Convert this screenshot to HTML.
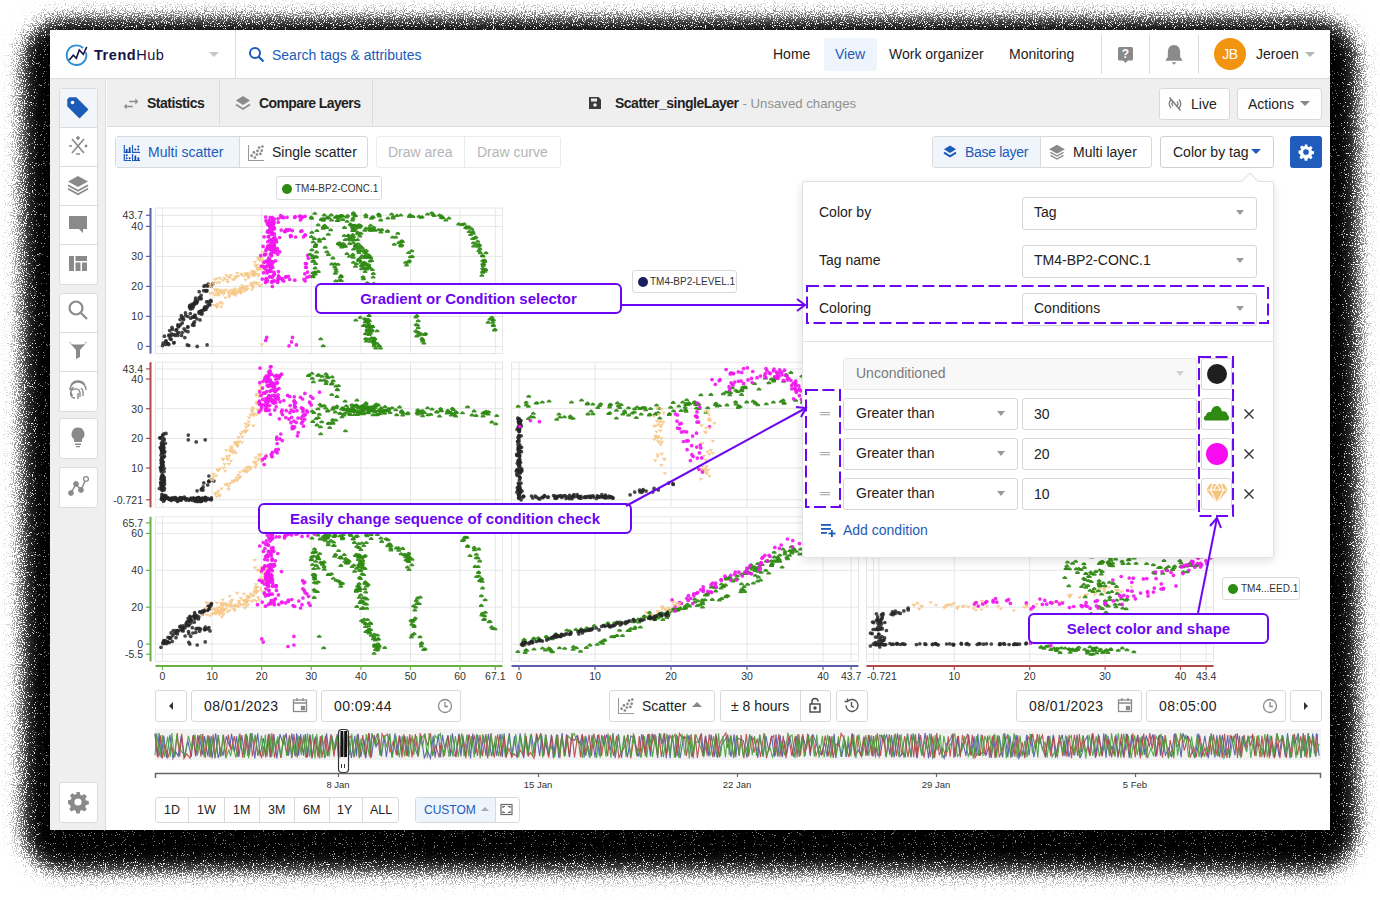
<!DOCTYPE html>
<html><head><meta charset="utf-8">
<style>
*{box-sizing:border-box;margin:0;padding:0}
html,body{width:1380px;height:900px;overflow:hidden;background:#fff;font-family:"Liberation Sans",sans-serif;color:#222}
.a{position:absolute}
#win{position:absolute;left:50px;top:30px;width:1280px;height:800px;background:#fff}
#shd{position:absolute;left:19px;top:13px;width:1342px;height:866px;border-radius:44px;background:rgba(0,0,0,.88);filter:blur(10px)}
.t{position:absolute;white-space:nowrap;line-height:1}
.btn{position:absolute;border:1px solid #d9d9d9;border-radius:3px;background:#fff}
.sb{position:absolute;left:59px;width:39px;border:1px solid #dcdcdc;border-radius:3px;background:#fff}
.sb div{height:39px;border-bottom:1px solid #dcdcdc;position:relative}
.sb div:last-child{border-bottom:none}
.sel{position:absolute;border:1px solid #d6d6d6;border-radius:3px;background:#fff}
.car{position:absolute;width:0;height:0;border-left:4px solid transparent;border-right:4px solid transparent;border-top:5px solid #9a9a9a}
.pur{color:#6c06f2;font-weight:bold}
.abox{position:absolute;border:2px solid #6c06f2;border-radius:6px;background:#fff}
.dash{position:absolute;border:2px dashed #6c06f2}
.chip{position:absolute;border:1px solid #dadada;border-radius:3px;background:#fff;font-size:10px;color:#333}
</style></head><body>
<svg class="a" style="left:0;top:0" width="1380" height="900">
<defs><filter id="dith" x="0" y="0" width="1380" height="900" filterUnits="userSpaceOnUse" color-interpolation-filters="sRGB">
<feGaussianBlur in="SourceGraphic" stdDeviation="12" result="bl"/>
<feTurbulence type="fractalNoise" baseFrequency="0.9" numOctaves="1" seed="3" result="nz"/>
<feColorMatrix in="nz" type="matrix" values="0 0 0 0 0  0 0 0 0 0  0 0 0 0 0  2.4 0 0 0 -0.7" result="na"/>
<feComposite in="bl" in2="na" operator="arithmetic" k1="0" k2="5" k3="-5" k4="0.5" result="th"/>
<feColorMatrix in="th" type="matrix" values="0 0 0 0 0  0 0 0 0 0  0 0 0 0 0  0 0 0 1 0" result="th2"/>
<feComposite in="th2" in2="bl" operator="in"/>
</filter></defs>
<rect x="18" y="14" width="1344" height="862" rx="46" fill="#000" filter="url(#dith)"/>
</svg><div id="win"></div>

<!-- header -->
<div class="a" style="left:50px;top:78px;width:1280px;height:1px;background:#dcdcdc"></div>
<div class="a" style="left:235px;top:30px;width:1px;height:49px;background:#dcdcdc"></div>
<svg class="a" style="left:64px;top:43px" width="26" height="26" viewBox="0 0 26 26">
 <path d="M21.82 9.17A9.8 9.8 0 1 1 19.06 4.92" fill="none" stroke="#2a8fd8" stroke-width="1.9"/>
 <path d="M5.3 17L9.3 12.3L12.3 15.3L15.3 7L19.3 11.3L22.7 4" fill="none" stroke="#15124a" stroke-width="1.6"/>
</svg>
<div class="t" style="left:94px;top:48px;font-size:14.5px;color:#15124a;letter-spacing:0.55px"><b>Trend</b>Hub</div>
<div class="car" style="left:209px;top:52px;border-left-width:5px;border-right-width:5px;border-top-width:5px;border-top-color:#c8c8c8"></div>
<svg class="a" style="left:248px;top:46px" width="18" height="18" viewBox="0 0 18 18"><circle cx="7" cy="7" r="5" fill="none" stroke="#1c5bb8" stroke-width="2"/><path d="M10.5 10.5 L15.5 15.5" stroke="#1c5bb8" stroke-width="2.2"/></svg>
<div class="t" style="left:272px;top:48px;font-size:14px;color:#1c5bb8">Search tags &amp; attributes</div>

<div class="a" style="left:824px;top:38px;width:53px;height:33px;background:#eef4fb;border-radius:3px"></div>
<div class="t" style="left:773px;top:47px;font-size:14px;color:#222">Home</div>
<div class="t" style="left:835px;top:47px;font-size:14px;color:#1c5bb8">View</div>
<div class="t" style="left:889px;top:47px;font-size:14px;color:#222">Work organizer</div>
<div class="t" style="left:1009px;top:47px;font-size:14px;color:#222">Monitoring</div>
<div class="a" style="left:1101px;top:35px;width:1px;height:39px;background:#dcdcdc"></div>
<div class="a" style="left:1149px;top:35px;width:1px;height:39px;background:#dcdcdc"></div>
<div class="a" style="left:1198px;top:35px;width:1px;height:39px;background:#dcdcdc"></div>
<svg class="a" style="left:1117px;top:46px" width="17" height="18" viewBox="0 0 17 18"><path d="M2.5 1h12a1.5 1.5 0 0 1 1.5 1.5v10.5a1.5 1.5 0 0 1-1.5 1.5H11l-2.5 2.5L6 14.5H2.5A1.5 1.5 0 0 1 1 13V2.5A1.5 1.5 0 0 1 2.5 1z" fill="#8a8a8a"/><text x="8.5" y="12.3" font-size="12" font-weight="bold" fill="#fff" text-anchor="middle" font-family='"Liberation Sans",sans-serif'>?</text></svg>
<svg class="a" style="left:1164px;top:44px" width="20" height="22" viewBox="0 0 18 20"><path d="M9 1c-3.5 0-5.6 2.7-5.6 6.3v4.5L1 15.2h16l-2.4-3.4V7.3C14.6 3.7 12.5 1 9 1z" fill="#8a8a8a"/><path d="M6.8 16.6h4.4L9 18.8z" fill="#8a8a8a"/></svg>
<div class="a" style="left:1214px;top:38px;width:32px;height:32px;border-radius:50%;background:#f39410"></div>
<div class="t" style="left:1214px;top:47px;width:32px;text-align:center;font-size:14px;color:#fff;letter-spacing:-0.3px">JB</div>
<div class="t" style="left:1256px;top:47px;font-size:14px;color:#222">Jeroen</div>
<div class="car" style="left:1305px;top:52px;border-left-width:5px;border-right-width:5px;border-top-color:#b5b5b5"></div>

<!-- sidebar -->
<div class="a" style="left:50px;top:79px;width:56px;height:751px;background:#efefef;border-right:1px solid #dcdcdc"></div>
<div class="sb" style="top:88px"><div style="background:#f2f6fb"></div><div></div><div></div><div></div><div></div></div>
<div class="sb" style="top:293px"><div></div><div></div><div></div></div>
<div class="sb" style="top:418px"><div></div></div>
<div class="sb" style="top:467px"><div></div></div>
<div class="sb" style="top:782px"><div></div></div>
<svg class="a" style="left:65px;top:95px" width="26" height="26" viewBox="0 0 26 26"><path d="M3 4.5 L3 11 L14.5 22.5 L22.5 14.5 L11 3 L4.5 3 Z" fill="#1c5bb8" stroke="#1c5bb8" stroke-width="1.5" stroke-linejoin="round"/><circle cx="7.5" cy="7.5" r="1.8" fill="#fff"/></svg>
<svg class="a" style="left:66px;top:134px" width="24" height="24" viewBox="0 0 24 24" stroke="#8a8a8a" stroke-width="1.6" fill="none"><path d="M6 5 L18 19 M18 5 L6 19"/><path d="M12 2v4M10 4h4M3 12h3M19 11l2 2M21 11l-2 2M10 20h4"/></svg>
<svg class="a" style="left:66px;top:173px" width="24" height="24" viewBox="0 0 24 24" fill="#8a8a8a"><path d="M12 3 L22 8.5 L12 14 L2 8.5Z"/><path d="M2 12.2 L12 17.7 L22 12.2" fill="none" stroke="#8a8a8a" stroke-width="1.8"/><path d="M2 15.8 L12 21.3 L22 15.8" fill="none" stroke="#8a8a8a" stroke-width="1.8"/></svg>
<svg class="a" style="left:66px;top:212px" width="24" height="24" viewBox="0 0 24 24" fill="#8a8a8a"><path d="M3 4h18v13h-4v4l-4-4H3z"/></svg>
<svg class="a" style="left:66px;top:251px" width="24" height="24" viewBox="0 0 24 24" fill="#8a8a8a"><path d="M3 5h5v15H3zM9.5 5H21v5H9.5zM9.5 11.5h5V20h-5zM16 11.5h5V20h-5z"/></svg>
<svg class="a" style="left:66px;top:298px" width="24" height="24" viewBox="0 0 24 24" fill="none" stroke="#8a8a8a" stroke-width="2.2"><circle cx="10" cy="10" r="6.5"/><path d="M15 15l6 6"/></svg>
<svg class="a" style="left:66px;top:338px" width="24" height="24" viewBox="0 0 24 24" fill="#8a8a8a"><path d="M3 4h18l-7 8v7l-4 2v-9z"/><ellipse cx="12" cy="5" rx="8" ry="1.6" fill="#fff"/></svg>
<svg class="a" style="left:66px;top:377px" width="24" height="24" viewBox="0 0 24 24" fill="none" stroke="#8a8a8a" stroke-width="1.4"><path d="M5 8a8 8 0 0 1 14 0M4 13a8 8 0 0 1 16 0M6.5 19a6 6 0 0 1 1-9M9 21a4 4 0 0 1 0-9 4 4 0 0 1 5 4v4M12 22v-6M17 19v-4a5 5 0 0 0-2-4"/></svg>
<svg class="a" style="left:66px;top:425px" width="24" height="24" viewBox="0 0 24 24" fill="#8a8a8a"><path d="M12 2.5a6.5 6.5 0 0 0-4 11.6V17h8v-2.9A6.5 6.5 0 0 0 12 2.5z"/><path d="M9 18.5h6v1.5H9zM10 21h4v1.2h-4z"/></svg>
<svg class="a" style="left:66px;top:474px" width="24" height="24" viewBox="0 0 24 24" fill="#8a8a8a" stroke="#8a8a8a"><circle cx="5" cy="19" r="2.4"/><circle cx="10" cy="10" r="2.4"/><circle cx="15" cy="16" r="2.4"/><circle cx="20" cy="5" r="2.4" fill="#fff" stroke-width="1.3"/><path d="M5 19L10 10L15 16L19 7" fill="none" stroke-width="1.5"/></svg>
<svg class="a" style="left:66px;top:790px" width="24" height="24" viewBox="0 0 24 24"><path fill="#8a8a8a" d="M10.3 2h3.4l.5 2.8 1.9.8 2.3-1.6 2.4 2.4-1.6 2.3.8 1.9 2.8.5v3.4l-2.8.5-.8 1.9 1.6 2.3-2.4 2.4-2.3-1.6-1.9.8-.5 2.8h-3.4l-.5-2.8-1.9-.8-2.3 1.6-2.4-2.4 1.6-2.3-.8-1.9L2 13.7v-3.4l2.8-.5.8-1.9L4 5.6 6.4 3.2l2.3 1.6 1.9-.8z"/><circle cx="12" cy="12" r="3.6" fill="#fff"/></svg>

<!-- tab bar -->
<div class="a" style="left:107px;top:79px;width:1223px;height:48px;background:#efefef;border-bottom:1px solid #dcdcdc"></div>
<div class="a" style="left:219px;top:79px;width:1px;height:48px;background:#dcdcdc"></div>
<div class="a" style="left:372px;top:79px;width:1px;height:48px;background:#dcdcdc"></div>
<svg class="a" style="left:122px;top:96px" width="18" height="15" viewBox="0 0 18 15"><path d="M7.2 5.5H14M10.7 10.5H4" stroke="#8a8a8a" stroke-width="1.6"/><path d="M16.3 5.5L13.3 2.4V8.6ZM1.9 10.5L4.6 7.4V13.6Z" fill="#8a8a8a"/></svg>
<div class="t" style="left:147px;top:96px;font-size:14px;font-weight:bold;color:#222;letter-spacing:-0.5px">Statistics</div>
<svg class="a" style="left:235px;top:95px" width="16" height="17" viewBox="0 0 16 17"><path d="M8 1l7 4.5-7 4.5-7-4.5z" fill="#8a8a8a"/><path d="M1 9.5l7 4.5 7-4.5" fill="none" stroke="#8a8a8a" stroke-width="1.6"/></svg>
<div class="t" style="left:259px;top:96px;font-size:14px;font-weight:bold;color:#222;letter-spacing:-0.6px">Compare Layers</div>
<svg class="a" style="left:588px;top:96px" width="14" height="14" viewBox="0 0 14 14"><path d="M1 1h9.5L13 3.5V13H1z" fill="#3a3a3a"/><rect x="3" y="2.5" width="6" height="3" fill="#efefef"/><circle cx="7" cy="9" r="1.8" fill="#efefef"/></svg>
<div class="t" style="left:615px;top:96px;font-size:14px;color:#222"><b style="letter-spacing:-0.5px">Scatter_singleLayer</b> <span style="color:#8f8f8f;font-size:13.2px">- Unsaved changes</span></div>
<div class="btn" style="left:1159px;top:88px;width:71px;height:32px"></div>
<svg class="a" style="left:1167px;top:96px" width="16" height="16" viewBox="0 0 16 16" fill="none" stroke="#777" stroke-width="1.3"><path d="M4 3.5a6 6 0 0 0 0 8.5M12 3.5a6 6 0 0 1 0 8.5M6 5.5a3 3 0 0 0 0 4.5M10 5.5a3 3 0 0 1 0 4.5M2.5 1.5l11 13"/></svg>
<div class="t" style="left:1191px;top:97px;font-size:14px;color:#222">Live</div>
<div class="btn" style="left:1237px;top:88px;width:85px;height:32px"></div>
<div class="t" style="left:1248px;top:97px;font-size:14px;color:#222">Actions</div>
<div class="car" style="left:1300px;top:101px;border-left-width:5px;border-right-width:5px;border-top-color:#888"></div>

<!-- toolbar -->
<div class="btn" style="left:115px;top:136px;width:253px;height:32px"></div>
<div class="a" style="left:116px;top:137px;width:124px;height:30px;background:#f0f5fb;border-right:1px solid #d9d9d9"></div>
<svg class="a" style="left:123px;top:144px" width="18" height="18" viewBox="0 0 18 18"><path d="M1.3 1V8.3H8M9.5 1V8.3H17M1.3 10V16.5H8M9.5 10V16.5H17" fill="none" stroke="#1c5bb8" stroke-width="1.2"/><g fill="#0d44ad"><rect x="2.8" y="5" width="1.7" height="3.3"/><rect x="5.8" y="3.3" width="1.7" height="5"/><circle cx="12.3" cy="5.5" r="1"/><circle cx="15.3" cy="5.5" r="1"/><circle cx="15.3" cy="2.5" r="1"/><circle cx="3.7" cy="11.3" r="1"/><circle cx="3.7" cy="14.2" r="1"/><circle cx="6.6" cy="14.2" r="1"/><rect x="11.5" y="11.5" width="1.7" height="5"/><rect x="14.5" y="13.3" width="1.7" height="3.2"/></g></svg>
<div class="t" style="left:148px;top:145px;font-size:14px;color:#1c5bb8">Multi scatter</div>
<svg class="a" style="left:248px;top:144px" width="18" height="18" viewBox="0 0 18 18"><path d="M0.5 1V16.5H16" fill="none" stroke="#9a9a9a" stroke-width="1.1"/><g fill="#8a8a8a"><circle cx="3.6" cy="11.7" r="1.35"/><circle cx="6.9" cy="13.5" r="1.35"/><circle cx="5.9" cy="8.4" r="1.35"/><circle cx="8.9" cy="10.5" r="1.35"/><circle cx="9.5" cy="6.9" r="1.35"/><circle cx="12.4" cy="9.9" r="1.35"/><circle cx="11.1" cy="3.6" r="1.35"/><circle cx="13.7" cy="6.7" r="1.35"/><circle cx="14.4" cy="2.5" r="1.35"/></g></svg>
<div class="t" style="left:272px;top:145px;font-size:14px;color:#222">Single scatter</div>
<div class="btn" style="left:376px;top:136px;width:185px;height:32px;border-color:#ebebeb"></div>
<div class="a" style="left:464px;top:137px;width:1px;height:30px;background:#ebebeb"></div>
<div class="t" style="left:388px;top:145px;font-size:14px;color:#b5b5b5">Draw area</div>
<div class="t" style="left:477px;top:145px;font-size:14px;color:#b5b5b5">Draw curve</div>

<div class="btn" style="left:932px;top:136px;width:220px;height:32px"></div>
<div class="a" style="left:933px;top:137px;width:108px;height:30px;background:#f0f5fb;border-right:1px solid #d9d9d9"></div>
<svg class="a" style="left:942px;top:144px" width="16" height="16" viewBox="0 0 16 16"><path d="M8 1.5l6 3.8-6 3.8-6-3.8z" fill="#1c5bb8"/><path d="M2 8.6l6 3.8 6-3.8" fill="none" stroke="#1c5bb8" stroke-width="2"/></svg>
<div class="t" style="left:965px;top:145px;font-size:14px;color:#1c5bb8;letter-spacing:-0.3px">Base layer</div>
<svg class="a" style="left:1049px;top:144px" width="16" height="17" viewBox="0 0 16 17" fill="none" stroke="#8a8a8a" stroke-width="1.4"><path d="M8 1.5l6.5 3.8L8 9 1.5 5.3z" fill="#8a8a8a"/><path d="M1.5 8.3L8 12l6.5-3.7M1.5 11.3L8 15l6.5-3.7"/></svg>
<div class="t" style="left:1073px;top:145px;font-size:14px;color:#222">Multi layer</div>
<div class="btn" style="left:1160px;top:136px;width:114px;height:32px;border-color:#cfcfcf"></div>
<div class="t" style="left:1173px;top:145px;font-size:14px;color:#222">Color by tag</div>
<div class="car" style="left:1251px;top:149px;border-left-width:5px;border-right-width:5px;border-top-color:#1c5bb8"></div>
<div class="a" style="left:1290px;top:136px;width:32px;height:32px;background:#1f5cbc;border-radius:3px"></div>
<svg class="a" style="left:1297px;top:143px" width="18" height="18" viewBox="0 0 24 24"><path fill="#fff" d="M10.3 2h3.4l.5 2.8 1.9.8 2.3-1.6 2.4 2.4-1.6 2.3.8 1.9 2.8.5v3.4l-2.8.5-.8 1.9 1.6 2.3-2.4 2.4-2.3-1.6-1.9.8-.5 2.8h-3.4l-.5-2.8-1.9-.8-2.3 1.6-2.4-2.4 1.6-2.3-.8-1.9L2 13.7v-3.4l2.8-.5.8-1.9L4 5.6 6.4 3.2l2.3 1.6 1.9-.8z"/><circle cx="12" cy="12" r="3.8" fill="#1f5cbc"/></svg>

<!-- plots -->
<div class="chip" style="left:276px;top:176px;width:106px;height:24px"><span class="a" style="left:5px;top:7px;width:10px;height:10px;border-radius:50%;background:#2f8a12"></span><span class="t" style="left:18px;top:7px">TM4-BP2-CONC.1</span></div>
<div class="chip" style="left:632px;top:270px;width:105px;height:23px"><span class="a" style="left:5px;top:6px;width:10px;height:10px;border-radius:50%;background:#1b1f5e"></span><span class="t" style="left:17px;top:6px">TM4-BP2-LEVEL.1</span></div>
<div class="chip" style="left:1222px;top:577px;width:78px;height:23px"><span class="a" style="left:5px;top:6px;width:10px;height:10px;border-radius:50%;background:#2f8a12"></span><span class="t" style="left:18px;top:6px">TM4...EED.1</span></div>
<svg class="a" style="left:0;top:0" width="1380" height="900" viewBox="0 0 1380 900">
<rect x="155.5" y="208" width="347.0" height="145.60000000000002" fill="none" stroke="#e6e6e6" stroke-width="1"/>
<g stroke="#e6e6e6" stroke-width="1"><line x1="162.5" y1="208" x2="162.5" y2="353.6"/><line x1="212.1" y1="208" x2="212.1" y2="353.6"/><line x1="261.7" y1="208" x2="261.7" y2="353.6"/><line x1="311.3" y1="208" x2="311.3" y2="353.6"/><line x1="360.9" y1="208" x2="360.9" y2="353.6"/><line x1="410.5" y1="208" x2="410.5" y2="353.6"/><line x1="460.1" y1="208" x2="460.1" y2="353.6"/><line x1="495.3" y1="208" x2="495.3" y2="353.6"/><line x1="155.5" y1="346.4" x2="502.5" y2="346.4"/><line x1="155.5" y1="316.4" x2="502.5" y2="316.4"/><line x1="155.5" y1="286.4" x2="502.5" y2="286.4"/><line x1="155.5" y1="256.4" x2="502.5" y2="256.4"/><line x1="155.5" y1="226.4" x2="502.5" y2="226.4"/><line x1="155.5" y1="215.3" x2="502.5" y2="215.3"/></g>
<rect x="155.5" y="362.2" width="347.0" height="145.2" fill="none" stroke="#e6e6e6" stroke-width="1"/>
<g stroke="#e6e6e6" stroke-width="1"><line x1="162.5" y1="362.2" x2="162.5" y2="507.4"/><line x1="212.1" y1="362.2" x2="212.1" y2="507.4"/><line x1="261.7" y1="362.2" x2="261.7" y2="507.4"/><line x1="311.3" y1="362.2" x2="311.3" y2="507.4"/><line x1="360.9" y1="362.2" x2="360.9" y2="507.4"/><line x1="410.5" y1="362.2" x2="410.5" y2="507.4"/><line x1="460.1" y1="362.2" x2="460.1" y2="507.4"/><line x1="495.3" y1="362.2" x2="495.3" y2="507.4"/><line x1="155.5" y1="499.8" x2="502.5" y2="499.8"/><line x1="155.5" y1="468.0" x2="502.5" y2="468.0"/><line x1="155.5" y1="438.4" x2="502.5" y2="438.4"/><line x1="155.5" y1="408.7" x2="502.5" y2="408.7"/><line x1="155.5" y1="379.0" x2="502.5" y2="379.0"/><line x1="155.5" y1="368.9" x2="502.5" y2="368.9"/></g>
<rect x="511.5" y="362.2" width="347.0" height="145.2" fill="none" stroke="#e6e6e6" stroke-width="1"/>
<g stroke="#e6e6e6" stroke-width="1"><line x1="519.0" y1="362.2" x2="519.0" y2="507.4"/><line x1="595.0" y1="362.2" x2="595.0" y2="507.4"/><line x1="671.0" y1="362.2" x2="671.0" y2="507.4"/><line x1="747.0" y1="362.2" x2="747.0" y2="507.4"/><line x1="823.0" y1="362.2" x2="823.0" y2="507.4"/><line x1="851.1" y1="362.2" x2="851.1" y2="507.4"/><line x1="511.5" y1="499.8" x2="858.5" y2="499.8"/><line x1="511.5" y1="468.0" x2="858.5" y2="468.0"/><line x1="511.5" y1="438.4" x2="858.5" y2="438.4"/><line x1="511.5" y1="408.7" x2="858.5" y2="408.7"/><line x1="511.5" y1="379.0" x2="858.5" y2="379.0"/><line x1="511.5" y1="368.9" x2="858.5" y2="368.9"/></g>
<rect x="155.5" y="516.8" width="347.0" height="144.60000000000002" fill="none" stroke="#e6e6e6" stroke-width="1"/>
<g stroke="#e6e6e6" stroke-width="1"><line x1="162.5" y1="516.8" x2="162.5" y2="661.4"/><line x1="212.1" y1="516.8" x2="212.1" y2="661.4"/><line x1="261.7" y1="516.8" x2="261.7" y2="661.4"/><line x1="311.3" y1="516.8" x2="311.3" y2="661.4"/><line x1="360.9" y1="516.8" x2="360.9" y2="661.4"/><line x1="410.5" y1="516.8" x2="410.5" y2="661.4"/><line x1="460.1" y1="516.8" x2="460.1" y2="661.4"/><line x1="495.3" y1="516.8" x2="495.3" y2="661.4"/><line x1="155.5" y1="654.2" x2="502.5" y2="654.2"/><line x1="155.5" y1="644.1" x2="502.5" y2="644.1"/><line x1="155.5" y1="607.2" x2="502.5" y2="607.2"/><line x1="155.5" y1="570.3" x2="502.5" y2="570.3"/><line x1="155.5" y1="533.4" x2="502.5" y2="533.4"/><line x1="155.5" y1="522.9" x2="502.5" y2="522.9"/></g>
<rect x="511.5" y="516.8" width="347.0" height="144.60000000000002" fill="none" stroke="#e6e6e6" stroke-width="1"/>
<g stroke="#e6e6e6" stroke-width="1"><line x1="519.0" y1="516.8" x2="519.0" y2="661.4"/><line x1="595.0" y1="516.8" x2="595.0" y2="661.4"/><line x1="671.0" y1="516.8" x2="671.0" y2="661.4"/><line x1="747.0" y1="516.8" x2="747.0" y2="661.4"/><line x1="823.0" y1="516.8" x2="823.0" y2="661.4"/><line x1="851.1" y1="516.8" x2="851.1" y2="661.4"/><line x1="511.5" y1="654.2" x2="858.5" y2="654.2"/><line x1="511.5" y1="644.1" x2="858.5" y2="644.1"/><line x1="511.5" y1="607.2" x2="858.5" y2="607.2"/><line x1="511.5" y1="570.3" x2="858.5" y2="570.3"/><line x1="511.5" y1="533.4" x2="858.5" y2="533.4"/><line x1="511.5" y1="522.9" x2="858.5" y2="522.9"/></g>
<rect x="866.5" y="516.8" width="347.0" height="144.60000000000002" fill="none" stroke="#e6e6e6" stroke-width="1"/>
<g stroke="#e6e6e6" stroke-width="1"><line x1="873.5" y1="516.8" x2="873.5" y2="661.4"/><line x1="878.9" y1="516.8" x2="878.9" y2="661.4"/><line x1="954.3" y1="516.8" x2="954.3" y2="661.4"/><line x1="1029.7" y1="516.8" x2="1029.7" y2="661.4"/><line x1="1105.1" y1="516.8" x2="1105.1" y2="661.4"/><line x1="1180.5" y1="516.8" x2="1180.5" y2="661.4"/><line x1="1206.1" y1="516.8" x2="1206.1" y2="661.4"/><line x1="866.5" y1="654.2" x2="1213.5" y2="654.2"/><line x1="866.5" y1="644.1" x2="1213.5" y2="644.1"/><line x1="866.5" y1="607.2" x2="1213.5" y2="607.2"/><line x1="866.5" y1="570.3" x2="1213.5" y2="570.3"/><line x1="866.5" y1="533.4" x2="1213.5" y2="533.4"/><line x1="866.5" y1="522.9" x2="1213.5" y2="522.9"/></g>
<g font-family='"Liberation Sans", sans-serif' font-size="10.5" fill="#333">
<line x1="150.5" y1="208" x2="150.5" y2="353.6" stroke="#5b5fa6" stroke-width="2"/><line x1="146" y1="346.4" x2="150" y2="346.4" stroke="#5b5fa6" stroke-width="1.2"/><text x="143" y="350.2" text-anchor="end">0</text><line x1="146" y1="316.4" x2="150" y2="316.4" stroke="#5b5fa6" stroke-width="1.2"/><text x="143" y="320.2" text-anchor="end">10</text><line x1="146" y1="286.4" x2="150" y2="286.4" stroke="#5b5fa6" stroke-width="1.2"/><text x="143" y="290.2" text-anchor="end">20</text><line x1="146" y1="256.4" x2="150" y2="256.4" stroke="#5b5fa6" stroke-width="1.2"/><text x="143" y="260.2" text-anchor="end">30</text><line x1="146" y1="226.4" x2="150" y2="226.4" stroke="#5b5fa6" stroke-width="1.2"/><text x="143" y="230.2" text-anchor="end">40</text><line x1="146" y1="215.3" x2="150" y2="215.3" stroke="#5b5fa6" stroke-width="1.2"/><text x="143" y="219.1" text-anchor="end">43.7</text>
<line x1="150.5" y1="362.2" x2="150.5" y2="507.4" stroke="#b0484a" stroke-width="2"/><line x1="146" y1="499.8" x2="150" y2="499.8" stroke="#b0484a" stroke-width="1.2"/><text x="143" y="503.6" text-anchor="end">-0.721</text><line x1="146" y1="468.0" x2="150" y2="468.0" stroke="#b0484a" stroke-width="1.2"/><text x="143" y="471.8" text-anchor="end">10</text><line x1="146" y1="438.4" x2="150" y2="438.4" stroke="#b0484a" stroke-width="1.2"/><text x="143" y="442.2" text-anchor="end">20</text><line x1="146" y1="408.7" x2="150" y2="408.7" stroke="#b0484a" stroke-width="1.2"/><text x="143" y="412.5" text-anchor="end">30</text><line x1="146" y1="379.0" x2="150" y2="379.0" stroke="#b0484a" stroke-width="1.2"/><text x="143" y="382.8" text-anchor="end">40</text><line x1="146" y1="368.9" x2="150" y2="368.9" stroke="#b0484a" stroke-width="1.2"/><text x="143" y="372.7" text-anchor="end">43.4</text>
<line x1="150.5" y1="516.8" x2="150.5" y2="661.4" stroke="#6bb045" stroke-width="2"/><line x1="146" y1="654.2" x2="150" y2="654.2" stroke="#6bb045" stroke-width="1.2"/><text x="143" y="658.0" text-anchor="end">-5.5</text><line x1="146" y1="644.1" x2="150" y2="644.1" stroke="#6bb045" stroke-width="1.2"/><text x="143" y="647.9" text-anchor="end">0</text><line x1="146" y1="607.2" x2="150" y2="607.2" stroke="#6bb045" stroke-width="1.2"/><text x="143" y="611.0" text-anchor="end">20</text><line x1="146" y1="570.3" x2="150" y2="570.3" stroke="#6bb045" stroke-width="1.2"/><text x="143" y="574.1" text-anchor="end">40</text><line x1="146" y1="533.4" x2="150" y2="533.4" stroke="#6bb045" stroke-width="1.2"/><text x="143" y="537.2" text-anchor="end">60</text><line x1="146" y1="522.9" x2="150" y2="522.9" stroke="#6bb045" stroke-width="1.2"/><text x="143" y="526.7" text-anchor="end">65.7</text>
<line x1="155.5" y1="666" x2="502.5" y2="666" stroke="#6bb045" stroke-width="2"/><line x1="162.5" y1="666" x2="162.5" y2="670" stroke="#6bb045" stroke-width="1.2"/><text x="162.5" y="680" text-anchor="middle">0</text><line x1="212.1" y1="666" x2="212.1" y2="670" stroke="#6bb045" stroke-width="1.2"/><text x="212.1" y="680" text-anchor="middle">10</text><line x1="261.7" y1="666" x2="261.7" y2="670" stroke="#6bb045" stroke-width="1.2"/><text x="261.7" y="680" text-anchor="middle">20</text><line x1="311.3" y1="666" x2="311.3" y2="670" stroke="#6bb045" stroke-width="1.2"/><text x="311.3" y="680" text-anchor="middle">30</text><line x1="360.9" y1="666" x2="360.9" y2="670" stroke="#6bb045" stroke-width="1.2"/><text x="360.9" y="680" text-anchor="middle">40</text><line x1="410.5" y1="666" x2="410.5" y2="670" stroke="#6bb045" stroke-width="1.2"/><text x="410.5" y="680" text-anchor="middle">50</text><line x1="460.1" y1="666" x2="460.1" y2="670" stroke="#6bb045" stroke-width="1.2"/><text x="460.1" y="680" text-anchor="middle">60</text><line x1="495.3" y1="666" x2="495.3" y2="670" stroke="#6bb045" stroke-width="1.2"/><text x="495.3" y="680" text-anchor="middle">67.1</text>
<line x1="511.5" y1="666" x2="858.5" y2="666" stroke="#5b5fa6" stroke-width="2"/><line x1="519.0" y1="666" x2="519.0" y2="670" stroke="#5b5fa6" stroke-width="1.2"/><text x="519.0" y="680" text-anchor="middle">0</text><line x1="595.0" y1="666" x2="595.0" y2="670" stroke="#5b5fa6" stroke-width="1.2"/><text x="595.0" y="680" text-anchor="middle">10</text><line x1="671.0" y1="666" x2="671.0" y2="670" stroke="#5b5fa6" stroke-width="1.2"/><text x="671.0" y="680" text-anchor="middle">20</text><line x1="747.0" y1="666" x2="747.0" y2="670" stroke="#5b5fa6" stroke-width="1.2"/><text x="747.0" y="680" text-anchor="middle">30</text><line x1="823.0" y1="666" x2="823.0" y2="670" stroke="#5b5fa6" stroke-width="1.2"/><text x="823.0" y="680" text-anchor="middle">40</text><line x1="851.1" y1="666" x2="851.1" y2="670" stroke="#5b5fa6" stroke-width="1.2"/><text x="851.1" y="680" text-anchor="middle">43.7</text>
<line x1="866.5" y1="666" x2="1213.5" y2="666" stroke="#b0484a" stroke-width="2"/><line x1="873.5" y1="666" x2="873.5" y2="670" stroke="#b0484a" stroke-width="1.2"/><text x="867.0" y="680">-0.721</text><line x1="954.3" y1="666" x2="954.3" y2="670" stroke="#b0484a" stroke-width="1.2"/><text x="954.3" y="680" text-anchor="middle">10</text><line x1="1029.7" y1="666" x2="1029.7" y2="670" stroke="#b0484a" stroke-width="1.2"/><text x="1029.7" y="680" text-anchor="middle">20</text><line x1="1105.1" y1="666" x2="1105.1" y2="670" stroke="#b0484a" stroke-width="1.2"/><text x="1105.1" y="680" text-anchor="middle">30</text><line x1="1180.5" y1="666" x2="1180.5" y2="670" stroke="#b0484a" stroke-width="1.2"/><text x="1180.5" y="680" text-anchor="middle">40</text><line x1="1206.1" y1="666" x2="1206.1" y2="670" stroke="#b0484a" stroke-width="1.2"/><text x="1206.1" y="680" text-anchor="middle">43.4</text>
</g>
<g fill="#262626" fill-opacity="0.85"><circle cx="180.1" cy="319.6" r="1.85"/><circle cx="182.1" cy="317.2" r="1.85"/><circle cx="168.8" cy="335.0" r="1.85"/><circle cx="201.1" cy="295.4" r="1.85"/><circle cx="167.7" cy="343.7" r="1.85"/><circle cx="168.9" cy="344.4" r="1.85"/><circle cx="192.6" cy="306.0" r="1.85"/><circle cx="162.6" cy="345.6" r="1.85"/><circle cx="171.5" cy="333.9" r="1.85"/><circle cx="181.3" cy="315.7" r="1.85"/><circle cx="185.7" cy="315.6" r="1.85"/><circle cx="192.4" cy="304.2" r="1.85"/><circle cx="212.8" cy="283.7" r="1.85"/><circle cx="195.4" cy="300.4" r="1.85"/><circle cx="178.8" cy="326.7" r="1.85"/><circle cx="182.3" cy="322.9" r="1.85"/><circle cx="207.7" cy="286.1" r="1.85"/><circle cx="174.0" cy="334.5" r="1.85"/><circle cx="208.2" cy="284.1" r="1.85"/><circle cx="192.4" cy="308.4" r="1.85"/><circle cx="164.4" cy="336.2" r="1.85"/><circle cx="199.2" cy="297.6" r="1.85"/><circle cx="170.1" cy="338.7" r="1.85"/><circle cx="169.1" cy="336.0" r="1.85"/><circle cx="171.4" cy="335.5" r="1.85"/><circle cx="194.2" cy="304.4" r="1.85"/><circle cx="172.0" cy="327.4" r="1.85"/><circle cx="199.2" cy="291.7" r="1.85"/><circle cx="169.7" cy="330.6" r="1.85"/><circle cx="197.0" cy="302.2" r="1.85"/><circle cx="172.4" cy="329.4" r="1.85"/><circle cx="177.8" cy="324.9" r="1.85"/><circle cx="165.6" cy="341.5" r="1.85"/><circle cx="189.5" cy="306.9" r="1.85"/><circle cx="205.4" cy="285.7" r="1.85"/><circle cx="203.7" cy="290.7" r="1.85"/><circle cx="205.8" cy="290.6" r="1.85"/><circle cx="171.2" cy="339.4" r="1.85"/><circle cx="175.2" cy="335.4" r="1.85"/><circle cx="190.2" cy="307.9" r="1.85"/><circle cx="165.6" cy="344.3" r="1.85"/><circle cx="195.6" cy="298.1" r="1.85"/><circle cx="190.3" cy="307.6" r="1.85"/><circle cx="197.6" cy="300.4" r="1.85"/><circle cx="190.3" cy="313.5" r="1.85"/><circle cx="176.7" cy="329.5" r="1.85"/><circle cx="163.1" cy="343.1" r="1.85"/><circle cx="166.1" cy="340.8" r="1.85"/><circle cx="190.6" cy="308.9" r="1.85"/><circle cx="207.0" cy="290.6" r="1.85"/><circle cx="194.2" cy="303.4" r="1.85"/><circle cx="167.9" cy="343.7" r="1.85"/><circle cx="195.9" cy="302.3" r="1.85"/><circle cx="189.7" cy="305.9" r="1.85"/><circle cx="178.2" cy="326.3" r="1.85"/><circle cx="187.9" cy="316.5" r="1.85"/><circle cx="196.3" cy="303.5" r="1.85"/><circle cx="204.0" cy="286.2" r="1.85"/><circle cx="206.2" cy="291.2" r="1.85"/><circle cx="201.2" cy="298.7" r="1.85"/><circle cx="190.3" cy="305.2" r="1.85"/><circle cx="193.4" cy="306.6" r="1.85"/><circle cx="211.3" cy="286.1" r="1.85"/><circle cx="180.6" cy="324.7" r="1.85"/><circle cx="183.6" cy="319.4" r="1.85"/><circle cx="200.2" cy="298.6" r="1.85"/><circle cx="185.5" cy="312.9" r="1.85"/><circle cx="183.0" cy="318.2" r="1.85"/><circle cx="176.0" cy="330.2" r="1.85"/><circle cx="194.8" cy="302.5" r="1.85"/><circle cx="207.4" cy="305.9" r="1.85"/><circle cx="206.6" cy="301.9" r="1.85"/><circle cx="177.4" cy="333.2" r="1.85"/><circle cx="209.9" cy="305.0" r="1.85"/><circle cx="195.2" cy="317.0" r="1.85"/><circle cx="193.9" cy="325.3" r="1.85"/><circle cx="202.0" cy="313.0" r="1.85"/><circle cx="177.8" cy="335.5" r="1.85"/><circle cx="178.8" cy="332.6" r="1.85"/><circle cx="190.7" cy="318.2" r="1.85"/><circle cx="210.7" cy="300.4" r="1.85"/><circle cx="174.0" cy="342.5" r="1.85"/><circle cx="199.2" cy="313.3" r="1.85"/><circle cx="204.8" cy="308.8" r="1.85"/><circle cx="193.7" cy="323.0" r="1.85"/><circle cx="182.2" cy="332.6" r="1.85"/><circle cx="195.1" cy="315.1" r="1.85"/><circle cx="200.0" cy="319.9" r="1.85"/><circle cx="200.2" cy="311.4" r="1.85"/><circle cx="181.5" cy="335.5" r="1.85"/><circle cx="201.4" cy="310.8" r="1.85"/><circle cx="185.5" cy="330.8" r="1.85"/><circle cx="196.9" cy="318.8" r="1.85"/><circle cx="204.5" cy="309.4" r="1.85"/><circle cx="209.3" cy="303.9" r="1.85"/><circle cx="187.7" cy="326.9" r="1.85"/><circle cx="184.1" cy="328.8" r="1.85"/><circle cx="205.9" cy="309.5" r="1.85"/><circle cx="199.0" cy="311.8" r="1.85"/><circle cx="203.2" cy="310.4" r="1.85"/><circle cx="184.8" cy="337.6" r="1.85"/><circle cx="208.2" cy="301.7" r="1.85"/><circle cx="188.0" cy="331.7" r="1.85"/><circle cx="187.9" cy="327.1" r="1.85"/><circle cx="194.5" cy="321.9" r="1.85"/><circle cx="173.8" cy="342.9" r="1.85"/><circle cx="204.9" cy="306.9" r="1.85"/><circle cx="204.3" cy="308.2" r="1.85"/><circle cx="192.4" cy="324.9" r="1.85"/><circle cx="201.7" cy="314.2" r="1.85"/><circle cx="211.1" cy="301.3" r="1.85"/><circle cx="192.6" cy="317.2" r="1.85"/><circle cx="194.5" cy="316.2" r="1.85"/><circle cx="194.0" cy="317.1" r="1.85"/><circle cx="206.9" cy="307.5" r="1.85"/><circle cx="187.3" cy="344.9" r="1.85"/><circle cx="188.8" cy="345.5" r="1.85"/><circle cx="197.2" cy="346.4" r="1.85"/><circle cx="207.1" cy="344.9" r="1.85"/></g>
<g fill="#f6c98a" fill-opacity="0.92"><path d="M261.3 262.4q1.05-.8 2.1.3q1.05-1.1 2.1-.3l-2.1 3z"/><path d="M252.8 270.9q1.05-.8 2.1.3q1.05-1.1 2.1-.3l-2.1 3z"/><path d="M245.8 274.3q1.05-.8 2.1.3q1.05-1.1 2.1-.3l-2.1 3z"/><path d="M256.2 256.6q1.05-.8 2.1.3q1.05-1.1 2.1-.3l-2.1 3z"/><path d="M253.9 265.2q1.05-.8 2.1.3q1.05-1.1 2.1-.3l-2.1 3z"/><path d="M259.0 268.3q1.05-.8 2.1.3q1.05-1.1 2.1-.3l-2.1 3z"/><path d="M246.1 276.1q1.05-.8 2.1.3q1.05-1.1 2.1-.3l-2.1 3z"/><path d="M227.2 276.2q1.05-.8 2.1.3q1.05-1.1 2.1-.3l-2.1 3z"/><path d="M243.7 278.8q1.05-.8 2.1.3q1.05-1.1 2.1-.3l-2.1 3z"/><path d="M243.6 273.0q1.05-.8 2.1.3q1.05-1.1 2.1-.3l-2.1 3z"/><path d="M256.1 273.2q1.05-.8 2.1.3q1.05-1.1 2.1-.3l-2.1 3z"/><path d="M258.7 265.0q1.05-.8 2.1.3q1.05-1.1 2.1-.3l-2.1 3z"/><path d="M224.8 278.9q1.05-.8 2.1.3q1.05-1.1 2.1-.3l-2.1 3z"/><path d="M234.1 276.0q1.05-.8 2.1.3q1.05-1.1 2.1-.3l-2.1 3z"/><path d="M258.7 265.7q1.05-.8 2.1.3q1.05-1.1 2.1-.3l-2.1 3z"/><path d="M228.6 274.3q1.05-.8 2.1.3q1.05-1.1 2.1-.3l-2.1 3z"/><path d="M239.2 273.1q1.05-.8 2.1.3q1.05-1.1 2.1-.3l-2.1 3z"/><path d="M249.5 272.6q1.05-.8 2.1.3q1.05-1.1 2.1-.3l-2.1 3z"/><path d="M252.5 274.0q1.05-.8 2.1.3q1.05-1.1 2.1-.3l-2.1 3z"/><path d="M253.2 264.6q1.05-.8 2.1.3q1.05-1.1 2.1-.3l-2.1 3z"/><path d="M225.8 280.9q1.05-.8 2.1.3q1.05-1.1 2.1-.3l-2.1 3z"/><path d="M257.3 257.8q1.05-.8 2.1.3q1.05-1.1 2.1-.3l-2.1 3z"/><path d="M260.7 251.2q1.05-.8 2.1.3q1.05-1.1 2.1-.3l-2.1 3z"/><path d="M259.6 259.1q1.05-.8 2.1.3q1.05-1.1 2.1-.3l-2.1 3z"/><path d="M256.0 266.7q1.05-.8 2.1.3q1.05-1.1 2.1-.3l-2.1 3z"/><path d="M252.8 261.0q1.05-.8 2.1.3q1.05-1.1 2.1-.3l-2.1 3z"/><path d="M215.0 277.5q1.05-.8 2.1.3q1.05-1.1 2.1-.3l-2.1 3z"/><path d="M212.6 278.6q1.05-.8 2.1.3q1.05-1.1 2.1-.3l-2.1 3z"/><path d="M259.9 259.3q1.05-.8 2.1.3q1.05-1.1 2.1-.3l-2.1 3z"/><path d="M246.8 276.5q1.05-.8 2.1.3q1.05-1.1 2.1-.3l-2.1 3z"/><path d="M256.0 268.8q1.05-.8 2.1.3q1.05-1.1 2.1-.3l-2.1 3z"/><path d="M221.0 279.2q1.05-.8 2.1.3q1.05-1.1 2.1-.3l-2.1 3z"/><path d="M245.8 274.4q1.05-.8 2.1.3q1.05-1.1 2.1-.3l-2.1 3z"/><path d="M224.4 274.3q1.05-.8 2.1.3q1.05-1.1 2.1-.3l-2.1 3z"/><path d="M260.7 255.9q1.05-.8 2.1.3q1.05-1.1 2.1-.3l-2.1 3z"/><path d="M217.5 281.4q1.05-.8 2.1.3q1.05-1.1 2.1-.3l-2.1 3z"/><path d="M255.0 263.8q1.05-.8 2.1.3q1.05-1.1 2.1-.3l-2.1 3z"/><path d="M243.7 272.7q1.05-.8 2.1.3q1.05-1.1 2.1-.3l-2.1 3z"/><path d="M209.2 285.6q1.05-.8 2.1.3q1.05-1.1 2.1-.3l-2.1 3z"/><path d="M217.9 277.2q1.05-.8 2.1.3q1.05-1.1 2.1-.3l-2.1 3z"/><path d="M239.6 273.7q1.05-.8 2.1.3q1.05-1.1 2.1-.3l-2.1 3z"/><path d="M253.4 273.5q1.05-.8 2.1.3q1.05-1.1 2.1-.3l-2.1 3z"/><path d="M255.4 268.2q1.05-.8 2.1.3q1.05-1.1 2.1-.3l-2.1 3z"/><path d="M251.5 270.6q1.05-.8 2.1.3q1.05-1.1 2.1-.3l-2.1 3z"/><path d="M251.8 274.4q1.05-.8 2.1.3q1.05-1.1 2.1-.3l-2.1 3z"/><path d="M232.1 278.4q1.05-.8 2.1.3q1.05-1.1 2.1-.3l-2.1 3z"/><path d="M258.0 267.3q1.05-.8 2.1.3q1.05-1.1 2.1-.3l-2.1 3z"/><path d="M261.6 262.0q1.05-.8 2.1.3q1.05-1.1 2.1-.3l-2.1 3z"/><path d="M256.9 267.9q1.05-.8 2.1.3q1.05-1.1 2.1-.3l-2.1 3z"/><path d="M258.5 267.0q1.05-.8 2.1.3q1.05-1.1 2.1-.3l-2.1 3z"/><path d="M246.6 274.2q1.05-.8 2.1.3q1.05-1.1 2.1-.3l-2.1 3z"/><path d="M253.4 272.8q1.05-.8 2.1.3q1.05-1.1 2.1-.3l-2.1 3z"/><path d="M257.5 259.2q1.05-.8 2.1.3q1.05-1.1 2.1-.3l-2.1 3z"/><path d="M251.9 271.9q1.05-.8 2.1.3q1.05-1.1 2.1-.3l-2.1 3z"/><path d="M242.0 275.0q1.05-.8 2.1.3q1.05-1.1 2.1-.3l-2.1 3z"/><path d="M256.4 274.7q1.05-.8 2.1.3q1.05-1.1 2.1-.3l-2.1 3z"/><path d="M207.9 283.8q1.05-.8 2.1.3q1.05-1.1 2.1-.3l-2.1 3z"/><path d="M227.0 276.2q1.05-.8 2.1.3q1.05-1.1 2.1-.3l-2.1 3z"/><path d="M222.6 277.2q1.05-.8 2.1.3q1.05-1.1 2.1-.3l-2.1 3z"/><path d="M230.5 278.2q1.05-.8 2.1.3q1.05-1.1 2.1-.3l-2.1 3z"/><path d="M250.5 274.5q1.05-.8 2.1.3q1.05-1.1 2.1-.3l-2.1 3z"/><path d="M256.0 258.1q1.05-.8 2.1.3q1.05-1.1 2.1-.3l-2.1 3z"/><path d="M211.2 282.4q1.05-.8 2.1.3q1.05-1.1 2.1-.3l-2.1 3z"/><path d="M214.7 281.6q1.05-.8 2.1.3q1.05-1.1 2.1-.3l-2.1 3z"/><path d="M245.7 272.1q1.05-.8 2.1.3q1.05-1.1 2.1-.3l-2.1 3z"/><path d="M261.3 271.2q1.05-.8 2.1.3q1.05-1.1 2.1-.3l-2.1 3z"/><path d="M236.2 275.2q1.05-.8 2.1.3q1.05-1.1 2.1-.3l-2.1 3z"/><path d="M235.0 272.3q1.05-.8 2.1.3q1.05-1.1 2.1-.3l-2.1 3z"/><path d="M249.8 270.2q1.05-.8 2.1.3q1.05-1.1 2.1-.3l-2.1 3z"/><path d="M232.9 275.8q1.05-.8 2.1.3q1.05-1.1 2.1-.3l-2.1 3z"/><path d="M214.9 288.6q1.05-.8 2.1.3q1.05-1.1 2.1-.3l-2.1 3z"/><path d="M233.4 294.3q1.05-.8 2.1.3q1.05-1.1 2.1-.3l-2.1 3z"/><path d="M219.6 291.5q1.05-.8 2.1.3q1.05-1.1 2.1-.3l-2.1 3z"/><path d="M216.3 292.3q1.05-.8 2.1.3q1.05-1.1 2.1-.3l-2.1 3z"/><path d="M235.3 291.3q1.05-.8 2.1.3q1.05-1.1 2.1-.3l-2.1 3z"/><path d="M239.4 291.4q1.05-.8 2.1.3q1.05-1.1 2.1-.3l-2.1 3z"/><path d="M238.2 291.7q1.05-.8 2.1.3q1.05-1.1 2.1-.3l-2.1 3z"/><path d="M241.4 287.2q1.05-.8 2.1.3q1.05-1.1 2.1-.3l-2.1 3z"/><path d="M232.5 290.9q1.05-.8 2.1.3q1.05-1.1 2.1-.3l-2.1 3z"/><path d="M237.5 288.9q1.05-.8 2.1.3q1.05-1.1 2.1-.3l-2.1 3z"/><path d="M238.7 287.4q1.05-.8 2.1.3q1.05-1.1 2.1-.3l-2.1 3z"/><path d="M232.9 287.8q1.05-.8 2.1.3q1.05-1.1 2.1-.3l-2.1 3z"/><path d="M242.7 290.2q1.05-.8 2.1.3q1.05-1.1 2.1-.3l-2.1 3z"/><path d="M243.8 285.8q1.05-.8 2.1.3q1.05-1.1 2.1-.3l-2.1 3z"/><path d="M251.1 286.3q1.05-.8 2.1.3q1.05-1.1 2.1-.3l-2.1 3z"/><path d="M227.3 289.6q1.05-.8 2.1.3q1.05-1.1 2.1-.3l-2.1 3z"/><path d="M233.2 291.0q1.05-.8 2.1.3q1.05-1.1 2.1-.3l-2.1 3z"/><path d="M245.3 285.0q1.05-.8 2.1.3q1.05-1.1 2.1-.3l-2.1 3z"/><path d="M259.1 284.2q1.05-.8 2.1.3q1.05-1.1 2.1-.3l-2.1 3z"/><path d="M214.2 290.6q1.05-.8 2.1.3q1.05-1.1 2.1-.3l-2.1 3z"/><path d="M230.0 292.6q1.05-.8 2.1.3q1.05-1.1 2.1-.3l-2.1 3z"/><path d="M236.9 289.7q1.05-.8 2.1.3q1.05-1.1 2.1-.3l-2.1 3z"/><path d="M237.3 288.4q1.05-.8 2.1.3q1.05-1.1 2.1-.3l-2.1 3z"/><path d="M226.6 292.2q1.05-.8 2.1.3q1.05-1.1 2.1-.3l-2.1 3z"/><path d="M227.0 295.7q1.05-.8 2.1.3q1.05-1.1 2.1-.3l-2.1 3z"/><path d="M217.7 289.0q1.05-.8 2.1.3q1.05-1.1 2.1-.3l-2.1 3z"/><path d="M239.4 289.8q1.05-.8 2.1.3q1.05-1.1 2.1-.3l-2.1 3z"/><path d="M230.7 288.8q1.05-.8 2.1.3q1.05-1.1 2.1-.3l-2.1 3z"/><path d="M223.3 296.8q1.05-.8 2.1.3q1.05-1.1 2.1-.3l-2.1 3z"/><path d="M221.5 293.1q1.05-.8 2.1.3q1.05-1.1 2.1-.3l-2.1 3z"/><path d="M248.8 282.6q1.05-.8 2.1.3q1.05-1.1 2.1-.3l-2.1 3z"/><path d="M215.7 291.9q1.05-.8 2.1.3q1.05-1.1 2.1-.3l-2.1 3z"/><path d="M211.0 292.1q1.05-.8 2.1.3q1.05-1.1 2.1-.3l-2.1 3z"/><path d="M240.1 284.5q1.05-.8 2.1.3q1.05-1.1 2.1-.3l-2.1 3z"/><path d="M214.8 288.7q1.05-.8 2.1.3q1.05-1.1 2.1-.3l-2.1 3z"/><path d="M212.5 288.6q1.05-.8 2.1.3q1.05-1.1 2.1-.3l-2.1 3z"/><path d="M241.7 286.4q1.05-.8 2.1.3q1.05-1.1 2.1-.3l-2.1 3z"/><path d="M227.4 294.0q1.05-.8 2.1.3q1.05-1.1 2.1-.3l-2.1 3z"/><path d="M214.9 293.7q1.05-.8 2.1.3q1.05-1.1 2.1-.3l-2.1 3z"/><path d="M257.4 284.9q1.05-.8 2.1.3q1.05-1.1 2.1-.3l-2.1 3z"/><path d="M232.3 293.2q1.05-.8 2.1.3q1.05-1.1 2.1-.3l-2.1 3z"/><path d="M220.2 289.7q1.05-.8 2.1.3q1.05-1.1 2.1-.3l-2.1 3z"/><path d="M250.3 282.1q1.05-.8 2.1.3q1.05-1.1 2.1-.3l-2.1 3z"/><path d="M226.3 291.0q1.05-.8 2.1.3q1.05-1.1 2.1-.3l-2.1 3z"/><path d="M230.6 290.3q1.05-.8 2.1.3q1.05-1.1 2.1-.3l-2.1 3z"/><path d="M240.8 286.4q1.05-.8 2.1.3q1.05-1.1 2.1-.3l-2.1 3z"/><path d="M238.9 286.9q1.05-.8 2.1.3q1.05-1.1 2.1-.3l-2.1 3z"/><path d="M249.6 283.7q1.05-.8 2.1.3q1.05-1.1 2.1-.3l-2.1 3z"/><path d="M231.0 291.1q1.05-.8 2.1.3q1.05-1.1 2.1-.3l-2.1 3z"/><path d="M250.1 285.2q1.05-.8 2.1.3q1.05-1.1 2.1-.3l-2.1 3z"/><path d="M208.2 292.2q1.05-.8 2.1.3q1.05-1.1 2.1-.3l-2.1 3z"/><path d="M218.4 289.9q1.05-.8 2.1.3q1.05-1.1 2.1-.3l-2.1 3z"/><path d="M254.1 282.5q1.05-.8 2.1.3q1.05-1.1 2.1-.3l-2.1 3z"/><path d="M217.1 294.1q1.05-.8 2.1.3q1.05-1.1 2.1-.3l-2.1 3z"/><path d="M223.2 288.9q1.05-.8 2.1.3q1.05-1.1 2.1-.3l-2.1 3z"/><path d="M235.2 292.1q1.05-.8 2.1.3q1.05-1.1 2.1-.3l-2.1 3z"/><path d="M231.2 292.8q1.05-.8 2.1.3q1.05-1.1 2.1-.3l-2.1 3z"/><path d="M229.2 291.5q1.05-.8 2.1.3q1.05-1.1 2.1-.3l-2.1 3z"/><path d="M245.3 288.0q1.05-.8 2.1.3q1.05-1.1 2.1-.3l-2.1 3z"/><path d="M244.6 288.1q1.05-.8 2.1.3q1.05-1.1 2.1-.3l-2.1 3z"/><path d="M249.8 288.6q1.05-.8 2.1.3q1.05-1.1 2.1-.3l-2.1 3z"/><path d="M250.6 284.4q1.05-.8 2.1.3q1.05-1.1 2.1-.3l-2.1 3z"/><path d="M243.7 288.8q1.05-.8 2.1.3q1.05-1.1 2.1-.3l-2.1 3z"/><path d="M233.7 289.8q1.05-.8 2.1.3q1.05-1.1 2.1-.3l-2.1 3z"/><path d="M253.0 281.4q1.05-.8 2.1.3q1.05-1.1 2.1-.3l-2.1 3z"/><path d="M218.0 291.1q1.05-.8 2.1.3q1.05-1.1 2.1-.3l-2.1 3z"/><path d="M255.8 282.0q1.05-.8 2.1.3q1.05-1.1 2.1-.3l-2.1 3z"/><path d="M212.6 293.9q1.05-.8 2.1.3q1.05-1.1 2.1-.3l-2.1 3z"/><path d="M222.0 290.9q1.05-.8 2.1.3q1.05-1.1 2.1-.3l-2.1 3z"/><path d="M238.2 289.5q1.05-.8 2.1.3q1.05-1.1 2.1-.3l-2.1 3z"/><path d="M214.4 304.1q1.05-.8 2.1.3q1.05-1.1 2.1-.3l-2.1 3z"/><path d="M214.9 305.9q1.05-.8 2.1.3q1.05-1.1 2.1-.3l-2.1 3z"/><path d="M215.9 302.9q1.05-.8 2.1.3q1.05-1.1 2.1-.3l-2.1 3z"/><path d="M214.7 305.7q1.05-.8 2.1.3q1.05-1.1 2.1-.3l-2.1 3z"/><path d="M220.2 302.6q1.05-.8 2.1.3q1.05-1.1 2.1-.3l-2.1 3z"/><path d="M219.1 305.8q1.05-.8 2.1.3q1.05-1.1 2.1-.3l-2.1 3z"/><path d="M212.0 304.0q1.05-.8 2.1.3q1.05-1.1 2.1-.3l-2.1 3z"/><path d="M218.6 301.2q1.05-.8 2.1.3q1.05-1.1 2.1-.3l-2.1 3z"/><path d="M259.6 343.5q1.05-.8 2.1.3q1.05-1.1 2.1-.3l-2.1 3z"/></g>
<g fill="#f218f0" fill-opacity="0.92"><circle cx="272.7" cy="221.1" r="1.85"/><circle cx="267.5" cy="247.9" r="1.85"/><circle cx="270.1" cy="217.7" r="1.85"/><circle cx="265.6" cy="282.4" r="1.85"/><circle cx="270.0" cy="232.0" r="1.85"/><circle cx="271.3" cy="271.5" r="1.85"/><circle cx="272.8" cy="267.5" r="1.85"/><circle cx="273.6" cy="240.5" r="1.85"/><circle cx="274.2" cy="244.8" r="1.85"/><circle cx="272.3" cy="286.4" r="1.85"/><circle cx="273.7" cy="227.2" r="1.85"/><circle cx="274.4" cy="233.9" r="1.85"/><circle cx="275.1" cy="252.4" r="1.85"/><circle cx="269.1" cy="222.5" r="1.85"/><circle cx="271.6" cy="255.6" r="1.85"/><circle cx="272.4" cy="225.4" r="1.85"/><circle cx="274.3" cy="245.1" r="1.85"/><circle cx="269.4" cy="261.7" r="1.85"/><circle cx="264.1" cy="262.2" r="1.85"/><circle cx="269.4" cy="259.9" r="1.85"/><circle cx="260.7" cy="255.7" r="1.85"/><circle cx="270.9" cy="227.6" r="1.85"/><circle cx="269.4" cy="259.2" r="1.85"/><circle cx="270.0" cy="245.3" r="1.85"/><circle cx="272.4" cy="217.6" r="1.85"/><circle cx="269.8" cy="240.1" r="1.85"/><circle cx="269.5" cy="245.4" r="1.85"/><circle cx="268.7" cy="258.1" r="1.85"/><circle cx="269.2" cy="271.5" r="1.85"/><circle cx="266.0" cy="220.7" r="1.85"/><circle cx="270.7" cy="261.7" r="1.85"/><circle cx="274.1" cy="272.4" r="1.85"/><circle cx="272.5" cy="233.9" r="1.85"/><circle cx="269.9" cy="227.3" r="1.85"/><circle cx="270.8" cy="267.3" r="1.85"/><circle cx="277.7" cy="254.2" r="1.85"/><circle cx="264.8" cy="254.8" r="1.85"/><circle cx="272.6" cy="233.2" r="1.85"/><circle cx="269.4" cy="260.9" r="1.85"/><circle cx="266.9" cy="261.2" r="1.85"/><circle cx="268.4" cy="232.2" r="1.85"/><circle cx="267.5" cy="280.7" r="1.85"/><circle cx="273.6" cy="238.4" r="1.85"/><circle cx="272.1" cy="252.3" r="1.85"/><circle cx="274.1" cy="239.6" r="1.85"/><circle cx="268.1" cy="222.9" r="1.85"/><circle cx="274.1" cy="247.4" r="1.85"/><circle cx="265.7" cy="217.1" r="1.85"/><circle cx="274.1" cy="222.9" r="1.85"/><circle cx="271.2" cy="240.4" r="1.85"/><circle cx="264.6" cy="268.2" r="1.85"/><circle cx="273.1" cy="261.9" r="1.85"/><circle cx="277.4" cy="248.7" r="1.85"/><circle cx="273.3" cy="275.5" r="1.85"/><circle cx="267.8" cy="246.1" r="1.85"/><circle cx="278.2" cy="222.2" r="1.85"/><circle cx="275.6" cy="240.5" r="1.85"/><circle cx="272.1" cy="264.7" r="1.85"/><circle cx="271.7" cy="245.7" r="1.85"/><circle cx="271.3" cy="246.2" r="1.85"/><circle cx="278.4" cy="271.6" r="1.85"/><circle cx="268.8" cy="236.4" r="1.85"/><circle cx="267.3" cy="232.0" r="1.85"/><circle cx="273.6" cy="229.0" r="1.85"/><circle cx="272.6" cy="250.4" r="1.85"/><circle cx="272.6" cy="243.0" r="1.85"/><circle cx="266.8" cy="266.3" r="1.85"/><circle cx="276.1" cy="239.5" r="1.85"/><circle cx="274.4" cy="274.2" r="1.85"/><circle cx="265.9" cy="250.4" r="1.85"/><circle cx="271.2" cy="239.9" r="1.85"/><circle cx="277.4" cy="250.7" r="1.85"/><circle cx="267.9" cy="224.6" r="1.85"/><circle cx="274.3" cy="246.4" r="1.85"/><circle cx="263.1" cy="246.4" r="1.85"/><circle cx="275.6" cy="260.8" r="1.85"/><circle cx="270.8" cy="225.1" r="1.85"/><circle cx="269.3" cy="230.4" r="1.85"/><circle cx="272.2" cy="277.3" r="1.85"/><circle cx="269.4" cy="249.1" r="1.85"/><circle cx="268.2" cy="236.7" r="1.85"/><circle cx="267.7" cy="261.9" r="1.85"/><circle cx="277.5" cy="281.3" r="1.85"/><circle cx="273.4" cy="239.9" r="1.85"/><circle cx="272.2" cy="226.1" r="1.85"/><circle cx="271.9" cy="245.6" r="1.85"/><circle cx="274.4" cy="228.3" r="1.85"/><circle cx="274.3" cy="219.2" r="1.85"/><circle cx="269.3" cy="262.6" r="1.85"/><circle cx="272.9" cy="224.6" r="1.85"/><circle cx="269.0" cy="259.6" r="1.85"/><circle cx="271.8" cy="282.2" r="1.85"/><circle cx="279.7" cy="251.8" r="1.85"/><circle cx="271.2" cy="250.0" r="1.85"/><circle cx="273.4" cy="221.8" r="1.85"/><circle cx="268.7" cy="225.2" r="1.85"/><circle cx="278.4" cy="275.8" r="1.85"/><circle cx="268.0" cy="270.6" r="1.85"/><circle cx="273.0" cy="223.7" r="1.85"/><circle cx="267.9" cy="230.8" r="1.85"/><circle cx="270.8" cy="225.6" r="1.85"/><circle cx="274.6" cy="237.2" r="1.85"/><circle cx="269.9" cy="276.5" r="1.85"/><circle cx="271.7" cy="234.4" r="1.85"/><circle cx="266.4" cy="270.2" r="1.85"/><circle cx="266.0" cy="261.4" r="1.85"/><circle cx="271.0" cy="242.1" r="1.85"/><circle cx="269.9" cy="222.1" r="1.85"/><circle cx="279.7" cy="237.5" r="1.85"/><circle cx="265.7" cy="254.1" r="1.85"/><circle cx="266.8" cy="281.2" r="1.85"/><circle cx="270.3" cy="267.2" r="1.85"/><circle cx="269.9" cy="265.5" r="1.85"/><circle cx="267.6" cy="264.9" r="1.85"/><circle cx="272.3" cy="222.9" r="1.85"/><circle cx="270.3" cy="254.0" r="1.85"/><circle cx="269.1" cy="220.7" r="1.85"/><circle cx="268.4" cy="247.2" r="1.85"/><circle cx="271.7" cy="241.1" r="1.85"/><circle cx="273.6" cy="251.5" r="1.85"/><circle cx="272.6" cy="248.6" r="1.85"/><circle cx="273.7" cy="228.7" r="1.85"/><circle cx="263.8" cy="266.4" r="1.85"/><circle cx="271.8" cy="231.6" r="1.85"/><circle cx="271.2" cy="248.1" r="1.85"/><circle cx="275.3" cy="249.2" r="1.85"/><circle cx="264.1" cy="236.8" r="1.85"/><circle cx="270.0" cy="271.0" r="1.85"/><circle cx="266.7" cy="249.1" r="1.85"/><circle cx="270.2" cy="266.3" r="1.85"/><circle cx="267.2" cy="223.1" r="1.85"/><circle cx="271.3" cy="229.0" r="1.85"/><circle cx="273.0" cy="262.0" r="1.85"/><circle cx="267.8" cy="241.7" r="1.85"/><circle cx="276.5" cy="241.9" r="1.85"/><circle cx="269.5" cy="270.8" r="1.85"/><circle cx="274.0" cy="239.5" r="1.85"/><circle cx="266.3" cy="278.4" r="1.85"/><circle cx="270.7" cy="268.9" r="1.85"/><circle cx="271.1" cy="255.6" r="1.85"/><circle cx="263.6" cy="272.8" r="1.85"/><circle cx="269.7" cy="277.0" r="1.85"/><circle cx="267.0" cy="272.9" r="1.85"/><circle cx="271.1" cy="254.5" r="1.85"/><circle cx="272.1" cy="219.1" r="1.85"/><circle cx="269.6" cy="265.6" r="1.85"/><circle cx="261.4" cy="266.1" r="1.85"/><circle cx="264.6" cy="254.5" r="1.85"/><circle cx="274.3" cy="241.7" r="1.85"/><circle cx="273.9" cy="238.9" r="1.85"/><circle cx="301.2" cy="218.6" r="1.85"/><circle cx="302.7" cy="217.1" r="1.85"/><circle cx="300.6" cy="216.0" r="1.85"/><circle cx="282.6" cy="216.8" r="1.85"/><circle cx="295.2" cy="216.7" r="1.85"/><circle cx="281.4" cy="217.2" r="1.85"/><circle cx="294.7" cy="217.5" r="1.85"/><circle cx="305.1" cy="216.3" r="1.85"/><circle cx="278.1" cy="218.5" r="1.85"/><circle cx="287.0" cy="217.3" r="1.85"/><circle cx="280.6" cy="215.7" r="1.85"/><circle cx="299.4" cy="216.3" r="1.85"/><circle cx="283.7" cy="217.8" r="1.85"/><circle cx="300.4" cy="220.0" r="1.85"/><circle cx="281.2" cy="230.1" r="1.85"/><circle cx="285.1" cy="231.4" r="1.85"/><circle cx="301.9" cy="230.9" r="1.85"/><circle cx="292.3" cy="230.6" r="1.85"/><circle cx="285.2" cy="231.0" r="1.85"/><circle cx="287.9" cy="230.4" r="1.85"/><circle cx="284.8" cy="231.6" r="1.85"/><circle cx="300.8" cy="231.3" r="1.85"/><circle cx="286.5" cy="229.5" r="1.85"/><circle cx="289.6" cy="229.7" r="1.85"/><circle cx="290.5" cy="235.5" r="1.85"/><circle cx="291.2" cy="236.2" r="1.85"/><circle cx="295.7" cy="237.0" r="1.85"/><circle cx="305.0" cy="235.0" r="1.85"/><circle cx="305.4" cy="235.0" r="1.85"/><circle cx="303.6" cy="236.8" r="1.85"/><circle cx="290.6" cy="236.6" r="1.85"/><circle cx="282.2" cy="278.7" r="1.85"/><circle cx="279.1" cy="277.1" r="1.85"/><circle cx="278.9" cy="277.8" r="1.85"/><circle cx="288.3" cy="276.3" r="1.85"/><circle cx="277.9" cy="278.6" r="1.85"/><circle cx="286.1" cy="276.9" r="1.85"/><circle cx="289.7" cy="279.4" r="1.85"/><circle cx="262.3" cy="279.1" r="1.85"/><circle cx="265.9" cy="279.8" r="1.85"/><circle cx="282.5" cy="280.1" r="1.85"/><circle cx="278.7" cy="279.0" r="1.85"/><circle cx="283.7" cy="281.1" r="1.85"/><circle cx="274.6" cy="280.8" r="1.85"/><circle cx="277.7" cy="282.5" r="1.85"/><circle cx="272.0" cy="281.6" r="1.85"/><circle cx="294.8" cy="280.2" r="1.85"/><circle cx="279.8" cy="278.3" r="1.85"/><circle cx="304.0" cy="279.3" r="1.85"/><circle cx="306.9" cy="277.4" r="1.85"/><circle cx="285.5" cy="277.0" r="1.85"/><circle cx="309.3" cy="276.4" r="1.85"/><circle cx="273.1" cy="281.1" r="1.85"/><circle cx="305.1" cy="280.9" r="1.85"/><circle cx="304.8" cy="273.8" r="1.85"/><circle cx="305.8" cy="267.2" r="1.85"/><circle cx="308.3" cy="258.3" r="1.85"/><circle cx="307.5" cy="272.1" r="1.85"/><circle cx="306.4" cy="263.7" r="1.85"/><circle cx="307.6" cy="255.3" r="1.85"/><circle cx="305.4" cy="263.5" r="1.85"/><circle cx="306.2" cy="267.5" r="1.85"/><circle cx="265.7" cy="340.4" r="1.85"/><circle cx="266.7" cy="337.4" r="1.85"/><circle cx="289.0" cy="345.8" r="1.85"/><circle cx="291.5" cy="341.9" r="1.85"/><circle cx="292.5" cy="337.4" r="1.85"/><circle cx="296.4" cy="344.9" r="1.85"/></g>
<g fill="#2f8a12" fill-opacity="0.92"><path d="M439.3 217.4a1.2 1.2 0 0 1 .6-2.1a1.5 1.5 0 0 1 2.8 0a1.2 1.2 0 0 1 .6 2.1z"/><path d="M389.6 215.6a1.2 1.2 0 0 1 .6-2.1a1.5 1.5 0 0 1 2.8 0a1.2 1.2 0 0 1 .6 2.1z"/><path d="M340.6 217.4a1.2 1.2 0 0 1 .6-2.1a1.5 1.5 0 0 1 2.8 0a1.2 1.2 0 0 1 .6 2.1z"/><path d="M334.1 218.4a1.2 1.2 0 0 1 .6-2.1a1.5 1.5 0 0 1 2.8 0a1.2 1.2 0 0 1 .6 2.1z"/><path d="M420.1 218.3a1.2 1.2 0 0 1 .6-2.1a1.5 1.5 0 0 1 2.8 0a1.2 1.2 0 0 1 .6 2.1z"/><path d="M351.1 219.5a1.2 1.2 0 0 1 .6-2.1a1.5 1.5 0 0 1 2.8 0a1.2 1.2 0 0 1 .6 2.1z"/><path d="M322.3 216.4a1.2 1.2 0 0 1 .6-2.1a1.5 1.5 0 0 1 2.8 0a1.2 1.2 0 0 1 .6 2.1z"/><path d="M474.4 245.7a1.2 1.2 0 0 1 .6-2.1a1.5 1.5 0 0 1 2.8 0a1.2 1.2 0 0 1 .6 2.1z"/><path d="M370.6 218.4a1.2 1.2 0 0 1 .6-2.1a1.5 1.5 0 0 1 2.8 0a1.2 1.2 0 0 1 .6 2.1z"/><path d="M391.2 219.6a1.2 1.2 0 0 1 .6-2.1a1.5 1.5 0 0 1 2.8 0a1.2 1.2 0 0 1 .6 2.1z"/><path d="M476.9 252.2a1.2 1.2 0 0 1 .6-2.1a1.5 1.5 0 0 1 2.8 0a1.2 1.2 0 0 1 .6 2.1z"/><path d="M468.5 236.0a1.2 1.2 0 0 1 .6-2.1a1.5 1.5 0 0 1 2.8 0a1.2 1.2 0 0 1 .6 2.1z"/><path d="M477.6 246.8a1.2 1.2 0 0 1 .6-2.1a1.5 1.5 0 0 1 2.8 0a1.2 1.2 0 0 1 .6 2.1z"/><path d="M467.1 228.4a1.2 1.2 0 0 1 .6-2.1a1.5 1.5 0 0 1 2.8 0a1.2 1.2 0 0 1 .6 2.1z"/><path d="M309.6 219.8a1.2 1.2 0 0 1 .6-2.1a1.5 1.5 0 0 1 2.8 0a1.2 1.2 0 0 1 .6 2.1z"/><path d="M481.8 270.8a1.2 1.2 0 0 1 .6-2.1a1.5 1.5 0 0 1 2.8 0a1.2 1.2 0 0 1 .6 2.1z"/><path d="M410.9 217.9a1.2 1.2 0 0 1 .6-2.1a1.5 1.5 0 0 1 2.8 0a1.2 1.2 0 0 1 .6 2.1z"/><path d="M481.2 266.9a1.2 1.2 0 0 1 .6-2.1a1.5 1.5 0 0 1 2.8 0a1.2 1.2 0 0 1 .6 2.1z"/><path d="M471.2 234.8a1.2 1.2 0 0 1 .6-2.1a1.5 1.5 0 0 1 2.8 0a1.2 1.2 0 0 1 .6 2.1z"/><path d="M378.7 221.4a1.2 1.2 0 0 1 .6-2.1a1.5 1.5 0 0 1 2.8 0a1.2 1.2 0 0 1 .6 2.1z"/><path d="M338.5 217.4a1.2 1.2 0 0 1 .6-2.1a1.5 1.5 0 0 1 2.8 0a1.2 1.2 0 0 1 .6 2.1z"/><path d="M439.5 219.0a1.2 1.2 0 0 1 .6-2.1a1.5 1.5 0 0 1 2.8 0a1.2 1.2 0 0 1 .6 2.1z"/><path d="M385.9 219.5a1.2 1.2 0 0 1 .6-2.1a1.5 1.5 0 0 1 2.8 0a1.2 1.2 0 0 1 .6 2.1z"/><path d="M377.1 216.0a1.2 1.2 0 0 1 .6-2.1a1.5 1.5 0 0 1 2.8 0a1.2 1.2 0 0 1 .6 2.1z"/><path d="M475.7 242.7a1.2 1.2 0 0 1 .6-2.1a1.5 1.5 0 0 1 2.8 0a1.2 1.2 0 0 1 .6 2.1z"/><path d="M467.1 233.1a1.2 1.2 0 0 1 .6-2.1a1.5 1.5 0 0 1 2.8 0a1.2 1.2 0 0 1 .6 2.1z"/><path d="M345.6 217.0a1.2 1.2 0 0 1 .6-2.1a1.5 1.5 0 0 1 2.8 0a1.2 1.2 0 0 1 .6 2.1z"/><path d="M480.7 265.3a1.2 1.2 0 0 1 .6-2.1a1.5 1.5 0 0 1 2.8 0a1.2 1.2 0 0 1 .6 2.1z"/><path d="M338.6 217.4a1.2 1.2 0 0 1 .6-2.1a1.5 1.5 0 0 1 2.8 0a1.2 1.2 0 0 1 .6 2.1z"/><path d="M447.0 219.5a1.2 1.2 0 0 1 .6-2.1a1.5 1.5 0 0 1 2.8 0a1.2 1.2 0 0 1 .6 2.1z"/><path d="M376.6 215.6a1.2 1.2 0 0 1 .6-2.1a1.5 1.5 0 0 1 2.8 0a1.2 1.2 0 0 1 .6 2.1z"/><path d="M398.8 216.5a1.2 1.2 0 0 1 .6-2.1a1.5 1.5 0 0 1 2.8 0a1.2 1.2 0 0 1 .6 2.1z"/><path d="M326.1 218.6a1.2 1.2 0 0 1 .6-2.1a1.5 1.5 0 0 1 2.8 0a1.2 1.2 0 0 1 .6 2.1z"/><path d="M329.2 216.4a1.2 1.2 0 0 1 .6-2.1a1.5 1.5 0 0 1 2.8 0a1.2 1.2 0 0 1 .6 2.1z"/><path d="M480.8 273.7a1.2 1.2 0 0 1 .6-2.1a1.5 1.5 0 0 1 2.8 0a1.2 1.2 0 0 1 .6 2.1z"/><path d="M425.5 215.5a1.2 1.2 0 0 1 .6-2.1a1.5 1.5 0 0 1 2.8 0a1.2 1.2 0 0 1 .6 2.1z"/><path d="M408.0 216.3a1.2 1.2 0 0 1 .6-2.1a1.5 1.5 0 0 1 2.8 0a1.2 1.2 0 0 1 .6 2.1z"/><path d="M463.6 229.1a1.2 1.2 0 0 1 .6-2.1a1.5 1.5 0 0 1 2.8 0a1.2 1.2 0 0 1 .6 2.1z"/><path d="M483.8 270.9a1.2 1.2 0 0 1 .6-2.1a1.5 1.5 0 0 1 2.8 0a1.2 1.2 0 0 1 .6 2.1z"/><path d="M419.0 218.7a1.2 1.2 0 0 1 .6-2.1a1.5 1.5 0 0 1 2.8 0a1.2 1.2 0 0 1 .6 2.1z"/><path d="M353.2 217.3a1.2 1.2 0 0 1 .6-2.1a1.5 1.5 0 0 1 2.8 0a1.2 1.2 0 0 1 .6 2.1z"/><path d="M339.6 217.1a1.2 1.2 0 0 1 .6-2.1a1.5 1.5 0 0 1 2.8 0a1.2 1.2 0 0 1 .6 2.1z"/><path d="M472.8 239.4a1.2 1.2 0 0 1 .6-2.1a1.5 1.5 0 0 1 2.8 0a1.2 1.2 0 0 1 .6 2.1z"/><path d="M312.8 214.8a1.2 1.2 0 0 1 .6-2.1a1.5 1.5 0 0 1 2.8 0a1.2 1.2 0 0 1 .6 2.1z"/><path d="M309.3 218.6a1.2 1.2 0 0 1 .6-2.1a1.5 1.5 0 0 1 2.8 0a1.2 1.2 0 0 1 .6 2.1z"/><path d="M475.8 247.8a1.2 1.2 0 0 1 .6-2.1a1.5 1.5 0 0 1 2.8 0a1.2 1.2 0 0 1 .6 2.1z"/><path d="M477.9 250.0a1.2 1.2 0 0 1 .6-2.1a1.5 1.5 0 0 1 2.8 0a1.2 1.2 0 0 1 .6 2.1z"/><path d="M483.0 272.7a1.2 1.2 0 0 1 .6-2.1a1.5 1.5 0 0 1 2.8 0a1.2 1.2 0 0 1 .6 2.1z"/><path d="M407.4 217.9a1.2 1.2 0 0 1 .6-2.1a1.5 1.5 0 0 1 2.8 0a1.2 1.2 0 0 1 .6 2.1z"/><path d="M482.9 263.1a1.2 1.2 0 0 1 .6-2.1a1.5 1.5 0 0 1 2.8 0a1.2 1.2 0 0 1 .6 2.1z"/><path d="M363.8 216.4a1.2 1.2 0 0 1 .6-2.1a1.5 1.5 0 0 1 2.8 0a1.2 1.2 0 0 1 .6 2.1z"/><path d="M465.0 229.5a1.2 1.2 0 0 1 .6-2.1a1.5 1.5 0 0 1 2.8 0a1.2 1.2 0 0 1 .6 2.1z"/><path d="M459.8 225.9a1.2 1.2 0 0 1 .6-2.1a1.5 1.5 0 0 1 2.8 0a1.2 1.2 0 0 1 .6 2.1z"/><path d="M480.8 262.1a1.2 1.2 0 0 1 .6-2.1a1.5 1.5 0 0 1 2.8 0a1.2 1.2 0 0 1 .6 2.1z"/><path d="M391.2 218.0a1.2 1.2 0 0 1 .6-2.1a1.5 1.5 0 0 1 2.8 0a1.2 1.2 0 0 1 .6 2.1z"/><path d="M470.7 240.0a1.2 1.2 0 0 1 .6-2.1a1.5 1.5 0 0 1 2.8 0a1.2 1.2 0 0 1 .6 2.1z"/><path d="M353.3 216.9a1.2 1.2 0 0 1 .6-2.1a1.5 1.5 0 0 1 2.8 0a1.2 1.2 0 0 1 .6 2.1z"/><path d="M394.9 216.9a1.2 1.2 0 0 1 .6-2.1a1.5 1.5 0 0 1 2.8 0a1.2 1.2 0 0 1 .6 2.1z"/><path d="M431.2 216.0a1.2 1.2 0 0 1 .6-2.1a1.5 1.5 0 0 1 2.8 0a1.2 1.2 0 0 1 .6 2.1z"/><path d="M440.8 218.9a1.2 1.2 0 0 1 .6-2.1a1.5 1.5 0 0 1 2.8 0a1.2 1.2 0 0 1 .6 2.1z"/><path d="M480.3 257.0a1.2 1.2 0 0 1 .6-2.1a1.5 1.5 0 0 1 2.8 0a1.2 1.2 0 0 1 .6 2.1z"/><path d="M337.4 217.8a1.2 1.2 0 0 1 .6-2.1a1.5 1.5 0 0 1 2.8 0a1.2 1.2 0 0 1 .6 2.1z"/><path d="M480.7 269.8a1.2 1.2 0 0 1 .6-2.1a1.5 1.5 0 0 1 2.8 0a1.2 1.2 0 0 1 .6 2.1z"/><path d="M470.9 233.1a1.2 1.2 0 0 1 .6-2.1a1.5 1.5 0 0 1 2.8 0a1.2 1.2 0 0 1 .6 2.1z"/><path d="M469.8 230.4a1.2 1.2 0 0 1 .6-2.1a1.5 1.5 0 0 1 2.8 0a1.2 1.2 0 0 1 .6 2.1z"/><path d="M351.4 214.2a1.2 1.2 0 0 1 .6-2.1a1.5 1.5 0 0 1 2.8 0a1.2 1.2 0 0 1 .6 2.1z"/><path d="M344.6 218.5a1.2 1.2 0 0 1 .6-2.1a1.5 1.5 0 0 1 2.8 0a1.2 1.2 0 0 1 .6 2.1z"/><path d="M462.2 225.4a1.2 1.2 0 0 1 .6-2.1a1.5 1.5 0 0 1 2.8 0a1.2 1.2 0 0 1 .6 2.1z"/><path d="M482.6 261.6a1.2 1.2 0 0 1 .6-2.1a1.5 1.5 0 0 1 2.8 0a1.2 1.2 0 0 1 .6 2.1z"/><path d="M432.2 217.0a1.2 1.2 0 0 1 .6-2.1a1.5 1.5 0 0 1 2.8 0a1.2 1.2 0 0 1 .6 2.1z"/><path d="M478.3 254.2a1.2 1.2 0 0 1 .6-2.1a1.5 1.5 0 0 1 2.8 0a1.2 1.2 0 0 1 .6 2.1z"/><path d="M464.9 228.3a1.2 1.2 0 0 1 .6-2.1a1.5 1.5 0 0 1 2.8 0a1.2 1.2 0 0 1 .6 2.1z"/><path d="M364.0 218.3a1.2 1.2 0 0 1 .6-2.1a1.5 1.5 0 0 1 2.8 0a1.2 1.2 0 0 1 .6 2.1z"/><path d="M437.4 216.5a1.2 1.2 0 0 1 .6-2.1a1.5 1.5 0 0 1 2.8 0a1.2 1.2 0 0 1 .6 2.1z"/><path d="M417.0 217.8a1.2 1.2 0 0 1 .6-2.1a1.5 1.5 0 0 1 2.8 0a1.2 1.2 0 0 1 .6 2.1z"/><path d="M481.7 265.3a1.2 1.2 0 0 1 .6-2.1a1.5 1.5 0 0 1 2.8 0a1.2 1.2 0 0 1 .6 2.1z"/><path d="M479.9 276.8a1.2 1.2 0 0 1 .6-2.1a1.5 1.5 0 0 1 2.8 0a1.2 1.2 0 0 1 .6 2.1z"/><path d="M473.9 238.6a1.2 1.2 0 0 1 .6-2.1a1.5 1.5 0 0 1 2.8 0a1.2 1.2 0 0 1 .6 2.1z"/><path d="M484.0 254.2a1.2 1.2 0 0 1 .6-2.1a1.5 1.5 0 0 1 2.8 0a1.2 1.2 0 0 1 .6 2.1z"/><path d="M429.8 214.2a1.2 1.2 0 0 1 .6-2.1a1.5 1.5 0 0 1 2.8 0a1.2 1.2 0 0 1 .6 2.1z"/><path d="M465.4 228.7a1.2 1.2 0 0 1 .6-2.1a1.5 1.5 0 0 1 2.8 0a1.2 1.2 0 0 1 .6 2.1z"/><path d="M471.6 247.5a1.2 1.2 0 0 1 .6-2.1a1.5 1.5 0 0 1 2.8 0a1.2 1.2 0 0 1 .6 2.1z"/><path d="M326.8 219.5a1.2 1.2 0 0 1 .6-2.1a1.5 1.5 0 0 1 2.8 0a1.2 1.2 0 0 1 .6 2.1z"/><path d="M371.2 218.6a1.2 1.2 0 0 1 .6-2.1a1.5 1.5 0 0 1 2.8 0a1.2 1.2 0 0 1 .6 2.1z"/><path d="M440.3 219.3a1.2 1.2 0 0 1 .6-2.1a1.5 1.5 0 0 1 2.8 0a1.2 1.2 0 0 1 .6 2.1z"/><path d="M377.4 217.6a1.2 1.2 0 0 1 .6-2.1a1.5 1.5 0 0 1 2.8 0a1.2 1.2 0 0 1 .6 2.1z"/><path d="M443.9 221.6a1.2 1.2 0 0 1 .6-2.1a1.5 1.5 0 0 1 2.8 0a1.2 1.2 0 0 1 .6 2.1z"/><path d="M369.4 219.7a1.2 1.2 0 0 1 .6-2.1a1.5 1.5 0 0 1 2.8 0a1.2 1.2 0 0 1 .6 2.1z"/><path d="M471.5 244.2a1.2 1.2 0 0 1 .6-2.1a1.5 1.5 0 0 1 2.8 0a1.2 1.2 0 0 1 .6 2.1z"/><path d="M477.1 246.0a1.2 1.2 0 0 1 .6-2.1a1.5 1.5 0 0 1 2.8 0a1.2 1.2 0 0 1 .6 2.1z"/><path d="M335.2 217.5a1.2 1.2 0 0 1 .6-2.1a1.5 1.5 0 0 1 2.8 0a1.2 1.2 0 0 1 .6 2.1z"/><path d="M481.0 257.4a1.2 1.2 0 0 1 .6-2.1a1.5 1.5 0 0 1 2.8 0a1.2 1.2 0 0 1 .6 2.1z"/><path d="M351.5 215.7a1.2 1.2 0 0 1 .6-2.1a1.5 1.5 0 0 1 2.8 0a1.2 1.2 0 0 1 .6 2.1z"/><path d="M456.7 225.4a1.2 1.2 0 0 1 .6-2.1a1.5 1.5 0 0 1 2.8 0a1.2 1.2 0 0 1 .6 2.1z"/><path d="M480.6 273.1a1.2 1.2 0 0 1 .6-2.1a1.5 1.5 0 0 1 2.8 0a1.2 1.2 0 0 1 .6 2.1z"/><path d="M493.1 330.9a1.2 1.2 0 0 1 .6-2.1a1.5 1.5 0 0 1 2.8 0a1.2 1.2 0 0 1 .6 2.1z"/><path d="M491.4 326.9a1.2 1.2 0 0 1 .6-2.1a1.5 1.5 0 0 1 2.8 0a1.2 1.2 0 0 1 .6 2.1z"/><path d="M487.9 320.5a1.2 1.2 0 0 1 .6-2.1a1.5 1.5 0 0 1 2.8 0a1.2 1.2 0 0 1 .6 2.1z"/><path d="M486.1 323.7a1.2 1.2 0 0 1 .6-2.1a1.5 1.5 0 0 1 2.8 0a1.2 1.2 0 0 1 .6 2.1z"/><path d="M489.9 318.7a1.2 1.2 0 0 1 .6-2.1a1.5 1.5 0 0 1 2.8 0a1.2 1.2 0 0 1 .6 2.1z"/><path d="M490.7 323.8a1.2 1.2 0 0 1 .6-2.1a1.5 1.5 0 0 1 2.8 0a1.2 1.2 0 0 1 .6 2.1z"/><path d="M492.4 331.6a1.2 1.2 0 0 1 .6-2.1a1.5 1.5 0 0 1 2.8 0a1.2 1.2 0 0 1 .6 2.1z"/><path d="M491.0 321.0a1.2 1.2 0 0 1 .6-2.1a1.5 1.5 0 0 1 2.8 0a1.2 1.2 0 0 1 .6 2.1z"/><path d="M491.1 326.7a1.2 1.2 0 0 1 .6-2.1a1.5 1.5 0 0 1 2.8 0a1.2 1.2 0 0 1 .6 2.1z"/><path d="M491.3 321.6a1.2 1.2 0 0 1 .6-2.1a1.5 1.5 0 0 1 2.8 0a1.2 1.2 0 0 1 .6 2.1z"/><path d="M368.6 231.7a1.2 1.2 0 0 1 .6-2.1a1.5 1.5 0 0 1 2.8 0a1.2 1.2 0 0 1 .6 2.1z"/><path d="M367.8 231.2a1.2 1.2 0 0 1 .6-2.1a1.5 1.5 0 0 1 2.8 0a1.2 1.2 0 0 1 .6 2.1z"/><path d="M357.4 228.8a1.2 1.2 0 0 1 .6-2.1a1.5 1.5 0 0 1 2.8 0a1.2 1.2 0 0 1 .6 2.1z"/><path d="M385.5 232.7a1.2 1.2 0 0 1 .6-2.1a1.5 1.5 0 0 1 2.8 0a1.2 1.2 0 0 1 .6 2.1z"/><path d="M352.2 227.2a1.2 1.2 0 0 1 .6-2.1a1.5 1.5 0 0 1 2.8 0a1.2 1.2 0 0 1 .6 2.1z"/><path d="M373.2 231.7a1.2 1.2 0 0 1 .6-2.1a1.5 1.5 0 0 1 2.8 0a1.2 1.2 0 0 1 .6 2.1z"/><path d="M399.0 247.5a1.2 1.2 0 0 1 .6-2.1a1.5 1.5 0 0 1 2.8 0a1.2 1.2 0 0 1 .6 2.1z"/><path d="M321.7 220.3a1.2 1.2 0 0 1 .6-2.1a1.5 1.5 0 0 1 2.8 0a1.2 1.2 0 0 1 .6 2.1z"/><path d="M371.3 230.9a1.2 1.2 0 0 1 .6-2.1a1.5 1.5 0 0 1 2.8 0a1.2 1.2 0 0 1 .6 2.1z"/><path d="M396.9 243.9a1.2 1.2 0 0 1 .6-2.1a1.5 1.5 0 0 1 2.8 0a1.2 1.2 0 0 1 .6 2.1z"/><path d="M368.6 226.8a1.2 1.2 0 0 1 .6-2.1a1.5 1.5 0 0 1 2.8 0a1.2 1.2 0 0 1 .6 2.1z"/><path d="M345.1 222.8a1.2 1.2 0 0 1 .6-2.1a1.5 1.5 0 0 1 2.8 0a1.2 1.2 0 0 1 .6 2.1z"/><path d="M406.6 254.1a1.2 1.2 0 0 1 .6-2.1a1.5 1.5 0 0 1 2.8 0a1.2 1.2 0 0 1 .6 2.1z"/><path d="M385.5 232.4a1.2 1.2 0 0 1 .6-2.1a1.5 1.5 0 0 1 2.8 0a1.2 1.2 0 0 1 .6 2.1z"/><path d="M325.1 219.2a1.2 1.2 0 0 1 .6-2.1a1.5 1.5 0 0 1 2.8 0a1.2 1.2 0 0 1 .6 2.1z"/><path d="M398.5 246.3a1.2 1.2 0 0 1 .6-2.1a1.5 1.5 0 0 1 2.8 0a1.2 1.2 0 0 1 .6 2.1z"/><path d="M408.4 258.2a1.2 1.2 0 0 1 .6-2.1a1.5 1.5 0 0 1 2.8 0a1.2 1.2 0 0 1 .6 2.1z"/><path d="M390.6 238.6a1.2 1.2 0 0 1 .6-2.1a1.5 1.5 0 0 1 2.8 0a1.2 1.2 0 0 1 .6 2.1z"/><path d="M371.9 228.8a1.2 1.2 0 0 1 .6-2.1a1.5 1.5 0 0 1 2.8 0a1.2 1.2 0 0 1 .6 2.1z"/><path d="M393.8 238.5a1.2 1.2 0 0 1 .6-2.1a1.5 1.5 0 0 1 2.8 0a1.2 1.2 0 0 1 .6 2.1z"/><path d="M403.6 263.8a1.2 1.2 0 0 1 .6-2.1a1.5 1.5 0 0 1 2.8 0a1.2 1.2 0 0 1 .6 2.1z"/><path d="M392.3 245.7a1.2 1.2 0 0 1 .6-2.1a1.5 1.5 0 0 1 2.8 0a1.2 1.2 0 0 1 .6 2.1z"/><path d="M321.5 220.5a1.2 1.2 0 0 1 .6-2.1a1.5 1.5 0 0 1 2.8 0a1.2 1.2 0 0 1 .6 2.1z"/><path d="M395.8 234.7a1.2 1.2 0 0 1 .6-2.1a1.5 1.5 0 0 1 2.8 0a1.2 1.2 0 0 1 .6 2.1z"/><path d="M340.9 221.0a1.2 1.2 0 0 1 .6-2.1a1.5 1.5 0 0 1 2.8 0a1.2 1.2 0 0 1 .6 2.1z"/><path d="M363.9 229.8a1.2 1.2 0 0 1 .6-2.1a1.5 1.5 0 0 1 2.8 0a1.2 1.2 0 0 1 .6 2.1z"/><path d="M335.1 222.0a1.2 1.2 0 0 1 .6-2.1a1.5 1.5 0 0 1 2.8 0a1.2 1.2 0 0 1 .6 2.1z"/><path d="M400.4 243.0a1.2 1.2 0 0 1 .6-2.1a1.5 1.5 0 0 1 2.8 0a1.2 1.2 0 0 1 .6 2.1z"/><path d="M399.9 246.3a1.2 1.2 0 0 1 .6-2.1a1.5 1.5 0 0 1 2.8 0a1.2 1.2 0 0 1 .6 2.1z"/><path d="M376.8 231.0a1.2 1.2 0 0 1 .6-2.1a1.5 1.5 0 0 1 2.8 0a1.2 1.2 0 0 1 .6 2.1z"/><path d="M407.4 262.2a1.2 1.2 0 0 1 .6-2.1a1.5 1.5 0 0 1 2.8 0a1.2 1.2 0 0 1 .6 2.1z"/><path d="M356.3 228.2a1.2 1.2 0 0 1 .6-2.1a1.5 1.5 0 0 1 2.8 0a1.2 1.2 0 0 1 .6 2.1z"/><path d="M329.6 221.6a1.2 1.2 0 0 1 .6-2.1a1.5 1.5 0 0 1 2.8 0a1.2 1.2 0 0 1 .6 2.1z"/><path d="M379.8 231.1a1.2 1.2 0 0 1 .6-2.1a1.5 1.5 0 0 1 2.8 0a1.2 1.2 0 0 1 .6 2.1z"/><path d="M333.5 218.7a1.2 1.2 0 0 1 .6-2.1a1.5 1.5 0 0 1 2.8 0a1.2 1.2 0 0 1 .6 2.1z"/><path d="M351.7 226.7a1.2 1.2 0 0 1 .6-2.1a1.5 1.5 0 0 1 2.8 0a1.2 1.2 0 0 1 .6 2.1z"/><path d="M367.6 229.2a1.2 1.2 0 0 1 .6-2.1a1.5 1.5 0 0 1 2.8 0a1.2 1.2 0 0 1 .6 2.1z"/><path d="M369.5 231.5a1.2 1.2 0 0 1 .6-2.1a1.5 1.5 0 0 1 2.8 0a1.2 1.2 0 0 1 .6 2.1z"/><path d="M409.8 252.2a1.2 1.2 0 0 1 .6-2.1a1.5 1.5 0 0 1 2.8 0a1.2 1.2 0 0 1 .6 2.1z"/><path d="M337.2 219.8a1.2 1.2 0 0 1 .6-2.1a1.5 1.5 0 0 1 2.8 0a1.2 1.2 0 0 1 .6 2.1z"/><path d="M362.8 231.7a1.2 1.2 0 0 1 .6-2.1a1.5 1.5 0 0 1 2.8 0a1.2 1.2 0 0 1 .6 2.1z"/><path d="M406.5 263.4a1.2 1.2 0 0 1 .6-2.1a1.5 1.5 0 0 1 2.8 0a1.2 1.2 0 0 1 .6 2.1z"/><path d="M336.1 222.1a1.2 1.2 0 0 1 .6-2.1a1.5 1.5 0 0 1 2.8 0a1.2 1.2 0 0 1 .6 2.1z"/><path d="M399.8 242.2a1.2 1.2 0 0 1 .6-2.1a1.5 1.5 0 0 1 2.8 0a1.2 1.2 0 0 1 .6 2.1z"/><path d="M319.2 220.6a1.2 1.2 0 0 1 .6-2.1a1.5 1.5 0 0 1 2.8 0a1.2 1.2 0 0 1 .6 2.1z"/><path d="M404.6 266.4a1.2 1.2 0 0 1 .6-2.1a1.5 1.5 0 0 1 2.8 0a1.2 1.2 0 0 1 .6 2.1z"/><path d="M319.9 220.9a1.2 1.2 0 0 1 .6-2.1a1.5 1.5 0 0 1 2.8 0a1.2 1.2 0 0 1 .6 2.1z"/><path d="M350.6 221.4a1.2 1.2 0 0 1 .6-2.1a1.5 1.5 0 0 1 2.8 0a1.2 1.2 0 0 1 .6 2.1z"/><path d="M353.1 226.7a1.2 1.2 0 0 1 .6-2.1a1.5 1.5 0 0 1 2.8 0a1.2 1.2 0 0 1 .6 2.1z"/><path d="M410.3 257.9a1.2 1.2 0 0 1 .6-2.1a1.5 1.5 0 0 1 2.8 0a1.2 1.2 0 0 1 .6 2.1z"/><path d="M378.9 233.4a1.2 1.2 0 0 1 .6-2.1a1.5 1.5 0 0 1 2.8 0a1.2 1.2 0 0 1 .6 2.1z"/><path d="M352.1 227.0a1.2 1.2 0 0 1 .6-2.1a1.5 1.5 0 0 1 2.8 0a1.2 1.2 0 0 1 .6 2.1z"/><path d="M358.8 227.3a1.2 1.2 0 0 1 .6-2.1a1.5 1.5 0 0 1 2.8 0a1.2 1.2 0 0 1 .6 2.1z"/><path d="M357.6 227.1a1.2 1.2 0 0 1 .6-2.1a1.5 1.5 0 0 1 2.8 0a1.2 1.2 0 0 1 .6 2.1z"/><path d="M321.3 221.8a1.2 1.2 0 0 1 .6-2.1a1.5 1.5 0 0 1 2.8 0a1.2 1.2 0 0 1 .6 2.1z"/><path d="M415.4 333.5a1.2 1.2 0 0 1 .6-2.1a1.5 1.5 0 0 1 2.8 0a1.2 1.2 0 0 1 .6 2.1z"/><path d="M416.2 322.2a1.2 1.2 0 0 1 .6-2.1a1.5 1.5 0 0 1 2.8 0a1.2 1.2 0 0 1 .6 2.1z"/><path d="M414.1 326.0a1.2 1.2 0 0 1 .6-2.1a1.5 1.5 0 0 1 2.8 0a1.2 1.2 0 0 1 .6 2.1z"/><path d="M420.0 339.9a1.2 1.2 0 0 1 .6-2.1a1.5 1.5 0 0 1 2.8 0a1.2 1.2 0 0 1 .6 2.1z"/><path d="M416.2 329.2a1.2 1.2 0 0 1 .6-2.1a1.5 1.5 0 0 1 2.8 0a1.2 1.2 0 0 1 .6 2.1z"/><path d="M419.6 335.5a1.2 1.2 0 0 1 .6-2.1a1.5 1.5 0 0 1 2.8 0a1.2 1.2 0 0 1 .6 2.1z"/><path d="M417.1 334.1a1.2 1.2 0 0 1 .6-2.1a1.5 1.5 0 0 1 2.8 0a1.2 1.2 0 0 1 .6 2.1z"/><path d="M417.0 336.4a1.2 1.2 0 0 1 .6-2.1a1.5 1.5 0 0 1 2.8 0a1.2 1.2 0 0 1 .6 2.1z"/><path d="M413.8 332.4a1.2 1.2 0 0 1 .6-2.1a1.5 1.5 0 0 1 2.8 0a1.2 1.2 0 0 1 .6 2.1z"/><path d="M414.9 317.0a1.2 1.2 0 0 1 .6-2.1a1.5 1.5 0 0 1 2.8 0a1.2 1.2 0 0 1 .6 2.1z"/><path d="M415.6 326.5a1.2 1.2 0 0 1 .6-2.1a1.5 1.5 0 0 1 2.8 0a1.2 1.2 0 0 1 .6 2.1z"/><path d="M420.7 342.6a1.2 1.2 0 0 1 .6-2.1a1.5 1.5 0 0 1 2.8 0a1.2 1.2 0 0 1 .6 2.1z"/><path d="M423.6 335.1a1.2 1.2 0 0 1 .6-2.1a1.5 1.5 0 0 1 2.8 0a1.2 1.2 0 0 1 .6 2.1z"/><path d="M420.7 341.1a1.2 1.2 0 0 1 .6-2.1a1.5 1.5 0 0 1 2.8 0a1.2 1.2 0 0 1 .6 2.1z"/><path d="M421.9 344.6a1.2 1.2 0 0 1 .6-2.1a1.5 1.5 0 0 1 2.8 0a1.2 1.2 0 0 1 .6 2.1z"/><path d="M413.9 318.4a1.2 1.2 0 0 1 .6-2.1a1.5 1.5 0 0 1 2.8 0a1.2 1.2 0 0 1 .6 2.1z"/><path d="M414.7 337.4a1.2 1.2 0 0 1 .6-2.1a1.5 1.5 0 0 1 2.8 0a1.2 1.2 0 0 1 .6 2.1z"/><path d="M422.7 335.9a1.2 1.2 0 0 1 .6-2.1a1.5 1.5 0 0 1 2.8 0a1.2 1.2 0 0 1 .6 2.1z"/><path d="M364.2 270.0a1.2 1.2 0 0 1 .6-2.1a1.5 1.5 0 0 1 2.8 0a1.2 1.2 0 0 1 .6 2.1z"/><path d="M359.7 267.4a1.2 1.2 0 0 1 .6-2.1a1.5 1.5 0 0 1 2.8 0a1.2 1.2 0 0 1 .6 2.1z"/><path d="M365.3 284.2a1.2 1.2 0 0 1 .6-2.1a1.5 1.5 0 0 1 2.8 0a1.2 1.2 0 0 1 .6 2.1z"/><path d="M359.6 270.3a1.2 1.2 0 0 1 .6-2.1a1.5 1.5 0 0 1 2.8 0a1.2 1.2 0 0 1 .6 2.1z"/><path d="M353.6 246.6a1.2 1.2 0 0 1 .6-2.1a1.5 1.5 0 0 1 2.8 0a1.2 1.2 0 0 1 .6 2.1z"/><path d="M350.4 228.5a1.2 1.2 0 0 1 .6-2.1a1.5 1.5 0 0 1 2.8 0a1.2 1.2 0 0 1 .6 2.1z"/><path d="M357.0 226.2a1.2 1.2 0 0 1 .6-2.1a1.5 1.5 0 0 1 2.8 0a1.2 1.2 0 0 1 .6 2.1z"/><path d="M361.4 265.0a1.2 1.2 0 0 1 .6-2.1a1.5 1.5 0 0 1 2.8 0a1.2 1.2 0 0 1 .6 2.1z"/><path d="M349.6 226.8a1.2 1.2 0 0 1 .6-2.1a1.5 1.5 0 0 1 2.8 0a1.2 1.2 0 0 1 .6 2.1z"/><path d="M363.4 258.9a1.2 1.2 0 0 1 .6-2.1a1.5 1.5 0 0 1 2.8 0a1.2 1.2 0 0 1 .6 2.1z"/><path d="M351.5 250.5a1.2 1.2 0 0 1 .6-2.1a1.5 1.5 0 0 1 2.8 0a1.2 1.2 0 0 1 .6 2.1z"/><path d="M355.7 233.7a1.2 1.2 0 0 1 .6-2.1a1.5 1.5 0 0 1 2.8 0a1.2 1.2 0 0 1 .6 2.1z"/><path d="M348.4 225.6a1.2 1.2 0 0 1 .6-2.1a1.5 1.5 0 0 1 2.8 0a1.2 1.2 0 0 1 .6 2.1z"/><path d="M366.8 266.2a1.2 1.2 0 0 1 .6-2.1a1.5 1.5 0 0 1 2.8 0a1.2 1.2 0 0 1 .6 2.1z"/><path d="M358.9 263.7a1.2 1.2 0 0 1 .6-2.1a1.5 1.5 0 0 1 2.8 0a1.2 1.2 0 0 1 .6 2.1z"/><path d="M352.5 232.1a1.2 1.2 0 0 1 .6-2.1a1.5 1.5 0 0 1 2.8 0a1.2 1.2 0 0 1 .6 2.1z"/><path d="M362.7 257.9a1.2 1.2 0 0 1 .6-2.1a1.5 1.5 0 0 1 2.8 0a1.2 1.2 0 0 1 .6 2.1z"/><path d="M350.8 232.1a1.2 1.2 0 0 1 .6-2.1a1.5 1.5 0 0 1 2.8 0a1.2 1.2 0 0 1 .6 2.1z"/><path d="M356.9 254.1a1.2 1.2 0 0 1 .6-2.1a1.5 1.5 0 0 1 2.8 0a1.2 1.2 0 0 1 .6 2.1z"/><path d="M363.1 273.1a1.2 1.2 0 0 1 .6-2.1a1.5 1.5 0 0 1 2.8 0a1.2 1.2 0 0 1 .6 2.1z"/><path d="M362.6 253.7a1.2 1.2 0 0 1 .6-2.1a1.5 1.5 0 0 1 2.8 0a1.2 1.2 0 0 1 .6 2.1z"/><path d="M363.9 264.9a1.2 1.2 0 0 1 .6-2.1a1.5 1.5 0 0 1 2.8 0a1.2 1.2 0 0 1 .6 2.1z"/><path d="M361.7 269.3a1.2 1.2 0 0 1 .6-2.1a1.5 1.5 0 0 1 2.8 0a1.2 1.2 0 0 1 .6 2.1z"/><path d="M353.5 230.2a1.2 1.2 0 0 1 .6-2.1a1.5 1.5 0 0 1 2.8 0a1.2 1.2 0 0 1 .6 2.1z"/><path d="M359.5 266.5a1.2 1.2 0 0 1 .6-2.1a1.5 1.5 0 0 1 2.8 0a1.2 1.2 0 0 1 .6 2.1z"/><path d="M368.8 258.9a1.2 1.2 0 0 1 .6-2.1a1.5 1.5 0 0 1 2.8 0a1.2 1.2 0 0 1 .6 2.1z"/><path d="M356.4 251.9a1.2 1.2 0 0 1 .6-2.1a1.5 1.5 0 0 1 2.8 0a1.2 1.2 0 0 1 .6 2.1z"/><path d="M366.9 268.8a1.2 1.2 0 0 1 .6-2.1a1.5 1.5 0 0 1 2.8 0a1.2 1.2 0 0 1 .6 2.1z"/><path d="M371.3 274.9a1.2 1.2 0 0 1 .6-2.1a1.5 1.5 0 0 1 2.8 0a1.2 1.2 0 0 1 .6 2.1z"/><path d="M358.5 259.3a1.2 1.2 0 0 1 .6-2.1a1.5 1.5 0 0 1 2.8 0a1.2 1.2 0 0 1 .6 2.1z"/><path d="M359.0 234.8a1.2 1.2 0 0 1 .6-2.1a1.5 1.5 0 0 1 2.8 0a1.2 1.2 0 0 1 .6 2.1z"/><path d="M370.3 271.0a1.2 1.2 0 0 1 .6-2.1a1.5 1.5 0 0 1 2.8 0a1.2 1.2 0 0 1 .6 2.1z"/><path d="M355.7 235.3a1.2 1.2 0 0 1 .6-2.1a1.5 1.5 0 0 1 2.8 0a1.2 1.2 0 0 1 .6 2.1z"/><path d="M366.4 258.8a1.2 1.2 0 0 1 .6-2.1a1.5 1.5 0 0 1 2.8 0a1.2 1.2 0 0 1 .6 2.1z"/><path d="M368.1 262.4a1.2 1.2 0 0 1 .6-2.1a1.5 1.5 0 0 1 2.8 0a1.2 1.2 0 0 1 .6 2.1z"/><path d="M357.8 262.1a1.2 1.2 0 0 1 .6-2.1a1.5 1.5 0 0 1 2.8 0a1.2 1.2 0 0 1 .6 2.1z"/><path d="M362.2 263.8a1.2 1.2 0 0 1 .6-2.1a1.5 1.5 0 0 1 2.8 0a1.2 1.2 0 0 1 .6 2.1z"/><path d="M363.8 266.7a1.2 1.2 0 0 1 .6-2.1a1.5 1.5 0 0 1 2.8 0a1.2 1.2 0 0 1 .6 2.1z"/><path d="M348.7 226.1a1.2 1.2 0 0 1 .6-2.1a1.5 1.5 0 0 1 2.8 0a1.2 1.2 0 0 1 .6 2.1z"/><path d="M355.5 241.1a1.2 1.2 0 0 1 .6-2.1a1.5 1.5 0 0 1 2.8 0a1.2 1.2 0 0 1 .6 2.1z"/><path d="M359.2 252.0a1.2 1.2 0 0 1 .6-2.1a1.5 1.5 0 0 1 2.8 0a1.2 1.2 0 0 1 .6 2.1z"/><path d="M348.3 241.6a1.2 1.2 0 0 1 .6-2.1a1.5 1.5 0 0 1 2.8 0a1.2 1.2 0 0 1 .6 2.1z"/><path d="M357.8 237.4a1.2 1.2 0 0 1 .6-2.1a1.5 1.5 0 0 1 2.8 0a1.2 1.2 0 0 1 .6 2.1z"/><path d="M356.7 262.1a1.2 1.2 0 0 1 .6-2.1a1.5 1.5 0 0 1 2.8 0a1.2 1.2 0 0 1 .6 2.1z"/><path d="M356.5 260.7a1.2 1.2 0 0 1 .6-2.1a1.5 1.5 0 0 1 2.8 0a1.2 1.2 0 0 1 .6 2.1z"/><path d="M364.8 270.5a1.2 1.2 0 0 1 .6-2.1a1.5 1.5 0 0 1 2.8 0a1.2 1.2 0 0 1 .6 2.1z"/><path d="M361.1 278.2a1.2 1.2 0 0 1 .6-2.1a1.5 1.5 0 0 1 2.8 0a1.2 1.2 0 0 1 .6 2.1z"/><path d="M351.4 238.0a1.2 1.2 0 0 1 .6-2.1a1.5 1.5 0 0 1 2.8 0a1.2 1.2 0 0 1 .6 2.1z"/><path d="M368.0 269.3a1.2 1.2 0 0 1 .6-2.1a1.5 1.5 0 0 1 2.8 0a1.2 1.2 0 0 1 .6 2.1z"/><path d="M360.0 257.3a1.2 1.2 0 0 1 .6-2.1a1.5 1.5 0 0 1 2.8 0a1.2 1.2 0 0 1 .6 2.1z"/><path d="M371.1 278.6a1.2 1.2 0 0 1 .6-2.1a1.5 1.5 0 0 1 2.8 0a1.2 1.2 0 0 1 .6 2.1z"/><path d="M369.7 262.1a1.2 1.2 0 0 1 .6-2.1a1.5 1.5 0 0 1 2.8 0a1.2 1.2 0 0 1 .6 2.1z"/><path d="M351.0 231.1a1.2 1.2 0 0 1 .6-2.1a1.5 1.5 0 0 1 2.8 0a1.2 1.2 0 0 1 .6 2.1z"/><path d="M361.5 280.2a1.2 1.2 0 0 1 .6-2.1a1.5 1.5 0 0 1 2.8 0a1.2 1.2 0 0 1 .6 2.1z"/><path d="M351.3 228.9a1.2 1.2 0 0 1 .6-2.1a1.5 1.5 0 0 1 2.8 0a1.2 1.2 0 0 1 .6 2.1z"/><path d="M342.5 228.9a1.2 1.2 0 0 1 .6-2.1a1.5 1.5 0 0 1 2.8 0a1.2 1.2 0 0 1 .6 2.1z"/><path d="M367.1 268.7a1.2 1.2 0 0 1 .6-2.1a1.5 1.5 0 0 1 2.8 0a1.2 1.2 0 0 1 .6 2.1z"/><path d="M364.2 254.7a1.2 1.2 0 0 1 .6-2.1a1.5 1.5 0 0 1 2.8 0a1.2 1.2 0 0 1 .6 2.1z"/><path d="M350.7 236.0a1.2 1.2 0 0 1 .6-2.1a1.5 1.5 0 0 1 2.8 0a1.2 1.2 0 0 1 .6 2.1z"/><path d="M361.7 251.5a1.2 1.2 0 0 1 .6-2.1a1.5 1.5 0 0 1 2.8 0a1.2 1.2 0 0 1 .6 2.1z"/><path d="M356.6 249.6a1.2 1.2 0 0 1 .6-2.1a1.5 1.5 0 0 1 2.8 0a1.2 1.2 0 0 1 .6 2.1z"/><path d="M350.9 255.9a1.2 1.2 0 0 1 .6-2.1a1.5 1.5 0 0 1 2.8 0a1.2 1.2 0 0 1 .6 2.1z"/><path d="M363.3 257.0a1.2 1.2 0 0 1 .6-2.1a1.5 1.5 0 0 1 2.8 0a1.2 1.2 0 0 1 .6 2.1z"/><path d="M353.8 249.6a1.2 1.2 0 0 1 .6-2.1a1.5 1.5 0 0 1 2.8 0a1.2 1.2 0 0 1 .6 2.1z"/><path d="M371.8 284.8a1.2 1.2 0 0 1 .6-2.1a1.5 1.5 0 0 1 2.8 0a1.2 1.2 0 0 1 .6 2.1z"/><path d="M375.1 344.7a1.2 1.2 0 0 1 .6-2.1a1.5 1.5 0 0 1 2.8 0a1.2 1.2 0 0 1 .6 2.1z"/><path d="M363.5 335.0a1.2 1.2 0 0 1 .6-2.1a1.5 1.5 0 0 1 2.8 0a1.2 1.2 0 0 1 .6 2.1z"/><path d="M363.6 340.0a1.2 1.2 0 0 1 .6-2.1a1.5 1.5 0 0 1 2.8 0a1.2 1.2 0 0 1 .6 2.1z"/><path d="M353.8 321.6a1.2 1.2 0 0 1 .6-2.1a1.5 1.5 0 0 1 2.8 0a1.2 1.2 0 0 1 .6 2.1z"/><path d="M367.1 317.0a1.2 1.2 0 0 1 .6-2.1a1.5 1.5 0 0 1 2.8 0a1.2 1.2 0 0 1 .6 2.1z"/><path d="M377.3 347.4a1.2 1.2 0 0 1 .6-2.1a1.5 1.5 0 0 1 2.8 0a1.2 1.2 0 0 1 .6 2.1z"/><path d="M372.3 345.7a1.2 1.2 0 0 1 .6-2.1a1.5 1.5 0 0 1 2.8 0a1.2 1.2 0 0 1 .6 2.1z"/><path d="M369.4 339.5a1.2 1.2 0 0 1 .6-2.1a1.5 1.5 0 0 1 2.8 0a1.2 1.2 0 0 1 .6 2.1z"/><path d="M367.0 317.1a1.2 1.2 0 0 1 .6-2.1a1.5 1.5 0 0 1 2.8 0a1.2 1.2 0 0 1 .6 2.1z"/><path d="M378.5 349.6a1.2 1.2 0 0 1 .6-2.1a1.5 1.5 0 0 1 2.8 0a1.2 1.2 0 0 1 .6 2.1z"/><path d="M365.5 328.5a1.2 1.2 0 0 1 .6-2.1a1.5 1.5 0 0 1 2.8 0a1.2 1.2 0 0 1 .6 2.1z"/><path d="M372.4 339.5a1.2 1.2 0 0 1 .6-2.1a1.5 1.5 0 0 1 2.8 0a1.2 1.2 0 0 1 .6 2.1z"/><path d="M365.7 332.3a1.2 1.2 0 0 1 .6-2.1a1.5 1.5 0 0 1 2.8 0a1.2 1.2 0 0 1 .6 2.1z"/><path d="M368.2 328.7a1.2 1.2 0 0 1 .6-2.1a1.5 1.5 0 0 1 2.8 0a1.2 1.2 0 0 1 .6 2.1z"/><path d="M365.3 322.7a1.2 1.2 0 0 1 .6-2.1a1.5 1.5 0 0 1 2.8 0a1.2 1.2 0 0 1 .6 2.1z"/><path d="M368.4 334.7a1.2 1.2 0 0 1 .6-2.1a1.5 1.5 0 0 1 2.8 0a1.2 1.2 0 0 1 .6 2.1z"/><path d="M363.0 326.9a1.2 1.2 0 0 1 .6-2.1a1.5 1.5 0 0 1 2.8 0a1.2 1.2 0 0 1 .6 2.1z"/><path d="M368.1 330.8a1.2 1.2 0 0 1 .6-2.1a1.5 1.5 0 0 1 2.8 0a1.2 1.2 0 0 1 .6 2.1z"/><path d="M364.2 322.6a1.2 1.2 0 0 1 .6-2.1a1.5 1.5 0 0 1 2.8 0a1.2 1.2 0 0 1 .6 2.1z"/><path d="M365.0 331.2a1.2 1.2 0 0 1 .6-2.1a1.5 1.5 0 0 1 2.8 0a1.2 1.2 0 0 1 .6 2.1z"/><path d="M371.8 342.7a1.2 1.2 0 0 1 .6-2.1a1.5 1.5 0 0 1 2.8 0a1.2 1.2 0 0 1 .6 2.1z"/><path d="M372.7 340.4a1.2 1.2 0 0 1 .6-2.1a1.5 1.5 0 0 1 2.8 0a1.2 1.2 0 0 1 .6 2.1z"/><path d="M370.2 331.3a1.2 1.2 0 0 1 .6-2.1a1.5 1.5 0 0 1 2.8 0a1.2 1.2 0 0 1 .6 2.1z"/><path d="M375.1 332.3a1.2 1.2 0 0 1 .6-2.1a1.5 1.5 0 0 1 2.8 0a1.2 1.2 0 0 1 .6 2.1z"/><path d="M370.6 327.9a1.2 1.2 0 0 1 .6-2.1a1.5 1.5 0 0 1 2.8 0a1.2 1.2 0 0 1 .6 2.1z"/><path d="M369.8 339.6a1.2 1.2 0 0 1 .6-2.1a1.5 1.5 0 0 1 2.8 0a1.2 1.2 0 0 1 .6 2.1z"/><path d="M365.4 327.7a1.2 1.2 0 0 1 .6-2.1a1.5 1.5 0 0 1 2.8 0a1.2 1.2 0 0 1 .6 2.1z"/><path d="M365.9 340.6a1.2 1.2 0 0 1 .6-2.1a1.5 1.5 0 0 1 2.8 0a1.2 1.2 0 0 1 .6 2.1z"/><path d="M358.2 318.8a1.2 1.2 0 0 1 .6-2.1a1.5 1.5 0 0 1 2.8 0a1.2 1.2 0 0 1 .6 2.1z"/><path d="M363.9 320.9a1.2 1.2 0 0 1 .6-2.1a1.5 1.5 0 0 1 2.8 0a1.2 1.2 0 0 1 .6 2.1z"/><path d="M370.5 327.9a1.2 1.2 0 0 1 .6-2.1a1.5 1.5 0 0 1 2.8 0a1.2 1.2 0 0 1 .6 2.1z"/><path d="M371.5 343.2a1.2 1.2 0 0 1 .6-2.1a1.5 1.5 0 0 1 2.8 0a1.2 1.2 0 0 1 .6 2.1z"/><path d="M361.4 327.0a1.2 1.2 0 0 1 .6-2.1a1.5 1.5 0 0 1 2.8 0a1.2 1.2 0 0 1 .6 2.1z"/><path d="M367.4 322.3a1.2 1.2 0 0 1 .6-2.1a1.5 1.5 0 0 1 2.8 0a1.2 1.2 0 0 1 .6 2.1z"/><path d="M373.7 349.6a1.2 1.2 0 0 1 .6-2.1a1.5 1.5 0 0 1 2.8 0a1.2 1.2 0 0 1 .6 2.1z"/><path d="M366.2 331.7a1.2 1.2 0 0 1 .6-2.1a1.5 1.5 0 0 1 2.8 0a1.2 1.2 0 0 1 .6 2.1z"/><path d="M366.3 327.1a1.2 1.2 0 0 1 .6-2.1a1.5 1.5 0 0 1 2.8 0a1.2 1.2 0 0 1 .6 2.1z"/><path d="M363.2 323.6a1.2 1.2 0 0 1 .6-2.1a1.5 1.5 0 0 1 2.8 0a1.2 1.2 0 0 1 .6 2.1z"/><path d="M366.2 327.0a1.2 1.2 0 0 1 .6-2.1a1.5 1.5 0 0 1 2.8 0a1.2 1.2 0 0 1 .6 2.1z"/><path d="M364.1 335.2a1.2 1.2 0 0 1 .6-2.1a1.5 1.5 0 0 1 2.8 0a1.2 1.2 0 0 1 .6 2.1z"/><path d="M364.3 342.4a1.2 1.2 0 0 1 .6-2.1a1.5 1.5 0 0 1 2.8 0a1.2 1.2 0 0 1 .6 2.1z"/><path d="M362.7 320.2a1.2 1.2 0 0 1 .6-2.1a1.5 1.5 0 0 1 2.8 0a1.2 1.2 0 0 1 .6 2.1z"/><path d="M366.0 332.0a1.2 1.2 0 0 1 .6-2.1a1.5 1.5 0 0 1 2.8 0a1.2 1.2 0 0 1 .6 2.1z"/><path d="M369.8 332.6a1.2 1.2 0 0 1 .6-2.1a1.5 1.5 0 0 1 2.8 0a1.2 1.2 0 0 1 .6 2.1z"/><path d="M367.3 332.8a1.2 1.2 0 0 1 .6-2.1a1.5 1.5 0 0 1 2.8 0a1.2 1.2 0 0 1 .6 2.1z"/><path d="M372.1 347.3a1.2 1.2 0 0 1 .6-2.1a1.5 1.5 0 0 1 2.8 0a1.2 1.2 0 0 1 .6 2.1z"/><path d="M372.0 343.9a1.2 1.2 0 0 1 .6-2.1a1.5 1.5 0 0 1 2.8 0a1.2 1.2 0 0 1 .6 2.1z"/><path d="M376.9 347.1a1.2 1.2 0 0 1 .6-2.1a1.5 1.5 0 0 1 2.8 0a1.2 1.2 0 0 1 .6 2.1z"/><path d="M371.7 341.3a1.2 1.2 0 0 1 .6-2.1a1.5 1.5 0 0 1 2.8 0a1.2 1.2 0 0 1 .6 2.1z"/><path d="M366.2 320.8a1.2 1.2 0 0 1 .6-2.1a1.5 1.5 0 0 1 2.8 0a1.2 1.2 0 0 1 .6 2.1z"/><path d="M366.6 324.8a1.2 1.2 0 0 1 .6-2.1a1.5 1.5 0 0 1 2.8 0a1.2 1.2 0 0 1 .6 2.1z"/><path d="M368.3 342.7a1.2 1.2 0 0 1 .6-2.1a1.5 1.5 0 0 1 2.8 0a1.2 1.2 0 0 1 .6 2.1z"/><path d="M367.8 332.4a1.2 1.2 0 0 1 .6-2.1a1.5 1.5 0 0 1 2.8 0a1.2 1.2 0 0 1 .6 2.1z"/><path d="M368.0 327.4a1.2 1.2 0 0 1 .6-2.1a1.5 1.5 0 0 1 2.8 0a1.2 1.2 0 0 1 .6 2.1z"/><path d="M367.1 335.9a1.2 1.2 0 0 1 .6-2.1a1.5 1.5 0 0 1 2.8 0a1.2 1.2 0 0 1 .6 2.1z"/><path d="M311.5 262.2a1.2 1.2 0 0 1 .6-2.1a1.5 1.5 0 0 1 2.8 0a1.2 1.2 0 0 1 .6 2.1z"/><path d="M311.0 277.1a1.2 1.2 0 0 1 .6-2.1a1.5 1.5 0 0 1 2.8 0a1.2 1.2 0 0 1 .6 2.1z"/><path d="M310.6 259.3a1.2 1.2 0 0 1 .6-2.1a1.5 1.5 0 0 1 2.8 0a1.2 1.2 0 0 1 .6 2.1z"/><path d="M313.1 273.5a1.2 1.2 0 0 1 .6-2.1a1.5 1.5 0 0 1 2.8 0a1.2 1.2 0 0 1 .6 2.1z"/><path d="M313.3 275.5a1.2 1.2 0 0 1 .6-2.1a1.5 1.5 0 0 1 2.8 0a1.2 1.2 0 0 1 .6 2.1z"/><path d="M313.5 258.4a1.2 1.2 0 0 1 .6-2.1a1.5 1.5 0 0 1 2.8 0a1.2 1.2 0 0 1 .6 2.1z"/><path d="M311.3 243.3a1.2 1.2 0 0 1 .6-2.1a1.5 1.5 0 0 1 2.8 0a1.2 1.2 0 0 1 .6 2.1z"/><path d="M314.5 258.2a1.2 1.2 0 0 1 .6-2.1a1.5 1.5 0 0 1 2.8 0a1.2 1.2 0 0 1 .6 2.1z"/><path d="M313.9 245.9a1.2 1.2 0 0 1 .6-2.1a1.5 1.5 0 0 1 2.8 0a1.2 1.2 0 0 1 .6 2.1z"/><path d="M309.9 251.2a1.2 1.2 0 0 1 .6-2.1a1.5 1.5 0 0 1 2.8 0a1.2 1.2 0 0 1 .6 2.1z"/><path d="M311.0 278.2a1.2 1.2 0 0 1 .6-2.1a1.5 1.5 0 0 1 2.8 0a1.2 1.2 0 0 1 .6 2.1z"/><path d="M309.9 233.8a1.2 1.2 0 0 1 .6-2.1a1.5 1.5 0 0 1 2.8 0a1.2 1.2 0 0 1 .6 2.1z"/><path d="M310.8 262.8a1.2 1.2 0 0 1 .6-2.1a1.5 1.5 0 0 1 2.8 0a1.2 1.2 0 0 1 .6 2.1z"/><path d="M309.4 238.1a1.2 1.2 0 0 1 .6-2.1a1.5 1.5 0 0 1 2.8 0a1.2 1.2 0 0 1 .6 2.1z"/><path d="M313.6 264.9a1.2 1.2 0 0 1 .6-2.1a1.5 1.5 0 0 1 2.8 0a1.2 1.2 0 0 1 .6 2.1z"/><path d="M314.6 253.4a1.2 1.2 0 0 1 .6-2.1a1.5 1.5 0 0 1 2.8 0a1.2 1.2 0 0 1 .6 2.1z"/><path d="M313.1 247.9a1.2 1.2 0 0 1 .6-2.1a1.5 1.5 0 0 1 2.8 0a1.2 1.2 0 0 1 .6 2.1z"/><path d="M313.3 247.2a1.2 1.2 0 0 1 .6-2.1a1.5 1.5 0 0 1 2.8 0a1.2 1.2 0 0 1 .6 2.1z"/><path d="M308.0 255.7a1.2 1.2 0 0 1 .6-2.1a1.5 1.5 0 0 1 2.8 0a1.2 1.2 0 0 1 .6 2.1z"/><path d="M310.6 257.1a1.2 1.2 0 0 1 .6-2.1a1.5 1.5 0 0 1 2.8 0a1.2 1.2 0 0 1 .6 2.1z"/><path d="M310.9 274.2a1.2 1.2 0 0 1 .6-2.1a1.5 1.5 0 0 1 2.8 0a1.2 1.2 0 0 1 .6 2.1z"/><path d="M312.3 239.9a1.2 1.2 0 0 1 .6-2.1a1.5 1.5 0 0 1 2.8 0a1.2 1.2 0 0 1 .6 2.1z"/><path d="M316.3 272.9a1.2 1.2 0 0 1 .6-2.1a1.5 1.5 0 0 1 2.8 0a1.2 1.2 0 0 1 .6 2.1z"/><path d="M313.1 269.4a1.2 1.2 0 0 1 .6-2.1a1.5 1.5 0 0 1 2.8 0a1.2 1.2 0 0 1 .6 2.1z"/><path d="M312.8 273.7a1.2 1.2 0 0 1 .6-2.1a1.5 1.5 0 0 1 2.8 0a1.2 1.2 0 0 1 .6 2.1z"/><path d="M333.9 270.5a1.2 1.2 0 0 1 .6-2.1a1.5 1.5 0 0 1 2.8 0a1.2 1.2 0 0 1 .6 2.1z"/><path d="M339.1 277.1a1.2 1.2 0 0 1 .6-2.1a1.5 1.5 0 0 1 2.8 0a1.2 1.2 0 0 1 .6 2.1z"/><path d="M323.2 248.7a1.2 1.2 0 0 1 .6-2.1a1.5 1.5 0 0 1 2.8 0a1.2 1.2 0 0 1 .6 2.1z"/><path d="M339.2 278.0a1.2 1.2 0 0 1 .6-2.1a1.5 1.5 0 0 1 2.8 0a1.2 1.2 0 0 1 .6 2.1z"/><path d="M314.9 232.0a1.2 1.2 0 0 1 .6-2.1a1.5 1.5 0 0 1 2.8 0a1.2 1.2 0 0 1 .6 2.1z"/><path d="M339.3 282.0a1.2 1.2 0 0 1 .6-2.1a1.5 1.5 0 0 1 2.8 0a1.2 1.2 0 0 1 .6 2.1z"/><path d="M317.3 240.7a1.2 1.2 0 0 1 .6-2.1a1.5 1.5 0 0 1 2.8 0a1.2 1.2 0 0 1 .6 2.1z"/><path d="M337.5 281.6a1.2 1.2 0 0 1 .6-2.1a1.5 1.5 0 0 1 2.8 0a1.2 1.2 0 0 1 .6 2.1z"/><path d="M336.0 265.7a1.2 1.2 0 0 1 .6-2.1a1.5 1.5 0 0 1 2.8 0a1.2 1.2 0 0 1 .6 2.1z"/><path d="M334.2 272.8a1.2 1.2 0 0 1 .6-2.1a1.5 1.5 0 0 1 2.8 0a1.2 1.2 0 0 1 .6 2.1z"/><path d="M330.9 259.4a1.2 1.2 0 0 1 .6-2.1a1.5 1.5 0 0 1 2.8 0a1.2 1.2 0 0 1 .6 2.1z"/><path d="M324.9 253.2a1.2 1.2 0 0 1 .6-2.1a1.5 1.5 0 0 1 2.8 0a1.2 1.2 0 0 1 .6 2.1z"/><path d="M316.2 226.3a1.2 1.2 0 0 1 .6-2.1a1.5 1.5 0 0 1 2.8 0a1.2 1.2 0 0 1 .6 2.1z"/><path d="M317.6 242.7a1.2 1.2 0 0 1 .6-2.1a1.5 1.5 0 0 1 2.8 0a1.2 1.2 0 0 1 .6 2.1z"/><path d="M329.7 265.4a1.2 1.2 0 0 1 .6-2.1a1.5 1.5 0 0 1 2.8 0a1.2 1.2 0 0 1 .6 2.1z"/><path d="M321.8 240.1a1.2 1.2 0 0 1 .6-2.1a1.5 1.5 0 0 1 2.8 0a1.2 1.2 0 0 1 .6 2.1z"/><path d="M332.9 265.4a1.2 1.2 0 0 1 .6-2.1a1.5 1.5 0 0 1 2.8 0a1.2 1.2 0 0 1 .6 2.1z"/><path d="M338.3 278.6a1.2 1.2 0 0 1 .6-2.1a1.5 1.5 0 0 1 2.8 0a1.2 1.2 0 0 1 .6 2.1z"/><path d="M333.8 282.3a1.2 1.2 0 0 1 .6-2.1a1.5 1.5 0 0 1 2.8 0a1.2 1.2 0 0 1 .6 2.1z"/><path d="M332.7 268.3a1.2 1.2 0 0 1 .6-2.1a1.5 1.5 0 0 1 2.8 0a1.2 1.2 0 0 1 .6 2.1z"/><path d="M326.5 255.9a1.2 1.2 0 0 1 .6-2.1a1.5 1.5 0 0 1 2.8 0a1.2 1.2 0 0 1 .6 2.1z"/><path d="M333.3 274.8a1.2 1.2 0 0 1 .6-2.1a1.5 1.5 0 0 1 2.8 0a1.2 1.2 0 0 1 .6 2.1z"/><path d="M358.2 247.4a1.2 1.2 0 0 1 .6-2.1a1.5 1.5 0 0 1 2.8 0a1.2 1.2 0 0 1 .6 2.1z"/><path d="M351.8 241.1a1.2 1.2 0 0 1 .6-2.1a1.5 1.5 0 0 1 2.8 0a1.2 1.2 0 0 1 .6 2.1z"/><path d="M324.6 228.9a1.2 1.2 0 0 1 .6-2.1a1.5 1.5 0 0 1 2.8 0a1.2 1.2 0 0 1 .6 2.1z"/><path d="M352.2 241.6a1.2 1.2 0 0 1 .6-2.1a1.5 1.5 0 0 1 2.8 0a1.2 1.2 0 0 1 .6 2.1z"/><path d="M342.2 237.0a1.2 1.2 0 0 1 .6-2.1a1.5 1.5 0 0 1 2.8 0a1.2 1.2 0 0 1 .6 2.1z"/><path d="M347.9 239.4a1.2 1.2 0 0 1 .6-2.1a1.5 1.5 0 0 1 2.8 0a1.2 1.2 0 0 1 .6 2.1z"/><path d="M343.2 241.0a1.2 1.2 0 0 1 .6-2.1a1.5 1.5 0 0 1 2.8 0a1.2 1.2 0 0 1 .6 2.1z"/><path d="M347.7 245.1a1.2 1.2 0 0 1 .6-2.1a1.5 1.5 0 0 1 2.8 0a1.2 1.2 0 0 1 .6 2.1z"/><path d="M364.4 252.0a1.2 1.2 0 0 1 .6-2.1a1.5 1.5 0 0 1 2.8 0a1.2 1.2 0 0 1 .6 2.1z"/><path d="M366.9 257.9a1.2 1.2 0 0 1 .6-2.1a1.5 1.5 0 0 1 2.8 0a1.2 1.2 0 0 1 .6 2.1z"/><path d="M360.1 249.0a1.2 1.2 0 0 1 .6-2.1a1.5 1.5 0 0 1 2.8 0a1.2 1.2 0 0 1 .6 2.1z"/><path d="M350.1 238.8a1.2 1.2 0 0 1 .6-2.1a1.5 1.5 0 0 1 2.8 0a1.2 1.2 0 0 1 .6 2.1z"/><path d="M356.1 245.2a1.2 1.2 0 0 1 .6-2.1a1.5 1.5 0 0 1 2.8 0a1.2 1.2 0 0 1 .6 2.1z"/><path d="M353.7 247.0a1.2 1.2 0 0 1 .6-2.1a1.5 1.5 0 0 1 2.8 0a1.2 1.2 0 0 1 .6 2.1z"/><path d="M346.2 236.9a1.2 1.2 0 0 1 .6-2.1a1.5 1.5 0 0 1 2.8 0a1.2 1.2 0 0 1 .6 2.1z"/><path d="M367.0 256.6a1.2 1.2 0 0 1 .6-2.1a1.5 1.5 0 0 1 2.8 0a1.2 1.2 0 0 1 .6 2.1z"/><path d="M322.6 226.8a1.2 1.2 0 0 1 .6-2.1a1.5 1.5 0 0 1 2.8 0a1.2 1.2 0 0 1 .6 2.1z"/><path d="M346.2 236.9a1.2 1.2 0 0 1 .6-2.1a1.5 1.5 0 0 1 2.8 0a1.2 1.2 0 0 1 .6 2.1z"/><path d="M351.3 244.3a1.2 1.2 0 0 1 .6-2.1a1.5 1.5 0 0 1 2.8 0a1.2 1.2 0 0 1 .6 2.1z"/><path d="M353.3 247.4a1.2 1.2 0 0 1 .6-2.1a1.5 1.5 0 0 1 2.8 0a1.2 1.2 0 0 1 .6 2.1z"/><path d="M321.2 229.8a1.2 1.2 0 0 1 .6-2.1a1.5 1.5 0 0 1 2.8 0a1.2 1.2 0 0 1 .6 2.1z"/><path d="M321.6 229.1a1.2 1.2 0 0 1 .6-2.1a1.5 1.5 0 0 1 2.8 0a1.2 1.2 0 0 1 .6 2.1z"/><path d="M321.3 228.3a1.2 1.2 0 0 1 .6-2.1a1.5 1.5 0 0 1 2.8 0a1.2 1.2 0 0 1 .6 2.1z"/><path d="M328.7 231.3a1.2 1.2 0 0 1 .6-2.1a1.5 1.5 0 0 1 2.8 0a1.2 1.2 0 0 1 .6 2.1z"/><path d="M346.2 240.3a1.2 1.2 0 0 1 .6-2.1a1.5 1.5 0 0 1 2.8 0a1.2 1.2 0 0 1 .6 2.1z"/><path d="M354.4 265.2a1.2 1.2 0 0 1 .6-2.1a1.5 1.5 0 0 1 2.8 0a1.2 1.2 0 0 1 .6 2.1z"/><path d="M337.7 244.4a1.2 1.2 0 0 1 .6-2.1a1.5 1.5 0 0 1 2.8 0a1.2 1.2 0 0 1 .6 2.1z"/><path d="M339.1 245.7a1.2 1.2 0 0 1 .6-2.1a1.5 1.5 0 0 1 2.8 0a1.2 1.2 0 0 1 .6 2.1z"/><path d="M338.1 246.5a1.2 1.2 0 0 1 .6-2.1a1.5 1.5 0 0 1 2.8 0a1.2 1.2 0 0 1 .6 2.1z"/><path d="M342.2 247.6a1.2 1.2 0 0 1 .6-2.1a1.5 1.5 0 0 1 2.8 0a1.2 1.2 0 0 1 .6 2.1z"/><path d="M342.6 246.9a1.2 1.2 0 0 1 .6-2.1a1.5 1.5 0 0 1 2.8 0a1.2 1.2 0 0 1 .6 2.1z"/><path d="M341.4 245.1a1.2 1.2 0 0 1 .6-2.1a1.5 1.5 0 0 1 2.8 0a1.2 1.2 0 0 1 .6 2.1z"/><path d="M339.7 248.6a1.2 1.2 0 0 1 .6-2.1a1.5 1.5 0 0 1 2.8 0a1.2 1.2 0 0 1 .6 2.1z"/><path d="M340.7 246.5a1.2 1.2 0 0 1 .6-2.1a1.5 1.5 0 0 1 2.8 0a1.2 1.2 0 0 1 .6 2.1z"/><path d="M353.5 267.8a1.2 1.2 0 0 1 .6-2.1a1.5 1.5 0 0 1 2.8 0a1.2 1.2 0 0 1 .6 2.1z"/><path d="M347.5 257.7a1.2 1.2 0 0 1 .6-2.1a1.5 1.5 0 0 1 2.8 0a1.2 1.2 0 0 1 .6 2.1z"/><path d="M351.3 258.7a1.2 1.2 0 0 1 .6-2.1a1.5 1.5 0 0 1 2.8 0a1.2 1.2 0 0 1 .6 2.1z"/><path d="M344.9 255.1a1.2 1.2 0 0 1 .6-2.1a1.5 1.5 0 0 1 2.8 0a1.2 1.2 0 0 1 .6 2.1z"/><path d="M336.6 245.2a1.2 1.2 0 0 1 .6-2.1a1.5 1.5 0 0 1 2.8 0a1.2 1.2 0 0 1 .6 2.1z"/><path d="M351.4 263.8a1.2 1.2 0 0 1 .6-2.1a1.5 1.5 0 0 1 2.8 0a1.2 1.2 0 0 1 .6 2.1z"/><path d="M326.3 235.7a1.2 1.2 0 0 1 .6-2.1a1.5 1.5 0 0 1 2.8 0a1.2 1.2 0 0 1 .6 2.1z"/><path d="M336.3 244.7a1.2 1.2 0 0 1 .6-2.1a1.5 1.5 0 0 1 2.8 0a1.2 1.2 0 0 1 .6 2.1z"/><path d="M343.4 247.7a1.2 1.2 0 0 1 .6-2.1a1.5 1.5 0 0 1 2.8 0a1.2 1.2 0 0 1 .6 2.1z"/><path d="M318.7 340.3a1.2 1.2 0 0 1 .6-2.1a1.5 1.5 0 0 1 2.8 0a1.2 1.2 0 0 1 .6 2.1z"/><path d="M321.2 347.2a1.2 1.2 0 0 1 .6-2.1a1.5 1.5 0 0 1 2.8 0a1.2 1.2 0 0 1 .6 2.1z"/></g>
<g fill="#262626" fill-opacity="0.85"><circle cx="164.0" cy="440.1" r="1.85"/><circle cx="163.1" cy="448.4" r="1.85"/><circle cx="162.0" cy="464.7" r="1.85"/><circle cx="161.7" cy="452.3" r="1.85"/><circle cx="161.1" cy="455.2" r="1.85"/><circle cx="163.9" cy="433.9" r="1.85"/><circle cx="162.1" cy="483.2" r="1.85"/><circle cx="161.1" cy="483.0" r="1.85"/><circle cx="163.4" cy="465.7" r="1.85"/><circle cx="162.0" cy="443.5" r="1.85"/><circle cx="161.9" cy="447.4" r="1.85"/><circle cx="161.0" cy="460.2" r="1.85"/><circle cx="159.7" cy="437.8" r="1.85"/><circle cx="162.5" cy="477.8" r="1.85"/><circle cx="161.8" cy="483.0" r="1.85"/><circle cx="161.8" cy="445.5" r="1.85"/><circle cx="162.2" cy="476.8" r="1.85"/><circle cx="162.1" cy="476.5" r="1.85"/><circle cx="164.5" cy="482.7" r="1.85"/><circle cx="162.8" cy="482.9" r="1.85"/><circle cx="163.1" cy="497.1" r="1.85"/><circle cx="160.6" cy="482.6" r="1.85"/><circle cx="163.5" cy="501.2" r="1.85"/><circle cx="161.9" cy="488.8" r="1.85"/><circle cx="163.1" cy="478.9" r="1.85"/><circle cx="162.0" cy="467.5" r="1.85"/><circle cx="161.0" cy="448.5" r="1.85"/><circle cx="162.6" cy="435.0" r="1.85"/><circle cx="164.4" cy="456.2" r="1.85"/><circle cx="161.3" cy="477.1" r="1.85"/><circle cx="164.1" cy="447.8" r="1.85"/><circle cx="161.3" cy="486.5" r="1.85"/><circle cx="164.4" cy="488.3" r="1.85"/><circle cx="161.9" cy="484.2" r="1.85"/><circle cx="164.3" cy="452.7" r="1.85"/><circle cx="163.3" cy="497.6" r="1.85"/><circle cx="162.8" cy="461.9" r="1.85"/><circle cx="164.2" cy="477.3" r="1.85"/><circle cx="163.0" cy="443.9" r="1.85"/><circle cx="162.2" cy="499.5" r="1.85"/><circle cx="161.5" cy="484.6" r="1.85"/><circle cx="161.5" cy="478.7" r="1.85"/><circle cx="161.8" cy="462.3" r="1.85"/><circle cx="162.2" cy="482.4" r="1.85"/><circle cx="161.9" cy="496.5" r="1.85"/><circle cx="164.3" cy="480.2" r="1.85"/><circle cx="161.4" cy="469.7" r="1.85"/><circle cx="162.5" cy="445.1" r="1.85"/><circle cx="162.0" cy="459.3" r="1.85"/><circle cx="161.4" cy="471.8" r="1.85"/><circle cx="161.0" cy="470.0" r="1.85"/><circle cx="163.2" cy="449.8" r="1.85"/><circle cx="162.4" cy="497.9" r="1.85"/><circle cx="161.8" cy="449.5" r="1.85"/><circle cx="164.1" cy="490.0" r="1.85"/><circle cx="161.8" cy="458.5" r="1.85"/><circle cx="161.2" cy="469.1" r="1.85"/><circle cx="165.3" cy="443.3" r="1.85"/><circle cx="163.3" cy="445.4" r="1.85"/><circle cx="161.1" cy="437.8" r="1.85"/><circle cx="163.5" cy="481.5" r="1.85"/><circle cx="166.0" cy="433.4" r="1.85"/><circle cx="163.2" cy="497.5" r="1.85"/><circle cx="163.7" cy="457.1" r="1.85"/><circle cx="160.6" cy="438.1" r="1.85"/><circle cx="161.8" cy="462.2" r="1.85"/><circle cx="164.0" cy="471.5" r="1.85"/><circle cx="161.0" cy="485.1" r="1.85"/><circle cx="161.0" cy="479.3" r="1.85"/><circle cx="162.8" cy="496.1" r="1.85"/><circle cx="164.4" cy="484.6" r="1.85"/><circle cx="164.0" cy="478.9" r="1.85"/><circle cx="161.9" cy="494.3" r="1.85"/><circle cx="162.2" cy="450.3" r="1.85"/><circle cx="164.7" cy="495.4" r="1.85"/><circle cx="162.6" cy="490.3" r="1.85"/><circle cx="159.4" cy="488.5" r="1.85"/><circle cx="162.4" cy="475.8" r="1.85"/><circle cx="161.4" cy="489.7" r="1.85"/><circle cx="164.0" cy="438.9" r="1.85"/><circle cx="162.9" cy="476.3" r="1.85"/><circle cx="163.1" cy="451.8" r="1.85"/><circle cx="162.6" cy="436.0" r="1.85"/><circle cx="162.3" cy="441.3" r="1.85"/><circle cx="162.6" cy="486.3" r="1.85"/><circle cx="161.4" cy="450.1" r="1.85"/><circle cx="161.7" cy="457.9" r="1.85"/><circle cx="162.1" cy="453.6" r="1.85"/><circle cx="161.4" cy="466.6" r="1.85"/><circle cx="166.0" cy="495.8" r="1.85"/><circle cx="162.2" cy="475.0" r="1.85"/><circle cx="163.2" cy="462.2" r="1.85"/><circle cx="160.4" cy="467.6" r="1.85"/><circle cx="162.6" cy="462.2" r="1.85"/><circle cx="164.7" cy="451.4" r="1.85"/><circle cx="163.0" cy="495.8" r="1.85"/><circle cx="161.0" cy="447.4" r="1.85"/><circle cx="162.4" cy="451.4" r="1.85"/><circle cx="162.9" cy="445.8" r="1.85"/><circle cx="165.0" cy="496.7" r="1.85"/><circle cx="162.8" cy="475.0" r="1.85"/><circle cx="160.3" cy="447.6" r="1.85"/><circle cx="163.3" cy="496.4" r="1.85"/><circle cx="163.1" cy="486.7" r="1.85"/><circle cx="162.9" cy="457.6" r="1.85"/><circle cx="162.0" cy="464.6" r="1.85"/><circle cx="161.3" cy="463.3" r="1.85"/><circle cx="164.2" cy="468.6" r="1.85"/><circle cx="162.4" cy="487.1" r="1.85"/><circle cx="161.4" cy="443.6" r="1.85"/><circle cx="190.5" cy="499.4" r="1.85"/><circle cx="181.0" cy="500.2" r="1.85"/><circle cx="198.1" cy="499.3" r="1.85"/><circle cx="175.6" cy="497.5" r="1.85"/><circle cx="199.8" cy="501.4" r="1.85"/><circle cx="168.3" cy="497.9" r="1.85"/><circle cx="205.2" cy="497.3" r="1.85"/><circle cx="200.6" cy="499.9" r="1.85"/><circle cx="197.1" cy="499.8" r="1.85"/><circle cx="197.5" cy="501.6" r="1.85"/><circle cx="201.0" cy="501.4" r="1.85"/><circle cx="167.3" cy="498.4" r="1.85"/><circle cx="169.2" cy="499.5" r="1.85"/><circle cx="193.3" cy="498.3" r="1.85"/><circle cx="193.5" cy="498.1" r="1.85"/><circle cx="206.8" cy="499.3" r="1.85"/><circle cx="180.1" cy="499.8" r="1.85"/><circle cx="205.5" cy="497.9" r="1.85"/><circle cx="179.4" cy="499.2" r="1.85"/><circle cx="161.8" cy="498.4" r="1.85"/><circle cx="211.1" cy="499.5" r="1.85"/><circle cx="198.3" cy="498.0" r="1.85"/><circle cx="201.6" cy="501.1" r="1.85"/><circle cx="182.5" cy="498.2" r="1.85"/><circle cx="177.9" cy="500.3" r="1.85"/><circle cx="198.8" cy="497.7" r="1.85"/><circle cx="211.4" cy="497.8" r="1.85"/><circle cx="172.8" cy="498.9" r="1.85"/><circle cx="171.2" cy="500.5" r="1.85"/><circle cx="196.7" cy="499.3" r="1.85"/><circle cx="169.8" cy="498.9" r="1.85"/><circle cx="202.3" cy="500.4" r="1.85"/><circle cx="204.2" cy="498.8" r="1.85"/><circle cx="195.9" cy="499.1" r="1.85"/><circle cx="164.4" cy="498.9" r="1.85"/><circle cx="191.0" cy="498.2" r="1.85"/><circle cx="202.7" cy="498.7" r="1.85"/><circle cx="195.2" cy="501.3" r="1.85"/><circle cx="186.1" cy="500.2" r="1.85"/><circle cx="197.9" cy="499.3" r="1.85"/><circle cx="199.2" cy="500.0" r="1.85"/><circle cx="161.3" cy="499.1" r="1.85"/><circle cx="189.7" cy="499.3" r="1.85"/><circle cx="167.5" cy="498.1" r="1.85"/><circle cx="200.3" cy="499.3" r="1.85"/><circle cx="174.3" cy="498.8" r="1.85"/><circle cx="198.4" cy="497.7" r="1.85"/><circle cx="184.5" cy="498.5" r="1.85"/><circle cx="180.9" cy="499.2" r="1.85"/><circle cx="185.3" cy="498.4" r="1.85"/><circle cx="171.4" cy="498.3" r="1.85"/><circle cx="192.6" cy="500.3" r="1.85"/><circle cx="174.0" cy="497.6" r="1.85"/><circle cx="177.7" cy="499.0" r="1.85"/><circle cx="187.3" cy="498.8" r="1.85"/><circle cx="206.7" cy="499.6" r="1.85"/><circle cx="196.5" cy="498.1" r="1.85"/><circle cx="197.5" cy="498.4" r="1.85"/><circle cx="181.5" cy="497.8" r="1.85"/><circle cx="171.1" cy="498.8" r="1.85"/><circle cx="189.0" cy="500.3" r="1.85"/><circle cx="175.7" cy="498.8" r="1.85"/><circle cx="184.3" cy="497.0" r="1.85"/><circle cx="172.3" cy="499.5" r="1.85"/><circle cx="211.2" cy="499.6" r="1.85"/><circle cx="177.6" cy="501.4" r="1.85"/><circle cx="204.5" cy="498.9" r="1.85"/><circle cx="164.2" cy="499.9" r="1.85"/><circle cx="205.4" cy="497.9" r="1.85"/><circle cx="180.1" cy="497.7" r="1.85"/><circle cx="199.0" cy="498.3" r="1.85"/><circle cx="196.7" cy="500.3" r="1.85"/><circle cx="169.5" cy="498.8" r="1.85"/><circle cx="200.3" cy="499.1" r="1.85"/><circle cx="179.6" cy="498.7" r="1.85"/><circle cx="209.9" cy="499.5" r="1.85"/><circle cx="194.8" cy="500.0" r="1.85"/><circle cx="197.1" cy="500.5" r="1.85"/><circle cx="207.9" cy="498.4" r="1.85"/><circle cx="179.3" cy="498.7" r="1.85"/><circle cx="193.4" cy="498.4" r="1.85"/><circle cx="205.5" cy="500.7" r="1.85"/><circle cx="201.9" cy="498.2" r="1.85"/><circle cx="174.6" cy="498.7" r="1.85"/><circle cx="203.8" cy="499.6" r="1.85"/><circle cx="182.2" cy="498.8" r="1.85"/><circle cx="194.9" cy="499.5" r="1.85"/><circle cx="175.2" cy="499.9" r="1.85"/><circle cx="204.5" cy="498.2" r="1.85"/><circle cx="171.9" cy="498.1" r="1.85"/><circle cx="202.0" cy="488.8" r="1.85"/><circle cx="207.7" cy="485.0" r="1.85"/><circle cx="201.5" cy="489.0" r="1.85"/><circle cx="208.9" cy="481.7" r="1.85"/><circle cx="203.1" cy="486.9" r="1.85"/><circle cx="197.1" cy="490.8" r="1.85"/><circle cx="208.9" cy="476.0" r="1.85"/><circle cx="209.3" cy="480.9" r="1.85"/><circle cx="211.6" cy="480.1" r="1.85"/><circle cx="201.3" cy="489.8" r="1.85"/><circle cx="203.0" cy="490.1" r="1.85"/><circle cx="213.9" cy="480.9" r="1.85"/><circle cx="203.8" cy="482.9" r="1.85"/><circle cx="208.8" cy="481.3" r="1.85"/><circle cx="188.3" cy="435.1" r="1.85"/><circle cx="188.3" cy="439.8" r="1.85"/><circle cx="196.2" cy="441.9" r="1.85"/><circle cx="205.2" cy="439.8" r="1.85"/></g>
<g fill="#f6c98a" fill-opacity="0.92"><path d="M233.0 441.3q1.05-.8 2.1.3q1.05-1.1 2.1-.3l-2.1 3z"/><path d="M247.0 416.7q1.05-.8 2.1.3q1.05-1.1 2.1-.3l-2.1 3z"/><path d="M255.2 400.9q1.05-.8 2.1.3q1.05-1.1 2.1-.3l-2.1 3z"/><path d="M216.1 469.4q1.05-.8 2.1.3q1.05-1.1 2.1-.3l-2.1 3z"/><path d="M227.7 449.5q1.05-.8 2.1.3q1.05-1.1 2.1-.3l-2.1 3z"/><path d="M243.5 422.6q1.05-.8 2.1.3q1.05-1.1 2.1-.3l-2.1 3z"/><path d="M233.7 452.0q1.05-.8 2.1.3q1.05-1.1 2.1-.3l-2.1 3z"/><path d="M209.1 479.0q1.05-.8 2.1.3q1.05-1.1 2.1-.3l-2.1 3z"/><path d="M257.2 395.0q1.05-.8 2.1.3q1.05-1.1 2.1-.3l-2.1 3z"/><path d="M249.9 409.0q1.05-.8 2.1.3q1.05-1.1 2.1-.3l-2.1 3z"/><path d="M235.0 441.2q1.05-.8 2.1.3q1.05-1.1 2.1-.3l-2.1 3z"/><path d="M238.9 432.8q1.05-.8 2.1.3q1.05-1.1 2.1-.3l-2.1 3z"/><path d="M217.9 467.8q1.05-.8 2.1.3q1.05-1.1 2.1-.3l-2.1 3z"/><path d="M242.5 429.8q1.05-.8 2.1.3q1.05-1.1 2.1-.3l-2.1 3z"/><path d="M259.4 387.7q1.05-.8 2.1.3q1.05-1.1 2.1-.3l-2.1 3z"/><path d="M223.1 470.1q1.05-.8 2.1.3q1.05-1.1 2.1-.3l-2.1 3z"/><path d="M221.7 466.9q1.05-.8 2.1.3q1.05-1.1 2.1-.3l-2.1 3z"/><path d="M257.3 389.4q1.05-.8 2.1.3q1.05-1.1 2.1-.3l-2.1 3z"/><path d="M221.2 458.7q1.05-.8 2.1.3q1.05-1.1 2.1-.3l-2.1 3z"/><path d="M255.1 393.1q1.05-.8 2.1.3q1.05-1.1 2.1-.3l-2.1 3z"/><path d="M233.0 443.1q1.05-.8 2.1.3q1.05-1.1 2.1-.3l-2.1 3z"/><path d="M251.8 414.4q1.05-.8 2.1.3q1.05-1.1 2.1-.3l-2.1 3z"/><path d="M236.6 436.4q1.05-.8 2.1.3q1.05-1.1 2.1-.3l-2.1 3z"/><path d="M237.2 440.5q1.05-.8 2.1.3q1.05-1.1 2.1-.3l-2.1 3z"/><path d="M229.9 449.5q1.05-.8 2.1.3q1.05-1.1 2.1-.3l-2.1 3z"/><path d="M211.3 473.2q1.05-.8 2.1.3q1.05-1.1 2.1-.3l-2.1 3z"/><path d="M214.2 474.6q1.05-.8 2.1.3q1.05-1.1 2.1-.3l-2.1 3z"/><path d="M257.4 390.6q1.05-.8 2.1.3q1.05-1.1 2.1-.3l-2.1 3z"/><path d="M229.2 448.3q1.05-.8 2.1.3q1.05-1.1 2.1-.3l-2.1 3z"/><path d="M215.3 468.7q1.05-.8 2.1.3q1.05-1.1 2.1-.3l-2.1 3z"/><path d="M235.1 442.9q1.05-.8 2.1.3q1.05-1.1 2.1-.3l-2.1 3z"/><path d="M211.1 479.1q1.05-.8 2.1.3q1.05-1.1 2.1-.3l-2.1 3z"/><path d="M251.7 412.5q1.05-.8 2.1.3q1.05-1.1 2.1-.3l-2.1 3z"/><path d="M220.7 457.8q1.05-.8 2.1.3q1.05-1.1 2.1-.3l-2.1 3z"/><path d="M251.0 407.8q1.05-.8 2.1.3q1.05-1.1 2.1-.3l-2.1 3z"/><path d="M229.0 445.6q1.05-.8 2.1.3q1.05-1.1 2.1-.3l-2.1 3z"/><path d="M228.8 459.8q1.05-.8 2.1.3q1.05-1.1 2.1-.3l-2.1 3z"/><path d="M251.2 424.7q1.05-.8 2.1.3q1.05-1.1 2.1-.3l-2.1 3z"/><path d="M222.5 463.2q1.05-.8 2.1.3q1.05-1.1 2.1-.3l-2.1 3z"/><path d="M255.0 402.2q1.05-.8 2.1.3q1.05-1.1 2.1-.3l-2.1 3z"/><path d="M239.8 441.3q1.05-.8 2.1.3q1.05-1.1 2.1-.3l-2.1 3z"/><path d="M226.7 463.0q1.05-.8 2.1.3q1.05-1.1 2.1-.3l-2.1 3z"/><path d="M243.2 431.2q1.05-.8 2.1.3q1.05-1.1 2.1-.3l-2.1 3z"/><path d="M224.2 449.3q1.05-.8 2.1.3q1.05-1.1 2.1-.3l-2.1 3z"/><path d="M246.1 424.6q1.05-.8 2.1.3q1.05-1.1 2.1-.3l-2.1 3z"/><path d="M225.6 458.5q1.05-.8 2.1.3q1.05-1.1 2.1-.3l-2.1 3z"/><path d="M225.4 457.7q1.05-.8 2.1.3q1.05-1.1 2.1-.3l-2.1 3z"/><path d="M234.3 441.7q1.05-.8 2.1.3q1.05-1.1 2.1-.3l-2.1 3z"/><path d="M244.1 426.2q1.05-.8 2.1.3q1.05-1.1 2.1-.3l-2.1 3z"/><path d="M248.5 413.9q1.05-.8 2.1.3q1.05-1.1 2.1-.3l-2.1 3z"/><path d="M234.3 443.5q1.05-.8 2.1.3q1.05-1.1 2.1-.3l-2.1 3z"/><path d="M228.8 450.6q1.05-.8 2.1.3q1.05-1.1 2.1-.3l-2.1 3z"/><path d="M211.5 476.0q1.05-.8 2.1.3q1.05-1.1 2.1-.3l-2.1 3z"/><path d="M254.0 394.3q1.05-.8 2.1.3q1.05-1.1 2.1-.3l-2.1 3z"/><path d="M243.3 430.2q1.05-.8 2.1.3q1.05-1.1 2.1-.3l-2.1 3z"/><path d="M250.6 406.5q1.05-.8 2.1.3q1.05-1.1 2.1-.3l-2.1 3z"/><path d="M232.2 450.2q1.05-.8 2.1.3q1.05-1.1 2.1-.3l-2.1 3z"/><path d="M255.7 409.1q1.05-.8 2.1.3q1.05-1.1 2.1-.3l-2.1 3z"/><path d="M250.4 413.7q1.05-.8 2.1.3q1.05-1.1 2.1-.3l-2.1 3z"/><path d="M240.2 431.0q1.05-.8 2.1.3q1.05-1.1 2.1-.3l-2.1 3z"/><path d="M254.4 402.8q1.05-.8 2.1.3q1.05-1.1 2.1-.3l-2.1 3z"/><path d="M250.0 410.9q1.05-.8 2.1.3q1.05-1.1 2.1-.3l-2.1 3z"/><path d="M258.7 392.6q1.05-.8 2.1.3q1.05-1.1 2.1-.3l-2.1 3z"/><path d="M235.5 444.9q1.05-.8 2.1.3q1.05-1.1 2.1-.3l-2.1 3z"/><path d="M246.4 423.7q1.05-.8 2.1.3q1.05-1.1 2.1-.3l-2.1 3z"/><path d="M240.2 435.8q1.05-.8 2.1.3q1.05-1.1 2.1-.3l-2.1 3z"/><path d="M257.2 395.8q1.05-.8 2.1.3q1.05-1.1 2.1-.3l-2.1 3z"/><path d="M254.6 413.4q1.05-.8 2.1.3q1.05-1.1 2.1-.3l-2.1 3z"/><path d="M230.8 451.8q1.05-.8 2.1.3q1.05-1.1 2.1-.3l-2.1 3z"/><path d="M256.5 408.7q1.05-.8 2.1.3q1.05-1.1 2.1-.3l-2.1 3z"/><path d="M244.8 429.6q1.05-.8 2.1.3q1.05-1.1 2.1-.3l-2.1 3z"/><path d="M235.5 444.9q1.05-.8 2.1.3q1.05-1.1 2.1-.3l-2.1 3z"/><path d="M258.7 389.0q1.05-.8 2.1.3q1.05-1.1 2.1-.3l-2.1 3z"/><path d="M227.2 454.8q1.05-.8 2.1.3q1.05-1.1 2.1-.3l-2.1 3z"/><path d="M229.4 446.9q1.05-.8 2.1.3q1.05-1.1 2.1-.3l-2.1 3z"/><path d="M233.3 442.1q1.05-.8 2.1.3q1.05-1.1 2.1-.3l-2.1 3z"/><path d="M260.4 393.6q1.05-.8 2.1.3q1.05-1.1 2.1-.3l-2.1 3z"/><path d="M224.8 455.3q1.05-.8 2.1.3q1.05-1.1 2.1-.3l-2.1 3z"/><path d="M246.6 420.6q1.05-.8 2.1.3q1.05-1.1 2.1-.3l-2.1 3z"/><path d="M258.2 384.8q1.05-.8 2.1.3q1.05-1.1 2.1-.3l-2.1 3z"/><path d="M219.5 487.6q1.05-.8 2.1.3q1.05-1.1 2.1-.3l-2.1 3z"/><path d="M253.3 460.5q1.05-.8 2.1.3q1.05-1.1 2.1-.3l-2.1 3z"/><path d="M226.5 488.2q1.05-.8 2.1.3q1.05-1.1 2.1-.3l-2.1 3z"/><path d="M231.0 480.8q1.05-.8 2.1.3q1.05-1.1 2.1-.3l-2.1 3z"/><path d="M256.9 457.6q1.05-.8 2.1.3q1.05-1.1 2.1-.3l-2.1 3z"/><path d="M248.0 466.7q1.05-.8 2.1.3q1.05-1.1 2.1-.3l-2.1 3z"/><path d="M223.4 483.7q1.05-.8 2.1.3q1.05-1.1 2.1-.3l-2.1 3z"/><path d="M228.3 482.0q1.05-.8 2.1.3q1.05-1.1 2.1-.3l-2.1 3z"/><path d="M257.7 454.4q1.05-.8 2.1.3q1.05-1.1 2.1-.3l-2.1 3z"/><path d="M261.7 457.3q1.05-.8 2.1.3q1.05-1.1 2.1-.3l-2.1 3z"/><path d="M254.2 463.5q1.05-.8 2.1.3q1.05-1.1 2.1-.3l-2.1 3z"/><path d="M243.2 470.5q1.05-.8 2.1.3q1.05-1.1 2.1-.3l-2.1 3z"/><path d="M251.9 461.5q1.05-.8 2.1.3q1.05-1.1 2.1-.3l-2.1 3z"/><path d="M216.9 493.6q1.05-.8 2.1.3q1.05-1.1 2.1-.3l-2.1 3z"/><path d="M256.5 458.8q1.05-.8 2.1.3q1.05-1.1 2.1-.3l-2.1 3z"/><path d="M242.9 469.8q1.05-.8 2.1.3q1.05-1.1 2.1-.3l-2.1 3z"/><path d="M230.5 480.1q1.05-.8 2.1.3q1.05-1.1 2.1-.3l-2.1 3z"/><path d="M253.6 461.6q1.05-.8 2.1.3q1.05-1.1 2.1-.3l-2.1 3z"/><path d="M236.0 474.0q1.05-.8 2.1.3q1.05-1.1 2.1-.3l-2.1 3z"/><path d="M243.8 467.5q1.05-.8 2.1.3q1.05-1.1 2.1-.3l-2.1 3z"/><path d="M213.3 493.0q1.05-.8 2.1.3q1.05-1.1 2.1-.3l-2.1 3z"/><path d="M225.1 483.2q1.05-.8 2.1.3q1.05-1.1 2.1-.3l-2.1 3z"/><path d="M248.4 468.0q1.05-.8 2.1.3q1.05-1.1 2.1-.3l-2.1 3z"/><path d="M217.5 494.9q1.05-.8 2.1.3q1.05-1.1 2.1-.3l-2.1 3z"/><path d="M245.5 466.3q1.05-.8 2.1.3q1.05-1.1 2.1-.3l-2.1 3z"/><path d="M232.7 479.5q1.05-.8 2.1.3q1.05-1.1 2.1-.3l-2.1 3z"/><path d="M214.8 495.4q1.05-.8 2.1.3q1.05-1.1 2.1-.3l-2.1 3z"/><path d="M241.1 469.7q1.05-.8 2.1.3q1.05-1.1 2.1-.3l-2.1 3z"/><path d="M259.5 461.1q1.05-.8 2.1.3q1.05-1.1 2.1-.3l-2.1 3z"/><path d="M238.3 475.7q1.05-.8 2.1.3q1.05-1.1 2.1-.3l-2.1 3z"/><path d="M245.1 470.7q1.05-.8 2.1.3q1.05-1.1 2.1-.3l-2.1 3z"/><path d="M235.1 479.6q1.05-.8 2.1.3q1.05-1.1 2.1-.3l-2.1 3z"/><path d="M245.4 469.7q1.05-.8 2.1.3q1.05-1.1 2.1-.3l-2.1 3z"/><path d="M253.2 465.7q1.05-.8 2.1.3q1.05-1.1 2.1-.3l-2.1 3z"/><path d="M237.1 476.9q1.05-.8 2.1.3q1.05-1.1 2.1-.3l-2.1 3z"/><path d="M214.0 492.0q1.05-.8 2.1.3q1.05-1.1 2.1-.3l-2.1 3z"/><path d="M256.9 453.9q1.05-.8 2.1.3q1.05-1.1 2.1-.3l-2.1 3z"/><path d="M246.9 465.9q1.05-.8 2.1.3q1.05-1.1 2.1-.3l-2.1 3z"/><path d="M234.4 476.8q1.05-.8 2.1.3q1.05-1.1 2.1-.3l-2.1 3z"/><path d="M234.2 478.9q1.05-.8 2.1.3q1.05-1.1 2.1-.3l-2.1 3z"/><path d="M258.6 453.3q1.05-.8 2.1.3q1.05-1.1 2.1-.3l-2.1 3z"/><path d="M226.6 484.9q1.05-.8 2.1.3q1.05-1.1 2.1-.3l-2.1 3z"/><path d="M253.4 456.6q1.05-.8 2.1.3q1.05-1.1 2.1-.3l-2.1 3z"/><path d="M237.8 471.3q1.05-.8 2.1.3q1.05-1.1 2.1-.3l-2.1 3z"/><path d="M216.3 490.2q1.05-.8 2.1.3q1.05-1.1 2.1-.3l-2.1 3z"/></g>
<g fill="#f218f0" fill-opacity="0.92"><circle cx="271.7" cy="382.7" r="1.85"/><circle cx="275.1" cy="390.1" r="1.85"/><circle cx="272.6" cy="402.2" r="1.85"/><circle cx="279.4" cy="376.7" r="1.85"/><circle cx="261.1" cy="404.6" r="1.85"/><circle cx="278.3" cy="378.4" r="1.85"/><circle cx="267.5" cy="379.1" r="1.85"/><circle cx="275.2" cy="391.6" r="1.85"/><circle cx="268.8" cy="395.7" r="1.85"/><circle cx="266.6" cy="380.5" r="1.85"/><circle cx="281.5" cy="374.2" r="1.85"/><circle cx="271.0" cy="366.5" r="1.85"/><circle cx="265.4" cy="405.9" r="1.85"/><circle cx="269.6" cy="405.5" r="1.85"/><circle cx="270.0" cy="381.1" r="1.85"/><circle cx="280.2" cy="375.3" r="1.85"/><circle cx="265.3" cy="377.0" r="1.85"/><circle cx="266.4" cy="408.6" r="1.85"/><circle cx="275.9" cy="390.8" r="1.85"/><circle cx="265.8" cy="409.6" r="1.85"/><circle cx="269.2" cy="400.6" r="1.85"/><circle cx="264.8" cy="393.2" r="1.85"/><circle cx="271.6" cy="399.7" r="1.85"/><circle cx="268.3" cy="377.2" r="1.85"/><circle cx="274.7" cy="410.0" r="1.85"/><circle cx="270.0" cy="371.5" r="1.85"/><circle cx="274.0" cy="400.9" r="1.85"/><circle cx="273.7" cy="385.5" r="1.85"/><circle cx="268.3" cy="397.7" r="1.85"/><circle cx="261.6" cy="407.4" r="1.85"/><circle cx="272.6" cy="395.4" r="1.85"/><circle cx="268.5" cy="377.1" r="1.85"/><circle cx="259.0" cy="412.1" r="1.85"/><circle cx="265.8" cy="409.2" r="1.85"/><circle cx="274.1" cy="387.2" r="1.85"/><circle cx="275.1" cy="391.5" r="1.85"/><circle cx="276.7" cy="375.4" r="1.85"/><circle cx="259.5" cy="401.0" r="1.85"/><circle cx="266.6" cy="405.1" r="1.85"/><circle cx="269.8" cy="373.6" r="1.85"/><circle cx="269.9" cy="391.3" r="1.85"/><circle cx="268.5" cy="386.3" r="1.85"/><circle cx="274.3" cy="386.8" r="1.85"/><circle cx="269.9" cy="370.9" r="1.85"/><circle cx="261.0" cy="395.4" r="1.85"/><circle cx="260.9" cy="410.0" r="1.85"/><circle cx="277.4" cy="382.9" r="1.85"/><circle cx="269.6" cy="396.2" r="1.85"/><circle cx="266.0" cy="398.3" r="1.85"/><circle cx="268.7" cy="381.4" r="1.85"/><circle cx="276.1" cy="406.8" r="1.85"/><circle cx="260.0" cy="368.1" r="1.85"/><circle cx="265.7" cy="410.5" r="1.85"/><circle cx="270.3" cy="400.6" r="1.85"/><circle cx="269.3" cy="410.1" r="1.85"/><circle cx="274.4" cy="386.9" r="1.85"/><circle cx="271.8" cy="399.9" r="1.85"/><circle cx="272.8" cy="390.2" r="1.85"/><circle cx="266.4" cy="401.5" r="1.85"/><circle cx="278.9" cy="388.5" r="1.85"/><circle cx="272.1" cy="386.2" r="1.85"/><circle cx="275.9" cy="379.3" r="1.85"/><circle cx="271.6" cy="374.4" r="1.85"/><circle cx="267.4" cy="410.5" r="1.85"/><circle cx="270.3" cy="367.0" r="1.85"/><circle cx="279.1" cy="376.4" r="1.85"/><circle cx="274.5" cy="376.0" r="1.85"/><circle cx="276.6" cy="382.8" r="1.85"/><circle cx="268.6" cy="372.0" r="1.85"/><circle cx="274.5" cy="385.2" r="1.85"/><circle cx="259.1" cy="402.3" r="1.85"/><circle cx="273.6" cy="383.3" r="1.85"/><circle cx="277.1" cy="389.5" r="1.85"/><circle cx="267.2" cy="385.6" r="1.85"/><circle cx="271.2" cy="390.3" r="1.85"/><circle cx="264.7" cy="404.8" r="1.85"/><circle cx="263.1" cy="381.3" r="1.85"/><circle cx="271.5" cy="384.9" r="1.85"/><circle cx="264.7" cy="378.9" r="1.85"/><circle cx="273.0" cy="383.6" r="1.85"/><circle cx="275.4" cy="399.1" r="1.85"/><circle cx="269.5" cy="384.8" r="1.85"/><circle cx="259.8" cy="382.7" r="1.85"/><circle cx="267.9" cy="400.1" r="1.85"/><circle cx="270.3" cy="414.3" r="1.85"/><circle cx="273.9" cy="402.3" r="1.85"/><circle cx="259.7" cy="404.4" r="1.85"/><circle cx="269.1" cy="375.1" r="1.85"/><circle cx="268.3" cy="400.3" r="1.85"/><circle cx="266.4" cy="381.9" r="1.85"/><circle cx="274.7" cy="396.7" r="1.85"/><circle cx="265.4" cy="401.2" r="1.85"/><circle cx="273.8" cy="403.1" r="1.85"/><circle cx="274.8" cy="395.7" r="1.85"/><circle cx="267.5" cy="406.1" r="1.85"/><circle cx="277.0" cy="397.4" r="1.85"/><circle cx="277.5" cy="377.1" r="1.85"/><circle cx="266.6" cy="375.9" r="1.85"/><circle cx="263.6" cy="393.0" r="1.85"/><circle cx="261.7" cy="404.7" r="1.85"/><circle cx="270.4" cy="380.1" r="1.85"/><circle cx="259.7" cy="391.8" r="1.85"/><circle cx="262.6" cy="388.1" r="1.85"/><circle cx="266.6" cy="391.5" r="1.85"/><circle cx="269.6" cy="385.6" r="1.85"/><circle cx="277.9" cy="397.4" r="1.85"/><circle cx="262.8" cy="399.3" r="1.85"/><circle cx="272.7" cy="385.5" r="1.85"/><circle cx="267.6" cy="402.5" r="1.85"/><circle cx="268.4" cy="399.5" r="1.85"/><circle cx="295.5" cy="402.7" r="1.85"/><circle cx="291.2" cy="410.1" r="1.85"/><circle cx="294.1" cy="401.4" r="1.85"/><circle cx="300.5" cy="397.3" r="1.85"/><circle cx="301.4" cy="407.8" r="1.85"/><circle cx="293.6" cy="411.3" r="1.85"/><circle cx="280.1" cy="401.8" r="1.85"/><circle cx="304.9" cy="393.4" r="1.85"/><circle cx="294.3" cy="396.8" r="1.85"/><circle cx="294.5" cy="404.7" r="1.85"/><circle cx="270.5" cy="398.2" r="1.85"/><circle cx="296.9" cy="410.7" r="1.85"/><circle cx="295.3" cy="406.9" r="1.85"/><circle cx="289.9" cy="412.7" r="1.85"/><circle cx="275.7" cy="402.7" r="1.85"/><circle cx="294.7" cy="407.3" r="1.85"/><circle cx="276.8" cy="399.0" r="1.85"/><circle cx="283.8" cy="400.5" r="1.85"/><circle cx="302.6" cy="399.0" r="1.85"/><circle cx="319.5" cy="392.2" r="1.85"/><circle cx="287.5" cy="395.4" r="1.85"/><circle cx="286.2" cy="410.7" r="1.85"/><circle cx="278.1" cy="394.9" r="1.85"/><circle cx="310.7" cy="396.3" r="1.85"/><circle cx="282.1" cy="410.2" r="1.85"/><circle cx="289.7" cy="396.6" r="1.85"/><circle cx="294.3" cy="400.9" r="1.85"/><circle cx="312.8" cy="398.2" r="1.85"/><circle cx="290.2" cy="405.6" r="1.85"/><circle cx="278.6" cy="398.8" r="1.85"/><circle cx="298.0" cy="418.1" r="1.85"/><circle cx="298.2" cy="432.5" r="1.85"/><circle cx="293.8" cy="421.1" r="1.85"/><circle cx="291.7" cy="417.3" r="1.85"/><circle cx="293.8" cy="427.9" r="1.85"/><circle cx="302.9" cy="408.5" r="1.85"/><circle cx="290.9" cy="422.7" r="1.85"/><circle cx="292.4" cy="426.7" r="1.85"/><circle cx="305.3" cy="414.7" r="1.85"/><circle cx="307.4" cy="411.9" r="1.85"/><circle cx="302.7" cy="416.0" r="1.85"/><circle cx="279.3" cy="418.8" r="1.85"/><circle cx="282.5" cy="414.6" r="1.85"/><circle cx="281.4" cy="412.1" r="1.85"/><circle cx="301.1" cy="418.2" r="1.85"/><circle cx="303.5" cy="426.2" r="1.85"/><circle cx="285.8" cy="417.6" r="1.85"/><circle cx="289.0" cy="419.2" r="1.85"/><circle cx="266.1" cy="456.0" r="1.85"/><circle cx="271.3" cy="454.3" r="1.85"/><circle cx="272.3" cy="452.4" r="1.85"/><circle cx="280.8" cy="434.0" r="1.85"/><circle cx="278.3" cy="449.4" r="1.85"/><circle cx="275.4" cy="451.5" r="1.85"/><circle cx="277.1" cy="443.6" r="1.85"/><circle cx="279.9" cy="438.9" r="1.85"/><circle cx="262.4" cy="459.7" r="1.85"/><circle cx="272.1" cy="456.7" r="1.85"/><circle cx="264.2" cy="464.6" r="1.85"/><circle cx="276.7" cy="439.2" r="1.85"/><circle cx="282.3" cy="440.6" r="1.85"/><circle cx="271.7" cy="455.8" r="1.85"/><circle cx="264.7" cy="458.2" r="1.85"/><circle cx="276.8" cy="437.0" r="1.85"/><circle cx="277.2" cy="452.8" r="1.85"/><circle cx="275.9" cy="449.5" r="1.85"/><circle cx="304.0" cy="415.5" r="1.85"/><circle cx="309.5" cy="402.1" r="1.85"/><circle cx="303.0" cy="411.9" r="1.85"/><circle cx="311.3" cy="405.1" r="1.85"/><circle cx="306.6" cy="410.8" r="1.85"/><circle cx="296.2" cy="422.4" r="1.85"/><circle cx="302.9" cy="409.8" r="1.85"/><circle cx="302.7" cy="421.4" r="1.85"/><circle cx="292.2" cy="428.7" r="1.85"/><circle cx="301.5" cy="423.2" r="1.85"/><circle cx="310.0" cy="403.0" r="1.85"/><circle cx="294.6" cy="426.8" r="1.85"/><circle cx="297.4" cy="435.8" r="1.85"/><circle cx="304.6" cy="419.3" r="1.85"/></g>
<g fill="#2f8a12" fill-opacity="0.92"><path d="M439.5 412.3a1.2 1.2 0 0 1 .6-2.1a1.5 1.5 0 0 1 2.8 0a1.2 1.2 0 0 1 .6 2.1z"/><path d="M322.2 407.1a1.2 1.2 0 0 1 .6-2.1a1.5 1.5 0 0 1 2.8 0a1.2 1.2 0 0 1 .6 2.1z"/><path d="M451.3 411.0a1.2 1.2 0 0 1 .6-2.1a1.5 1.5 0 0 1 2.8 0a1.2 1.2 0 0 1 .6 2.1z"/><path d="M452.0 415.7a1.2 1.2 0 0 1 .6-2.1a1.5 1.5 0 0 1 2.8 0a1.2 1.2 0 0 1 .6 2.1z"/><path d="M345.9 409.9a1.2 1.2 0 0 1 .6-2.1a1.5 1.5 0 0 1 2.8 0a1.2 1.2 0 0 1 .6 2.1z"/><path d="M401.2 414.4a1.2 1.2 0 0 1 .6-2.1a1.5 1.5 0 0 1 2.8 0a1.2 1.2 0 0 1 .6 2.1z"/><path d="M419.8 414.7a1.2 1.2 0 0 1 .6-2.1a1.5 1.5 0 0 1 2.8 0a1.2 1.2 0 0 1 .6 2.1z"/><path d="M388.1 414.1a1.2 1.2 0 0 1 .6-2.1a1.5 1.5 0 0 1 2.8 0a1.2 1.2 0 0 1 .6 2.1z"/><path d="M480.9 414.6a1.2 1.2 0 0 1 .6-2.1a1.5 1.5 0 0 1 2.8 0a1.2 1.2 0 0 1 .6 2.1z"/><path d="M449.3 416.6a1.2 1.2 0 0 1 .6-2.1a1.5 1.5 0 0 1 2.8 0a1.2 1.2 0 0 1 .6 2.1z"/><path d="M360.5 408.1a1.2 1.2 0 0 1 .6-2.1a1.5 1.5 0 0 1 2.8 0a1.2 1.2 0 0 1 .6 2.1z"/><path d="M350.0 412.1a1.2 1.2 0 0 1 .6-2.1a1.5 1.5 0 0 1 2.8 0a1.2 1.2 0 0 1 .6 2.1z"/><path d="M417.7 412.5a1.2 1.2 0 0 1 .6-2.1a1.5 1.5 0 0 1 2.8 0a1.2 1.2 0 0 1 .6 2.1z"/><path d="M361.6 415.2a1.2 1.2 0 0 1 .6-2.1a1.5 1.5 0 0 1 2.8 0a1.2 1.2 0 0 1 .6 2.1z"/><path d="M365.7 408.3a1.2 1.2 0 0 1 .6-2.1a1.5 1.5 0 0 1 2.8 0a1.2 1.2 0 0 1 .6 2.1z"/><path d="M382.5 414.8a1.2 1.2 0 0 1 .6-2.1a1.5 1.5 0 0 1 2.8 0a1.2 1.2 0 0 1 .6 2.1z"/><path d="M453.7 417.4a1.2 1.2 0 0 1 .6-2.1a1.5 1.5 0 0 1 2.8 0a1.2 1.2 0 0 1 .6 2.1z"/><path d="M483.5 413.6a1.2 1.2 0 0 1 .6-2.1a1.5 1.5 0 0 1 2.8 0a1.2 1.2 0 0 1 .6 2.1z"/><path d="M425.6 409.3a1.2 1.2 0 0 1 .6-2.1a1.5 1.5 0 0 1 2.8 0a1.2 1.2 0 0 1 .6 2.1z"/><path d="M380.4 412.7a1.2 1.2 0 0 1 .6-2.1a1.5 1.5 0 0 1 2.8 0a1.2 1.2 0 0 1 .6 2.1z"/><path d="M380.1 411.0a1.2 1.2 0 0 1 .6-2.1a1.5 1.5 0 0 1 2.8 0a1.2 1.2 0 0 1 .6 2.1z"/><path d="M399.4 412.8a1.2 1.2 0 0 1 .6-2.1a1.5 1.5 0 0 1 2.8 0a1.2 1.2 0 0 1 .6 2.1z"/><path d="M484.5 414.9a1.2 1.2 0 0 1 .6-2.1a1.5 1.5 0 0 1 2.8 0a1.2 1.2 0 0 1 .6 2.1z"/><path d="M370.7 409.6a1.2 1.2 0 0 1 .6-2.1a1.5 1.5 0 0 1 2.8 0a1.2 1.2 0 0 1 .6 2.1z"/><path d="M318.0 405.8a1.2 1.2 0 0 1 .6-2.1a1.5 1.5 0 0 1 2.8 0a1.2 1.2 0 0 1 .6 2.1z"/><path d="M437.5 417.5a1.2 1.2 0 0 1 .6-2.1a1.5 1.5 0 0 1 2.8 0a1.2 1.2 0 0 1 .6 2.1z"/><path d="M339.6 410.6a1.2 1.2 0 0 1 .6-2.1a1.5 1.5 0 0 1 2.8 0a1.2 1.2 0 0 1 .6 2.1z"/><path d="M369.7 411.2a1.2 1.2 0 0 1 .6-2.1a1.5 1.5 0 0 1 2.8 0a1.2 1.2 0 0 1 .6 2.1z"/><path d="M361.0 411.5a1.2 1.2 0 0 1 .6-2.1a1.5 1.5 0 0 1 2.8 0a1.2 1.2 0 0 1 .6 2.1z"/><path d="M362.4 409.0a1.2 1.2 0 0 1 .6-2.1a1.5 1.5 0 0 1 2.8 0a1.2 1.2 0 0 1 .6 2.1z"/><path d="M416.0 415.6a1.2 1.2 0 0 1 .6-2.1a1.5 1.5 0 0 1 2.8 0a1.2 1.2 0 0 1 .6 2.1z"/><path d="M481.0 417.4a1.2 1.2 0 0 1 .6-2.1a1.5 1.5 0 0 1 2.8 0a1.2 1.2 0 0 1 .6 2.1z"/><path d="M472.1 412.4a1.2 1.2 0 0 1 .6-2.1a1.5 1.5 0 0 1 2.8 0a1.2 1.2 0 0 1 .6 2.1z"/><path d="M400.7 416.6a1.2 1.2 0 0 1 .6-2.1a1.5 1.5 0 0 1 2.8 0a1.2 1.2 0 0 1 .6 2.1z"/><path d="M445.8 411.9a1.2 1.2 0 0 1 .6-2.1a1.5 1.5 0 0 1 2.8 0a1.2 1.2 0 0 1 .6 2.1z"/><path d="M397.5 408.4a1.2 1.2 0 0 1 .6-2.1a1.5 1.5 0 0 1 2.8 0a1.2 1.2 0 0 1 .6 2.1z"/><path d="M428.8 415.7a1.2 1.2 0 0 1 .6-2.1a1.5 1.5 0 0 1 2.8 0a1.2 1.2 0 0 1 .6 2.1z"/><path d="M350.6 409.7a1.2 1.2 0 0 1 .6-2.1a1.5 1.5 0 0 1 2.8 0a1.2 1.2 0 0 1 .6 2.1z"/><path d="M371.4 411.7a1.2 1.2 0 0 1 .6-2.1a1.5 1.5 0 0 1 2.8 0a1.2 1.2 0 0 1 .6 2.1z"/><path d="M356.5 409.8a1.2 1.2 0 0 1 .6-2.1a1.5 1.5 0 0 1 2.8 0a1.2 1.2 0 0 1 .6 2.1z"/><path d="M405.5 415.3a1.2 1.2 0 0 1 .6-2.1a1.5 1.5 0 0 1 2.8 0a1.2 1.2 0 0 1 .6 2.1z"/><path d="M470.0 416.4a1.2 1.2 0 0 1 .6-2.1a1.5 1.5 0 0 1 2.8 0a1.2 1.2 0 0 1 .6 2.1z"/><path d="M365.5 411.6a1.2 1.2 0 0 1 .6-2.1a1.5 1.5 0 0 1 2.8 0a1.2 1.2 0 0 1 .6 2.1z"/><path d="M465.6 408.2a1.2 1.2 0 0 1 .6-2.1a1.5 1.5 0 0 1 2.8 0a1.2 1.2 0 0 1 .6 2.1z"/><path d="M438.6 410.1a1.2 1.2 0 0 1 .6-2.1a1.5 1.5 0 0 1 2.8 0a1.2 1.2 0 0 1 .6 2.1z"/><path d="M334.0 409.2a1.2 1.2 0 0 1 .6-2.1a1.5 1.5 0 0 1 2.8 0a1.2 1.2 0 0 1 .6 2.1z"/><path d="M368.8 409.8a1.2 1.2 0 0 1 .6-2.1a1.5 1.5 0 0 1 2.8 0a1.2 1.2 0 0 1 .6 2.1z"/><path d="M390.1 409.2a1.2 1.2 0 0 1 .6-2.1a1.5 1.5 0 0 1 2.8 0a1.2 1.2 0 0 1 .6 2.1z"/><path d="M373.0 413.5a1.2 1.2 0 0 1 .6-2.1a1.5 1.5 0 0 1 2.8 0a1.2 1.2 0 0 1 .6 2.1z"/><path d="M494.7 417.0a1.2 1.2 0 0 1 .6-2.1a1.5 1.5 0 0 1 2.8 0a1.2 1.2 0 0 1 .6 2.1z"/><path d="M474.1 416.9a1.2 1.2 0 0 1 .6-2.1a1.5 1.5 0 0 1 2.8 0a1.2 1.2 0 0 1 .6 2.1z"/><path d="M383.6 412.2a1.2 1.2 0 0 1 .6-2.1a1.5 1.5 0 0 1 2.8 0a1.2 1.2 0 0 1 .6 2.1z"/><path d="M372.9 408.2a1.2 1.2 0 0 1 .6-2.1a1.5 1.5 0 0 1 2.8 0a1.2 1.2 0 0 1 .6 2.1z"/><path d="M310.2 412.5a1.2 1.2 0 0 1 .6-2.1a1.5 1.5 0 0 1 2.8 0a1.2 1.2 0 0 1 .6 2.1z"/><path d="M377.5 411.4a1.2 1.2 0 0 1 .6-2.1a1.5 1.5 0 0 1 2.8 0a1.2 1.2 0 0 1 .6 2.1z"/><path d="M430.1 410.5a1.2 1.2 0 0 1 .6-2.1a1.5 1.5 0 0 1 2.8 0a1.2 1.2 0 0 1 .6 2.1z"/><path d="M348.5 411.9a1.2 1.2 0 0 1 .6-2.1a1.5 1.5 0 0 1 2.8 0a1.2 1.2 0 0 1 .6 2.1z"/><path d="M481.9 413.8a1.2 1.2 0 0 1 .6-2.1a1.5 1.5 0 0 1 2.8 0a1.2 1.2 0 0 1 .6 2.1z"/><path d="M370.6 411.1a1.2 1.2 0 0 1 .6-2.1a1.5 1.5 0 0 1 2.8 0a1.2 1.2 0 0 1 .6 2.1z"/><path d="M346.5 411.0a1.2 1.2 0 0 1 .6-2.1a1.5 1.5 0 0 1 2.8 0a1.2 1.2 0 0 1 .6 2.1z"/><path d="M486.7 413.3a1.2 1.2 0 0 1 .6-2.1a1.5 1.5 0 0 1 2.8 0a1.2 1.2 0 0 1 .6 2.1z"/><path d="M434.9 413.5a1.2 1.2 0 0 1 .6-2.1a1.5 1.5 0 0 1 2.8 0a1.2 1.2 0 0 1 .6 2.1z"/><path d="M434.8 413.1a1.2 1.2 0 0 1 .6-2.1a1.5 1.5 0 0 1 2.8 0a1.2 1.2 0 0 1 .6 2.1z"/><path d="M340.6 409.2a1.2 1.2 0 0 1 .6-2.1a1.5 1.5 0 0 1 2.8 0a1.2 1.2 0 0 1 .6 2.1z"/><path d="M362.8 409.9a1.2 1.2 0 0 1 .6-2.1a1.5 1.5 0 0 1 2.8 0a1.2 1.2 0 0 1 .6 2.1z"/><path d="M405.9 414.3a1.2 1.2 0 0 1 .6-2.1a1.5 1.5 0 0 1 2.8 0a1.2 1.2 0 0 1 .6 2.1z"/><path d="M326.0 412.0a1.2 1.2 0 0 1 .6-2.1a1.5 1.5 0 0 1 2.8 0a1.2 1.2 0 0 1 .6 2.1z"/><path d="M330.6 410.7a1.2 1.2 0 0 1 .6-2.1a1.5 1.5 0 0 1 2.8 0a1.2 1.2 0 0 1 .6 2.1z"/><path d="M447.9 414.0a1.2 1.2 0 0 1 .6-2.1a1.5 1.5 0 0 1 2.8 0a1.2 1.2 0 0 1 .6 2.1z"/><path d="M387.0 410.5a1.2 1.2 0 0 1 .6-2.1a1.5 1.5 0 0 1 2.8 0a1.2 1.2 0 0 1 .6 2.1z"/><path d="M381.9 412.4a1.2 1.2 0 0 1 .6-2.1a1.5 1.5 0 0 1 2.8 0a1.2 1.2 0 0 1 .6 2.1z"/><path d="M385.9 412.2a1.2 1.2 0 0 1 .6-2.1a1.5 1.5 0 0 1 2.8 0a1.2 1.2 0 0 1 .6 2.1z"/><path d="M333.3 413.4a1.2 1.2 0 0 1 .6-2.1a1.5 1.5 0 0 1 2.8 0a1.2 1.2 0 0 1 .6 2.1z"/><path d="M486.1 415.6a1.2 1.2 0 0 1 .6-2.1a1.5 1.5 0 0 1 2.8 0a1.2 1.2 0 0 1 .6 2.1z"/><path d="M416.9 413.1a1.2 1.2 0 0 1 .6-2.1a1.5 1.5 0 0 1 2.8 0a1.2 1.2 0 0 1 .6 2.1z"/><path d="M420.5 412.1a1.2 1.2 0 0 1 .6-2.1a1.5 1.5 0 0 1 2.8 0a1.2 1.2 0 0 1 .6 2.1z"/><path d="M315.9 410.2a1.2 1.2 0 0 1 .6-2.1a1.5 1.5 0 0 1 2.8 0a1.2 1.2 0 0 1 .6 2.1z"/><path d="M445.9 413.5a1.2 1.2 0 0 1 .6-2.1a1.5 1.5 0 0 1 2.8 0a1.2 1.2 0 0 1 .6 2.1z"/><path d="M449.2 414.1a1.2 1.2 0 0 1 .6-2.1a1.5 1.5 0 0 1 2.8 0a1.2 1.2 0 0 1 .6 2.1z"/><path d="M383.1 411.5a1.2 1.2 0 0 1 .6-2.1a1.5 1.5 0 0 1 2.8 0a1.2 1.2 0 0 1 .6 2.1z"/><path d="M325.5 412.5a1.2 1.2 0 0 1 .6-2.1a1.5 1.5 0 0 1 2.8 0a1.2 1.2 0 0 1 .6 2.1z"/><path d="M415.1 414.2a1.2 1.2 0 0 1 .6-2.1a1.5 1.5 0 0 1 2.8 0a1.2 1.2 0 0 1 .6 2.1z"/><path d="M439.0 412.0a1.2 1.2 0 0 1 .6-2.1a1.5 1.5 0 0 1 2.8 0a1.2 1.2 0 0 1 .6 2.1z"/><path d="M415.7 411.4a1.2 1.2 0 0 1 .6-2.1a1.5 1.5 0 0 1 2.8 0a1.2 1.2 0 0 1 .6 2.1z"/><path d="M370.4 412.3a1.2 1.2 0 0 1 .6-2.1a1.5 1.5 0 0 1 2.8 0a1.2 1.2 0 0 1 .6 2.1z"/><path d="M393.8 411.3a1.2 1.2 0 0 1 .6-2.1a1.5 1.5 0 0 1 2.8 0a1.2 1.2 0 0 1 .6 2.1z"/><path d="M319.4 407.5a1.2 1.2 0 0 1 .6-2.1a1.5 1.5 0 0 1 2.8 0a1.2 1.2 0 0 1 .6 2.1z"/><path d="M323.7 409.5a1.2 1.2 0 0 1 .6-2.1a1.5 1.5 0 0 1 2.8 0a1.2 1.2 0 0 1 .6 2.1z"/><path d="M420.6 417.3a1.2 1.2 0 0 1 .6-2.1a1.5 1.5 0 0 1 2.8 0a1.2 1.2 0 0 1 .6 2.1z"/><path d="M484.2 412.9a1.2 1.2 0 0 1 .6-2.1a1.5 1.5 0 0 1 2.8 0a1.2 1.2 0 0 1 .6 2.1z"/><path d="M453.9 413.3a1.2 1.2 0 0 1 .6-2.1a1.5 1.5 0 0 1 2.8 0a1.2 1.2 0 0 1 .6 2.1z"/><path d="M351.5 411.5a1.2 1.2 0 0 1 .6-2.1a1.5 1.5 0 0 1 2.8 0a1.2 1.2 0 0 1 .6 2.1z"/><path d="M460.5 414.3a1.2 1.2 0 0 1 .6-2.1a1.5 1.5 0 0 1 2.8 0a1.2 1.2 0 0 1 .6 2.1z"/><path d="M317.3 415.7a1.2 1.2 0 0 1 .6-2.1a1.5 1.5 0 0 1 2.8 0a1.2 1.2 0 0 1 .6 2.1z"/><path d="M416.6 413.1a1.2 1.2 0 0 1 .6-2.1a1.5 1.5 0 0 1 2.8 0a1.2 1.2 0 0 1 .6 2.1z"/><path d="M386.4 410.3a1.2 1.2 0 0 1 .6-2.1a1.5 1.5 0 0 1 2.8 0a1.2 1.2 0 0 1 .6 2.1z"/><path d="M454.4 413.9a1.2 1.2 0 0 1 .6-2.1a1.5 1.5 0 0 1 2.8 0a1.2 1.2 0 0 1 .6 2.1z"/><path d="M426.0 416.3a1.2 1.2 0 0 1 .6-2.1a1.5 1.5 0 0 1 2.8 0a1.2 1.2 0 0 1 .6 2.1z"/><path d="M345.2 411.0a1.2 1.2 0 0 1 .6-2.1a1.5 1.5 0 0 1 2.8 0a1.2 1.2 0 0 1 .6 2.1z"/><path d="M399.8 412.4a1.2 1.2 0 0 1 .6-2.1a1.5 1.5 0 0 1 2.8 0a1.2 1.2 0 0 1 .6 2.1z"/><path d="M359.4 408.8a1.2 1.2 0 0 1 .6-2.1a1.5 1.5 0 0 1 2.8 0a1.2 1.2 0 0 1 .6 2.1z"/><path d="M311.9 414.1a1.2 1.2 0 0 1 .6-2.1a1.5 1.5 0 0 1 2.8 0a1.2 1.2 0 0 1 .6 2.1z"/><path d="M360.3 410.9a1.2 1.2 0 0 1 .6-2.1a1.5 1.5 0 0 1 2.8 0a1.2 1.2 0 0 1 .6 2.1z"/><path d="M399.6 413.7a1.2 1.2 0 0 1 .6-2.1a1.5 1.5 0 0 1 2.8 0a1.2 1.2 0 0 1 .6 2.1z"/><path d="M394.7 416.2a1.2 1.2 0 0 1 .6-2.1a1.5 1.5 0 0 1 2.8 0a1.2 1.2 0 0 1 .6 2.1z"/><path d="M373.1 408.9a1.2 1.2 0 0 1 .6-2.1a1.5 1.5 0 0 1 2.8 0a1.2 1.2 0 0 1 .6 2.1z"/><path d="M445.1 414.4a1.2 1.2 0 0 1 .6-2.1a1.5 1.5 0 0 1 2.8 0a1.2 1.2 0 0 1 .6 2.1z"/><path d="M450.4 409.9a1.2 1.2 0 0 1 .6-2.1a1.5 1.5 0 0 1 2.8 0a1.2 1.2 0 0 1 .6 2.1z"/><path d="M422.5 414.0a1.2 1.2 0 0 1 .6-2.1a1.5 1.5 0 0 1 2.8 0a1.2 1.2 0 0 1 .6 2.1z"/><path d="M376.0 412.3a1.2 1.2 0 0 1 .6-2.1a1.5 1.5 0 0 1 2.8 0a1.2 1.2 0 0 1 .6 2.1z"/><path d="M334.9 407.6a1.2 1.2 0 0 1 .6-2.1a1.5 1.5 0 0 1 2.8 0a1.2 1.2 0 0 1 .6 2.1z"/><path d="M365.7 409.1a1.2 1.2 0 0 1 .6-2.1a1.5 1.5 0 0 1 2.8 0a1.2 1.2 0 0 1 .6 2.1z"/><path d="M377.7 415.3a1.2 1.2 0 0 1 .6-2.1a1.5 1.5 0 0 1 2.8 0a1.2 1.2 0 0 1 .6 2.1z"/><path d="M350.7 411.8a1.2 1.2 0 0 1 .6-2.1a1.5 1.5 0 0 1 2.8 0a1.2 1.2 0 0 1 .6 2.1z"/><path d="M343.1 402.6a1.2 1.2 0 0 1 .6-2.1a1.5 1.5 0 0 1 2.8 0a1.2 1.2 0 0 1 .6 2.1z"/><path d="M349.9 406.2a1.2 1.2 0 0 1 .6-2.1a1.5 1.5 0 0 1 2.8 0a1.2 1.2 0 0 1 .6 2.1z"/><path d="M369.7 408.9a1.2 1.2 0 0 1 .6-2.1a1.5 1.5 0 0 1 2.8 0a1.2 1.2 0 0 1 .6 2.1z"/><path d="M386.0 411.9a1.2 1.2 0 0 1 .6-2.1a1.5 1.5 0 0 1 2.8 0a1.2 1.2 0 0 1 .6 2.1z"/><path d="M371.6 407.5a1.2 1.2 0 0 1 .6-2.1a1.5 1.5 0 0 1 2.8 0a1.2 1.2 0 0 1 .6 2.1z"/><path d="M371.0 416.3a1.2 1.2 0 0 1 .6-2.1a1.5 1.5 0 0 1 2.8 0a1.2 1.2 0 0 1 .6 2.1z"/><path d="M367.5 411.5a1.2 1.2 0 0 1 .6-2.1a1.5 1.5 0 0 1 2.8 0a1.2 1.2 0 0 1 .6 2.1z"/><path d="M352.2 416.1a1.2 1.2 0 0 1 .6-2.1a1.5 1.5 0 0 1 2.8 0a1.2 1.2 0 0 1 .6 2.1z"/><path d="M368.3 411.8a1.2 1.2 0 0 1 .6-2.1a1.5 1.5 0 0 1 2.8 0a1.2 1.2 0 0 1 .6 2.1z"/><path d="M378.6 412.7a1.2 1.2 0 0 1 .6-2.1a1.5 1.5 0 0 1 2.8 0a1.2 1.2 0 0 1 .6 2.1z"/><path d="M337.9 414.7a1.2 1.2 0 0 1 .6-2.1a1.5 1.5 0 0 1 2.8 0a1.2 1.2 0 0 1 .6 2.1z"/><path d="M367.9 412.4a1.2 1.2 0 0 1 .6-2.1a1.5 1.5 0 0 1 2.8 0a1.2 1.2 0 0 1 .6 2.1z"/><path d="M374.2 405.5a1.2 1.2 0 0 1 .6-2.1a1.5 1.5 0 0 1 2.8 0a1.2 1.2 0 0 1 .6 2.1z"/><path d="M359.7 407.9a1.2 1.2 0 0 1 .6-2.1a1.5 1.5 0 0 1 2.8 0a1.2 1.2 0 0 1 .6 2.1z"/><path d="M355.4 415.9a1.2 1.2 0 0 1 .6-2.1a1.5 1.5 0 0 1 2.8 0a1.2 1.2 0 0 1 .6 2.1z"/><path d="M364.5 408.8a1.2 1.2 0 0 1 .6-2.1a1.5 1.5 0 0 1 2.8 0a1.2 1.2 0 0 1 .6 2.1z"/><path d="M375.1 416.3a1.2 1.2 0 0 1 .6-2.1a1.5 1.5 0 0 1 2.8 0a1.2 1.2 0 0 1 .6 2.1z"/><path d="M344.4 407.3a1.2 1.2 0 0 1 .6-2.1a1.5 1.5 0 0 1 2.8 0a1.2 1.2 0 0 1 .6 2.1z"/><path d="M355.6 413.5a1.2 1.2 0 0 1 .6-2.1a1.5 1.5 0 0 1 2.8 0a1.2 1.2 0 0 1 .6 2.1z"/><path d="M342.2 411.2a1.2 1.2 0 0 1 .6-2.1a1.5 1.5 0 0 1 2.8 0a1.2 1.2 0 0 1 .6 2.1z"/><path d="M338.1 414.8a1.2 1.2 0 0 1 .6-2.1a1.5 1.5 0 0 1 2.8 0a1.2 1.2 0 0 1 .6 2.1z"/><path d="M369.2 408.7a1.2 1.2 0 0 1 .6-2.1a1.5 1.5 0 0 1 2.8 0a1.2 1.2 0 0 1 .6 2.1z"/><path d="M360.3 408.2a1.2 1.2 0 0 1 .6-2.1a1.5 1.5 0 0 1 2.8 0a1.2 1.2 0 0 1 .6 2.1z"/><path d="M343.3 411.0a1.2 1.2 0 0 1 .6-2.1a1.5 1.5 0 0 1 2.8 0a1.2 1.2 0 0 1 .6 2.1z"/><path d="M361.6 413.5a1.2 1.2 0 0 1 .6-2.1a1.5 1.5 0 0 1 2.8 0a1.2 1.2 0 0 1 .6 2.1z"/><path d="M364.1 404.3a1.2 1.2 0 0 1 .6-2.1a1.5 1.5 0 0 1 2.8 0a1.2 1.2 0 0 1 .6 2.1z"/><path d="M342.5 414.8a1.2 1.2 0 0 1 .6-2.1a1.5 1.5 0 0 1 2.8 0a1.2 1.2 0 0 1 .6 2.1z"/><path d="M358.4 412.0a1.2 1.2 0 0 1 .6-2.1a1.5 1.5 0 0 1 2.8 0a1.2 1.2 0 0 1 .6 2.1z"/><path d="M379.2 413.6a1.2 1.2 0 0 1 .6-2.1a1.5 1.5 0 0 1 2.8 0a1.2 1.2 0 0 1 .6 2.1z"/><path d="M350.6 412.6a1.2 1.2 0 0 1 .6-2.1a1.5 1.5 0 0 1 2.8 0a1.2 1.2 0 0 1 .6 2.1z"/><path d="M356.8 408.2a1.2 1.2 0 0 1 .6-2.1a1.5 1.5 0 0 1 2.8 0a1.2 1.2 0 0 1 .6 2.1z"/><path d="M366.5 414.3a1.2 1.2 0 0 1 .6-2.1a1.5 1.5 0 0 1 2.8 0a1.2 1.2 0 0 1 .6 2.1z"/><path d="M359.2 407.9a1.2 1.2 0 0 1 .6-2.1a1.5 1.5 0 0 1 2.8 0a1.2 1.2 0 0 1 .6 2.1z"/><path d="M354.6 406.5a1.2 1.2 0 0 1 .6-2.1a1.5 1.5 0 0 1 2.8 0a1.2 1.2 0 0 1 .6 2.1z"/><path d="M370.5 410.6a1.2 1.2 0 0 1 .6-2.1a1.5 1.5 0 0 1 2.8 0a1.2 1.2 0 0 1 .6 2.1z"/><path d="M357.7 415.2a1.2 1.2 0 0 1 .6-2.1a1.5 1.5 0 0 1 2.8 0a1.2 1.2 0 0 1 .6 2.1z"/><path d="M383.0 408.0a1.2 1.2 0 0 1 .6-2.1a1.5 1.5 0 0 1 2.8 0a1.2 1.2 0 0 1 .6 2.1z"/><path d="M379.1 409.3a1.2 1.2 0 0 1 .6-2.1a1.5 1.5 0 0 1 2.8 0a1.2 1.2 0 0 1 .6 2.1z"/><path d="M354.2 412.5a1.2 1.2 0 0 1 .6-2.1a1.5 1.5 0 0 1 2.8 0a1.2 1.2 0 0 1 .6 2.1z"/><path d="M355.2 407.9a1.2 1.2 0 0 1 .6-2.1a1.5 1.5 0 0 1 2.8 0a1.2 1.2 0 0 1 .6 2.1z"/><path d="M382.6 412.6a1.2 1.2 0 0 1 .6-2.1a1.5 1.5 0 0 1 2.8 0a1.2 1.2 0 0 1 .6 2.1z"/><path d="M347.9 416.0a1.2 1.2 0 0 1 .6-2.1a1.5 1.5 0 0 1 2.8 0a1.2 1.2 0 0 1 .6 2.1z"/><path d="M365.6 414.1a1.2 1.2 0 0 1 .6-2.1a1.5 1.5 0 0 1 2.8 0a1.2 1.2 0 0 1 .6 2.1z"/><path d="M351.0 410.1a1.2 1.2 0 0 1 .6-2.1a1.5 1.5 0 0 1 2.8 0a1.2 1.2 0 0 1 .6 2.1z"/><path d="M354.9 401.6a1.2 1.2 0 0 1 .6-2.1a1.5 1.5 0 0 1 2.8 0a1.2 1.2 0 0 1 .6 2.1z"/><path d="M345.4 413.4a1.2 1.2 0 0 1 .6-2.1a1.5 1.5 0 0 1 2.8 0a1.2 1.2 0 0 1 .6 2.1z"/><path d="M350.8 412.7a1.2 1.2 0 0 1 .6-2.1a1.5 1.5 0 0 1 2.8 0a1.2 1.2 0 0 1 .6 2.1z"/><path d="M359.0 412.7a1.2 1.2 0 0 1 .6-2.1a1.5 1.5 0 0 1 2.8 0a1.2 1.2 0 0 1 .6 2.1z"/><path d="M361.5 406.5a1.2 1.2 0 0 1 .6-2.1a1.5 1.5 0 0 1 2.8 0a1.2 1.2 0 0 1 .6 2.1z"/><path d="M347.6 415.2a1.2 1.2 0 0 1 .6-2.1a1.5 1.5 0 0 1 2.8 0a1.2 1.2 0 0 1 .6 2.1z"/><path d="M341.2 409.8a1.2 1.2 0 0 1 .6-2.1a1.5 1.5 0 0 1 2.8 0a1.2 1.2 0 0 1 .6 2.1z"/><path d="M373.0 412.0a1.2 1.2 0 0 1 .6-2.1a1.5 1.5 0 0 1 2.8 0a1.2 1.2 0 0 1 .6 2.1z"/><path d="M366.6 410.5a1.2 1.2 0 0 1 .6-2.1a1.5 1.5 0 0 1 2.8 0a1.2 1.2 0 0 1 .6 2.1z"/><path d="M350.5 408.0a1.2 1.2 0 0 1 .6-2.1a1.5 1.5 0 0 1 2.8 0a1.2 1.2 0 0 1 .6 2.1z"/><path d="M364.0 405.8a1.2 1.2 0 0 1 .6-2.1a1.5 1.5 0 0 1 2.8 0a1.2 1.2 0 0 1 .6 2.1z"/><path d="M353.8 412.3a1.2 1.2 0 0 1 .6-2.1a1.5 1.5 0 0 1 2.8 0a1.2 1.2 0 0 1 .6 2.1z"/><path d="M369.3 409.6a1.2 1.2 0 0 1 .6-2.1a1.5 1.5 0 0 1 2.8 0a1.2 1.2 0 0 1 .6 2.1z"/><path d="M351.8 412.4a1.2 1.2 0 0 1 .6-2.1a1.5 1.5 0 0 1 2.8 0a1.2 1.2 0 0 1 .6 2.1z"/><path d="M376.3 406.3a1.2 1.2 0 0 1 .6-2.1a1.5 1.5 0 0 1 2.8 0a1.2 1.2 0 0 1 .6 2.1z"/><path d="M331.4 408.8a1.2 1.2 0 0 1 .6-2.1a1.5 1.5 0 0 1 2.8 0a1.2 1.2 0 0 1 .6 2.1z"/><path d="M353.3 406.9a1.2 1.2 0 0 1 .6-2.1a1.5 1.5 0 0 1 2.8 0a1.2 1.2 0 0 1 .6 2.1z"/><path d="M368.3 408.5a1.2 1.2 0 0 1 .6-2.1a1.5 1.5 0 0 1 2.8 0a1.2 1.2 0 0 1 .6 2.1z"/><path d="M364.6 409.8a1.2 1.2 0 0 1 .6-2.1a1.5 1.5 0 0 1 2.8 0a1.2 1.2 0 0 1 .6 2.1z"/><path d="M374.9 415.7a1.2 1.2 0 0 1 .6-2.1a1.5 1.5 0 0 1 2.8 0a1.2 1.2 0 0 1 .6 2.1z"/><path d="M374.4 407.1a1.2 1.2 0 0 1 .6-2.1a1.5 1.5 0 0 1 2.8 0a1.2 1.2 0 0 1 .6 2.1z"/><path d="M358.1 414.3a1.2 1.2 0 0 1 .6-2.1a1.5 1.5 0 0 1 2.8 0a1.2 1.2 0 0 1 .6 2.1z"/><path d="M331.2 382.2a1.2 1.2 0 0 1 .6-2.1a1.5 1.5 0 0 1 2.8 0a1.2 1.2 0 0 1 .6 2.1z"/><path d="M316.7 376.4a1.2 1.2 0 0 1 .6-2.1a1.5 1.5 0 0 1 2.8 0a1.2 1.2 0 0 1 .6 2.1z"/><path d="M318.5 381.7a1.2 1.2 0 0 1 .6-2.1a1.5 1.5 0 0 1 2.8 0a1.2 1.2 0 0 1 .6 2.1z"/><path d="M320.2 377.8a1.2 1.2 0 0 1 .6-2.1a1.5 1.5 0 0 1 2.8 0a1.2 1.2 0 0 1 .6 2.1z"/><path d="M307.0 376.5a1.2 1.2 0 0 1 .6-2.1a1.5 1.5 0 0 1 2.8 0a1.2 1.2 0 0 1 .6 2.1z"/><path d="M325.1 377.5a1.2 1.2 0 0 1 .6-2.1a1.5 1.5 0 0 1 2.8 0a1.2 1.2 0 0 1 .6 2.1z"/><path d="M306.4 377.1a1.2 1.2 0 0 1 .6-2.1a1.5 1.5 0 0 1 2.8 0a1.2 1.2 0 0 1 .6 2.1z"/><path d="M325.9 378.9a1.2 1.2 0 0 1 .6-2.1a1.5 1.5 0 0 1 2.8 0a1.2 1.2 0 0 1 .6 2.1z"/><path d="M330.1 384.8a1.2 1.2 0 0 1 .6-2.1a1.5 1.5 0 0 1 2.8 0a1.2 1.2 0 0 1 .6 2.1z"/><path d="M335.5 391.2a1.2 1.2 0 0 1 .6-2.1a1.5 1.5 0 0 1 2.8 0a1.2 1.2 0 0 1 .6 2.1z"/><path d="M334.0 387.5a1.2 1.2 0 0 1 .6-2.1a1.5 1.5 0 0 1 2.8 0a1.2 1.2 0 0 1 .6 2.1z"/><path d="M330.2 378.3a1.2 1.2 0 0 1 .6-2.1a1.5 1.5 0 0 1 2.8 0a1.2 1.2 0 0 1 .6 2.1z"/><path d="M315.7 376.8a1.2 1.2 0 0 1 .6-2.1a1.5 1.5 0 0 1 2.8 0a1.2 1.2 0 0 1 .6 2.1z"/><path d="M336.5 387.1a1.2 1.2 0 0 1 .6-2.1a1.5 1.5 0 0 1 2.8 0a1.2 1.2 0 0 1 .6 2.1z"/><path d="M335.3 390.9a1.2 1.2 0 0 1 .6-2.1a1.5 1.5 0 0 1 2.8 0a1.2 1.2 0 0 1 .6 2.1z"/><path d="M329.8 396.0a1.2 1.2 0 0 1 .6-2.1a1.5 1.5 0 0 1 2.8 0a1.2 1.2 0 0 1 .6 2.1z"/><path d="M324.0 385.1a1.2 1.2 0 0 1 .6-2.1a1.5 1.5 0 0 1 2.8 0a1.2 1.2 0 0 1 .6 2.1z"/><path d="M324.0 375.4a1.2 1.2 0 0 1 .6-2.1a1.5 1.5 0 0 1 2.8 0a1.2 1.2 0 0 1 .6 2.1z"/><path d="M322.2 381.6a1.2 1.2 0 0 1 .6-2.1a1.5 1.5 0 0 1 2.8 0a1.2 1.2 0 0 1 .6 2.1z"/><path d="M310.0 374.8a1.2 1.2 0 0 1 .6-2.1a1.5 1.5 0 0 1 2.8 0a1.2 1.2 0 0 1 .6 2.1z"/><path d="M324.4 382.7a1.2 1.2 0 0 1 .6-2.1a1.5 1.5 0 0 1 2.8 0a1.2 1.2 0 0 1 .6 2.1z"/><path d="M311.4 383.3a1.2 1.2 0 0 1 .6-2.1a1.5 1.5 0 0 1 2.8 0a1.2 1.2 0 0 1 .6 2.1z"/><path d="M310.3 379.7a1.2 1.2 0 0 1 .6-2.1a1.5 1.5 0 0 1 2.8 0a1.2 1.2 0 0 1 .6 2.1z"/><path d="M329.4 385.4a1.2 1.2 0 0 1 .6-2.1a1.5 1.5 0 0 1 2.8 0a1.2 1.2 0 0 1 .6 2.1z"/><path d="M334.9 397.9a1.2 1.2 0 0 1 .6-2.1a1.5 1.5 0 0 1 2.8 0a1.2 1.2 0 0 1 .6 2.1z"/><path d="M331.1 424.8a1.2 1.2 0 0 1 .6-2.1a1.5 1.5 0 0 1 2.8 0a1.2 1.2 0 0 1 .6 2.1z"/><path d="M340.0 418.3a1.2 1.2 0 0 1 .6-2.1a1.5 1.5 0 0 1 2.8 0a1.2 1.2 0 0 1 .6 2.1z"/><path d="M318.5 428.3a1.2 1.2 0 0 1 .6-2.1a1.5 1.5 0 0 1 2.8 0a1.2 1.2 0 0 1 .6 2.1z"/><path d="M310.8 422.9a1.2 1.2 0 0 1 .6-2.1a1.5 1.5 0 0 1 2.8 0a1.2 1.2 0 0 1 .6 2.1z"/><path d="M326.3 424.7a1.2 1.2 0 0 1 .6-2.1a1.5 1.5 0 0 1 2.8 0a1.2 1.2 0 0 1 .6 2.1z"/><path d="M341.8 416.5a1.2 1.2 0 0 1 .6-2.1a1.5 1.5 0 0 1 2.8 0a1.2 1.2 0 0 1 .6 2.1z"/><path d="M315.0 426.4a1.2 1.2 0 0 1 .6-2.1a1.5 1.5 0 0 1 2.8 0a1.2 1.2 0 0 1 .6 2.1z"/><path d="M316.3 419.0a1.2 1.2 0 0 1 .6-2.1a1.5 1.5 0 0 1 2.8 0a1.2 1.2 0 0 1 .6 2.1z"/><path d="M333.8 421.5a1.2 1.2 0 0 1 .6-2.1a1.5 1.5 0 0 1 2.8 0a1.2 1.2 0 0 1 .6 2.1z"/><path d="M327.7 429.1a1.2 1.2 0 0 1 .6-2.1a1.5 1.5 0 0 1 2.8 0a1.2 1.2 0 0 1 .6 2.1z"/><path d="M330.7 421.0a1.2 1.2 0 0 1 .6-2.1a1.5 1.5 0 0 1 2.8 0a1.2 1.2 0 0 1 .6 2.1z"/><path d="M314.1 420.0a1.2 1.2 0 0 1 .6-2.1a1.5 1.5 0 0 1 2.8 0a1.2 1.2 0 0 1 .6 2.1z"/><path d="M319.7 423.2a1.2 1.2 0 0 1 .6-2.1a1.5 1.5 0 0 1 2.8 0a1.2 1.2 0 0 1 .6 2.1z"/><path d="M330.3 423.6a1.2 1.2 0 0 1 .6-2.1a1.5 1.5 0 0 1 2.8 0a1.2 1.2 0 0 1 .6 2.1z"/><path d="M327.3 424.7a1.2 1.2 0 0 1 .6-2.1a1.5 1.5 0 0 1 2.8 0a1.2 1.2 0 0 1 .6 2.1z"/><path d="M493.8 425.2a1.2 1.2 0 0 1 .6-2.1a1.5 1.5 0 0 1 2.8 0a1.2 1.2 0 0 1 .6 2.1z"/><path d="M489.8 423.4a1.2 1.2 0 0 1 .6-2.1a1.5 1.5 0 0 1 2.8 0a1.2 1.2 0 0 1 .6 2.1z"/><path d="M318.7 435.3a1.2 1.2 0 0 1 .6-2.1a1.5 1.5 0 0 1 2.8 0a1.2 1.2 0 0 1 .6 2.1z"/><path d="M343.5 432.3a1.2 1.2 0 0 1 .6-2.1a1.5 1.5 0 0 1 2.8 0a1.2 1.2 0 0 1 .6 2.1z"/></g>
<g fill="#262626" fill-opacity="0.85"><circle cx="519.1" cy="456.0" r="1.85"/><circle cx="519.3" cy="431.3" r="1.85"/><circle cx="516.3" cy="470.9" r="1.85"/><circle cx="520.4" cy="492.7" r="1.85"/><circle cx="519.4" cy="420.4" r="1.85"/><circle cx="519.4" cy="464.2" r="1.85"/><circle cx="519.7" cy="444.9" r="1.85"/><circle cx="518.9" cy="452.3" r="1.85"/><circle cx="518.5" cy="489.8" r="1.85"/><circle cx="519.2" cy="471.3" r="1.85"/><circle cx="520.5" cy="447.4" r="1.85"/><circle cx="520.1" cy="422.1" r="1.85"/><circle cx="519.9" cy="471.7" r="1.85"/><circle cx="521.4" cy="451.7" r="1.85"/><circle cx="518.6" cy="487.6" r="1.85"/><circle cx="519.3" cy="450.3" r="1.85"/><circle cx="521.4" cy="470.0" r="1.85"/><circle cx="518.8" cy="486.4" r="1.85"/><circle cx="519.3" cy="497.8" r="1.85"/><circle cx="518.6" cy="490.4" r="1.85"/><circle cx="519.8" cy="455.0" r="1.85"/><circle cx="517.4" cy="463.3" r="1.85"/><circle cx="518.5" cy="421.9" r="1.85"/><circle cx="518.9" cy="484.1" r="1.85"/><circle cx="519.4" cy="479.9" r="1.85"/><circle cx="517.1" cy="429.5" r="1.85"/><circle cx="518.2" cy="461.5" r="1.85"/><circle cx="518.9" cy="466.6" r="1.85"/><circle cx="519.0" cy="460.4" r="1.85"/><circle cx="519.5" cy="469.0" r="1.85"/><circle cx="519.1" cy="494.3" r="1.85"/><circle cx="519.9" cy="487.1" r="1.85"/><circle cx="519.5" cy="425.8" r="1.85"/><circle cx="516.8" cy="473.8" r="1.85"/><circle cx="519.1" cy="431.4" r="1.85"/><circle cx="518.4" cy="495.1" r="1.85"/><circle cx="518.6" cy="497.8" r="1.85"/><circle cx="519.2" cy="426.1" r="1.85"/><circle cx="519.3" cy="485.7" r="1.85"/><circle cx="519.2" cy="461.8" r="1.85"/><circle cx="518.6" cy="421.3" r="1.85"/><circle cx="521.9" cy="471.0" r="1.85"/><circle cx="519.1" cy="446.7" r="1.85"/><circle cx="516.7" cy="454.4" r="1.85"/><circle cx="519.3" cy="419.1" r="1.85"/><circle cx="518.8" cy="419.2" r="1.85"/><circle cx="521.0" cy="483.2" r="1.85"/><circle cx="518.9" cy="439.1" r="1.85"/><circle cx="518.4" cy="419.3" r="1.85"/><circle cx="517.6" cy="455.0" r="1.85"/><circle cx="519.6" cy="426.0" r="1.85"/><circle cx="519.5" cy="427.9" r="1.85"/><circle cx="520.1" cy="472.4" r="1.85"/><circle cx="521.1" cy="499.8" r="1.85"/><circle cx="519.8" cy="459.5" r="1.85"/><circle cx="518.9" cy="435.3" r="1.85"/><circle cx="518.5" cy="464.8" r="1.85"/><circle cx="517.2" cy="469.6" r="1.85"/><circle cx="519.9" cy="466.1" r="1.85"/><circle cx="521.2" cy="435.8" r="1.85"/><circle cx="520.0" cy="451.3" r="1.85"/><circle cx="520.6" cy="424.0" r="1.85"/><circle cx="517.8" cy="418.1" r="1.85"/><circle cx="518.0" cy="441.3" r="1.85"/><circle cx="519.8" cy="477.0" r="1.85"/><circle cx="520.3" cy="420.9" r="1.85"/><circle cx="519.0" cy="441.2" r="1.85"/><circle cx="519.3" cy="429.5" r="1.85"/><circle cx="517.1" cy="470.6" r="1.85"/><circle cx="518.7" cy="494.8" r="1.85"/><circle cx="520.5" cy="462.3" r="1.85"/><circle cx="519.4" cy="425.1" r="1.85"/><circle cx="517.1" cy="475.3" r="1.85"/><circle cx="520.9" cy="420.5" r="1.85"/><circle cx="518.8" cy="423.0" r="1.85"/><circle cx="517.9" cy="490.4" r="1.85"/><circle cx="519.9" cy="491.8" r="1.85"/><circle cx="520.2" cy="478.1" r="1.85"/><circle cx="520.5" cy="472.7" r="1.85"/><circle cx="519.2" cy="463.6" r="1.85"/><circle cx="518.0" cy="444.6" r="1.85"/><circle cx="516.9" cy="455.5" r="1.85"/><circle cx="519.2" cy="491.0" r="1.85"/><circle cx="518.4" cy="471.5" r="1.85"/><circle cx="519.0" cy="476.0" r="1.85"/><circle cx="518.8" cy="455.7" r="1.85"/><circle cx="518.0" cy="437.4" r="1.85"/><circle cx="518.4" cy="488.4" r="1.85"/><circle cx="518.7" cy="449.2" r="1.85"/><circle cx="519.6" cy="456.4" r="1.85"/><circle cx="518.4" cy="483.2" r="1.85"/><circle cx="520.4" cy="489.5" r="1.85"/><circle cx="519.2" cy="430.0" r="1.85"/><circle cx="519.5" cy="429.2" r="1.85"/><circle cx="521.7" cy="468.9" r="1.85"/><circle cx="518.3" cy="448.3" r="1.85"/><circle cx="518.6" cy="490.5" r="1.85"/><circle cx="518.1" cy="450.1" r="1.85"/><circle cx="519.8" cy="424.8" r="1.85"/><circle cx="517.3" cy="487.7" r="1.85"/><circle cx="519.2" cy="462.3" r="1.85"/><circle cx="519.3" cy="471.9" r="1.85"/><circle cx="517.6" cy="441.4" r="1.85"/><circle cx="516.9" cy="492.2" r="1.85"/><circle cx="518.2" cy="460.7" r="1.85"/><circle cx="518.6" cy="453.3" r="1.85"/><circle cx="518.3" cy="447.3" r="1.85"/><circle cx="519.2" cy="472.3" r="1.85"/><circle cx="520.0" cy="490.4" r="1.85"/><circle cx="519.3" cy="421.4" r="1.85"/><circle cx="519.4" cy="436.3" r="1.85"/><circle cx="518.7" cy="497.8" r="1.85"/><circle cx="519.8" cy="488.4" r="1.85"/><circle cx="519.1" cy="459.6" r="1.85"/><circle cx="522.1" cy="491.1" r="1.85"/><circle cx="519.5" cy="423.6" r="1.85"/><circle cx="519.6" cy="427.4" r="1.85"/><circle cx="521.5" cy="447.3" r="1.85"/><circle cx="518.2" cy="427.2" r="1.85"/><circle cx="521.4" cy="426.0" r="1.85"/><circle cx="596.3" cy="498.4" r="1.85"/><circle cx="556.7" cy="497.9" r="1.85"/><circle cx="578.8" cy="496.6" r="1.85"/><circle cx="605.7" cy="498.0" r="1.85"/><circle cx="612.8" cy="497.5" r="1.85"/><circle cx="589.6" cy="496.9" r="1.85"/><circle cx="609.0" cy="496.0" r="1.85"/><circle cx="519.4" cy="496.0" r="1.85"/><circle cx="538.6" cy="498.4" r="1.85"/><circle cx="585.1" cy="497.1" r="1.85"/><circle cx="544.5" cy="495.7" r="1.85"/><circle cx="597.7" cy="496.9" r="1.85"/><circle cx="571.9" cy="498.7" r="1.85"/><circle cx="569.3" cy="498.6" r="1.85"/><circle cx="602.8" cy="496.6" r="1.85"/><circle cx="590.5" cy="497.4" r="1.85"/><circle cx="604.4" cy="497.4" r="1.85"/><circle cx="532.8" cy="498.0" r="1.85"/><circle cx="536.4" cy="497.2" r="1.85"/><circle cx="603.7" cy="497.0" r="1.85"/><circle cx="584.5" cy="497.5" r="1.85"/><circle cx="562.1" cy="496.4" r="1.85"/><circle cx="601.8" cy="494.7" r="1.85"/><circle cx="522.8" cy="496.9" r="1.85"/><circle cx="593.5" cy="497.1" r="1.85"/><circle cx="577.6" cy="496.6" r="1.85"/><circle cx="599.1" cy="496.7" r="1.85"/><circle cx="523.4" cy="496.2" r="1.85"/><circle cx="601.4" cy="496.8" r="1.85"/><circle cx="553.6" cy="495.5" r="1.85"/><circle cx="605.4" cy="495.1" r="1.85"/><circle cx="555.2" cy="498.3" r="1.85"/><circle cx="523.7" cy="496.6" r="1.85"/><circle cx="561.8" cy="497.4" r="1.85"/><circle cx="555.1" cy="497.0" r="1.85"/><circle cx="587.7" cy="496.3" r="1.85"/><circle cx="548.4" cy="497.1" r="1.85"/><circle cx="610.7" cy="497.2" r="1.85"/><circle cx="555.9" cy="498.0" r="1.85"/><circle cx="611.3" cy="496.8" r="1.85"/><circle cx="586.7" cy="497.3" r="1.85"/><circle cx="572.9" cy="496.1" r="1.85"/><circle cx="597.3" cy="495.8" r="1.85"/><circle cx="547.3" cy="497.1" r="1.85"/><circle cx="568.0" cy="497.2" r="1.85"/><circle cx="604.0" cy="496.8" r="1.85"/><circle cx="558.3" cy="496.3" r="1.85"/><circle cx="558.0" cy="496.4" r="1.85"/><circle cx="573.2" cy="496.2" r="1.85"/><circle cx="584.9" cy="496.9" r="1.85"/><circle cx="565.6" cy="496.0" r="1.85"/><circle cx="581.0" cy="496.4" r="1.85"/><circle cx="541.9" cy="497.4" r="1.85"/><circle cx="599.0" cy="497.2" r="1.85"/><circle cx="579.9" cy="496.8" r="1.85"/><circle cx="593.0" cy="495.9" r="1.85"/><circle cx="577.2" cy="494.7" r="1.85"/><circle cx="574.3" cy="496.8" r="1.85"/><circle cx="564.3" cy="495.6" r="1.85"/><circle cx="579.5" cy="498.1" r="1.85"/><circle cx="560.6" cy="495.6" r="1.85"/><circle cx="574.0" cy="494.5" r="1.85"/><circle cx="544.2" cy="496.2" r="1.85"/><circle cx="612.9" cy="498.3" r="1.85"/><circle cx="578.4" cy="496.9" r="1.85"/><circle cx="531.5" cy="496.1" r="1.85"/><circle cx="578.6" cy="497.0" r="1.85"/><circle cx="571.5" cy="497.4" r="1.85"/><circle cx="610.7" cy="497.4" r="1.85"/><circle cx="608.5" cy="497.7" r="1.85"/><circle cx="590.6" cy="496.1" r="1.85"/><circle cx="566.1" cy="498.5" r="1.85"/><circle cx="606.1" cy="496.7" r="1.85"/><circle cx="590.2" cy="497.2" r="1.85"/><circle cx="569.5" cy="495.3" r="1.85"/><circle cx="535.2" cy="496.1" r="1.85"/><circle cx="543.0" cy="497.6" r="1.85"/><circle cx="581.0" cy="498.2" r="1.85"/><circle cx="555.2" cy="496.2" r="1.85"/><circle cx="539.8" cy="499.1" r="1.85"/><circle cx="673.3" cy="484.5" r="1.85"/><circle cx="634.7" cy="492.1" r="1.85"/><circle cx="639.7" cy="490.2" r="1.85"/><circle cx="643.0" cy="490.6" r="1.85"/><circle cx="652.7" cy="492.0" r="1.85"/><circle cx="658.3" cy="489.9" r="1.85"/><circle cx="654.1" cy="488.4" r="1.85"/><circle cx="641.9" cy="492.3" r="1.85"/><circle cx="668.6" cy="483.1" r="1.85"/><circle cx="646.1" cy="491.1" r="1.85"/><circle cx="630.1" cy="494.8" r="1.85"/><circle cx="643.1" cy="489.5" r="1.85"/><circle cx="640.0" cy="491.9" r="1.85"/><circle cx="673.0" cy="483.7" r="1.85"/></g>
<g fill="#2f8a12" fill-opacity="0.92"><path d="M534.1 404.5a1.2 1.2 0 0 1 .6-2.1a1.5 1.5 0 0 1 2.8 0a1.2 1.2 0 0 1 .6 2.1z"/><path d="M784.3 376.1a1.2 1.2 0 0 1 .6-2.1a1.5 1.5 0 0 1 2.8 0a1.2 1.2 0 0 1 .6 2.1z"/><path d="M526.8 397.7a1.2 1.2 0 0 1 .6-2.1a1.5 1.5 0 0 1 2.8 0a1.2 1.2 0 0 1 .6 2.1z"/><path d="M635.2 408.6a1.2 1.2 0 0 1 .6-2.1a1.5 1.5 0 0 1 2.8 0a1.2 1.2 0 0 1 .6 2.1z"/><path d="M626.5 409.2a1.2 1.2 0 0 1 .6-2.1a1.5 1.5 0 0 1 2.8 0a1.2 1.2 0 0 1 .6 2.1z"/><path d="M608.0 406.6a1.2 1.2 0 0 1 .6-2.1a1.5 1.5 0 0 1 2.8 0a1.2 1.2 0 0 1 .6 2.1z"/><path d="M569.5 403.6a1.2 1.2 0 0 1 .6-2.1a1.5 1.5 0 0 1 2.8 0a1.2 1.2 0 0 1 .6 2.1z"/><path d="M693.9 405.9a1.2 1.2 0 0 1 .6-2.1a1.5 1.5 0 0 1 2.8 0a1.2 1.2 0 0 1 .6 2.1z"/><path d="M585.6 404.6a1.2 1.2 0 0 1 .6-2.1a1.5 1.5 0 0 1 2.8 0a1.2 1.2 0 0 1 .6 2.1z"/><path d="M608.5 405.7a1.2 1.2 0 0 1 .6-2.1a1.5 1.5 0 0 1 2.8 0a1.2 1.2 0 0 1 .6 2.1z"/><path d="M585.2 405.6a1.2 1.2 0 0 1 .6-2.1a1.5 1.5 0 0 1 2.8 0a1.2 1.2 0 0 1 .6 2.1z"/><path d="M685.7 405.9a1.2 1.2 0 0 1 .6-2.1a1.5 1.5 0 0 1 2.8 0a1.2 1.2 0 0 1 .6 2.1z"/><path d="M654.6 406.5a1.2 1.2 0 0 1 .6-2.1a1.5 1.5 0 0 1 2.8 0a1.2 1.2 0 0 1 .6 2.1z"/><path d="M739.5 395.9a1.2 1.2 0 0 1 .6-2.1a1.5 1.5 0 0 1 2.8 0a1.2 1.2 0 0 1 .6 2.1z"/><path d="M547.1 402.5a1.2 1.2 0 0 1 .6-2.1a1.5 1.5 0 0 1 2.8 0a1.2 1.2 0 0 1 .6 2.1z"/><path d="M637.9 410.1a1.2 1.2 0 0 1 .6-2.1a1.5 1.5 0 0 1 2.8 0a1.2 1.2 0 0 1 .6 2.1z"/><path d="M772.9 379.9a1.2 1.2 0 0 1 .6-2.1a1.5 1.5 0 0 1 2.8 0a1.2 1.2 0 0 1 .6 2.1z"/><path d="M727.8 396.3a1.2 1.2 0 0 1 .6-2.1a1.5 1.5 0 0 1 2.8 0a1.2 1.2 0 0 1 .6 2.1z"/><path d="M766.9 384.2a1.2 1.2 0 0 1 .6-2.1a1.5 1.5 0 0 1 2.8 0a1.2 1.2 0 0 1 .6 2.1z"/><path d="M726.7 393.2a1.2 1.2 0 0 1 .6-2.1a1.5 1.5 0 0 1 2.8 0a1.2 1.2 0 0 1 .6 2.1z"/><path d="M781.6 382.8a1.2 1.2 0 0 1 .6-2.1a1.5 1.5 0 0 1 2.8 0a1.2 1.2 0 0 1 .6 2.1z"/><path d="M590.8 405.5a1.2 1.2 0 0 1 .6-2.1a1.5 1.5 0 0 1 2.8 0a1.2 1.2 0 0 1 .6 2.1z"/><path d="M671.2 403.9a1.2 1.2 0 0 1 .6-2.1a1.5 1.5 0 0 1 2.8 0a1.2 1.2 0 0 1 .6 2.1z"/><path d="M632.6 410.2a1.2 1.2 0 0 1 .6-2.1a1.5 1.5 0 0 1 2.8 0a1.2 1.2 0 0 1 .6 2.1z"/><path d="M739.7 390.9a1.2 1.2 0 0 1 .6-2.1a1.5 1.5 0 0 1 2.8 0a1.2 1.2 0 0 1 .6 2.1z"/><path d="M579.5 401.6a1.2 1.2 0 0 1 .6-2.1a1.5 1.5 0 0 1 2.8 0a1.2 1.2 0 0 1 .6 2.1z"/><path d="M642.9 409.0a1.2 1.2 0 0 1 .6-2.1a1.5 1.5 0 0 1 2.8 0a1.2 1.2 0 0 1 .6 2.1z"/><path d="M799.9 377.5a1.2 1.2 0 0 1 .6-2.1a1.5 1.5 0 0 1 2.8 0a1.2 1.2 0 0 1 .6 2.1z"/><path d="M683.8 405.9a1.2 1.2 0 0 1 .6-2.1a1.5 1.5 0 0 1 2.8 0a1.2 1.2 0 0 1 .6 2.1z"/><path d="M524.3 406.3a1.2 1.2 0 0 1 .6-2.1a1.5 1.5 0 0 1 2.8 0a1.2 1.2 0 0 1 .6 2.1z"/><path d="M639.7 409.5a1.2 1.2 0 0 1 .6-2.1a1.5 1.5 0 0 1 2.8 0a1.2 1.2 0 0 1 .6 2.1z"/><path d="M524.2 403.7a1.2 1.2 0 0 1 .6-2.1a1.5 1.5 0 0 1 2.8 0a1.2 1.2 0 0 1 .6 2.1z"/><path d="M735.8 393.1a1.2 1.2 0 0 1 .6-2.1a1.5 1.5 0 0 1 2.8 0a1.2 1.2 0 0 1 .6 2.1z"/><path d="M774.4 378.4a1.2 1.2 0 0 1 .6-2.1a1.5 1.5 0 0 1 2.8 0a1.2 1.2 0 0 1 .6 2.1z"/><path d="M687.0 404.3a1.2 1.2 0 0 1 .6-2.1a1.5 1.5 0 0 1 2.8 0a1.2 1.2 0 0 1 .6 2.1z"/><path d="M617.8 409.1a1.2 1.2 0 0 1 .6-2.1a1.5 1.5 0 0 1 2.8 0a1.2 1.2 0 0 1 .6 2.1z"/><path d="M721.3 395.2a1.2 1.2 0 0 1 .6-2.1a1.5 1.5 0 0 1 2.8 0a1.2 1.2 0 0 1 .6 2.1z"/><path d="M692.3 404.2a1.2 1.2 0 0 1 .6-2.1a1.5 1.5 0 0 1 2.8 0a1.2 1.2 0 0 1 .6 2.1z"/><path d="M619.1 406.1a1.2 1.2 0 0 1 .6-2.1a1.5 1.5 0 0 1 2.8 0a1.2 1.2 0 0 1 .6 2.1z"/><path d="M743.3 389.3a1.2 1.2 0 0 1 .6-2.1a1.5 1.5 0 0 1 2.8 0a1.2 1.2 0 0 1 .6 2.1z"/><path d="M728.5 394.0a1.2 1.2 0 0 1 .6-2.1a1.5 1.5 0 0 1 2.8 0a1.2 1.2 0 0 1 .6 2.1z"/><path d="M516.2 407.7a1.2 1.2 0 0 1 .6-2.1a1.5 1.5 0 0 1 2.8 0a1.2 1.2 0 0 1 .6 2.1z"/><path d="M684.4 405.1a1.2 1.2 0 0 1 .6-2.1a1.5 1.5 0 0 1 2.8 0a1.2 1.2 0 0 1 .6 2.1z"/><path d="M696.8 405.5a1.2 1.2 0 0 1 .6-2.1a1.5 1.5 0 0 1 2.8 0a1.2 1.2 0 0 1 .6 2.1z"/><path d="M730.4 389.2a1.2 1.2 0 0 1 .6-2.1a1.5 1.5 0 0 1 2.8 0a1.2 1.2 0 0 1 .6 2.1z"/><path d="M740.7 388.6a1.2 1.2 0 0 1 .6-2.1a1.5 1.5 0 0 1 2.8 0a1.2 1.2 0 0 1 .6 2.1z"/><path d="M616.3 407.3a1.2 1.2 0 0 1 .6-2.1a1.5 1.5 0 0 1 2.8 0a1.2 1.2 0 0 1 .6 2.1z"/><path d="M535.1 404.3a1.2 1.2 0 0 1 .6-2.1a1.5 1.5 0 0 1 2.8 0a1.2 1.2 0 0 1 .6 2.1z"/><path d="M698.9 396.3a1.2 1.2 0 0 1 .6-2.1a1.5 1.5 0 0 1 2.8 0a1.2 1.2 0 0 1 .6 2.1z"/><path d="M668.7 408.7a1.2 1.2 0 0 1 .6-2.1a1.5 1.5 0 0 1 2.8 0a1.2 1.2 0 0 1 .6 2.1z"/><path d="M769.5 380.4a1.2 1.2 0 0 1 .6-2.1a1.5 1.5 0 0 1 2.8 0a1.2 1.2 0 0 1 .6 2.1z"/><path d="M657.0 409.7a1.2 1.2 0 0 1 .6-2.1a1.5 1.5 0 0 1 2.8 0a1.2 1.2 0 0 1 .6 2.1z"/><path d="M680.7 403.5a1.2 1.2 0 0 1 .6-2.1a1.5 1.5 0 0 1 2.8 0a1.2 1.2 0 0 1 .6 2.1z"/><path d="M598.7 405.3a1.2 1.2 0 0 1 .6-2.1a1.5 1.5 0 0 1 2.8 0a1.2 1.2 0 0 1 .6 2.1z"/><path d="M540.4 403.5a1.2 1.2 0 0 1 .6-2.1a1.5 1.5 0 0 1 2.8 0a1.2 1.2 0 0 1 .6 2.1z"/><path d="M724.0 393.5a1.2 1.2 0 0 1 .6-2.1a1.5 1.5 0 0 1 2.8 0a1.2 1.2 0 0 1 .6 2.1z"/><path d="M615.4 404.4a1.2 1.2 0 0 1 .6-2.1a1.5 1.5 0 0 1 2.8 0a1.2 1.2 0 0 1 .6 2.1z"/><path d="M607.6 408.6a1.2 1.2 0 0 1 .6-2.1a1.5 1.5 0 0 1 2.8 0a1.2 1.2 0 0 1 .6 2.1z"/><path d="M783.9 376.8a1.2 1.2 0 0 1 .6-2.1a1.5 1.5 0 0 1 2.8 0a1.2 1.2 0 0 1 .6 2.1z"/><path d="M771.7 381.6a1.2 1.2 0 0 1 .6-2.1a1.5 1.5 0 0 1 2.8 0a1.2 1.2 0 0 1 .6 2.1z"/><path d="M708.9 395.9a1.2 1.2 0 0 1 .6-2.1a1.5 1.5 0 0 1 2.8 0a1.2 1.2 0 0 1 .6 2.1z"/><path d="M597.6 406.9a1.2 1.2 0 0 1 .6-2.1a1.5 1.5 0 0 1 2.8 0a1.2 1.2 0 0 1 .6 2.1z"/><path d="M763.4 379.6a1.2 1.2 0 0 1 .6-2.1a1.5 1.5 0 0 1 2.8 0a1.2 1.2 0 0 1 .6 2.1z"/><path d="M695.6 405.7a1.2 1.2 0 0 1 .6-2.1a1.5 1.5 0 0 1 2.8 0a1.2 1.2 0 0 1 .6 2.1z"/><path d="M771.7 382.4a1.2 1.2 0 0 1 .6-2.1a1.5 1.5 0 0 1 2.8 0a1.2 1.2 0 0 1 .6 2.1z"/><path d="M648.5 410.1a1.2 1.2 0 0 1 .6-2.1a1.5 1.5 0 0 1 2.8 0a1.2 1.2 0 0 1 .6 2.1z"/><path d="M683.1 408.8a1.2 1.2 0 0 1 .6-2.1a1.5 1.5 0 0 1 2.8 0a1.2 1.2 0 0 1 .6 2.1z"/><path d="M676.8 407.6a1.2 1.2 0 0 1 .6-2.1a1.5 1.5 0 0 1 2.8 0a1.2 1.2 0 0 1 .6 2.1z"/><path d="M640.9 409.0a1.2 1.2 0 0 1 .6-2.1a1.5 1.5 0 0 1 2.8 0a1.2 1.2 0 0 1 .6 2.1z"/><path d="M757.0 390.6a1.2 1.2 0 0 1 .6-2.1a1.5 1.5 0 0 1 2.8 0a1.2 1.2 0 0 1 .6 2.1z"/><path d="M743.1 388.2a1.2 1.2 0 0 1 .6-2.1a1.5 1.5 0 0 1 2.8 0a1.2 1.2 0 0 1 .6 2.1z"/><path d="M788.9 373.9a1.2 1.2 0 0 1 .6-2.1a1.5 1.5 0 0 1 2.8 0a1.2 1.2 0 0 1 .6 2.1z"/><path d="M752.6 385.1a1.2 1.2 0 0 1 .6-2.1a1.5 1.5 0 0 1 2.8 0a1.2 1.2 0 0 1 .6 2.1z"/><path d="M733.9 391.8a1.2 1.2 0 0 1 .6-2.1a1.5 1.5 0 0 1 2.8 0a1.2 1.2 0 0 1 .6 2.1z"/><path d="M684.7 401.3a1.2 1.2 0 0 1 .6-2.1a1.5 1.5 0 0 1 2.8 0a1.2 1.2 0 0 1 .6 2.1z"/><path d="M687.6 405.3a1.2 1.2 0 0 1 .6-2.1a1.5 1.5 0 0 1 2.8 0a1.2 1.2 0 0 1 .6 2.1z"/><path d="M526.4 407.7a1.2 1.2 0 0 1 .6-2.1a1.5 1.5 0 0 1 2.8 0a1.2 1.2 0 0 1 .6 2.1z"/><path d="M739.9 392.3a1.2 1.2 0 0 1 .6-2.1a1.5 1.5 0 0 1 2.8 0a1.2 1.2 0 0 1 .6 2.1z"/><path d="M595.8 409.0a1.2 1.2 0 0 1 .6-2.1a1.5 1.5 0 0 1 2.8 0a1.2 1.2 0 0 1 .6 2.1z"/><path d="M692.6 403.2a1.2 1.2 0 0 1 .6-2.1a1.5 1.5 0 0 1 2.8 0a1.2 1.2 0 0 1 .6 2.1z"/><path d="M744.7 403.4a1.2 1.2 0 0 1 .6-2.1a1.5 1.5 0 0 1 2.8 0a1.2 1.2 0 0 1 .6 2.1z"/><path d="M801.9 402.7a1.2 1.2 0 0 1 .6-2.1a1.5 1.5 0 0 1 2.8 0a1.2 1.2 0 0 1 .6 2.1z"/><path d="M714.0 404.7a1.2 1.2 0 0 1 .6-2.1a1.5 1.5 0 0 1 2.8 0a1.2 1.2 0 0 1 .6 2.1z"/><path d="M634.3 419.0a1.2 1.2 0 0 1 .6-2.1a1.5 1.5 0 0 1 2.8 0a1.2 1.2 0 0 1 .6 2.1z"/><path d="M568.3 417.6a1.2 1.2 0 0 1 .6-2.1a1.5 1.5 0 0 1 2.8 0a1.2 1.2 0 0 1 .6 2.1z"/><path d="M557.9 418.6a1.2 1.2 0 0 1 .6-2.1a1.5 1.5 0 0 1 2.8 0a1.2 1.2 0 0 1 .6 2.1z"/><path d="M715.1 407.4a1.2 1.2 0 0 1 .6-2.1a1.5 1.5 0 0 1 2.8 0a1.2 1.2 0 0 1 .6 2.1z"/><path d="M814.9 400.9a1.2 1.2 0 0 1 .6-2.1a1.5 1.5 0 0 1 2.8 0a1.2 1.2 0 0 1 .6 2.1z"/><path d="M717.5 407.1a1.2 1.2 0 0 1 .6-2.1a1.5 1.5 0 0 1 2.8 0a1.2 1.2 0 0 1 .6 2.1z"/><path d="M589.1 412.6a1.2 1.2 0 0 1 .6-2.1a1.5 1.5 0 0 1 2.8 0a1.2 1.2 0 0 1 .6 2.1z"/><path d="M704.0 413.7a1.2 1.2 0 0 1 .6-2.1a1.5 1.5 0 0 1 2.8 0a1.2 1.2 0 0 1 .6 2.1z"/><path d="M639.2 415.5a1.2 1.2 0 0 1 .6-2.1a1.5 1.5 0 0 1 2.8 0a1.2 1.2 0 0 1 .6 2.1z"/><path d="M713.3 406.1a1.2 1.2 0 0 1 .6-2.1a1.5 1.5 0 0 1 2.8 0a1.2 1.2 0 0 1 .6 2.1z"/><path d="M606.7 415.0a1.2 1.2 0 0 1 .6-2.1a1.5 1.5 0 0 1 2.8 0a1.2 1.2 0 0 1 .6 2.1z"/><path d="M528.9 418.1a1.2 1.2 0 0 1 .6-2.1a1.5 1.5 0 0 1 2.8 0a1.2 1.2 0 0 1 .6 2.1z"/><path d="M643.7 411.3a1.2 1.2 0 0 1 .6-2.1a1.5 1.5 0 0 1 2.8 0a1.2 1.2 0 0 1 .6 2.1z"/><path d="M531.5 418.6a1.2 1.2 0 0 1 .6-2.1a1.5 1.5 0 0 1 2.8 0a1.2 1.2 0 0 1 .6 2.1z"/><path d="M771.4 403.5a1.2 1.2 0 0 1 .6-2.1a1.5 1.5 0 0 1 2.8 0a1.2 1.2 0 0 1 .6 2.1z"/><path d="M705.7 409.2a1.2 1.2 0 0 1 .6-2.1a1.5 1.5 0 0 1 2.8 0a1.2 1.2 0 0 1 .6 2.1z"/><path d="M554.7 420.8a1.2 1.2 0 0 1 .6-2.1a1.5 1.5 0 0 1 2.8 0a1.2 1.2 0 0 1 .6 2.1z"/><path d="M818.8 394.7a1.2 1.2 0 0 1 .6-2.1a1.5 1.5 0 0 1 2.8 0a1.2 1.2 0 0 1 .6 2.1z"/><path d="M620.7 415.5a1.2 1.2 0 0 1 .6-2.1a1.5 1.5 0 0 1 2.8 0a1.2 1.2 0 0 1 .6 2.1z"/><path d="M647.9 415.7a1.2 1.2 0 0 1 .6-2.1a1.5 1.5 0 0 1 2.8 0a1.2 1.2 0 0 1 .6 2.1z"/><path d="M652.9 416.1a1.2 1.2 0 0 1 .6-2.1a1.5 1.5 0 0 1 2.8 0a1.2 1.2 0 0 1 .6 2.1z"/><path d="M764.3 405.3a1.2 1.2 0 0 1 .6-2.1a1.5 1.5 0 0 1 2.8 0a1.2 1.2 0 0 1 .6 2.1z"/><path d="M736.8 407.3a1.2 1.2 0 0 1 .6-2.1a1.5 1.5 0 0 1 2.8 0a1.2 1.2 0 0 1 .6 2.1z"/><path d="M826.2 395.9a1.2 1.2 0 0 1 .6-2.1a1.5 1.5 0 0 1 2.8 0a1.2 1.2 0 0 1 .6 2.1z"/><path d="M738.1 408.0a1.2 1.2 0 0 1 .6-2.1a1.5 1.5 0 0 1 2.8 0a1.2 1.2 0 0 1 .6 2.1z"/><path d="M753.1 403.8a1.2 1.2 0 0 1 .6-2.1a1.5 1.5 0 0 1 2.8 0a1.2 1.2 0 0 1 .6 2.1z"/><path d="M779.2 402.8a1.2 1.2 0 0 1 .6-2.1a1.5 1.5 0 0 1 2.8 0a1.2 1.2 0 0 1 .6 2.1z"/><path d="M725.0 406.4a1.2 1.2 0 0 1 .6-2.1a1.5 1.5 0 0 1 2.8 0a1.2 1.2 0 0 1 .6 2.1z"/><path d="M671.6 412.3a1.2 1.2 0 0 1 .6-2.1a1.5 1.5 0 0 1 2.8 0a1.2 1.2 0 0 1 .6 2.1z"/><path d="M751.1 402.5a1.2 1.2 0 0 1 .6-2.1a1.5 1.5 0 0 1 2.8 0a1.2 1.2 0 0 1 .6 2.1z"/><path d="M782.2 404.5a1.2 1.2 0 0 1 .6-2.1a1.5 1.5 0 0 1 2.8 0a1.2 1.2 0 0 1 .6 2.1z"/><path d="M622.6 412.4a1.2 1.2 0 0 1 .6-2.1a1.5 1.5 0 0 1 2.8 0a1.2 1.2 0 0 1 .6 2.1z"/><path d="M694.5 409.6a1.2 1.2 0 0 1 .6-2.1a1.5 1.5 0 0 1 2.8 0a1.2 1.2 0 0 1 .6 2.1z"/><path d="M657.8 419.6a1.2 1.2 0 0 1 .6-2.1a1.5 1.5 0 0 1 2.8 0a1.2 1.2 0 0 1 .6 2.1z"/><path d="M736.3 408.9a1.2 1.2 0 0 1 .6-2.1a1.5 1.5 0 0 1 2.8 0a1.2 1.2 0 0 1 .6 2.1z"/><path d="M800.4 403.7a1.2 1.2 0 0 1 .6-2.1a1.5 1.5 0 0 1 2.8 0a1.2 1.2 0 0 1 .6 2.1z"/><path d="M782.0 404.6a1.2 1.2 0 0 1 .6-2.1a1.5 1.5 0 0 1 2.8 0a1.2 1.2 0 0 1 .6 2.1z"/><path d="M647.3 416.5a1.2 1.2 0 0 1 .6-2.1a1.5 1.5 0 0 1 2.8 0a1.2 1.2 0 0 1 .6 2.1z"/><path d="M590.9 415.2a1.2 1.2 0 0 1 .6-2.1a1.5 1.5 0 0 1 2.8 0a1.2 1.2 0 0 1 .6 2.1z"/><path d="M683.6 411.1a1.2 1.2 0 0 1 .6-2.1a1.5 1.5 0 0 1 2.8 0a1.2 1.2 0 0 1 .6 2.1z"/><path d="M531.3 414.8a1.2 1.2 0 0 1 .6-2.1a1.5 1.5 0 0 1 2.8 0a1.2 1.2 0 0 1 .6 2.1z"/><path d="M607.8 414.3a1.2 1.2 0 0 1 .6-2.1a1.5 1.5 0 0 1 2.8 0a1.2 1.2 0 0 1 .6 2.1z"/><path d="M808.0 404.7a1.2 1.2 0 0 1 .6-2.1a1.5 1.5 0 0 1 2.8 0a1.2 1.2 0 0 1 .6 2.1z"/><path d="M614.4 411.8a1.2 1.2 0 0 1 .6-2.1a1.5 1.5 0 0 1 2.8 0a1.2 1.2 0 0 1 .6 2.1z"/><path d="M805.0 406.4a1.2 1.2 0 0 1 .6-2.1a1.5 1.5 0 0 1 2.8 0a1.2 1.2 0 0 1 .6 2.1z"/><path d="M733.6 403.2a1.2 1.2 0 0 1 .6-2.1a1.5 1.5 0 0 1 2.8 0a1.2 1.2 0 0 1 .6 2.1z"/><path d="M568.6 419.2a1.2 1.2 0 0 1 .6-2.1a1.5 1.5 0 0 1 2.8 0a1.2 1.2 0 0 1 .6 2.1z"/><path d="M526.4 420.1a1.2 1.2 0 0 1 .6-2.1a1.5 1.5 0 0 1 2.8 0a1.2 1.2 0 0 1 .6 2.1z"/><path d="M793.7 401.8a1.2 1.2 0 0 1 .6-2.1a1.5 1.5 0 0 1 2.8 0a1.2 1.2 0 0 1 .6 2.1z"/><path d="M656.2 414.0a1.2 1.2 0 0 1 .6-2.1a1.5 1.5 0 0 1 2.8 0a1.2 1.2 0 0 1 .6 2.1z"/><path d="M614.4 419.6a1.2 1.2 0 0 1 .6-2.1a1.5 1.5 0 0 1 2.8 0a1.2 1.2 0 0 1 .6 2.1z"/><path d="M805.9 401.7a1.2 1.2 0 0 1 .6-2.1a1.5 1.5 0 0 1 2.8 0a1.2 1.2 0 0 1 .6 2.1z"/><path d="M632.4 413.6a1.2 1.2 0 0 1 .6-2.1a1.5 1.5 0 0 1 2.8 0a1.2 1.2 0 0 1 .6 2.1z"/><path d="M753.5 404.7a1.2 1.2 0 0 1 .6-2.1a1.5 1.5 0 0 1 2.8 0a1.2 1.2 0 0 1 .6 2.1z"/><path d="M556.9 415.5a1.2 1.2 0 0 1 .6-2.1a1.5 1.5 0 0 1 2.8 0a1.2 1.2 0 0 1 .6 2.1z"/><path d="M667.2 415.9a1.2 1.2 0 0 1 .6-2.1a1.5 1.5 0 0 1 2.8 0a1.2 1.2 0 0 1 .6 2.1z"/><path d="M654.0 414.8a1.2 1.2 0 0 1 .6-2.1a1.5 1.5 0 0 1 2.8 0a1.2 1.2 0 0 1 .6 2.1z"/><path d="M571.1 419.8a1.2 1.2 0 0 1 .6-2.1a1.5 1.5 0 0 1 2.8 0a1.2 1.2 0 0 1 .6 2.1z"/><path d="M734.0 405.5a1.2 1.2 0 0 1 .6-2.1a1.5 1.5 0 0 1 2.8 0a1.2 1.2 0 0 1 .6 2.1z"/><path d="M626.6 416.6a1.2 1.2 0 0 1 .6-2.1a1.5 1.5 0 0 1 2.8 0a1.2 1.2 0 0 1 .6 2.1z"/><path d="M755.8 406.2a1.2 1.2 0 0 1 .6-2.1a1.5 1.5 0 0 1 2.8 0a1.2 1.2 0 0 1 .6 2.1z"/><path d="M667.5 415.1a1.2 1.2 0 0 1 .6-2.1a1.5 1.5 0 0 1 2.8 0a1.2 1.2 0 0 1 .6 2.1z"/><path d="M806.5 399.4a1.2 1.2 0 0 1 .6-2.1a1.5 1.5 0 0 1 2.8 0a1.2 1.2 0 0 1 .6 2.1z"/><path d="M684.1 412.8a1.2 1.2 0 0 1 .6-2.1a1.5 1.5 0 0 1 2.8 0a1.2 1.2 0 0 1 .6 2.1z"/><path d="M781.2 401.6a1.2 1.2 0 0 1 .6-2.1a1.5 1.5 0 0 1 2.8 0a1.2 1.2 0 0 1 .6 2.1z"/><path d="M679.1 412.1a1.2 1.2 0 0 1 .6-2.1a1.5 1.5 0 0 1 2.8 0a1.2 1.2 0 0 1 .6 2.1z"/><path d="M804.2 405.3a1.2 1.2 0 0 1 .6-2.1a1.5 1.5 0 0 1 2.8 0a1.2 1.2 0 0 1 .6 2.1z"/><path d="M697.1 410.0a1.2 1.2 0 0 1 .6-2.1a1.5 1.5 0 0 1 2.8 0a1.2 1.2 0 0 1 .6 2.1z"/><path d="M622.7 414.2a1.2 1.2 0 0 1 .6-2.1a1.5 1.5 0 0 1 2.8 0a1.2 1.2 0 0 1 .6 2.1z"/><path d="M630.1 414.6a1.2 1.2 0 0 1 .6-2.1a1.5 1.5 0 0 1 2.8 0a1.2 1.2 0 0 1 .6 2.1z"/><path d="M562.4 418.3a1.2 1.2 0 0 1 .6-2.1a1.5 1.5 0 0 1 2.8 0a1.2 1.2 0 0 1 .6 2.1z"/><path d="M585.9 415.4a1.2 1.2 0 0 1 .6-2.1a1.5 1.5 0 0 1 2.8 0a1.2 1.2 0 0 1 .6 2.1z"/></g>
<g fill="#f218f0" fill-opacity="0.92"><circle cx="774.0" cy="369.1" r="1.85"/><circle cx="793.6" cy="398.8" r="1.85"/><circle cx="791.8" cy="388.8" r="1.85"/><circle cx="790.9" cy="380.5" r="1.85"/><circle cx="770.2" cy="373.6" r="1.85"/><circle cx="719.2" cy="380.7" r="1.85"/><circle cx="776.4" cy="372.0" r="1.85"/><circle cx="733.1" cy="373.5" r="1.85"/><circle cx="796.4" cy="392.3" r="1.85"/><circle cx="720.0" cy="379.7" r="1.85"/><circle cx="731.0" cy="372.8" r="1.85"/><circle cx="794.3" cy="388.5" r="1.85"/><circle cx="796.0" cy="384.3" r="1.85"/><circle cx="712.0" cy="379.6" r="1.85"/><circle cx="778.9" cy="372.8" r="1.85"/><circle cx="769.2" cy="372.8" r="1.85"/><circle cx="798.8" cy="385.9" r="1.85"/><circle cx="801.5" cy="399.6" r="1.85"/><circle cx="795.7" cy="386.1" r="1.85"/><circle cx="795.7" cy="389.7" r="1.85"/><circle cx="794.9" cy="383.0" r="1.85"/><circle cx="800.7" cy="390.8" r="1.85"/><circle cx="741.7" cy="372.4" r="1.85"/><circle cx="777.9" cy="378.4" r="1.85"/><circle cx="733.6" cy="373.6" r="1.85"/><circle cx="738.3" cy="371.9" r="1.85"/><circle cx="766.0" cy="368.6" r="1.85"/><circle cx="726.1" cy="369.5" r="1.85"/><circle cx="766.9" cy="370.5" r="1.85"/><circle cx="743.6" cy="368.6" r="1.85"/><circle cx="730.2" cy="373.9" r="1.85"/><circle cx="791.7" cy="385.4" r="1.85"/><circle cx="747.4" cy="367.8" r="1.85"/><circle cx="781.8" cy="374.8" r="1.85"/><circle cx="785.7" cy="375.1" r="1.85"/><circle cx="732.4" cy="373.5" r="1.85"/><circle cx="796.1" cy="390.8" r="1.85"/><circle cx="752.8" cy="371.5" r="1.85"/><circle cx="799.6" cy="389.2" r="1.85"/><circle cx="784.5" cy="370.2" r="1.85"/><circle cx="781.6" cy="372.2" r="1.85"/><circle cx="715.3" cy="384.3" r="1.85"/><circle cx="788.9" cy="378.5" r="1.85"/><circle cx="797.3" cy="390.5" r="1.85"/><circle cx="799.4" cy="395.7" r="1.85"/><circle cx="795.7" cy="381.2" r="1.85"/><circle cx="738.5" cy="381.3" r="1.85"/><circle cx="729.7" cy="389.7" r="1.85"/><circle cx="773.3" cy="370.8" r="1.85"/><circle cx="760.4" cy="376.0" r="1.85"/><circle cx="764.7" cy="375.7" r="1.85"/><circle cx="783.5" cy="380.6" r="1.85"/><circle cx="793.3" cy="383.7" r="1.85"/><circle cx="731.1" cy="382.9" r="1.85"/><circle cx="752.2" cy="382.5" r="1.85"/><circle cx="774.6" cy="376.8" r="1.85"/><circle cx="787.3" cy="379.9" r="1.85"/><circle cx="765.7" cy="377.5" r="1.85"/><circle cx="729.0" cy="386.7" r="1.85"/><circle cx="776.2" cy="376.5" r="1.85"/><circle cx="732.8" cy="384.7" r="1.85"/><circle cx="734.8" cy="382.1" r="1.85"/><circle cx="732.9" cy="385.0" r="1.85"/><circle cx="765.4" cy="373.6" r="1.85"/><circle cx="776.4" cy="377.4" r="1.85"/><circle cx="777.3" cy="373.6" r="1.85"/><circle cx="741.1" cy="381.0" r="1.85"/><circle cx="777.3" cy="376.9" r="1.85"/><circle cx="743.6" cy="383.4" r="1.85"/><circle cx="779.7" cy="369.8" r="1.85"/><circle cx="779.0" cy="376.2" r="1.85"/><circle cx="757.1" cy="377.7" r="1.85"/><circle cx="787.2" cy="377.1" r="1.85"/><circle cx="748.0" cy="379.9" r="1.85"/><circle cx="751.4" cy="378.4" r="1.85"/><circle cx="686.6" cy="440.9" r="1.85"/><circle cx="683.8" cy="431.5" r="1.85"/><circle cx="679.6" cy="428.7" r="1.85"/><circle cx="677.0" cy="421.2" r="1.85"/><circle cx="681.5" cy="432.1" r="1.85"/><circle cx="687.1" cy="449.7" r="1.85"/><circle cx="691.9" cy="454.7" r="1.85"/><circle cx="679.6" cy="424.0" r="1.85"/><circle cx="675.4" cy="414.0" r="1.85"/><circle cx="686.6" cy="431.9" r="1.85"/><circle cx="681.1" cy="423.4" r="1.85"/><circle cx="690.4" cy="460.5" r="1.85"/><circle cx="677.5" cy="415.0" r="1.85"/><circle cx="693.1" cy="456.5" r="1.85"/><circle cx="691.7" cy="445.7" r="1.85"/><circle cx="677.5" cy="428.1" r="1.85"/><circle cx="683.5" cy="441.5" r="1.85"/><circle cx="688.2" cy="440.8" r="1.85"/><circle cx="697.3" cy="458.1" r="1.85"/><circle cx="702.5" cy="472.1" r="1.85"/><circle cx="709.6" cy="426.8" r="1.85"/><circle cx="699.8" cy="407.1" r="1.85"/><circle cx="698.9" cy="469.3" r="1.85"/><circle cx="697.5" cy="403.0" r="1.85"/><circle cx="697.0" cy="422.1" r="1.85"/><circle cx="702.4" cy="470.6" r="1.85"/><circle cx="700.8" cy="447.9" r="1.85"/><circle cx="696.5" cy="433.2" r="1.85"/><circle cx="698.6" cy="422.1" r="1.85"/><circle cx="700.2" cy="445.1" r="1.85"/><circle cx="701.7" cy="457.9" r="1.85"/><circle cx="699.4" cy="452.9" r="1.85"/><circle cx="697.0" cy="411.9" r="1.85"/><circle cx="696.7" cy="447.1" r="1.85"/><circle cx="695.5" cy="416.1" r="1.85"/><circle cx="692.6" cy="436.0" r="1.85"/><circle cx="697.1" cy="417.2" r="1.85"/><circle cx="696.5" cy="416.4" r="1.85"/><circle cx="519.8" cy="426.5" r="1.85"/><circle cx="539.5" cy="421.7" r="1.85"/><circle cx="530.4" cy="420.6" r="1.85"/></g>
<g fill="#f6c98a" fill-opacity="0.92"><path d="M659.3 464.2q1.05-.8 2.1.3q1.05-1.1 2.1-.3l-2.1 3z"/><path d="M653.2 459.4q1.05-.8 2.1.3q1.05-1.1 2.1-.3l-2.1 3z"/><path d="M653.4 436.3q1.05-.8 2.1.3q1.05-1.1 2.1-.3l-2.1 3z"/><path d="M658.7 425.8q1.05-.8 2.1.3q1.05-1.1 2.1-.3l-2.1 3z"/><path d="M659.2 437.4q1.05-.8 2.1.3q1.05-1.1 2.1-.3l-2.1 3z"/><path d="M652.1 425.0q1.05-.8 2.1.3q1.05-1.1 2.1-.3l-2.1 3z"/><path d="M653.3 434.8q1.05-.8 2.1.3q1.05-1.1 2.1-.3l-2.1 3z"/><path d="M655.6 453.5q1.05-.8 2.1.3q1.05-1.1 2.1-.3l-2.1 3z"/><path d="M654.7 420.1q1.05-.8 2.1.3q1.05-1.1 2.1-.3l-2.1 3z"/><path d="M662.1 458.3q1.05-.8 2.1.3q1.05-1.1 2.1-.3l-2.1 3z"/><path d="M659.7 420.7q1.05-.8 2.1.3q1.05-1.1 2.1-.3l-2.1 3z"/><path d="M658.3 429.6q1.05-.8 2.1.3q1.05-1.1 2.1-.3l-2.1 3z"/><path d="M661.2 421.2q1.05-.8 2.1.3q1.05-1.1 2.1-.3l-2.1 3z"/><path d="M659.4 408.1q1.05-.8 2.1.3q1.05-1.1 2.1-.3l-2.1 3z"/><path d="M652.2 438.6q1.05-.8 2.1.3q1.05-1.1 2.1-.3l-2.1 3z"/><path d="M662.5 458.2q1.05-.8 2.1.3q1.05-1.1 2.1-.3l-2.1 3z"/><path d="M655.5 437.2q1.05-.8 2.1.3q1.05-1.1 2.1-.3l-2.1 3z"/><path d="M657.4 420.9q1.05-.8 2.1.3q1.05-1.1 2.1-.3l-2.1 3z"/><path d="M657.1 441.3q1.05-.8 2.1.3q1.05-1.1 2.1-.3l-2.1 3z"/><path d="M661.5 411.9q1.05-.8 2.1.3q1.05-1.1 2.1-.3l-2.1 3z"/><path d="M655.6 435.7q1.05-.8 2.1.3q1.05-1.1 2.1-.3l-2.1 3z"/><path d="M662.9 472.3q1.05-.8 2.1.3q1.05-1.1 2.1-.3l-2.1 3z"/><path d="M655.3 406.9q1.05-.8 2.1.3q1.05-1.1 2.1-.3l-2.1 3z"/><path d="M656.0 440.2q1.05-.8 2.1.3q1.05-1.1 2.1-.3l-2.1 3z"/><path d="M659.6 452.9q1.05-.8 2.1.3q1.05-1.1 2.1-.3l-2.1 3z"/><path d="M653.9 424.8q1.05-.8 2.1.3q1.05-1.1 2.1-.3l-2.1 3z"/><path d="M656.9 413.3q1.05-.8 2.1.3q1.05-1.1 2.1-.3l-2.1 3z"/><path d="M652.0 415.3q1.05-.8 2.1.3q1.05-1.1 2.1-.3l-2.1 3z"/><path d="M658.5 443.4q1.05-.8 2.1.3q1.05-1.1 2.1-.3l-2.1 3z"/><path d="M656.1 435.7q1.05-.8 2.1.3q1.05-1.1 2.1-.3l-2.1 3z"/><path d="M656.3 423.6q1.05-.8 2.1.3q1.05-1.1 2.1-.3l-2.1 3z"/><path d="M659.2 424.2q1.05-.8 2.1.3q1.05-1.1 2.1-.3l-2.1 3z"/><path d="M655.6 455.5q1.05-.8 2.1.3q1.05-1.1 2.1-.3l-2.1 3z"/><path d="M654.5 430.6q1.05-.8 2.1.3q1.05-1.1 2.1-.3l-2.1 3z"/><path d="M659.8 440.9q1.05-.8 2.1.3q1.05-1.1 2.1-.3l-2.1 3z"/><path d="M703.2 410.6q1.05-.8 2.1.3q1.05-1.1 2.1-.3l-2.1 3z"/><path d="M707.4 475.0q1.05-.8 2.1.3q1.05-1.1 2.1-.3l-2.1 3z"/><path d="M703.8 431.6q1.05-.8 2.1.3q1.05-1.1 2.1-.3l-2.1 3z"/><path d="M705.8 410.7q1.05-.8 2.1.3q1.05-1.1 2.1-.3l-2.1 3z"/><path d="M703.6 469.4q1.05-.8 2.1.3q1.05-1.1 2.1-.3l-2.1 3z"/><path d="M708.3 419.5q1.05-.8 2.1.3q1.05-1.1 2.1-.3l-2.1 3z"/><path d="M700.3 442.1q1.05-.8 2.1.3q1.05-1.1 2.1-.3l-2.1 3z"/><path d="M710.8 440.0q1.05-.8 2.1.3q1.05-1.1 2.1-.3l-2.1 3z"/><path d="M702.8 430.8q1.05-.8 2.1.3q1.05-1.1 2.1-.3l-2.1 3z"/><path d="M705.1 472.6q1.05-.8 2.1.3q1.05-1.1 2.1-.3l-2.1 3z"/><path d="M703.9 427.0q1.05-.8 2.1.3q1.05-1.1 2.1-.3l-2.1 3z"/><path d="M702.0 454.8q1.05-.8 2.1.3q1.05-1.1 2.1-.3l-2.1 3z"/><path d="M707.4 453.2q1.05-.8 2.1.3q1.05-1.1 2.1-.3l-2.1 3z"/><path d="M703.6 459.2q1.05-.8 2.1.3q1.05-1.1 2.1-.3l-2.1 3z"/><path d="M712.3 422.2q1.05-.8 2.1.3q1.05-1.1 2.1-.3l-2.1 3z"/><path d="M705.3 450.8q1.05-.8 2.1.3q1.05-1.1 2.1-.3l-2.1 3z"/><path d="M706.9 413.6q1.05-.8 2.1.3q1.05-1.1 2.1-.3l-2.1 3z"/><path d="M699.9 465.6q1.05-.8 2.1.3q1.05-1.1 2.1-.3l-2.1 3z"/><path d="M704.4 465.2q1.05-.8 2.1.3q1.05-1.1 2.1-.3l-2.1 3z"/><path d="M698.5 478.0q1.05-.8 2.1.3q1.05-1.1 2.1-.3l-2.1 3z"/><path d="M703.5 467.3q1.05-.8 2.1.3q1.05-1.1 2.1-.3l-2.1 3z"/><path d="M706.0 469.1q1.05-.8 2.1.3q1.05-1.1 2.1-.3l-2.1 3z"/><path d="M710.7 452.0q1.05-.8 2.1.3q1.05-1.1 2.1-.3l-2.1 3z"/><path d="M708.6 449.2q1.05-.8 2.1.3q1.05-1.1 2.1-.3l-2.1 3z"/><path d="M706.9 427.0q1.05-.8 2.1.3q1.05-1.1 2.1-.3l-2.1 3z"/><path d="M700.4 468.5q1.05-.8 2.1.3q1.05-1.1 2.1-.3l-2.1 3z"/><path d="M707.2 417.6q1.05-.8 2.1.3q1.05-1.1 2.1-.3l-2.1 3z"/><path d="M699.5 424.4q1.05-.8 2.1.3q1.05-1.1 2.1-.3l-2.1 3z"/><path d="M706.5 419.0q1.05-.8 2.1.3q1.05-1.1 2.1-.3l-2.1 3z"/><path d="M703.5 471.5q1.05-.8 2.1.3q1.05-1.1 2.1-.3l-2.1 3z"/></g>
<g fill="#262626" fill-opacity="0.85"><circle cx="183.3" cy="627.4" r="1.85"/><circle cx="189.3" cy="620.9" r="1.85"/><circle cx="199.7" cy="611.9" r="1.85"/><circle cx="194.2" cy="622.2" r="1.85"/><circle cx="211.5" cy="603.7" r="1.85"/><circle cx="164.5" cy="642.1" r="1.85"/><circle cx="169.4" cy="637.9" r="1.85"/><circle cx="202.4" cy="614.0" r="1.85"/><circle cx="189.2" cy="624.8" r="1.85"/><circle cx="165.3" cy="640.7" r="1.85"/><circle cx="186.4" cy="625.6" r="1.85"/><circle cx="176.3" cy="632.6" r="1.85"/><circle cx="176.0" cy="630.6" r="1.85"/><circle cx="210.7" cy="606.0" r="1.85"/><circle cx="190.9" cy="622.9" r="1.85"/><circle cx="195.2" cy="618.1" r="1.85"/><circle cx="193.2" cy="616.4" r="1.85"/><circle cx="208.2" cy="606.1" r="1.85"/><circle cx="189.9" cy="616.3" r="1.85"/><circle cx="182.5" cy="628.7" r="1.85"/><circle cx="183.1" cy="625.8" r="1.85"/><circle cx="167.7" cy="642.0" r="1.85"/><circle cx="174.5" cy="633.5" r="1.85"/><circle cx="182.0" cy="630.6" r="1.85"/><circle cx="207.6" cy="610.3" r="1.85"/><circle cx="169.2" cy="642.6" r="1.85"/><circle cx="203.2" cy="611.4" r="1.85"/><circle cx="161.0" cy="647.3" r="1.85"/><circle cx="194.9" cy="618.8" r="1.85"/><circle cx="195.4" cy="616.1" r="1.85"/><circle cx="168.0" cy="637.4" r="1.85"/><circle cx="162.8" cy="642.9" r="1.85"/><circle cx="166.5" cy="643.6" r="1.85"/><circle cx="207.8" cy="609.4" r="1.85"/><circle cx="190.0" cy="620.1" r="1.85"/><circle cx="190.4" cy="617.4" r="1.85"/><circle cx="187.4" cy="621.5" r="1.85"/><circle cx="198.4" cy="618.9" r="1.85"/><circle cx="197.0" cy="615.9" r="1.85"/><circle cx="169.9" cy="638.2" r="1.85"/><circle cx="163.8" cy="640.5" r="1.85"/><circle cx="184.9" cy="627.9" r="1.85"/><circle cx="186.0" cy="623.9" r="1.85"/><circle cx="191.2" cy="620.4" r="1.85"/><circle cx="176.0" cy="637.7" r="1.85"/><circle cx="173.3" cy="630.6" r="1.85"/><circle cx="192.3" cy="627.7" r="1.85"/><circle cx="194.6" cy="612.7" r="1.85"/><circle cx="209.8" cy="608.6" r="1.85"/><circle cx="194.2" cy="616.3" r="1.85"/><circle cx="177.4" cy="634.0" r="1.85"/><circle cx="167.7" cy="641.8" r="1.85"/><circle cx="170.7" cy="638.1" r="1.85"/><circle cx="191.2" cy="619.8" r="1.85"/><circle cx="208.7" cy="606.8" r="1.85"/><circle cx="204.5" cy="611.1" r="1.85"/><circle cx="200.6" cy="612.1" r="1.85"/><circle cx="172.2" cy="641.4" r="1.85"/><circle cx="188.3" cy="625.7" r="1.85"/><circle cx="186.7" cy="622.9" r="1.85"/><circle cx="211.1" cy="604.2" r="1.85"/><circle cx="204.8" cy="610.1" r="1.85"/><circle cx="188.3" cy="621.3" r="1.85"/><circle cx="163.4" cy="643.7" r="1.85"/><circle cx="178.4" cy="630.9" r="1.85"/><circle cx="172.7" cy="635.6" r="1.85"/><circle cx="188.2" cy="618.3" r="1.85"/><circle cx="171.1" cy="632.9" r="1.85"/><circle cx="163.8" cy="641.6" r="1.85"/><circle cx="177.5" cy="630.7" r="1.85"/><circle cx="165.1" cy="642.8" r="1.85"/><circle cx="180.7" cy="626.2" r="1.85"/><circle cx="181.2" cy="629.2" r="1.85"/><circle cx="198.8" cy="616.9" r="1.85"/><circle cx="195.7" cy="616.8" r="1.85"/><circle cx="202.6" cy="611.1" r="1.85"/><circle cx="195.0" cy="614.7" r="1.85"/><circle cx="179.7" cy="626.8" r="1.85"/><circle cx="207.8" cy="609.3" r="1.85"/><circle cx="183.2" cy="630.9" r="1.85"/><circle cx="192.9" cy="633.0" r="1.85"/><circle cx="196.0" cy="628.9" r="1.85"/><circle cx="188.9" cy="633.7" r="1.85"/><circle cx="188.5" cy="631.5" r="1.85"/><circle cx="199.2" cy="628.4" r="1.85"/><circle cx="199.5" cy="631.2" r="1.85"/><circle cx="200.8" cy="629.1" r="1.85"/><circle cx="204.9" cy="629.1" r="1.85"/><circle cx="195.7" cy="632.5" r="1.85"/><circle cx="205.5" cy="629.1" r="1.85"/><circle cx="207.7" cy="629.0" r="1.85"/><circle cx="210.0" cy="630.9" r="1.85"/><circle cx="208.9" cy="627.5" r="1.85"/><circle cx="205.3" cy="627.2" r="1.85"/><circle cx="204.7" cy="629.8" r="1.85"/><circle cx="190.7" cy="636.3" r="1.85"/><circle cx="197.2" cy="628.4" r="1.85"/><circle cx="185.1" cy="636.0" r="1.85"/><circle cx="189.8" cy="644.1" r="1.85"/><circle cx="197.2" cy="645.0" r="1.85"/><circle cx="205.2" cy="641.9" r="1.85"/><circle cx="188.8" cy="642.3" r="1.85"/></g>
<g fill="#f6c98a" fill-opacity="0.92"><path d="M231.7 608.1q1.05-.8 2.1.3q1.05-1.1 2.1-.3l-2.1 3z"/><path d="M253.0 589.4q1.05-.8 2.1.3q1.05-1.1 2.1-.3l-2.1 3z"/><path d="M207.6 614.8q1.05-.8 2.1.3q1.05-1.1 2.1-.3l-2.1 3z"/><path d="M263.4 572.0q1.05-.8 2.1.3q1.05-1.1 2.1-.3l-2.1 3z"/><path d="M227.4 609.4q1.05-.8 2.1.3q1.05-1.1 2.1-.3l-2.1 3z"/><path d="M260.7 567.6q1.05-.8 2.1.3q1.05-1.1 2.1-.3l-2.1 3z"/><path d="M219.6 611.4q1.05-.8 2.1.3q1.05-1.1 2.1-.3l-2.1 3z"/><path d="M251.6 594.8q1.05-.8 2.1.3q1.05-1.1 2.1-.3l-2.1 3z"/><path d="M258.4 587.1q1.05-.8 2.1.3q1.05-1.1 2.1-.3l-2.1 3z"/><path d="M258.7 579.0q1.05-.8 2.1.3q1.05-1.1 2.1-.3l-2.1 3z"/><path d="M265.1 585.4q1.05-.8 2.1.3q1.05-1.1 2.1-.3l-2.1 3z"/><path d="M259.0 572.1q1.05-.8 2.1.3q1.05-1.1 2.1-.3l-2.1 3z"/><path d="M221.9 609.2q1.05-.8 2.1.3q1.05-1.1 2.1-.3l-2.1 3z"/><path d="M263.0 573.7q1.05-.8 2.1.3q1.05-1.1 2.1-.3l-2.1 3z"/><path d="M217.3 612.5q1.05-.8 2.1.3q1.05-1.1 2.1-.3l-2.1 3z"/><path d="M254.5 600.1q1.05-.8 2.1.3q1.05-1.1 2.1-.3l-2.1 3z"/><path d="M259.3 578.4q1.05-.8 2.1.3q1.05-1.1 2.1-.3l-2.1 3z"/><path d="M254.8 586.1q1.05-.8 2.1.3q1.05-1.1 2.1-.3l-2.1 3z"/><path d="M254.1 587.1q1.05-.8 2.1.3q1.05-1.1 2.1-.3l-2.1 3z"/><path d="M253.7 583.3q1.05-.8 2.1.3q1.05-1.1 2.1-.3l-2.1 3z"/><path d="M259.8 570.3q1.05-.8 2.1.3q1.05-1.1 2.1-.3l-2.1 3z"/><path d="M248.6 592.8q1.05-.8 2.1.3q1.05-1.1 2.1-.3l-2.1 3z"/><path d="M259.4 570.0q1.05-.8 2.1.3q1.05-1.1 2.1-.3l-2.1 3z"/><path d="M261.7 572.8q1.05-.8 2.1.3q1.05-1.1 2.1-.3l-2.1 3z"/><path d="M254.8 586.1q1.05-.8 2.1.3q1.05-1.1 2.1-.3l-2.1 3z"/><path d="M255.8 590.0q1.05-.8 2.1.3q1.05-1.1 2.1-.3l-2.1 3z"/><path d="M245.7 600.2q1.05-.8 2.1.3q1.05-1.1 2.1-.3l-2.1 3z"/><path d="M252.9 566.5q1.05-.8 2.1.3q1.05-1.1 2.1-.3l-2.1 3z"/><path d="M264.5 566.3q1.05-.8 2.1.3q1.05-1.1 2.1-.3l-2.1 3z"/><path d="M216.7 609.7q1.05-.8 2.1.3q1.05-1.1 2.1-.3l-2.1 3z"/><path d="M213.8 612.8q1.05-.8 2.1.3q1.05-1.1 2.1-.3l-2.1 3z"/><path d="M244.0 601.4q1.05-.8 2.1.3q1.05-1.1 2.1-.3l-2.1 3z"/><path d="M224.5 602.7q1.05-.8 2.1.3q1.05-1.1 2.1-.3l-2.1 3z"/><path d="M252.9 586.6q1.05-.8 2.1.3q1.05-1.1 2.1-.3l-2.1 3z"/><path d="M259.0 576.6q1.05-.8 2.1.3q1.05-1.1 2.1-.3l-2.1 3z"/><path d="M254.6 590.1q1.05-.8 2.1.3q1.05-1.1 2.1-.3l-2.1 3z"/><path d="M261.8 568.4q1.05-.8 2.1.3q1.05-1.1 2.1-.3l-2.1 3z"/><path d="M256.6 569.0q1.05-.8 2.1.3q1.05-1.1 2.1-.3l-2.1 3z"/><path d="M214.4 611.8q1.05-.8 2.1.3q1.05-1.1 2.1-.3l-2.1 3z"/><path d="M259.8 590.1q1.05-.8 2.1.3q1.05-1.1 2.1-.3l-2.1 3z"/><path d="M262.5 569.0q1.05-.8 2.1.3q1.05-1.1 2.1-.3l-2.1 3z"/><path d="M212.1 612.2q1.05-.8 2.1.3q1.05-1.1 2.1-.3l-2.1 3z"/><path d="M215.5 606.9q1.05-.8 2.1.3q1.05-1.1 2.1-.3l-2.1 3z"/><path d="M252.4 559.0q1.05-.8 2.1.3q1.05-1.1 2.1-.3l-2.1 3z"/><path d="M262.5 579.2q1.05-.8 2.1.3q1.05-1.1 2.1-.3l-2.1 3z"/><path d="M228.9 602.2q1.05-.8 2.1.3q1.05-1.1 2.1-.3l-2.1 3z"/><path d="M229.8 605.4q1.05-.8 2.1.3q1.05-1.1 2.1-.3l-2.1 3z"/><path d="M243.2 600.7q1.05-.8 2.1.3q1.05-1.1 2.1-.3l-2.1 3z"/><path d="M218.6 609.9q1.05-.8 2.1.3q1.05-1.1 2.1-.3l-2.1 3z"/><path d="M259.2 566.7q1.05-.8 2.1.3q1.05-1.1 2.1-.3l-2.1 3z"/><path d="M217.2 613.2q1.05-.8 2.1.3q1.05-1.1 2.1-.3l-2.1 3z"/><path d="M213.1 607.8q1.05-.8 2.1.3q1.05-1.1 2.1-.3l-2.1 3z"/><path d="M255.4 569.2q1.05-.8 2.1.3q1.05-1.1 2.1-.3l-2.1 3z"/><path d="M221.4 613.6q1.05-.8 2.1.3q1.05-1.1 2.1-.3l-2.1 3z"/><path d="M235.6 605.4q1.05-.8 2.1.3q1.05-1.1 2.1-.3l-2.1 3z"/><path d="M252.3 591.2q1.05-.8 2.1.3q1.05-1.1 2.1-.3l-2.1 3z"/><path d="M233.0 604.6q1.05-.8 2.1.3q1.05-1.1 2.1-.3l-2.1 3z"/><path d="M215.9 611.4q1.05-.8 2.1.3q1.05-1.1 2.1-.3l-2.1 3z"/><path d="M247.7 596.2q1.05-.8 2.1.3q1.05-1.1 2.1-.3l-2.1 3z"/><path d="M236.9 601.9q1.05-.8 2.1.3q1.05-1.1 2.1-.3l-2.1 3z"/><path d="M241.9 603.4q1.05-.8 2.1.3q1.05-1.1 2.1-.3l-2.1 3z"/><path d="M235.1 591.9q1.05-.8 2.1.3q1.05-1.1 2.1-.3l-2.1 3z"/><path d="M238.6 603.8q1.05-.8 2.1.3q1.05-1.1 2.1-.3l-2.1 3z"/><path d="M232.5 605.6q1.05-.8 2.1.3q1.05-1.1 2.1-.3l-2.1 3z"/><path d="M241.7 592.8q1.05-.8 2.1.3q1.05-1.1 2.1-.3l-2.1 3z"/><path d="M220.1 604.9q1.05-.8 2.1.3q1.05-1.1 2.1-.3l-2.1 3z"/><path d="M227.2 604.0q1.05-.8 2.1.3q1.05-1.1 2.1-.3l-2.1 3z"/><path d="M210.6 608.1q1.05-.8 2.1.3q1.05-1.1 2.1-.3l-2.1 3z"/><path d="M236.3 605.4q1.05-.8 2.1.3q1.05-1.1 2.1-.3l-2.1 3z"/><path d="M238.8 597.1q1.05-.8 2.1.3q1.05-1.1 2.1-.3l-2.1 3z"/><path d="M227.2 605.1q1.05-.8 2.1.3q1.05-1.1 2.1-.3l-2.1 3z"/><path d="M245.2 595.5q1.05-.8 2.1.3q1.05-1.1 2.1-.3l-2.1 3z"/><path d="M242.3 599.6q1.05-.8 2.1.3q1.05-1.1 2.1-.3l-2.1 3z"/><path d="M251.7 599.3q1.05-.8 2.1.3q1.05-1.1 2.1-.3l-2.1 3z"/><path d="M244.4 605.1q1.05-.8 2.1.3q1.05-1.1 2.1-.3l-2.1 3z"/><path d="M242.4 600.3q1.05-.8 2.1.3q1.05-1.1 2.1-.3l-2.1 3z"/><path d="M227.6 595.1q1.05-.8 2.1.3q1.05-1.1 2.1-.3l-2.1 3z"/><path d="M219.6 607.8q1.05-.8 2.1.3q1.05-1.1 2.1-.3l-2.1 3z"/><path d="M224.4 604.9q1.05-.8 2.1.3q1.05-1.1 2.1-.3l-2.1 3z"/><path d="M244.9 598.3q1.05-.8 2.1.3q1.05-1.1 2.1-.3l-2.1 3z"/><path d="M221.1 613.1q1.05-.8 2.1.3q1.05-1.1 2.1-.3l-2.1 3z"/><path d="M244.2 601.3q1.05-.8 2.1.3q1.05-1.1 2.1-.3l-2.1 3z"/><path d="M241.1 599.0q1.05-.8 2.1.3q1.05-1.1 2.1-.3l-2.1 3z"/><path d="M245.6 595.0q1.05-.8 2.1.3q1.05-1.1 2.1-.3l-2.1 3z"/><path d="M209.9 613.1q1.05-.8 2.1.3q1.05-1.1 2.1-.3l-2.1 3z"/><path d="M204.7 613.5q1.05-.8 2.1.3q1.05-1.1 2.1-.3l-2.1 3z"/><path d="M220.5 608.4q1.05-.8 2.1.3q1.05-1.1 2.1-.3l-2.1 3z"/><path d="M217.9 606.1q1.05-.8 2.1.3q1.05-1.1 2.1-.3l-2.1 3z"/><path d="M221.1 609.7q1.05-.8 2.1.3q1.05-1.1 2.1-.3l-2.1 3z"/><path d="M215.1 611.3q1.05-.8 2.1.3q1.05-1.1 2.1-.3l-2.1 3z"/><path d="M219.5 607.4q1.05-.8 2.1.3q1.05-1.1 2.1-.3l-2.1 3z"/><path d="M222.0 602.4q1.05-.8 2.1.3q1.05-1.1 2.1-.3l-2.1 3z"/><path d="M223.6 608.1q1.05-.8 2.1.3q1.05-1.1 2.1-.3l-2.1 3z"/><path d="M225.4 610.8q1.05-.8 2.1.3q1.05-1.1 2.1-.3l-2.1 3z"/><path d="M234.6 603.6q1.05-.8 2.1.3q1.05-1.1 2.1-.3l-2.1 3z"/><path d="M204.1 607.2q1.05-.8 2.1.3q1.05-1.1 2.1-.3l-2.1 3z"/><path d="M254.0 591.7q1.05-.8 2.1.3q1.05-1.1 2.1-.3l-2.1 3z"/><path d="M219.1 602.8q1.05-.8 2.1.3q1.05-1.1 2.1-.3l-2.1 3z"/><path d="M250.3 593.9q1.05-.8 2.1.3q1.05-1.1 2.1-.3l-2.1 3z"/><path d="M214.7 609.5q1.05-.8 2.1.3q1.05-1.1 2.1-.3l-2.1 3z"/><path d="M246.5 595.7q1.05-.8 2.1.3q1.05-1.1 2.1-.3l-2.1 3z"/><path d="M204.2 601.5q1.05-.8 2.1.3q1.05-1.1 2.1-.3l-2.1 3z"/><path d="M220.5 598.8q1.05-.8 2.1.3q1.05-1.1 2.1-.3l-2.1 3z"/><path d="M219.8 615.7q1.05-.8 2.1.3q1.05-1.1 2.1-.3l-2.1 3z"/><path d="M256.0 596.5q1.05-.8 2.1.3q1.05-1.1 2.1-.3l-2.1 3z"/><path d="M246.1 603.5q1.05-.8 2.1.3q1.05-1.1 2.1-.3l-2.1 3z"/><path d="M211.4 612.2q1.05-.8 2.1.3q1.05-1.1 2.1-.3l-2.1 3z"/><path d="M229.9 604.5q1.05-.8 2.1.3q1.05-1.1 2.1-.3l-2.1 3z"/><path d="M218.0 609.7q1.05-.8 2.1.3q1.05-1.1 2.1-.3l-2.1 3z"/><path d="M257.1 598.6q1.05-.8 2.1.3q1.05-1.1 2.1-.3l-2.1 3z"/><path d="M221.6 603.8q1.05-.8 2.1.3q1.05-1.1 2.1-.3l-2.1 3z"/><path d="M205.5 601.9q1.05-.8 2.1.3q1.05-1.1 2.1-.3l-2.1 3z"/><path d="M232.7 609.2q1.05-.8 2.1.3q1.05-1.1 2.1-.3l-2.1 3z"/><path d="M242.7 606.9q1.05-.8 2.1.3q1.05-1.1 2.1-.3l-2.1 3z"/><path d="M200.0 614.3q1.05-.8 2.1.3q1.05-1.1 2.1-.3l-2.1 3z"/><path d="M220.6 603.2q1.05-.8 2.1.3q1.05-1.1 2.1-.3l-2.1 3z"/><path d="M242.7 599.8q1.05-.8 2.1.3q1.05-1.1 2.1-.3l-2.1 3z"/><path d="M239.7 603.6q1.05-.8 2.1.3q1.05-1.1 2.1-.3l-2.1 3z"/><path d="M228.4 600.4q1.05-.8 2.1.3q1.05-1.1 2.1-.3l-2.1 3z"/><path d="M249.6 600.3q1.05-.8 2.1.3q1.05-1.1 2.1-.3l-2.1 3z"/><path d="M212.7 609.0q1.05-.8 2.1.3q1.05-1.1 2.1-.3l-2.1 3z"/><path d="M230.2 598.9q1.05-.8 2.1.3q1.05-1.1 2.1-.3l-2.1 3z"/><path d="M219.8 602.3q1.05-.8 2.1.3q1.05-1.1 2.1-.3l-2.1 3z"/><path d="M214.7 601.8q1.05-.8 2.1.3q1.05-1.1 2.1-.3l-2.1 3z"/><path d="M217.0 611.1q1.05-.8 2.1.3q1.05-1.1 2.1-.3l-2.1 3z"/><path d="M219.2 609.9q1.05-.8 2.1.3q1.05-1.1 2.1-.3l-2.1 3z"/><path d="M227.9 604.0q1.05-.8 2.1.3q1.05-1.1 2.1-.3l-2.1 3z"/><path d="M246.3 597.1q1.05-.8 2.1.3q1.05-1.1 2.1-.3l-2.1 3z"/><path d="M237.0 599.9q1.05-.8 2.1.3q1.05-1.1 2.1-.3l-2.1 3z"/><path d="M245.0 600.5q1.05-.8 2.1.3q1.05-1.1 2.1-.3l-2.1 3z"/></g>
<g fill="#f218f0" fill-opacity="0.92"><circle cx="270.0" cy="541.1" r="1.85"/><circle cx="272.7" cy="549.9" r="1.85"/><circle cx="272.3" cy="534.5" r="1.85"/><circle cx="265.1" cy="566.0" r="1.85"/><circle cx="270.1" cy="569.5" r="1.85"/><circle cx="265.6" cy="574.1" r="1.85"/><circle cx="265.9" cy="578.5" r="1.85"/><circle cx="259.3" cy="580.3" r="1.85"/><circle cx="272.6" cy="586.3" r="1.85"/><circle cx="268.4" cy="565.4" r="1.85"/><circle cx="272.0" cy="564.6" r="1.85"/><circle cx="269.8" cy="581.8" r="1.85"/><circle cx="270.4" cy="564.7" r="1.85"/><circle cx="265.9" cy="579.6" r="1.85"/><circle cx="272.3" cy="559.5" r="1.85"/><circle cx="273.0" cy="547.7" r="1.85"/><circle cx="264.8" cy="559.3" r="1.85"/><circle cx="270.8" cy="569.0" r="1.85"/><circle cx="264.4" cy="593.7" r="1.85"/><circle cx="269.0" cy="594.3" r="1.85"/><circle cx="270.0" cy="578.5" r="1.85"/><circle cx="272.7" cy="583.4" r="1.85"/><circle cx="265.9" cy="544.4" r="1.85"/><circle cx="276.2" cy="536.8" r="1.85"/><circle cx="275.3" cy="560.8" r="1.85"/><circle cx="271.9" cy="577.9" r="1.85"/><circle cx="262.4" cy="581.2" r="1.85"/><circle cx="270.0" cy="581.6" r="1.85"/><circle cx="272.6" cy="566.6" r="1.85"/><circle cx="259.7" cy="546.0" r="1.85"/><circle cx="272.6" cy="538.0" r="1.85"/><circle cx="264.3" cy="566.7" r="1.85"/><circle cx="273.8" cy="551.3" r="1.85"/><circle cx="268.3" cy="545.0" r="1.85"/><circle cx="267.1" cy="581.5" r="1.85"/><circle cx="266.6" cy="579.8" r="1.85"/><circle cx="268.4" cy="551.3" r="1.85"/><circle cx="281.5" cy="571.6" r="1.85"/><circle cx="271.0" cy="569.6" r="1.85"/><circle cx="271.2" cy="577.5" r="1.85"/><circle cx="267.1" cy="555.1" r="1.85"/><circle cx="267.2" cy="584.2" r="1.85"/><circle cx="275.9" cy="585.6" r="1.85"/><circle cx="275.7" cy="585.8" r="1.85"/><circle cx="265.5" cy="596.0" r="1.85"/><circle cx="268.6" cy="571.2" r="1.85"/><circle cx="271.2" cy="551.0" r="1.85"/><circle cx="270.2" cy="580.3" r="1.85"/><circle cx="272.3" cy="594.2" r="1.85"/><circle cx="272.3" cy="534.8" r="1.85"/><circle cx="270.3" cy="594.1" r="1.85"/><circle cx="271.5" cy="539.2" r="1.85"/><circle cx="267.0" cy="572.4" r="1.85"/><circle cx="269.1" cy="590.7" r="1.85"/><circle cx="278.4" cy="594.9" r="1.85"/><circle cx="264.9" cy="566.1" r="1.85"/><circle cx="263.4" cy="542.5" r="1.85"/><circle cx="270.6" cy="534.8" r="1.85"/><circle cx="267.3" cy="530.9" r="1.85"/><circle cx="268.8" cy="566.6" r="1.85"/><circle cx="267.7" cy="573.4" r="1.85"/><circle cx="267.4" cy="535.2" r="1.85"/><circle cx="268.4" cy="545.3" r="1.85"/><circle cx="271.1" cy="553.6" r="1.85"/><circle cx="265.3" cy="576.8" r="1.85"/><circle cx="263.4" cy="569.0" r="1.85"/><circle cx="268.7" cy="586.2" r="1.85"/><circle cx="272.2" cy="559.2" r="1.85"/><circle cx="262.1" cy="582.3" r="1.85"/><circle cx="271.3" cy="578.1" r="1.85"/><circle cx="264.9" cy="548.5" r="1.85"/><circle cx="266.7" cy="584.0" r="1.85"/><circle cx="268.5" cy="574.7" r="1.85"/><circle cx="269.6" cy="567.7" r="1.85"/><circle cx="268.8" cy="537.8" r="1.85"/><circle cx="268.8" cy="572.8" r="1.85"/><circle cx="262.6" cy="568.3" r="1.85"/><circle cx="276.5" cy="590.4" r="1.85"/><circle cx="267.8" cy="579.0" r="1.85"/><circle cx="271.8" cy="575.3" r="1.85"/><circle cx="268.7" cy="577.7" r="1.85"/><circle cx="267.4" cy="560.0" r="1.85"/><circle cx="276.0" cy="586.7" r="1.85"/><circle cx="267.4" cy="575.2" r="1.85"/><circle cx="261.5" cy="571.0" r="1.85"/><circle cx="264.5" cy="592.8" r="1.85"/><circle cx="266.9" cy="555.6" r="1.85"/><circle cx="274.5" cy="565.8" r="1.85"/><circle cx="265.9" cy="588.8" r="1.85"/><circle cx="268.6" cy="590.0" r="1.85"/><circle cx="270.9" cy="575.7" r="1.85"/><circle cx="274.5" cy="564.9" r="1.85"/><circle cx="266.5" cy="540.8" r="1.85"/><circle cx="268.0" cy="570.3" r="1.85"/><circle cx="270.7" cy="554.0" r="1.85"/><circle cx="272.0" cy="560.2" r="1.85"/><circle cx="267.7" cy="585.4" r="1.85"/><circle cx="269.7" cy="538.5" r="1.85"/><circle cx="268.1" cy="556.6" r="1.85"/><circle cx="277.8" cy="553.5" r="1.85"/><circle cx="265.6" cy="556.7" r="1.85"/><circle cx="276.4" cy="585.8" r="1.85"/><circle cx="272.7" cy="538.2" r="1.85"/><circle cx="271.3" cy="556.0" r="1.85"/><circle cx="271.4" cy="548.1" r="1.85"/><circle cx="269.2" cy="552.3" r="1.85"/><circle cx="264.4" cy="583.9" r="1.85"/><circle cx="270.6" cy="581.3" r="1.85"/><circle cx="268.1" cy="584.4" r="1.85"/><circle cx="271.8" cy="581.7" r="1.85"/><circle cx="270.6" cy="574.4" r="1.85"/><circle cx="272.3" cy="570.7" r="1.85"/><circle cx="267.7" cy="594.6" r="1.85"/><circle cx="273.4" cy="564.8" r="1.85"/><circle cx="271.0" cy="537.8" r="1.85"/><circle cx="272.6" cy="579.9" r="1.85"/><circle cx="268.5" cy="595.2" r="1.85"/><circle cx="267.3" cy="544.2" r="1.85"/><circle cx="266.4" cy="577.0" r="1.85"/><circle cx="263.4" cy="551.4" r="1.85"/><circle cx="295.9" cy="534.1" r="1.85"/><circle cx="284.8" cy="536.2" r="1.85"/><circle cx="286.7" cy="534.9" r="1.85"/><circle cx="279.3" cy="536.8" r="1.85"/><circle cx="285.3" cy="535.4" r="1.85"/><circle cx="314.2" cy="534.1" r="1.85"/><circle cx="302.0" cy="536.4" r="1.85"/><circle cx="291.6" cy="535.0" r="1.85"/><circle cx="288.9" cy="534.1" r="1.85"/><circle cx="307.9" cy="535.9" r="1.85"/><circle cx="297.3" cy="533.8" r="1.85"/><circle cx="284.5" cy="537.9" r="1.85"/><circle cx="275.5" cy="598.8" r="1.85"/><circle cx="288.3" cy="601.4" r="1.85"/><circle cx="288.3" cy="600.0" r="1.85"/><circle cx="273.7" cy="600.2" r="1.85"/><circle cx="271.1" cy="600.7" r="1.85"/><circle cx="302.0" cy="604.7" r="1.85"/><circle cx="310.2" cy="605.5" r="1.85"/><circle cx="265.5" cy="606.2" r="1.85"/><circle cx="294.7" cy="606.5" r="1.85"/><circle cx="278.8" cy="604.4" r="1.85"/><circle cx="270.3" cy="603.1" r="1.85"/><circle cx="271.2" cy="603.7" r="1.85"/><circle cx="257.5" cy="604.7" r="1.85"/><circle cx="308.7" cy="603.1" r="1.85"/><circle cx="274.3" cy="604.8" r="1.85"/><circle cx="262.2" cy="602.1" r="1.85"/><circle cx="285.7" cy="602.9" r="1.85"/><circle cx="274.1" cy="602.3" r="1.85"/><circle cx="291.7" cy="599.5" r="1.85"/><circle cx="282.0" cy="602.6" r="1.85"/><circle cx="293.1" cy="605.6" r="1.85"/><circle cx="300.6" cy="608.0" r="1.85"/><circle cx="298.8" cy="601.0" r="1.85"/><circle cx="268.5" cy="604.4" r="1.85"/><circle cx="281.8" cy="602.0" r="1.85"/><circle cx="305.1" cy="592.7" r="1.85"/><circle cx="302.6" cy="580.7" r="1.85"/><circle cx="306.9" cy="593.8" r="1.85"/><circle cx="302.9" cy="598.0" r="1.85"/><circle cx="304.3" cy="590.4" r="1.85"/><circle cx="303.9" cy="582.9" r="1.85"/><circle cx="304.8" cy="582.0" r="1.85"/><circle cx="302.8" cy="588.8" r="1.85"/><circle cx="308.6" cy="596.3" r="1.85"/><circle cx="261.7" cy="638.9" r="1.85"/><circle cx="263.2" cy="642.1" r="1.85"/><circle cx="288.0" cy="646.5" r="1.85"/><circle cx="293.9" cy="636.4" r="1.85"/><circle cx="293.9" cy="645.0" r="1.85"/></g>
<g fill="#2f8a12" fill-opacity="0.92"><path d="M323.1 541.8a1.2 1.2 0 0 1 .6-2.1a1.5 1.5 0 0 1 2.8 0a1.2 1.2 0 0 1 .6 2.1z"/><path d="M321.3 538.1a1.2 1.2 0 0 1 .6-2.1a1.5 1.5 0 0 1 2.8 0a1.2 1.2 0 0 1 .6 2.1z"/><path d="M340.8 539.3a1.2 1.2 0 0 1 .6-2.1a1.5 1.5 0 0 1 2.8 0a1.2 1.2 0 0 1 .6 2.1z"/><path d="M332.0 538.1a1.2 1.2 0 0 1 .6-2.1a1.5 1.5 0 0 1 2.8 0a1.2 1.2 0 0 1 .6 2.1z"/><path d="M405.9 560.3a1.2 1.2 0 0 1 .6-2.1a1.5 1.5 0 0 1 2.8 0a1.2 1.2 0 0 1 .6 2.1z"/><path d="M364.5 536.1a1.2 1.2 0 0 1 .6-2.1a1.5 1.5 0 0 1 2.8 0a1.2 1.2 0 0 1 .6 2.1z"/><path d="M409.8 566.3a1.2 1.2 0 0 1 .6-2.1a1.5 1.5 0 0 1 2.8 0a1.2 1.2 0 0 1 .6 2.1z"/><path d="M402.0 556.2a1.2 1.2 0 0 1 .6-2.1a1.5 1.5 0 0 1 2.8 0a1.2 1.2 0 0 1 .6 2.1z"/><path d="M355.3 537.4a1.2 1.2 0 0 1 .6-2.1a1.5 1.5 0 0 1 2.8 0a1.2 1.2 0 0 1 .6 2.1z"/><path d="M389.0 547.3a1.2 1.2 0 0 1 .6-2.1a1.5 1.5 0 0 1 2.8 0a1.2 1.2 0 0 1 .6 2.1z"/><path d="M388.0 545.6a1.2 1.2 0 0 1 .6-2.1a1.5 1.5 0 0 1 2.8 0a1.2 1.2 0 0 1 .6 2.1z"/><path d="M405.4 568.5a1.2 1.2 0 0 1 .6-2.1a1.5 1.5 0 0 1 2.8 0a1.2 1.2 0 0 1 .6 2.1z"/><path d="M384.1 540.2a1.2 1.2 0 0 1 .6-2.1a1.5 1.5 0 0 1 2.8 0a1.2 1.2 0 0 1 .6 2.1z"/><path d="M315.8 536.4a1.2 1.2 0 0 1 .6-2.1a1.5 1.5 0 0 1 2.8 0a1.2 1.2 0 0 1 .6 2.1z"/><path d="M387.0 545.6a1.2 1.2 0 0 1 .6-2.1a1.5 1.5 0 0 1 2.8 0a1.2 1.2 0 0 1 .6 2.1z"/><path d="M369.1 540.1a1.2 1.2 0 0 1 .6-2.1a1.5 1.5 0 0 1 2.8 0a1.2 1.2 0 0 1 .6 2.1z"/><path d="M394.4 549.4a1.2 1.2 0 0 1 .6-2.1a1.5 1.5 0 0 1 2.8 0a1.2 1.2 0 0 1 .6 2.1z"/><path d="M351.2 540.6a1.2 1.2 0 0 1 .6-2.1a1.5 1.5 0 0 1 2.8 0a1.2 1.2 0 0 1 .6 2.1z"/><path d="M403.0 556.0a1.2 1.2 0 0 1 .6-2.1a1.5 1.5 0 0 1 2.8 0a1.2 1.2 0 0 1 .6 2.1z"/><path d="M310.0 539.6a1.2 1.2 0 0 1 .6-2.1a1.5 1.5 0 0 1 2.8 0a1.2 1.2 0 0 1 .6 2.1z"/><path d="M399.1 555.2a1.2 1.2 0 0 1 .6-2.1a1.5 1.5 0 0 1 2.8 0a1.2 1.2 0 0 1 .6 2.1z"/><path d="M338.2 537.2a1.2 1.2 0 0 1 .6-2.1a1.5 1.5 0 0 1 2.8 0a1.2 1.2 0 0 1 .6 2.1z"/><path d="M406.0 562.4a1.2 1.2 0 0 1 .6-2.1a1.5 1.5 0 0 1 2.8 0a1.2 1.2 0 0 1 .6 2.1z"/><path d="M385.7 547.2a1.2 1.2 0 0 1 .6-2.1a1.5 1.5 0 0 1 2.8 0a1.2 1.2 0 0 1 .6 2.1z"/><path d="M340.5 538.9a1.2 1.2 0 0 1 .6-2.1a1.5 1.5 0 0 1 2.8 0a1.2 1.2 0 0 1 .6 2.1z"/><path d="M379.7 542.9a1.2 1.2 0 0 1 .6-2.1a1.5 1.5 0 0 1 2.8 0a1.2 1.2 0 0 1 .6 2.1z"/><path d="M348.9 536.9a1.2 1.2 0 0 1 .6-2.1a1.5 1.5 0 0 1 2.8 0a1.2 1.2 0 0 1 .6 2.1z"/><path d="M406.4 558.0a1.2 1.2 0 0 1 .6-2.1a1.5 1.5 0 0 1 2.8 0a1.2 1.2 0 0 1 .6 2.1z"/><path d="M375.4 536.0a1.2 1.2 0 0 1 .6-2.1a1.5 1.5 0 0 1 2.8 0a1.2 1.2 0 0 1 .6 2.1z"/><path d="M348.2 535.9a1.2 1.2 0 0 1 .6-2.1a1.5 1.5 0 0 1 2.8 0a1.2 1.2 0 0 1 .6 2.1z"/><path d="M406.8 563.0a1.2 1.2 0 0 1 .6-2.1a1.5 1.5 0 0 1 2.8 0a1.2 1.2 0 0 1 .6 2.1z"/><path d="M333.3 537.3a1.2 1.2 0 0 1 .6-2.1a1.5 1.5 0 0 1 2.8 0a1.2 1.2 0 0 1 .6 2.1z"/><path d="M396.5 549.3a1.2 1.2 0 0 1 .6-2.1a1.5 1.5 0 0 1 2.8 0a1.2 1.2 0 0 1 .6 2.1z"/><path d="M410.0 560.7a1.2 1.2 0 0 1 .6-2.1a1.5 1.5 0 0 1 2.8 0a1.2 1.2 0 0 1 .6 2.1z"/><path d="M405.7 561.5a1.2 1.2 0 0 1 .6-2.1a1.5 1.5 0 0 1 2.8 0a1.2 1.2 0 0 1 .6 2.1z"/><path d="M406.0 556.1a1.2 1.2 0 0 1 .6-2.1a1.5 1.5 0 0 1 2.8 0a1.2 1.2 0 0 1 .6 2.1z"/><path d="M389.0 551.4a1.2 1.2 0 0 1 .6-2.1a1.5 1.5 0 0 1 2.8 0a1.2 1.2 0 0 1 .6 2.1z"/><path d="M407.0 571.0a1.2 1.2 0 0 1 .6-2.1a1.5 1.5 0 0 1 2.8 0a1.2 1.2 0 0 1 .6 2.1z"/><path d="M325.8 538.1a1.2 1.2 0 0 1 .6-2.1a1.5 1.5 0 0 1 2.8 0a1.2 1.2 0 0 1 .6 2.1z"/><path d="M396.7 551.8a1.2 1.2 0 0 1 .6-2.1a1.5 1.5 0 0 1 2.8 0a1.2 1.2 0 0 1 .6 2.1z"/><path d="M340.4 540.3a1.2 1.2 0 0 1 .6-2.1a1.5 1.5 0 0 1 2.8 0a1.2 1.2 0 0 1 .6 2.1z"/><path d="M406.8 554.7a1.2 1.2 0 0 1 .6-2.1a1.5 1.5 0 0 1 2.8 0a1.2 1.2 0 0 1 .6 2.1z"/><path d="M327.5 536.7a1.2 1.2 0 0 1 .6-2.1a1.5 1.5 0 0 1 2.8 0a1.2 1.2 0 0 1 .6 2.1z"/><path d="M353.8 537.9a1.2 1.2 0 0 1 .6-2.1a1.5 1.5 0 0 1 2.8 0a1.2 1.2 0 0 1 .6 2.1z"/><path d="M386.0 541.2a1.2 1.2 0 0 1 .6-2.1a1.5 1.5 0 0 1 2.8 0a1.2 1.2 0 0 1 .6 2.1z"/><path d="M325.6 539.6a1.2 1.2 0 0 1 .6-2.1a1.5 1.5 0 0 1 2.8 0a1.2 1.2 0 0 1 .6 2.1z"/><path d="M369.1 535.9a1.2 1.2 0 0 1 .6-2.1a1.5 1.5 0 0 1 2.8 0a1.2 1.2 0 0 1 .6 2.1z"/><path d="M318.1 540.4a1.2 1.2 0 0 1 .6-2.1a1.5 1.5 0 0 1 2.8 0a1.2 1.2 0 0 1 .6 2.1z"/><path d="M351.2 540.0a1.2 1.2 0 0 1 .6-2.1a1.5 1.5 0 0 1 2.8 0a1.2 1.2 0 0 1 .6 2.1z"/><path d="M321.6 540.4a1.2 1.2 0 0 1 .6-2.1a1.5 1.5 0 0 1 2.8 0a1.2 1.2 0 0 1 .6 2.1z"/><path d="M408.0 559.1a1.2 1.2 0 0 1 .6-2.1a1.5 1.5 0 0 1 2.8 0a1.2 1.2 0 0 1 .6 2.1z"/><path d="M324.7 536.5a1.2 1.2 0 0 1 .6-2.1a1.5 1.5 0 0 1 2.8 0a1.2 1.2 0 0 1 .6 2.1z"/><path d="M400.7 549.9a1.2 1.2 0 0 1 .6-2.1a1.5 1.5 0 0 1 2.8 0a1.2 1.2 0 0 1 .6 2.1z"/><path d="M403.7 558.3a1.2 1.2 0 0 1 .6-2.1a1.5 1.5 0 0 1 2.8 0a1.2 1.2 0 0 1 .6 2.1z"/><path d="M404.0 561.3a1.2 1.2 0 0 1 .6-2.1a1.5 1.5 0 0 1 2.8 0a1.2 1.2 0 0 1 .6 2.1z"/><path d="M388.7 549.8a1.2 1.2 0 0 1 .6-2.1a1.5 1.5 0 0 1 2.8 0a1.2 1.2 0 0 1 .6 2.1z"/><path d="M332.8 535.9a1.2 1.2 0 0 1 .6-2.1a1.5 1.5 0 0 1 2.8 0a1.2 1.2 0 0 1 .6 2.1z"/><path d="M365.0 537.3a1.2 1.2 0 0 1 .6-2.1a1.5 1.5 0 0 1 2.8 0a1.2 1.2 0 0 1 .6 2.1z"/><path d="M378.9 539.6a1.2 1.2 0 0 1 .6-2.1a1.5 1.5 0 0 1 2.8 0a1.2 1.2 0 0 1 .6 2.1z"/><path d="M341.2 536.1a1.2 1.2 0 0 1 .6-2.1a1.5 1.5 0 0 1 2.8 0a1.2 1.2 0 0 1 .6 2.1z"/><path d="M415.6 599.4a1.2 1.2 0 0 1 .6-2.1a1.5 1.5 0 0 1 2.8 0a1.2 1.2 0 0 1 .6 2.1z"/><path d="M412.1 621.2a1.2 1.2 0 0 1 .6-2.1a1.5 1.5 0 0 1 2.8 0a1.2 1.2 0 0 1 .6 2.1z"/><path d="M417.3 605.1a1.2 1.2 0 0 1 .6-2.1a1.5 1.5 0 0 1 2.8 0a1.2 1.2 0 0 1 .6 2.1z"/><path d="M410.2 636.4a1.2 1.2 0 0 1 .6-2.1a1.5 1.5 0 0 1 2.8 0a1.2 1.2 0 0 1 .6 2.1z"/><path d="M411.6 607.3a1.2 1.2 0 0 1 .6-2.1a1.5 1.5 0 0 1 2.8 0a1.2 1.2 0 0 1 .6 2.1z"/><path d="M409.8 625.8a1.2 1.2 0 0 1 .6-2.1a1.5 1.5 0 0 1 2.8 0a1.2 1.2 0 0 1 .6 2.1z"/><path d="M423.1 650.4a1.2 1.2 0 0 1 .6-2.1a1.5 1.5 0 0 1 2.8 0a1.2 1.2 0 0 1 .6 2.1z"/><path d="M419.2 645.1a1.2 1.2 0 0 1 .6-2.1a1.5 1.5 0 0 1 2.8 0a1.2 1.2 0 0 1 .6 2.1z"/><path d="M412.0 626.9a1.2 1.2 0 0 1 .6-2.1a1.5 1.5 0 0 1 2.8 0a1.2 1.2 0 0 1 .6 2.1z"/><path d="M414.8 604.9a1.2 1.2 0 0 1 .6-2.1a1.5 1.5 0 0 1 2.8 0a1.2 1.2 0 0 1 .6 2.1z"/><path d="M418.3 598.6a1.2 1.2 0 0 1 .6-2.1a1.5 1.5 0 0 1 2.8 0a1.2 1.2 0 0 1 .6 2.1z"/><path d="M419.3 647.4a1.2 1.2 0 0 1 .6-2.1a1.5 1.5 0 0 1 2.8 0a1.2 1.2 0 0 1 .6 2.1z"/><path d="M413.3 619.6a1.2 1.2 0 0 1 .6-2.1a1.5 1.5 0 0 1 2.8 0a1.2 1.2 0 0 1 .6 2.1z"/><path d="M409.0 621.8a1.2 1.2 0 0 1 .6-2.1a1.5 1.5 0 0 1 2.8 0a1.2 1.2 0 0 1 .6 2.1z"/><path d="M418.0 638.2a1.2 1.2 0 0 1 .6-2.1a1.5 1.5 0 0 1 2.8 0a1.2 1.2 0 0 1 .6 2.1z"/><path d="M412.2 635.0a1.2 1.2 0 0 1 .6-2.1a1.5 1.5 0 0 1 2.8 0a1.2 1.2 0 0 1 .6 2.1z"/><path d="M412.9 611.6a1.2 1.2 0 0 1 .6-2.1a1.5 1.5 0 0 1 2.8 0a1.2 1.2 0 0 1 .6 2.1z"/><path d="M421.7 650.9a1.2 1.2 0 0 1 .6-2.1a1.5 1.5 0 0 1 2.8 0a1.2 1.2 0 0 1 .6 2.1z"/><path d="M409.3 638.5a1.2 1.2 0 0 1 .6-2.1a1.5 1.5 0 0 1 2.8 0a1.2 1.2 0 0 1 .6 2.1z"/><path d="M413.6 608.6a1.2 1.2 0 0 1 .6-2.1a1.5 1.5 0 0 1 2.8 0a1.2 1.2 0 0 1 .6 2.1z"/><path d="M410.0 622.4a1.2 1.2 0 0 1 .6-2.1a1.5 1.5 0 0 1 2.8 0a1.2 1.2 0 0 1 .6 2.1z"/><path d="M410.6 622.8a1.2 1.2 0 0 1 .6-2.1a1.5 1.5 0 0 1 2.8 0a1.2 1.2 0 0 1 .6 2.1z"/><path d="M412.1 628.1a1.2 1.2 0 0 1 .6-2.1a1.5 1.5 0 0 1 2.8 0a1.2 1.2 0 0 1 .6 2.1z"/><path d="M414.3 601.9a1.2 1.2 0 0 1 .6-2.1a1.5 1.5 0 0 1 2.8 0a1.2 1.2 0 0 1 .6 2.1z"/><path d="M419.6 644.3a1.2 1.2 0 0 1 .6-2.1a1.5 1.5 0 0 1 2.8 0a1.2 1.2 0 0 1 .6 2.1z"/><path d="M354.3 592.8a1.2 1.2 0 0 1 .6-2.1a1.5 1.5 0 0 1 2.8 0a1.2 1.2 0 0 1 .6 2.1z"/><path d="M357.0 548.9a1.2 1.2 0 0 1 .6-2.1a1.5 1.5 0 0 1 2.8 0a1.2 1.2 0 0 1 .6 2.1z"/><path d="M356.3 561.0a1.2 1.2 0 0 1 .6-2.1a1.5 1.5 0 0 1 2.8 0a1.2 1.2 0 0 1 .6 2.1z"/><path d="M356.2 558.6a1.2 1.2 0 0 1 .6-2.1a1.5 1.5 0 0 1 2.8 0a1.2 1.2 0 0 1 .6 2.1z"/><path d="M357.0 556.4a1.2 1.2 0 0 1 .6-2.1a1.5 1.5 0 0 1 2.8 0a1.2 1.2 0 0 1 .6 2.1z"/><path d="M358.9 603.7a1.2 1.2 0 0 1 .6-2.1a1.5 1.5 0 0 1 2.8 0a1.2 1.2 0 0 1 .6 2.1z"/><path d="M364.7 609.7a1.2 1.2 0 0 1 .6-2.1a1.5 1.5 0 0 1 2.8 0a1.2 1.2 0 0 1 .6 2.1z"/><path d="M363.6 625.1a1.2 1.2 0 0 1 .6-2.1a1.5 1.5 0 0 1 2.8 0a1.2 1.2 0 0 1 .6 2.1z"/><path d="M376.2 640.8a1.2 1.2 0 0 1 .6-2.1a1.5 1.5 0 0 1 2.8 0a1.2 1.2 0 0 1 .6 2.1z"/><path d="M358.1 590.1a1.2 1.2 0 0 1 .6-2.1a1.5 1.5 0 0 1 2.8 0a1.2 1.2 0 0 1 .6 2.1z"/><path d="M358.9 571.9a1.2 1.2 0 0 1 .6-2.1a1.5 1.5 0 0 1 2.8 0a1.2 1.2 0 0 1 .6 2.1z"/><path d="M363.8 633.0a1.2 1.2 0 0 1 .6-2.1a1.5 1.5 0 0 1 2.8 0a1.2 1.2 0 0 1 .6 2.1z"/><path d="M357.6 592.0a1.2 1.2 0 0 1 .6-2.1a1.5 1.5 0 0 1 2.8 0a1.2 1.2 0 0 1 .6 2.1z"/><path d="M352.4 543.9a1.2 1.2 0 0 1 .6-2.1a1.5 1.5 0 0 1 2.8 0a1.2 1.2 0 0 1 .6 2.1z"/><path d="M363.2 599.3a1.2 1.2 0 0 1 .6-2.1a1.5 1.5 0 0 1 2.8 0a1.2 1.2 0 0 1 .6 2.1z"/><path d="M361.4 569.0a1.2 1.2 0 0 1 .6-2.1a1.5 1.5 0 0 1 2.8 0a1.2 1.2 0 0 1 .6 2.1z"/><path d="M361.7 576.0a1.2 1.2 0 0 1 .6-2.1a1.5 1.5 0 0 1 2.8 0a1.2 1.2 0 0 1 .6 2.1z"/><path d="M375.5 651.5a1.2 1.2 0 0 1 .6-2.1a1.5 1.5 0 0 1 2.8 0a1.2 1.2 0 0 1 .6 2.1z"/><path d="M356.3 568.4a1.2 1.2 0 0 1 .6-2.1a1.5 1.5 0 0 1 2.8 0a1.2 1.2 0 0 1 .6 2.1z"/><path d="M360.9 609.5a1.2 1.2 0 0 1 .6-2.1a1.5 1.5 0 0 1 2.8 0a1.2 1.2 0 0 1 .6 2.1z"/><path d="M366.6 627.4a1.2 1.2 0 0 1 .6-2.1a1.5 1.5 0 0 1 2.8 0a1.2 1.2 0 0 1 .6 2.1z"/><path d="M354.8 607.9a1.2 1.2 0 0 1 .6-2.1a1.5 1.5 0 0 1 2.8 0a1.2 1.2 0 0 1 .6 2.1z"/><path d="M365.1 633.3a1.2 1.2 0 0 1 .6-2.1a1.5 1.5 0 0 1 2.8 0a1.2 1.2 0 0 1 .6 2.1z"/><path d="M366.4 631.5a1.2 1.2 0 0 1 .6-2.1a1.5 1.5 0 0 1 2.8 0a1.2 1.2 0 0 1 .6 2.1z"/><path d="M363.3 583.3a1.2 1.2 0 0 1 .6-2.1a1.5 1.5 0 0 1 2.8 0a1.2 1.2 0 0 1 .6 2.1z"/><path d="M366.9 630.7a1.2 1.2 0 0 1 .6-2.1a1.5 1.5 0 0 1 2.8 0a1.2 1.2 0 0 1 .6 2.1z"/><path d="M364.6 587.5a1.2 1.2 0 0 1 .6-2.1a1.5 1.5 0 0 1 2.8 0a1.2 1.2 0 0 1 .6 2.1z"/><path d="M368.1 624.3a1.2 1.2 0 0 1 .6-2.1a1.5 1.5 0 0 1 2.8 0a1.2 1.2 0 0 1 .6 2.1z"/><path d="M364.3 544.1a1.2 1.2 0 0 1 .6-2.1a1.5 1.5 0 0 1 2.8 0a1.2 1.2 0 0 1 .6 2.1z"/><path d="M354.6 569.8a1.2 1.2 0 0 1 .6-2.1a1.5 1.5 0 0 1 2.8 0a1.2 1.2 0 0 1 .6 2.1z"/><path d="M363.5 628.1a1.2 1.2 0 0 1 .6-2.1a1.5 1.5 0 0 1 2.8 0a1.2 1.2 0 0 1 .6 2.1z"/><path d="M362.8 584.8a1.2 1.2 0 0 1 .6-2.1a1.5 1.5 0 0 1 2.8 0a1.2 1.2 0 0 1 .6 2.1z"/><path d="M361.0 602.9a1.2 1.2 0 0 1 .6-2.1a1.5 1.5 0 0 1 2.8 0a1.2 1.2 0 0 1 .6 2.1z"/><path d="M359.3 567.7a1.2 1.2 0 0 1 .6-2.1a1.5 1.5 0 0 1 2.8 0a1.2 1.2 0 0 1 .6 2.1z"/><path d="M361.4 623.4a1.2 1.2 0 0 1 .6-2.1a1.5 1.5 0 0 1 2.8 0a1.2 1.2 0 0 1 .6 2.1z"/><path d="M373.6 650.9a1.2 1.2 0 0 1 .6-2.1a1.5 1.5 0 0 1 2.8 0a1.2 1.2 0 0 1 .6 2.1z"/><path d="M358.9 565.7a1.2 1.2 0 0 1 .6-2.1a1.5 1.5 0 0 1 2.8 0a1.2 1.2 0 0 1 .6 2.1z"/><path d="M357.2 598.8a1.2 1.2 0 0 1 .6-2.1a1.5 1.5 0 0 1 2.8 0a1.2 1.2 0 0 1 .6 2.1z"/><path d="M367.2 634.4a1.2 1.2 0 0 1 .6-2.1a1.5 1.5 0 0 1 2.8 0a1.2 1.2 0 0 1 .6 2.1z"/><path d="M365.0 600.6a1.2 1.2 0 0 1 .6-2.1a1.5 1.5 0 0 1 2.8 0a1.2 1.2 0 0 1 .6 2.1z"/><path d="M372.4 646.2a1.2 1.2 0 0 1 .6-2.1a1.5 1.5 0 0 1 2.8 0a1.2 1.2 0 0 1 .6 2.1z"/><path d="M360.1 566.2a1.2 1.2 0 0 1 .6-2.1a1.5 1.5 0 0 1 2.8 0a1.2 1.2 0 0 1 .6 2.1z"/><path d="M360.1 575.3a1.2 1.2 0 0 1 .6-2.1a1.5 1.5 0 0 1 2.8 0a1.2 1.2 0 0 1 .6 2.1z"/><path d="M362.2 620.7a1.2 1.2 0 0 1 .6-2.1a1.5 1.5 0 0 1 2.8 0a1.2 1.2 0 0 1 .6 2.1z"/><path d="M376.1 649.8a1.2 1.2 0 0 1 .6-2.1a1.5 1.5 0 0 1 2.8 0a1.2 1.2 0 0 1 .6 2.1z"/><path d="M358.1 557.1a1.2 1.2 0 0 1 .6-2.1a1.5 1.5 0 0 1 2.8 0a1.2 1.2 0 0 1 .6 2.1z"/><path d="M373.1 647.4a1.2 1.2 0 0 1 .6-2.1a1.5 1.5 0 0 1 2.8 0a1.2 1.2 0 0 1 .6 2.1z"/><path d="M354.9 547.9a1.2 1.2 0 0 1 .6-2.1a1.5 1.5 0 0 1 2.8 0a1.2 1.2 0 0 1 .6 2.1z"/><path d="M358.1 558.3a1.2 1.2 0 0 1 .6-2.1a1.5 1.5 0 0 1 2.8 0a1.2 1.2 0 0 1 .6 2.1z"/><path d="M375.5 636.6a1.2 1.2 0 0 1 .6-2.1a1.5 1.5 0 0 1 2.8 0a1.2 1.2 0 0 1 .6 2.1z"/><path d="M356.9 589.5a1.2 1.2 0 0 1 .6-2.1a1.5 1.5 0 0 1 2.8 0a1.2 1.2 0 0 1 .6 2.1z"/><path d="M356.9 587.6a1.2 1.2 0 0 1 .6-2.1a1.5 1.5 0 0 1 2.8 0a1.2 1.2 0 0 1 .6 2.1z"/><path d="M363.3 557.1a1.2 1.2 0 0 1 .6-2.1a1.5 1.5 0 0 1 2.8 0a1.2 1.2 0 0 1 .6 2.1z"/><path d="M375.9 645.2a1.2 1.2 0 0 1 .6-2.1a1.5 1.5 0 0 1 2.8 0a1.2 1.2 0 0 1 .6 2.1z"/><path d="M360.8 564.6a1.2 1.2 0 0 1 .6-2.1a1.5 1.5 0 0 1 2.8 0a1.2 1.2 0 0 1 .6 2.1z"/><path d="M367.5 633.3a1.2 1.2 0 0 1 .6-2.1a1.5 1.5 0 0 1 2.8 0a1.2 1.2 0 0 1 .6 2.1z"/><path d="M358.7 565.2a1.2 1.2 0 0 1 .6-2.1a1.5 1.5 0 0 1 2.8 0a1.2 1.2 0 0 1 .6 2.1z"/><path d="M382.7 649.1a1.2 1.2 0 0 1 .6-2.1a1.5 1.5 0 0 1 2.8 0a1.2 1.2 0 0 1 .6 2.1z"/><path d="M355.6 587.6a1.2 1.2 0 0 1 .6-2.1a1.5 1.5 0 0 1 2.8 0a1.2 1.2 0 0 1 .6 2.1z"/><path d="M363.0 569.9a1.2 1.2 0 0 1 .6-2.1a1.5 1.5 0 0 1 2.8 0a1.2 1.2 0 0 1 .6 2.1z"/><path d="M364.5 605.6a1.2 1.2 0 0 1 .6-2.1a1.5 1.5 0 0 1 2.8 0a1.2 1.2 0 0 1 .6 2.1z"/><path d="M372.3 635.7a1.2 1.2 0 0 1 .6-2.1a1.5 1.5 0 0 1 2.8 0a1.2 1.2 0 0 1 .6 2.1z"/><path d="M356.7 566.0a1.2 1.2 0 0 1 .6-2.1a1.5 1.5 0 0 1 2.8 0a1.2 1.2 0 0 1 .6 2.1z"/><path d="M373.4 641.6a1.2 1.2 0 0 1 .6-2.1a1.5 1.5 0 0 1 2.8 0a1.2 1.2 0 0 1 .6 2.1z"/><path d="M357.1 585.1a1.2 1.2 0 0 1 .6-2.1a1.5 1.5 0 0 1 2.8 0a1.2 1.2 0 0 1 .6 2.1z"/><path d="M361.3 599.4a1.2 1.2 0 0 1 .6-2.1a1.5 1.5 0 0 1 2.8 0a1.2 1.2 0 0 1 .6 2.1z"/><path d="M371.8 638.1a1.2 1.2 0 0 1 .6-2.1a1.5 1.5 0 0 1 2.8 0a1.2 1.2 0 0 1 .6 2.1z"/><path d="M376.4 648.4a1.2 1.2 0 0 1 .6-2.1a1.5 1.5 0 0 1 2.8 0a1.2 1.2 0 0 1 .6 2.1z"/><path d="M362.8 605.3a1.2 1.2 0 0 1 .6-2.1a1.5 1.5 0 0 1 2.8 0a1.2 1.2 0 0 1 .6 2.1z"/><path d="M369.2 636.8a1.2 1.2 0 0 1 .6-2.1a1.5 1.5 0 0 1 2.8 0a1.2 1.2 0 0 1 .6 2.1z"/><path d="M366.1 585.9a1.2 1.2 0 0 1 .6-2.1a1.5 1.5 0 0 1 2.8 0a1.2 1.2 0 0 1 .6 2.1z"/><path d="M364.2 584.7a1.2 1.2 0 0 1 .6-2.1a1.5 1.5 0 0 1 2.8 0a1.2 1.2 0 0 1 .6 2.1z"/><path d="M359.0 602.2a1.2 1.2 0 0 1 .6-2.1a1.5 1.5 0 0 1 2.8 0a1.2 1.2 0 0 1 .6 2.1z"/><path d="M357.1 589.6a1.2 1.2 0 0 1 .6-2.1a1.5 1.5 0 0 1 2.8 0a1.2 1.2 0 0 1 .6 2.1z"/><path d="M363.5 624.9a1.2 1.2 0 0 1 .6-2.1a1.5 1.5 0 0 1 2.8 0a1.2 1.2 0 0 1 .6 2.1z"/><path d="M373.9 647.1a1.2 1.2 0 0 1 .6-2.1a1.5 1.5 0 0 1 2.8 0a1.2 1.2 0 0 1 .6 2.1z"/><path d="M359.5 622.1a1.2 1.2 0 0 1 .6-2.1a1.5 1.5 0 0 1 2.8 0a1.2 1.2 0 0 1 .6 2.1z"/><path d="M354.4 591.1a1.2 1.2 0 0 1 .6-2.1a1.5 1.5 0 0 1 2.8 0a1.2 1.2 0 0 1 .6 2.1z"/><path d="M372.5 640.0a1.2 1.2 0 0 1 .6-2.1a1.5 1.5 0 0 1 2.8 0a1.2 1.2 0 0 1 .6 2.1z"/><path d="M363.7 593.6a1.2 1.2 0 0 1 .6-2.1a1.5 1.5 0 0 1 2.8 0a1.2 1.2 0 0 1 .6 2.1z"/><path d="M358.5 579.9a1.2 1.2 0 0 1 .6-2.1a1.5 1.5 0 0 1 2.8 0a1.2 1.2 0 0 1 .6 2.1z"/><path d="M357.6 571.8a1.2 1.2 0 0 1 .6-2.1a1.5 1.5 0 0 1 2.8 0a1.2 1.2 0 0 1 .6 2.1z"/><path d="M358.3 562.9a1.2 1.2 0 0 1 .6-2.1a1.5 1.5 0 0 1 2.8 0a1.2 1.2 0 0 1 .6 2.1z"/><path d="M354.4 555.8a1.2 1.2 0 0 1 .6-2.1a1.5 1.5 0 0 1 2.8 0a1.2 1.2 0 0 1 .6 2.1z"/><path d="M361.8 547.1a1.2 1.2 0 0 1 .6-2.1a1.5 1.5 0 0 1 2.8 0a1.2 1.2 0 0 1 .6 2.1z"/><path d="M360.7 569.3a1.2 1.2 0 0 1 .6-2.1a1.5 1.5 0 0 1 2.8 0a1.2 1.2 0 0 1 .6 2.1z"/><path d="M376.2 640.1a1.2 1.2 0 0 1 .6-2.1a1.5 1.5 0 0 1 2.8 0a1.2 1.2 0 0 1 .6 2.1z"/><path d="M359.4 610.0a1.2 1.2 0 0 1 .6-2.1a1.5 1.5 0 0 1 2.8 0a1.2 1.2 0 0 1 .6 2.1z"/><path d="M354.2 592.3a1.2 1.2 0 0 1 .6-2.1a1.5 1.5 0 0 1 2.8 0a1.2 1.2 0 0 1 .6 2.1z"/><path d="M358.9 551.1a1.2 1.2 0 0 1 .6-2.1a1.5 1.5 0 0 1 2.8 0a1.2 1.2 0 0 1 .6 2.1z"/><path d="M356.8 590.2a1.2 1.2 0 0 1 .6-2.1a1.5 1.5 0 0 1 2.8 0a1.2 1.2 0 0 1 .6 2.1z"/><path d="M377.2 647.2a1.2 1.2 0 0 1 .6-2.1a1.5 1.5 0 0 1 2.8 0a1.2 1.2 0 0 1 .6 2.1z"/><path d="M360.0 544.5a1.2 1.2 0 0 1 .6-2.1a1.5 1.5 0 0 1 2.8 0a1.2 1.2 0 0 1 .6 2.1z"/><path d="M352.6 572.7a1.2 1.2 0 0 1 .6-2.1a1.5 1.5 0 0 1 2.8 0a1.2 1.2 0 0 1 .6 2.1z"/><path d="M353.3 557.0a1.2 1.2 0 0 1 .6-2.1a1.5 1.5 0 0 1 2.8 0a1.2 1.2 0 0 1 .6 2.1z"/><path d="M358.0 604.0a1.2 1.2 0 0 1 .6-2.1a1.5 1.5 0 0 1 2.8 0a1.2 1.2 0 0 1 .6 2.1z"/><path d="M368.6 631.1a1.2 1.2 0 0 1 .6-2.1a1.5 1.5 0 0 1 2.8 0a1.2 1.2 0 0 1 .6 2.1z"/><path d="M361.0 609.3a1.2 1.2 0 0 1 .6-2.1a1.5 1.5 0 0 1 2.8 0a1.2 1.2 0 0 1 .6 2.1z"/><path d="M371.4 640.3a1.2 1.2 0 0 1 .6-2.1a1.5 1.5 0 0 1 2.8 0a1.2 1.2 0 0 1 .6 2.1z"/><path d="M368.8 624.9a1.2 1.2 0 0 1 .6-2.1a1.5 1.5 0 0 1 2.8 0a1.2 1.2 0 0 1 .6 2.1z"/><path d="M359.9 559.4a1.2 1.2 0 0 1 .6-2.1a1.5 1.5 0 0 1 2.8 0a1.2 1.2 0 0 1 .6 2.1z"/><path d="M372.8 647.8a1.2 1.2 0 0 1 .6-2.1a1.5 1.5 0 0 1 2.8 0a1.2 1.2 0 0 1 .6 2.1z"/><path d="M357.6 578.9a1.2 1.2 0 0 1 .6-2.1a1.5 1.5 0 0 1 2.8 0a1.2 1.2 0 0 1 .6 2.1z"/><path d="M372.1 654.8a1.2 1.2 0 0 1 .6-2.1a1.5 1.5 0 0 1 2.8 0a1.2 1.2 0 0 1 .6 2.1z"/><path d="M360.8 561.9a1.2 1.2 0 0 1 .6-2.1a1.5 1.5 0 0 1 2.8 0a1.2 1.2 0 0 1 .6 2.1z"/><path d="M362.1 557.9a1.2 1.2 0 0 1 .6-2.1a1.5 1.5 0 0 1 2.8 0a1.2 1.2 0 0 1 .6 2.1z"/><path d="M362.8 590.3a1.2 1.2 0 0 1 .6-2.1a1.5 1.5 0 0 1 2.8 0a1.2 1.2 0 0 1 .6 2.1z"/><path d="M365.6 621.1a1.2 1.2 0 0 1 .6-2.1a1.5 1.5 0 0 1 2.8 0a1.2 1.2 0 0 1 .6 2.1z"/><path d="M358.7 596.4a1.2 1.2 0 0 1 .6-2.1a1.5 1.5 0 0 1 2.8 0a1.2 1.2 0 0 1 .6 2.1z"/><path d="M356.7 545.0a1.2 1.2 0 0 1 .6-2.1a1.5 1.5 0 0 1 2.8 0a1.2 1.2 0 0 1 .6 2.1z"/><path d="M313.0 592.8a1.2 1.2 0 0 1 .6-2.1a1.5 1.5 0 0 1 2.8 0a1.2 1.2 0 0 1 .6 2.1z"/><path d="M312.9 576.0a1.2 1.2 0 0 1 .6-2.1a1.5 1.5 0 0 1 2.8 0a1.2 1.2 0 0 1 .6 2.1z"/><path d="M312.7 580.4a1.2 1.2 0 0 1 .6-2.1a1.5 1.5 0 0 1 2.8 0a1.2 1.2 0 0 1 .6 2.1z"/><path d="M309.8 558.2a1.2 1.2 0 0 1 .6-2.1a1.5 1.5 0 0 1 2.8 0a1.2 1.2 0 0 1 .6 2.1z"/><path d="M310.5 566.1a1.2 1.2 0 0 1 .6-2.1a1.5 1.5 0 0 1 2.8 0a1.2 1.2 0 0 1 .6 2.1z"/><path d="M313.6 562.8a1.2 1.2 0 0 1 .6-2.1a1.5 1.5 0 0 1 2.8 0a1.2 1.2 0 0 1 .6 2.1z"/><path d="M315.4 593.1a1.2 1.2 0 0 1 .6-2.1a1.5 1.5 0 0 1 2.8 0a1.2 1.2 0 0 1 .6 2.1z"/><path d="M312.7 580.1a1.2 1.2 0 0 1 .6-2.1a1.5 1.5 0 0 1 2.8 0a1.2 1.2 0 0 1 .6 2.1z"/><path d="M316.2 569.5a1.2 1.2 0 0 1 .6-2.1a1.5 1.5 0 0 1 2.8 0a1.2 1.2 0 0 1 .6 2.1z"/><path d="M312.2 598.9a1.2 1.2 0 0 1 .6-2.1a1.5 1.5 0 0 1 2.8 0a1.2 1.2 0 0 1 .6 2.1z"/><path d="M316.2 583.2a1.2 1.2 0 0 1 .6-2.1a1.5 1.5 0 0 1 2.8 0a1.2 1.2 0 0 1 .6 2.1z"/><path d="M311.8 570.1a1.2 1.2 0 0 1 .6-2.1a1.5 1.5 0 0 1 2.8 0a1.2 1.2 0 0 1 .6 2.1z"/><path d="M311.7 557.5a1.2 1.2 0 0 1 .6-2.1a1.5 1.5 0 0 1 2.8 0a1.2 1.2 0 0 1 .6 2.1z"/><path d="M312.2 578.3a1.2 1.2 0 0 1 .6-2.1a1.5 1.5 0 0 1 2.8 0a1.2 1.2 0 0 1 .6 2.1z"/><path d="M311.2 575.9a1.2 1.2 0 0 1 .6-2.1a1.5 1.5 0 0 1 2.8 0a1.2 1.2 0 0 1 .6 2.1z"/><path d="M309.5 560.7a1.2 1.2 0 0 1 .6-2.1a1.5 1.5 0 0 1 2.8 0a1.2 1.2 0 0 1 .6 2.1z"/><path d="M312.4 583.8a1.2 1.2 0 0 1 .6-2.1a1.5 1.5 0 0 1 2.8 0a1.2 1.2 0 0 1 .6 2.1z"/><path d="M309.2 561.2a1.2 1.2 0 0 1 .6-2.1a1.5 1.5 0 0 1 2.8 0a1.2 1.2 0 0 1 .6 2.1z"/><path d="M312.5 577.9a1.2 1.2 0 0 1 .6-2.1a1.5 1.5 0 0 1 2.8 0a1.2 1.2 0 0 1 .6 2.1z"/><path d="M314.3 566.9a1.2 1.2 0 0 1 .6-2.1a1.5 1.5 0 0 1 2.8 0a1.2 1.2 0 0 1 .6 2.1z"/><path d="M312.1 591.1a1.2 1.2 0 0 1 .6-2.1a1.5 1.5 0 0 1 2.8 0a1.2 1.2 0 0 1 .6 2.1z"/><path d="M314.2 584.5a1.2 1.2 0 0 1 .6-2.1a1.5 1.5 0 0 1 2.8 0a1.2 1.2 0 0 1 .6 2.1z"/><path d="M334.2 581.8a1.2 1.2 0 0 1 .6-2.1a1.5 1.5 0 0 1 2.8 0a1.2 1.2 0 0 1 .6 2.1z"/><path d="M329.4 575.2a1.2 1.2 0 0 1 .6-2.1a1.5 1.5 0 0 1 2.8 0a1.2 1.2 0 0 1 .6 2.1z"/><path d="M317.7 555.1a1.2 1.2 0 0 1 .6-2.1a1.5 1.5 0 0 1 2.8 0a1.2 1.2 0 0 1 .6 2.1z"/><path d="M312.7 553.7a1.2 1.2 0 0 1 .6-2.1a1.5 1.5 0 0 1 2.8 0a1.2 1.2 0 0 1 .6 2.1z"/><path d="M318.7 563.7a1.2 1.2 0 0 1 .6-2.1a1.5 1.5 0 0 1 2.8 0a1.2 1.2 0 0 1 .6 2.1z"/><path d="M326.2 575.9a1.2 1.2 0 0 1 .6-2.1a1.5 1.5 0 0 1 2.8 0a1.2 1.2 0 0 1 .6 2.1z"/><path d="M322.1 567.9a1.2 1.2 0 0 1 .6-2.1a1.5 1.5 0 0 1 2.8 0a1.2 1.2 0 0 1 .6 2.1z"/><path d="M320.5 564.4a1.2 1.2 0 0 1 .6-2.1a1.5 1.5 0 0 1 2.8 0a1.2 1.2 0 0 1 .6 2.1z"/><path d="M315.6 558.8a1.2 1.2 0 0 1 .6-2.1a1.5 1.5 0 0 1 2.8 0a1.2 1.2 0 0 1 .6 2.1z"/><path d="M339.0 585.2a1.2 1.2 0 0 1 .6-2.1a1.5 1.5 0 0 1 2.8 0a1.2 1.2 0 0 1 .6 2.1z"/><path d="M320.3 565.8a1.2 1.2 0 0 1 .6-2.1a1.5 1.5 0 0 1 2.8 0a1.2 1.2 0 0 1 .6 2.1z"/><path d="M340.5 584.7a1.2 1.2 0 0 1 .6-2.1a1.5 1.5 0 0 1 2.8 0a1.2 1.2 0 0 1 .6 2.1z"/><path d="M322.1 563.4a1.2 1.2 0 0 1 .6-2.1a1.5 1.5 0 0 1 2.8 0a1.2 1.2 0 0 1 .6 2.1z"/><path d="M315.6 557.4a1.2 1.2 0 0 1 .6-2.1a1.5 1.5 0 0 1 2.8 0a1.2 1.2 0 0 1 .6 2.1z"/><path d="M310.9 553.9a1.2 1.2 0 0 1 .6-2.1a1.5 1.5 0 0 1 2.8 0a1.2 1.2 0 0 1 .6 2.1z"/><path d="M327.4 576.0a1.2 1.2 0 0 1 .6-2.1a1.5 1.5 0 0 1 2.8 0a1.2 1.2 0 0 1 .6 2.1z"/><path d="M338.8 587.8a1.2 1.2 0 0 1 .6-2.1a1.5 1.5 0 0 1 2.8 0a1.2 1.2 0 0 1 .6 2.1z"/><path d="M312.5 550.4a1.2 1.2 0 0 1 .6-2.1a1.5 1.5 0 0 1 2.8 0a1.2 1.2 0 0 1 .6 2.1z"/><path d="M336.3 582.2a1.2 1.2 0 0 1 .6-2.1a1.5 1.5 0 0 1 2.8 0a1.2 1.2 0 0 1 .6 2.1z"/><path d="M316.9 560.2a1.2 1.2 0 0 1 .6-2.1a1.5 1.5 0 0 1 2.8 0a1.2 1.2 0 0 1 .6 2.1z"/><path d="M322.3 570.7a1.2 1.2 0 0 1 .6-2.1a1.5 1.5 0 0 1 2.8 0a1.2 1.2 0 0 1 .6 2.1z"/><path d="M315.9 560.0a1.2 1.2 0 0 1 .6-2.1a1.5 1.5 0 0 1 2.8 0a1.2 1.2 0 0 1 .6 2.1z"/><path d="M331.4 579.8a1.2 1.2 0 0 1 .6-2.1a1.5 1.5 0 0 1 2.8 0a1.2 1.2 0 0 1 .6 2.1z"/><path d="M313.6 553.1a1.2 1.2 0 0 1 .6-2.1a1.5 1.5 0 0 1 2.8 0a1.2 1.2 0 0 1 .6 2.1z"/><path d="M338.2 583.6a1.2 1.2 0 0 1 .6-2.1a1.5 1.5 0 0 1 2.8 0a1.2 1.2 0 0 1 .6 2.1z"/><path d="M333.5 555.9a1.2 1.2 0 0 1 .6-2.1a1.5 1.5 0 0 1 2.8 0a1.2 1.2 0 0 1 .6 2.1z"/><path d="M332.6 557.8a1.2 1.2 0 0 1 .6-2.1a1.5 1.5 0 0 1 2.8 0a1.2 1.2 0 0 1 .6 2.1z"/><path d="M331.5 547.0a1.2 1.2 0 0 1 .6-2.1a1.5 1.5 0 0 1 2.8 0a1.2 1.2 0 0 1 .6 2.1z"/><path d="M323.7 539.7a1.2 1.2 0 0 1 .6-2.1a1.5 1.5 0 0 1 2.8 0a1.2 1.2 0 0 1 .6 2.1z"/><path d="M338.9 566.9a1.2 1.2 0 0 1 .6-2.1a1.5 1.5 0 0 1 2.8 0a1.2 1.2 0 0 1 .6 2.1z"/><path d="M347.1 562.5a1.2 1.2 0 0 1 .6-2.1a1.5 1.5 0 0 1 2.8 0a1.2 1.2 0 0 1 .6 2.1z"/><path d="M332.3 547.0a1.2 1.2 0 0 1 .6-2.1a1.5 1.5 0 0 1 2.8 0a1.2 1.2 0 0 1 .6 2.1z"/><path d="M337.8 559.0a1.2 1.2 0 0 1 .6-2.1a1.5 1.5 0 0 1 2.8 0a1.2 1.2 0 0 1 .6 2.1z"/><path d="M338.7 558.4a1.2 1.2 0 0 1 .6-2.1a1.5 1.5 0 0 1 2.8 0a1.2 1.2 0 0 1 .6 2.1z"/><path d="M345.2 564.5a1.2 1.2 0 0 1 .6-2.1a1.5 1.5 0 0 1 2.8 0a1.2 1.2 0 0 1 .6 2.1z"/><path d="M343.7 560.1a1.2 1.2 0 0 1 .6-2.1a1.5 1.5 0 0 1 2.8 0a1.2 1.2 0 0 1 .6 2.1z"/><path d="M344.4 564.2a1.2 1.2 0 0 1 .6-2.1a1.5 1.5 0 0 1 2.8 0a1.2 1.2 0 0 1 .6 2.1z"/><path d="M326.3 546.2a1.2 1.2 0 0 1 .6-2.1a1.5 1.5 0 0 1 2.8 0a1.2 1.2 0 0 1 .6 2.1z"/><path d="M336.6 552.0a1.2 1.2 0 0 1 .6-2.1a1.5 1.5 0 0 1 2.8 0a1.2 1.2 0 0 1 .6 2.1z"/><path d="M329.1 542.1a1.2 1.2 0 0 1 .6-2.1a1.5 1.5 0 0 1 2.8 0a1.2 1.2 0 0 1 .6 2.1z"/><path d="M342.3 556.0a1.2 1.2 0 0 1 .6-2.1a1.5 1.5 0 0 1 2.8 0a1.2 1.2 0 0 1 .6 2.1z"/><path d="M331.6 543.5a1.2 1.2 0 0 1 .6-2.1a1.5 1.5 0 0 1 2.8 0a1.2 1.2 0 0 1 .6 2.1z"/><path d="M346.1 561.8a1.2 1.2 0 0 1 .6-2.1a1.5 1.5 0 0 1 2.8 0a1.2 1.2 0 0 1 .6 2.1z"/><path d="M351.8 566.6a1.2 1.2 0 0 1 .6-2.1a1.5 1.5 0 0 1 2.8 0a1.2 1.2 0 0 1 .6 2.1z"/><path d="M346.1 564.3a1.2 1.2 0 0 1 .6-2.1a1.5 1.5 0 0 1 2.8 0a1.2 1.2 0 0 1 .6 2.1z"/><path d="M343.0 562.8a1.2 1.2 0 0 1 .6-2.1a1.5 1.5 0 0 1 2.8 0a1.2 1.2 0 0 1 .6 2.1z"/><path d="M339.4 559.6a1.2 1.2 0 0 1 .6-2.1a1.5 1.5 0 0 1 2.8 0a1.2 1.2 0 0 1 .6 2.1z"/><path d="M350.1 568.0a1.2 1.2 0 0 1 .6-2.1a1.5 1.5 0 0 1 2.8 0a1.2 1.2 0 0 1 .6 2.1z"/><path d="M326.3 543.7a1.2 1.2 0 0 1 .6-2.1a1.5 1.5 0 0 1 2.8 0a1.2 1.2 0 0 1 .6 2.1z"/><path d="M322.8 536.8a1.2 1.2 0 0 1 .6-2.1a1.5 1.5 0 0 1 2.8 0a1.2 1.2 0 0 1 .6 2.1z"/><path d="M489.6 628.4a1.2 1.2 0 0 1 .6-2.1a1.5 1.5 0 0 1 2.8 0a1.2 1.2 0 0 1 .6 2.1z"/><path d="M465.6 547.4a1.2 1.2 0 0 1 .6-2.1a1.5 1.5 0 0 1 2.8 0a1.2 1.2 0 0 1 .6 2.1z"/><path d="M473.1 567.9a1.2 1.2 0 0 1 .6-2.1a1.5 1.5 0 0 1 2.8 0a1.2 1.2 0 0 1 .6 2.1z"/><path d="M474.5 578.0a1.2 1.2 0 0 1 .6-2.1a1.5 1.5 0 0 1 2.8 0a1.2 1.2 0 0 1 .6 2.1z"/><path d="M472.4 551.3a1.2 1.2 0 0 1 .6-2.1a1.5 1.5 0 0 1 2.8 0a1.2 1.2 0 0 1 .6 2.1z"/><path d="M464.9 538.7a1.2 1.2 0 0 1 .6-2.1a1.5 1.5 0 0 1 2.8 0a1.2 1.2 0 0 1 .6 2.1z"/><path d="M479.3 606.9a1.2 1.2 0 0 1 .6-2.1a1.5 1.5 0 0 1 2.8 0a1.2 1.2 0 0 1 .6 2.1z"/><path d="M477.6 582.2a1.2 1.2 0 0 1 .6-2.1a1.5 1.5 0 0 1 2.8 0a1.2 1.2 0 0 1 .6 2.1z"/><path d="M479.8 616.6a1.2 1.2 0 0 1 .6-2.1a1.5 1.5 0 0 1 2.8 0a1.2 1.2 0 0 1 .6 2.1z"/><path d="M482.6 617.2a1.2 1.2 0 0 1 .6-2.1a1.5 1.5 0 0 1 2.8 0a1.2 1.2 0 0 1 .6 2.1z"/><path d="M476.2 568.0a1.2 1.2 0 0 1 .6-2.1a1.5 1.5 0 0 1 2.8 0a1.2 1.2 0 0 1 .6 2.1z"/><path d="M493.1 630.3a1.2 1.2 0 0 1 .6-2.1a1.5 1.5 0 0 1 2.8 0a1.2 1.2 0 0 1 .6 2.1z"/><path d="M474.4 555.8a1.2 1.2 0 0 1 .6-2.1a1.5 1.5 0 0 1 2.8 0a1.2 1.2 0 0 1 .6 2.1z"/><path d="M465.7 547.7a1.2 1.2 0 0 1 .6-2.1a1.5 1.5 0 0 1 2.8 0a1.2 1.2 0 0 1 .6 2.1z"/><path d="M483.2 601.2a1.2 1.2 0 0 1 .6-2.1a1.5 1.5 0 0 1 2.8 0a1.2 1.2 0 0 1 .6 2.1z"/><path d="M476.7 550.4a1.2 1.2 0 0 1 .6-2.1a1.5 1.5 0 0 1 2.8 0a1.2 1.2 0 0 1 .6 2.1z"/><path d="M477.7 562.4a1.2 1.2 0 0 1 .6-2.1a1.5 1.5 0 0 1 2.8 0a1.2 1.2 0 0 1 .6 2.1z"/><path d="M476.5 573.9a1.2 1.2 0 0 1 .6-2.1a1.5 1.5 0 0 1 2.8 0a1.2 1.2 0 0 1 .6 2.1z"/><path d="M480.2 582.8a1.2 1.2 0 0 1 .6-2.1a1.5 1.5 0 0 1 2.8 0a1.2 1.2 0 0 1 .6 2.1z"/><path d="M472.2 548.9a1.2 1.2 0 0 1 .6-2.1a1.5 1.5 0 0 1 2.8 0a1.2 1.2 0 0 1 .6 2.1z"/><path d="M490.9 629.9a1.2 1.2 0 0 1 .6-2.1a1.5 1.5 0 0 1 2.8 0a1.2 1.2 0 0 1 .6 2.1z"/><path d="M474.4 559.2a1.2 1.2 0 0 1 .6-2.1a1.5 1.5 0 0 1 2.8 0a1.2 1.2 0 0 1 .6 2.1z"/><path d="M480.6 589.4a1.2 1.2 0 0 1 .6-2.1a1.5 1.5 0 0 1 2.8 0a1.2 1.2 0 0 1 .6 2.1z"/><path d="M478.3 581.3a1.2 1.2 0 0 1 .6-2.1a1.5 1.5 0 0 1 2.8 0a1.2 1.2 0 0 1 .6 2.1z"/><path d="M461.7 541.2a1.2 1.2 0 0 1 .6-2.1a1.5 1.5 0 0 1 2.8 0a1.2 1.2 0 0 1 .6 2.1z"/><path d="M463.6 538.7a1.2 1.2 0 0 1 .6-2.1a1.5 1.5 0 0 1 2.8 0a1.2 1.2 0 0 1 .6 2.1z"/><path d="M476.7 573.6a1.2 1.2 0 0 1 .6-2.1a1.5 1.5 0 0 1 2.8 0a1.2 1.2 0 0 1 .6 2.1z"/><path d="M462.5 538.9a1.2 1.2 0 0 1 .6-2.1a1.5 1.5 0 0 1 2.8 0a1.2 1.2 0 0 1 .6 2.1z"/><path d="M475.9 559.3a1.2 1.2 0 0 1 .6-2.1a1.5 1.5 0 0 1 2.8 0a1.2 1.2 0 0 1 .6 2.1z"/><path d="M479.7 580.0a1.2 1.2 0 0 1 .6-2.1a1.5 1.5 0 0 1 2.8 0a1.2 1.2 0 0 1 .6 2.1z"/><path d="M468.0 557.0a1.2 1.2 0 0 1 .6-2.1a1.5 1.5 0 0 1 2.8 0a1.2 1.2 0 0 1 .6 2.1z"/><path d="M480.4 614.7a1.2 1.2 0 0 1 .6-2.1a1.5 1.5 0 0 1 2.8 0a1.2 1.2 0 0 1 .6 2.1z"/><path d="M487.1 623.3a1.2 1.2 0 0 1 .6-2.1a1.5 1.5 0 0 1 2.8 0a1.2 1.2 0 0 1 .6 2.1z"/><path d="M477.0 577.6a1.2 1.2 0 0 1 .6-2.1a1.5 1.5 0 0 1 2.8 0a1.2 1.2 0 0 1 .6 2.1z"/><path d="M483.3 613.7a1.2 1.2 0 0 1 .6-2.1a1.5 1.5 0 0 1 2.8 0a1.2 1.2 0 0 1 .6 2.1z"/><path d="M482.6 620.5a1.2 1.2 0 0 1 .6-2.1a1.5 1.5 0 0 1 2.8 0a1.2 1.2 0 0 1 .6 2.1z"/><path d="M479.4 597.2a1.2 1.2 0 0 1 .6-2.1a1.5 1.5 0 0 1 2.8 0a1.2 1.2 0 0 1 .6 2.1z"/><path d="M481.7 620.9a1.2 1.2 0 0 1 .6-2.1a1.5 1.5 0 0 1 2.8 0a1.2 1.2 0 0 1 .6 2.1z"/><path d="M460.4 542.1a1.2 1.2 0 0 1 .6-2.1a1.5 1.5 0 0 1 2.8 0a1.2 1.2 0 0 1 .6 2.1z"/><path d="M487.9 622.9a1.2 1.2 0 0 1 .6-2.1a1.5 1.5 0 0 1 2.8 0a1.2 1.2 0 0 1 .6 2.1z"/><path d="M317.2 637.8a1.2 1.2 0 0 1 .6-2.1a1.5 1.5 0 0 1 2.8 0a1.2 1.2 0 0 1 .6 2.1z"/><path d="M321.7 649.2a1.2 1.2 0 0 1 .6-2.1a1.5 1.5 0 0 1 2.8 0a1.2 1.2 0 0 1 .6 2.1z"/></g>
<g fill="#2f8a12" fill-opacity="0.92"><path d="M772.4 558.4a1.2 1.2 0 0 1 .6-2.1a1.5 1.5 0 0 1 2.8 0a1.2 1.2 0 0 1 .6 2.1z"/><path d="M846.3 526.3a1.2 1.2 0 0 1 .6-2.1a1.5 1.5 0 0 1 2.8 0a1.2 1.2 0 0 1 .6 2.1z"/><path d="M587.9 646.4a1.2 1.2 0 0 1 .6-2.1a1.5 1.5 0 0 1 2.8 0a1.2 1.2 0 0 1 .6 2.1z"/><path d="M549.4 652.6a1.2 1.2 0 0 1 .6-2.1a1.5 1.5 0 0 1 2.8 0a1.2 1.2 0 0 1 .6 2.1z"/><path d="M783.1 553.0a1.2 1.2 0 0 1 .6-2.1a1.5 1.5 0 0 1 2.8 0a1.2 1.2 0 0 1 .6 2.1z"/><path d="M789.9 554.4a1.2 1.2 0 0 1 .6-2.1a1.5 1.5 0 0 1 2.8 0a1.2 1.2 0 0 1 .6 2.1z"/><path d="M574.5 649.3a1.2 1.2 0 0 1 .6-2.1a1.5 1.5 0 0 1 2.8 0a1.2 1.2 0 0 1 .6 2.1z"/><path d="M692.7 600.6a1.2 1.2 0 0 1 .6-2.1a1.5 1.5 0 0 1 2.8 0a1.2 1.2 0 0 1 .6 2.1z"/><path d="M805.8 545.0a1.2 1.2 0 0 1 .6-2.1a1.5 1.5 0 0 1 2.8 0a1.2 1.2 0 0 1 .6 2.1z"/><path d="M548.1 650.9a1.2 1.2 0 0 1 .6-2.1a1.5 1.5 0 0 1 2.8 0a1.2 1.2 0 0 1 .6 2.1z"/><path d="M765.9 562.4a1.2 1.2 0 0 1 .6-2.1a1.5 1.5 0 0 1 2.8 0a1.2 1.2 0 0 1 .6 2.1z"/><path d="M803.9 542.3a1.2 1.2 0 0 1 .6-2.1a1.5 1.5 0 0 1 2.8 0a1.2 1.2 0 0 1 .6 2.1z"/><path d="M727.4 578.6a1.2 1.2 0 0 1 .6-2.1a1.5 1.5 0 0 1 2.8 0a1.2 1.2 0 0 1 .6 2.1z"/><path d="M781.0 550.6a1.2 1.2 0 0 1 .6-2.1a1.5 1.5 0 0 1 2.8 0a1.2 1.2 0 0 1 .6 2.1z"/><path d="M810.0 539.0a1.2 1.2 0 0 1 .6-2.1a1.5 1.5 0 0 1 2.8 0a1.2 1.2 0 0 1 .6 2.1z"/><path d="M748.9 574.8a1.2 1.2 0 0 1 .6-2.1a1.5 1.5 0 0 1 2.8 0a1.2 1.2 0 0 1 .6 2.1z"/><path d="M739.7 575.5a1.2 1.2 0 0 1 .6-2.1a1.5 1.5 0 0 1 2.8 0a1.2 1.2 0 0 1 .6 2.1z"/><path d="M731.0 582.4a1.2 1.2 0 0 1 .6-2.1a1.5 1.5 0 0 1 2.8 0a1.2 1.2 0 0 1 .6 2.1z"/><path d="M540.5 649.5a1.2 1.2 0 0 1 .6-2.1a1.5 1.5 0 0 1 2.8 0a1.2 1.2 0 0 1 .6 2.1z"/><path d="M601.3 642.0a1.2 1.2 0 0 1 .6-2.1a1.5 1.5 0 0 1 2.8 0a1.2 1.2 0 0 1 .6 2.1z"/><path d="M598.6 643.6a1.2 1.2 0 0 1 .6-2.1a1.5 1.5 0 0 1 2.8 0a1.2 1.2 0 0 1 .6 2.1z"/><path d="M820.2 536.5a1.2 1.2 0 0 1 .6-2.1a1.5 1.5 0 0 1 2.8 0a1.2 1.2 0 0 1 .6 2.1z"/><path d="M675.7 610.6a1.2 1.2 0 0 1 .6-2.1a1.5 1.5 0 0 1 2.8 0a1.2 1.2 0 0 1 .6 2.1z"/><path d="M760.2 566.0a1.2 1.2 0 0 1 .6-2.1a1.5 1.5 0 0 1 2.8 0a1.2 1.2 0 0 1 .6 2.1z"/><path d="M523.9 651.3a1.2 1.2 0 0 1 .6-2.1a1.5 1.5 0 0 1 2.8 0a1.2 1.2 0 0 1 .6 2.1z"/><path d="M750.5 570.6a1.2 1.2 0 0 1 .6-2.1a1.5 1.5 0 0 1 2.8 0a1.2 1.2 0 0 1 .6 2.1z"/><path d="M769.4 562.3a1.2 1.2 0 0 1 .6-2.1a1.5 1.5 0 0 1 2.8 0a1.2 1.2 0 0 1 .6 2.1z"/><path d="M667.1 611.8a1.2 1.2 0 0 1 .6-2.1a1.5 1.5 0 0 1 2.8 0a1.2 1.2 0 0 1 .6 2.1z"/><path d="M660.9 621.0a1.2 1.2 0 0 1 .6-2.1a1.5 1.5 0 0 1 2.8 0a1.2 1.2 0 0 1 .6 2.1z"/><path d="M721.3 587.8a1.2 1.2 0 0 1 .6-2.1a1.5 1.5 0 0 1 2.8 0a1.2 1.2 0 0 1 .6 2.1z"/><path d="M584.4 648.9a1.2 1.2 0 0 1 .6-2.1a1.5 1.5 0 0 1 2.8 0a1.2 1.2 0 0 1 .6 2.1z"/><path d="M775.7 558.6a1.2 1.2 0 0 1 .6-2.1a1.5 1.5 0 0 1 2.8 0a1.2 1.2 0 0 1 .6 2.1z"/><path d="M683.0 607.8a1.2 1.2 0 0 1 .6-2.1a1.5 1.5 0 0 1 2.8 0a1.2 1.2 0 0 1 .6 2.1z"/><path d="M548.0 650.3a1.2 1.2 0 0 1 .6-2.1a1.5 1.5 0 0 1 2.8 0a1.2 1.2 0 0 1 .6 2.1z"/><path d="M733.8 580.5a1.2 1.2 0 0 1 .6-2.1a1.5 1.5 0 0 1 2.8 0a1.2 1.2 0 0 1 .6 2.1z"/><path d="M713.2 588.8a1.2 1.2 0 0 1 .6-2.1a1.5 1.5 0 0 1 2.8 0a1.2 1.2 0 0 1 .6 2.1z"/><path d="M611.8 638.0a1.2 1.2 0 0 1 .6-2.1a1.5 1.5 0 0 1 2.8 0a1.2 1.2 0 0 1 .6 2.1z"/><path d="M749.1 566.4a1.2 1.2 0 0 1 .6-2.1a1.5 1.5 0 0 1 2.8 0a1.2 1.2 0 0 1 .6 2.1z"/><path d="M628.7 630.0a1.2 1.2 0 0 1 .6-2.1a1.5 1.5 0 0 1 2.8 0a1.2 1.2 0 0 1 .6 2.1z"/><path d="M770.2 564.9a1.2 1.2 0 0 1 .6-2.1a1.5 1.5 0 0 1 2.8 0a1.2 1.2 0 0 1 .6 2.1z"/><path d="M708.3 594.0a1.2 1.2 0 0 1 .6-2.1a1.5 1.5 0 0 1 2.8 0a1.2 1.2 0 0 1 .6 2.1z"/><path d="M721.5 587.7a1.2 1.2 0 0 1 .6-2.1a1.5 1.5 0 0 1 2.8 0a1.2 1.2 0 0 1 .6 2.1z"/><path d="M685.4 605.9a1.2 1.2 0 0 1 .6-2.1a1.5 1.5 0 0 1 2.8 0a1.2 1.2 0 0 1 .6 2.1z"/><path d="M713.7 588.6a1.2 1.2 0 0 1 .6-2.1a1.5 1.5 0 0 1 2.8 0a1.2 1.2 0 0 1 .6 2.1z"/><path d="M562.7 649.8a1.2 1.2 0 0 1 .6-2.1a1.5 1.5 0 0 1 2.8 0a1.2 1.2 0 0 1 .6 2.1z"/><path d="M614.7 637.0a1.2 1.2 0 0 1 .6-2.1a1.5 1.5 0 0 1 2.8 0a1.2 1.2 0 0 1 .6 2.1z"/><path d="M735.2 577.2a1.2 1.2 0 0 1 .6-2.1a1.5 1.5 0 0 1 2.8 0a1.2 1.2 0 0 1 .6 2.1z"/><path d="M656.6 618.5a1.2 1.2 0 0 1 .6-2.1a1.5 1.5 0 0 1 2.8 0a1.2 1.2 0 0 1 .6 2.1z"/><path d="M757.3 567.8a1.2 1.2 0 0 1 .6-2.1a1.5 1.5 0 0 1 2.8 0a1.2 1.2 0 0 1 .6 2.1z"/><path d="M754.0 569.9a1.2 1.2 0 0 1 .6-2.1a1.5 1.5 0 0 1 2.8 0a1.2 1.2 0 0 1 .6 2.1z"/><path d="M543.5 651.4a1.2 1.2 0 0 1 .6-2.1a1.5 1.5 0 0 1 2.8 0a1.2 1.2 0 0 1 .6 2.1z"/><path d="M735.0 580.3a1.2 1.2 0 0 1 .6-2.1a1.5 1.5 0 0 1 2.8 0a1.2 1.2 0 0 1 .6 2.1z"/><path d="M787.7 552.0a1.2 1.2 0 0 1 .6-2.1a1.5 1.5 0 0 1 2.8 0a1.2 1.2 0 0 1 .6 2.1z"/><path d="M617.6 631.7a1.2 1.2 0 0 1 .6-2.1a1.5 1.5 0 0 1 2.8 0a1.2 1.2 0 0 1 .6 2.1z"/><path d="M803.8 541.4a1.2 1.2 0 0 1 .6-2.1a1.5 1.5 0 0 1 2.8 0a1.2 1.2 0 0 1 .6 2.1z"/><path d="M705.3 596.2a1.2 1.2 0 0 1 .6-2.1a1.5 1.5 0 0 1 2.8 0a1.2 1.2 0 0 1 .6 2.1z"/><path d="M755.8 565.0a1.2 1.2 0 0 1 .6-2.1a1.5 1.5 0 0 1 2.8 0a1.2 1.2 0 0 1 .6 2.1z"/><path d="M805.6 542.6a1.2 1.2 0 0 1 .6-2.1a1.5 1.5 0 0 1 2.8 0a1.2 1.2 0 0 1 .6 2.1z"/><path d="M833.1 528.2a1.2 1.2 0 0 1 .6-2.1a1.5 1.5 0 0 1 2.8 0a1.2 1.2 0 0 1 .6 2.1z"/><path d="M638.4 628.5a1.2 1.2 0 0 1 .6-2.1a1.5 1.5 0 0 1 2.8 0a1.2 1.2 0 0 1 .6 2.1z"/><path d="M600.6 644.7a1.2 1.2 0 0 1 .6-2.1a1.5 1.5 0 0 1 2.8 0a1.2 1.2 0 0 1 .6 2.1z"/><path d="M695.2 607.0a1.2 1.2 0 0 1 .6-2.1a1.5 1.5 0 0 1 2.8 0a1.2 1.2 0 0 1 .6 2.1z"/><path d="M723.5 586.4a1.2 1.2 0 0 1 .6-2.1a1.5 1.5 0 0 1 2.8 0a1.2 1.2 0 0 1 .6 2.1z"/><path d="M834.3 530.6a1.2 1.2 0 0 1 .6-2.1a1.5 1.5 0 0 1 2.8 0a1.2 1.2 0 0 1 .6 2.1z"/><path d="M633.1 628.6a1.2 1.2 0 0 1 .6-2.1a1.5 1.5 0 0 1 2.8 0a1.2 1.2 0 0 1 .6 2.1z"/><path d="M546.8 649.6a1.2 1.2 0 0 1 .6-2.1a1.5 1.5 0 0 1 2.8 0a1.2 1.2 0 0 1 .6 2.1z"/><path d="M687.5 607.4a1.2 1.2 0 0 1 .6-2.1a1.5 1.5 0 0 1 2.8 0a1.2 1.2 0 0 1 .6 2.1z"/><path d="M745.6 573.2a1.2 1.2 0 0 1 .6-2.1a1.5 1.5 0 0 1 2.8 0a1.2 1.2 0 0 1 .6 2.1z"/><path d="M705.4 594.8a1.2 1.2 0 0 1 .6-2.1a1.5 1.5 0 0 1 2.8 0a1.2 1.2 0 0 1 .6 2.1z"/><path d="M632.6 630.1a1.2 1.2 0 0 1 .6-2.1a1.5 1.5 0 0 1 2.8 0a1.2 1.2 0 0 1 .6 2.1z"/><path d="M844.0 524.7a1.2 1.2 0 0 1 .6-2.1a1.5 1.5 0 0 1 2.8 0a1.2 1.2 0 0 1 .6 2.1z"/><path d="M743.4 574.1a1.2 1.2 0 0 1 .6-2.1a1.5 1.5 0 0 1 2.8 0a1.2 1.2 0 0 1 .6 2.1z"/><path d="M652.7 621.0a1.2 1.2 0 0 1 .6-2.1a1.5 1.5 0 0 1 2.8 0a1.2 1.2 0 0 1 .6 2.1z"/><path d="M728.2 579.9a1.2 1.2 0 0 1 .6-2.1a1.5 1.5 0 0 1 2.8 0a1.2 1.2 0 0 1 .6 2.1z"/><path d="M841.6 525.6a1.2 1.2 0 0 1 .6-2.1a1.5 1.5 0 0 1 2.8 0a1.2 1.2 0 0 1 .6 2.1z"/><path d="M532.0 650.5a1.2 1.2 0 0 1 .6-2.1a1.5 1.5 0 0 1 2.8 0a1.2 1.2 0 0 1 .6 2.1z"/><path d="M828.7 533.0a1.2 1.2 0 0 1 .6-2.1a1.5 1.5 0 0 1 2.8 0a1.2 1.2 0 0 1 .6 2.1z"/><path d="M671.9 610.8a1.2 1.2 0 0 1 .6-2.1a1.5 1.5 0 0 1 2.8 0a1.2 1.2 0 0 1 .6 2.1z"/><path d="M782.9 555.4a1.2 1.2 0 0 1 .6-2.1a1.5 1.5 0 0 1 2.8 0a1.2 1.2 0 0 1 .6 2.1z"/><path d="M615.0 637.1a1.2 1.2 0 0 1 .6-2.1a1.5 1.5 0 0 1 2.8 0a1.2 1.2 0 0 1 .6 2.1z"/><path d="M772.2 553.7a1.2 1.2 0 0 1 .6-2.1a1.5 1.5 0 0 1 2.8 0a1.2 1.2 0 0 1 .6 2.1z"/><path d="M524.8 651.8a1.2 1.2 0 0 1 .6-2.1a1.5 1.5 0 0 1 2.8 0a1.2 1.2 0 0 1 .6 2.1z"/><path d="M748.7 568.1a1.2 1.2 0 0 1 .6-2.1a1.5 1.5 0 0 1 2.8 0a1.2 1.2 0 0 1 .6 2.1z"/><path d="M557.4 649.3a1.2 1.2 0 0 1 .6-2.1a1.5 1.5 0 0 1 2.8 0a1.2 1.2 0 0 1 .6 2.1z"/><path d="M747.7 574.2a1.2 1.2 0 0 1 .6-2.1a1.5 1.5 0 0 1 2.8 0a1.2 1.2 0 0 1 .6 2.1z"/><path d="M724.1 579.4a1.2 1.2 0 0 1 .6-2.1a1.5 1.5 0 0 1 2.8 0a1.2 1.2 0 0 1 .6 2.1z"/><path d="M636.6 623.5a1.2 1.2 0 0 1 .6-2.1a1.5 1.5 0 0 1 2.8 0a1.2 1.2 0 0 1 .6 2.1z"/><path d="M667.9 612.8a1.2 1.2 0 0 1 .6-2.1a1.5 1.5 0 0 1 2.8 0a1.2 1.2 0 0 1 .6 2.1z"/><path d="M831.9 529.1a1.2 1.2 0 0 1 .6-2.1a1.5 1.5 0 0 1 2.8 0a1.2 1.2 0 0 1 .6 2.1z"/><path d="M602.8 641.4a1.2 1.2 0 0 1 .6-2.1a1.5 1.5 0 0 1 2.8 0a1.2 1.2 0 0 1 .6 2.1z"/><path d="M609.5 638.0a1.2 1.2 0 0 1 .6-2.1a1.5 1.5 0 0 1 2.8 0a1.2 1.2 0 0 1 .6 2.1z"/><path d="M753.1 572.1a1.2 1.2 0 0 1 .6-2.1a1.5 1.5 0 0 1 2.8 0a1.2 1.2 0 0 1 .6 2.1z"/><path d="M803.0 545.3a1.2 1.2 0 0 1 .6-2.1a1.5 1.5 0 0 1 2.8 0a1.2 1.2 0 0 1 .6 2.1z"/><path d="M775.8 560.2a1.2 1.2 0 0 1 .6-2.1a1.5 1.5 0 0 1 2.8 0a1.2 1.2 0 0 1 .6 2.1z"/><path d="M841.5 527.5a1.2 1.2 0 0 1 .6-2.1a1.5 1.5 0 0 1 2.8 0a1.2 1.2 0 0 1 .6 2.1z"/><path d="M837.0 525.5a1.2 1.2 0 0 1 .6-2.1a1.5 1.5 0 0 1 2.8 0a1.2 1.2 0 0 1 .6 2.1z"/><path d="M791.4 551.3a1.2 1.2 0 0 1 .6-2.1a1.5 1.5 0 0 1 2.8 0a1.2 1.2 0 0 1 .6 2.1z"/><path d="M655.6 619.5a1.2 1.2 0 0 1 .6-2.1a1.5 1.5 0 0 1 2.8 0a1.2 1.2 0 0 1 .6 2.1z"/><path d="M755.1 569.9a1.2 1.2 0 0 1 .6-2.1a1.5 1.5 0 0 1 2.8 0a1.2 1.2 0 0 1 .6 2.1z"/><path d="M710.3 600.9a1.2 1.2 0 0 1 .6-2.1a1.5 1.5 0 0 1 2.8 0a1.2 1.2 0 0 1 .6 2.1z"/><path d="M791.8 550.0a1.2 1.2 0 0 1 .6-2.1a1.5 1.5 0 0 1 2.8 0a1.2 1.2 0 0 1 .6 2.1z"/><path d="M724.2 580.5a1.2 1.2 0 0 1 .6-2.1a1.5 1.5 0 0 1 2.8 0a1.2 1.2 0 0 1 .6 2.1z"/><path d="M839.7 527.8a1.2 1.2 0 0 1 .6-2.1a1.5 1.5 0 0 1 2.8 0a1.2 1.2 0 0 1 .6 2.1z"/><path d="M711.7 588.3a1.2 1.2 0 0 1 .6-2.1a1.5 1.5 0 0 1 2.8 0a1.2 1.2 0 0 1 .6 2.1z"/><path d="M647.3 618.6a1.2 1.2 0 0 1 .6-2.1a1.5 1.5 0 0 1 2.8 0a1.2 1.2 0 0 1 .6 2.1z"/><path d="M727.9 579.7a1.2 1.2 0 0 1 .6-2.1a1.5 1.5 0 0 1 2.8 0a1.2 1.2 0 0 1 .6 2.1z"/><path d="M627.4 632.1a1.2 1.2 0 0 1 .6-2.1a1.5 1.5 0 0 1 2.8 0a1.2 1.2 0 0 1 .6 2.1z"/><path d="M713.7 592.4a1.2 1.2 0 0 1 .6-2.1a1.5 1.5 0 0 1 2.8 0a1.2 1.2 0 0 1 .6 2.1z"/><path d="M664.8 619.1a1.2 1.2 0 0 1 .6-2.1a1.5 1.5 0 0 1 2.8 0a1.2 1.2 0 0 1 .6 2.1z"/><path d="M620.5 637.1a1.2 1.2 0 0 1 .6-2.1a1.5 1.5 0 0 1 2.8 0a1.2 1.2 0 0 1 .6 2.1z"/><path d="M550.5 653.2a1.2 1.2 0 0 1 .6-2.1a1.5 1.5 0 0 1 2.8 0a1.2 1.2 0 0 1 .6 2.1z"/><path d="M825.6 533.0a1.2 1.2 0 0 1 .6-2.1a1.5 1.5 0 0 1 2.8 0a1.2 1.2 0 0 1 .6 2.1z"/><path d="M675.0 611.7a1.2 1.2 0 0 1 .6-2.1a1.5 1.5 0 0 1 2.8 0a1.2 1.2 0 0 1 .6 2.1z"/><path d="M747.5 569.5a1.2 1.2 0 0 1 .6-2.1a1.5 1.5 0 0 1 2.8 0a1.2 1.2 0 0 1 .6 2.1z"/><path d="M523.2 653.9a1.2 1.2 0 0 1 .6-2.1a1.5 1.5 0 0 1 2.8 0a1.2 1.2 0 0 1 .6 2.1z"/><path d="M676.1 611.3a1.2 1.2 0 0 1 .6-2.1a1.5 1.5 0 0 1 2.8 0a1.2 1.2 0 0 1 .6 2.1z"/><path d="M571.1 650.8a1.2 1.2 0 0 1 .6-2.1a1.5 1.5 0 0 1 2.8 0a1.2 1.2 0 0 1 .6 2.1z"/><path d="M719.5 585.6a1.2 1.2 0 0 1 .6-2.1a1.5 1.5 0 0 1 2.8 0a1.2 1.2 0 0 1 .6 2.1z"/><path d="M743.9 574.9a1.2 1.2 0 0 1 .6-2.1a1.5 1.5 0 0 1 2.8 0a1.2 1.2 0 0 1 .6 2.1z"/><path d="M662.0 615.2a1.2 1.2 0 0 1 .6-2.1a1.5 1.5 0 0 1 2.8 0a1.2 1.2 0 0 1 .6 2.1z"/><path d="M578.5 652.7a1.2 1.2 0 0 1 .6-2.1a1.5 1.5 0 0 1 2.8 0a1.2 1.2 0 0 1 .6 2.1z"/><path d="M789.3 548.2a1.2 1.2 0 0 1 .6-2.1a1.5 1.5 0 0 1 2.8 0a1.2 1.2 0 0 1 .6 2.1z"/><path d="M846.9 527.4a1.2 1.2 0 0 1 .6-2.1a1.5 1.5 0 0 1 2.8 0a1.2 1.2 0 0 1 .6 2.1z"/><path d="M571.5 648.1a1.2 1.2 0 0 1 .6-2.1a1.5 1.5 0 0 1 2.8 0a1.2 1.2 0 0 1 .6 2.1z"/><path d="M666.5 614.7a1.2 1.2 0 0 1 .6-2.1a1.5 1.5 0 0 1 2.8 0a1.2 1.2 0 0 1 .6 2.1z"/><path d="M752.3 568.2a1.2 1.2 0 0 1 .6-2.1a1.5 1.5 0 0 1 2.8 0a1.2 1.2 0 0 1 .6 2.1z"/><path d="M595.3 645.8a1.2 1.2 0 0 1 .6-2.1a1.5 1.5 0 0 1 2.8 0a1.2 1.2 0 0 1 .6 2.1z"/><path d="M719.0 589.6a1.2 1.2 0 0 1 .6-2.1a1.5 1.5 0 0 1 2.8 0a1.2 1.2 0 0 1 .6 2.1z"/><path d="M611.4 638.3a1.2 1.2 0 0 1 .6-2.1a1.5 1.5 0 0 1 2.8 0a1.2 1.2 0 0 1 .6 2.1z"/><path d="M515.9 653.1a1.2 1.2 0 0 1 .6-2.1a1.5 1.5 0 0 1 2.8 0a1.2 1.2 0 0 1 .6 2.1z"/><path d="M743.4 573.0a1.2 1.2 0 0 1 .6-2.1a1.5 1.5 0 0 1 2.8 0a1.2 1.2 0 0 1 .6 2.1z"/><path d="M692.7 603.5a1.2 1.2 0 0 1 .6-2.1a1.5 1.5 0 0 1 2.8 0a1.2 1.2 0 0 1 .6 2.1z"/><path d="M811.0 545.6a1.2 1.2 0 0 1 .6-2.1a1.5 1.5 0 0 1 2.8 0a1.2 1.2 0 0 1 .6 2.1z"/><path d="M764.3 562.5a1.2 1.2 0 0 1 .6-2.1a1.5 1.5 0 0 1 2.8 0a1.2 1.2 0 0 1 .6 2.1z"/><path d="M709.3 588.6a1.2 1.2 0 0 1 .6-2.1a1.5 1.5 0 0 1 2.8 0a1.2 1.2 0 0 1 .6 2.1z"/><path d="M700.5 601.2a1.2 1.2 0 0 1 .6-2.1a1.5 1.5 0 0 1 2.8 0a1.2 1.2 0 0 1 .6 2.1z"/><path d="M626.0 632.1a1.2 1.2 0 0 1 .6-2.1a1.5 1.5 0 0 1 2.8 0a1.2 1.2 0 0 1 .6 2.1z"/><path d="M703.4 596.4a1.2 1.2 0 0 1 .6-2.1a1.5 1.5 0 0 1 2.8 0a1.2 1.2 0 0 1 .6 2.1z"/><path d="M744.7 573.5a1.2 1.2 0 0 1 .6-2.1a1.5 1.5 0 0 1 2.8 0a1.2 1.2 0 0 1 .6 2.1z"/><path d="M695.9 602.3a1.2 1.2 0 0 1 .6-2.1a1.5 1.5 0 0 1 2.8 0a1.2 1.2 0 0 1 .6 2.1z"/><path d="M821.5 537.3a1.2 1.2 0 0 1 .6-2.1a1.5 1.5 0 0 1 2.8 0a1.2 1.2 0 0 1 .6 2.1z"/><path d="M545.3 639.3a1.2 1.2 0 0 1 .6-2.1a1.5 1.5 0 0 1 2.8 0a1.2 1.2 0 0 1 .6 2.1z"/><path d="M825.4 540.2a1.2 1.2 0 0 1 .6-2.1a1.5 1.5 0 0 1 2.8 0a1.2 1.2 0 0 1 .6 2.1z"/><path d="M741.1 591.0a1.2 1.2 0 0 1 .6-2.1a1.5 1.5 0 0 1 2.8 0a1.2 1.2 0 0 1 .6 2.1z"/><path d="M683.8 609.2a1.2 1.2 0 0 1 .6-2.1a1.5 1.5 0 0 1 2.8 0a1.2 1.2 0 0 1 .6 2.1z"/><path d="M648.0 616.8a1.2 1.2 0 0 1 .6-2.1a1.5 1.5 0 0 1 2.8 0a1.2 1.2 0 0 1 .6 2.1z"/><path d="M636.2 620.5a1.2 1.2 0 0 1 .6-2.1a1.5 1.5 0 0 1 2.8 0a1.2 1.2 0 0 1 .6 2.1z"/><path d="M700.5 608.5a1.2 1.2 0 0 1 .6-2.1a1.5 1.5 0 0 1 2.8 0a1.2 1.2 0 0 1 .6 2.1z"/><path d="M745.6 585.7a1.2 1.2 0 0 1 .6-2.1a1.5 1.5 0 0 1 2.8 0a1.2 1.2 0 0 1 .6 2.1z"/><path d="M830.3 534.5a1.2 1.2 0 0 1 .6-2.1a1.5 1.5 0 0 1 2.8 0a1.2 1.2 0 0 1 .6 2.1z"/><path d="M700.4 603.4a1.2 1.2 0 0 1 .6-2.1a1.5 1.5 0 0 1 2.8 0a1.2 1.2 0 0 1 .6 2.1z"/><path d="M776.7 561.5a1.2 1.2 0 0 1 .6-2.1a1.5 1.5 0 0 1 2.8 0a1.2 1.2 0 0 1 .6 2.1z"/><path d="M717.4 601.4a1.2 1.2 0 0 1 .6-2.1a1.5 1.5 0 0 1 2.8 0a1.2 1.2 0 0 1 .6 2.1z"/><path d="M522.3 640.9a1.2 1.2 0 0 1 .6-2.1a1.5 1.5 0 0 1 2.8 0a1.2 1.2 0 0 1 .6 2.1z"/><path d="M784.9 558.7a1.2 1.2 0 0 1 .6-2.1a1.5 1.5 0 0 1 2.8 0a1.2 1.2 0 0 1 .6 2.1z"/><path d="M700.7 605.0a1.2 1.2 0 0 1 .6-2.1a1.5 1.5 0 0 1 2.8 0a1.2 1.2 0 0 1 .6 2.1z"/><path d="M672.7 612.3a1.2 1.2 0 0 1 .6-2.1a1.5 1.5 0 0 1 2.8 0a1.2 1.2 0 0 1 .6 2.1z"/><path d="M769.7 566.8a1.2 1.2 0 0 1 .6-2.1a1.5 1.5 0 0 1 2.8 0a1.2 1.2 0 0 1 .6 2.1z"/><path d="M522.0 646.4a1.2 1.2 0 0 1 .6-2.1a1.5 1.5 0 0 1 2.8 0a1.2 1.2 0 0 1 .6 2.1z"/><path d="M552.1 638.6a1.2 1.2 0 0 1 .6-2.1a1.5 1.5 0 0 1 2.8 0a1.2 1.2 0 0 1 .6 2.1z"/><path d="M656.2 615.9a1.2 1.2 0 0 1 .6-2.1a1.5 1.5 0 0 1 2.8 0a1.2 1.2 0 0 1 .6 2.1z"/><path d="M602.1 626.8a1.2 1.2 0 0 1 .6-2.1a1.5 1.5 0 0 1 2.8 0a1.2 1.2 0 0 1 .6 2.1z"/><path d="M631.4 620.9a1.2 1.2 0 0 1 .6-2.1a1.5 1.5 0 0 1 2.8 0a1.2 1.2 0 0 1 .6 2.1z"/><path d="M602.1 626.7a1.2 1.2 0 0 1 .6-2.1a1.5 1.5 0 0 1 2.8 0a1.2 1.2 0 0 1 .6 2.1z"/><path d="M798.6 550.6a1.2 1.2 0 0 1 .6-2.1a1.5 1.5 0 0 1 2.8 0a1.2 1.2 0 0 1 .6 2.1z"/><path d="M809.8 546.4a1.2 1.2 0 0 1 .6-2.1a1.5 1.5 0 0 1 2.8 0a1.2 1.2 0 0 1 .6 2.1z"/><path d="M538.4 641.3a1.2 1.2 0 0 1 .6-2.1a1.5 1.5 0 0 1 2.8 0a1.2 1.2 0 0 1 .6 2.1z"/><path d="M739.5 585.3a1.2 1.2 0 0 1 .6-2.1a1.5 1.5 0 0 1 2.8 0a1.2 1.2 0 0 1 .6 2.1z"/><path d="M820.7 545.0a1.2 1.2 0 0 1 .6-2.1a1.5 1.5 0 0 1 2.8 0a1.2 1.2 0 0 1 .6 2.1z"/><path d="M769.7 566.0a1.2 1.2 0 0 1 .6-2.1a1.5 1.5 0 0 1 2.8 0a1.2 1.2 0 0 1 .6 2.1z"/><path d="M738.8 593.3a1.2 1.2 0 0 1 .6-2.1a1.5 1.5 0 0 1 2.8 0a1.2 1.2 0 0 1 .6 2.1z"/><path d="M832.3 536.7a1.2 1.2 0 0 1 .6-2.1a1.5 1.5 0 0 1 2.8 0a1.2 1.2 0 0 1 .6 2.1z"/><path d="M839.8 531.9a1.2 1.2 0 0 1 .6-2.1a1.5 1.5 0 0 1 2.8 0a1.2 1.2 0 0 1 .6 2.1z"/><path d="M677.9 609.0a1.2 1.2 0 0 1 .6-2.1a1.5 1.5 0 0 1 2.8 0a1.2 1.2 0 0 1 .6 2.1z"/><path d="M822.6 539.1a1.2 1.2 0 0 1 .6-2.1a1.5 1.5 0 0 1 2.8 0a1.2 1.2 0 0 1 .6 2.1z"/><path d="M753.3 576.8a1.2 1.2 0 0 1 .6-2.1a1.5 1.5 0 0 1 2.8 0a1.2 1.2 0 0 1 .6 2.1z"/><path d="M824.7 540.8a1.2 1.2 0 0 1 .6-2.1a1.5 1.5 0 0 1 2.8 0a1.2 1.2 0 0 1 .6 2.1z"/><path d="M777.8 562.7a1.2 1.2 0 0 1 .6-2.1a1.5 1.5 0 0 1 2.8 0a1.2 1.2 0 0 1 .6 2.1z"/><path d="M724.3 597.4a1.2 1.2 0 0 1 .6-2.1a1.5 1.5 0 0 1 2.8 0a1.2 1.2 0 0 1 .6 2.1z"/><path d="M742.1 588.1a1.2 1.2 0 0 1 .6-2.1a1.5 1.5 0 0 1 2.8 0a1.2 1.2 0 0 1 .6 2.1z"/><path d="M742.6 592.9a1.2 1.2 0 0 1 .6-2.1a1.5 1.5 0 0 1 2.8 0a1.2 1.2 0 0 1 .6 2.1z"/><path d="M719.6 599.9a1.2 1.2 0 0 1 .6-2.1a1.5 1.5 0 0 1 2.8 0a1.2 1.2 0 0 1 .6 2.1z"/><path d="M612.5 624.2a1.2 1.2 0 0 1 .6-2.1a1.5 1.5 0 0 1 2.8 0a1.2 1.2 0 0 1 .6 2.1z"/><path d="M558.6 637.3a1.2 1.2 0 0 1 .6-2.1a1.5 1.5 0 0 1 2.8 0a1.2 1.2 0 0 1 .6 2.1z"/><path d="M763.8 571.7a1.2 1.2 0 0 1 .6-2.1a1.5 1.5 0 0 1 2.8 0a1.2 1.2 0 0 1 .6 2.1z"/><path d="M823.9 539.7a1.2 1.2 0 0 1 .6-2.1a1.5 1.5 0 0 1 2.8 0a1.2 1.2 0 0 1 .6 2.1z"/><path d="M670.8 610.6a1.2 1.2 0 0 1 .6-2.1a1.5 1.5 0 0 1 2.8 0a1.2 1.2 0 0 1 .6 2.1z"/><path d="M766.7 574.5a1.2 1.2 0 0 1 .6-2.1a1.5 1.5 0 0 1 2.8 0a1.2 1.2 0 0 1 .6 2.1z"/><path d="M755.6 582.5a1.2 1.2 0 0 1 .6-2.1a1.5 1.5 0 0 1 2.8 0a1.2 1.2 0 0 1 .6 2.1z"/><path d="M553.8 635.4a1.2 1.2 0 0 1 .6-2.1a1.5 1.5 0 0 1 2.8 0a1.2 1.2 0 0 1 .6 2.1z"/><path d="M564.8 631.5a1.2 1.2 0 0 1 .6-2.1a1.5 1.5 0 0 1 2.8 0a1.2 1.2 0 0 1 .6 2.1z"/><path d="M772.1 562.4a1.2 1.2 0 0 1 .6-2.1a1.5 1.5 0 0 1 2.8 0a1.2 1.2 0 0 1 .6 2.1z"/><path d="M756.4 578.4a1.2 1.2 0 0 1 .6-2.1a1.5 1.5 0 0 1 2.8 0a1.2 1.2 0 0 1 .6 2.1z"/><path d="M673.6 610.6a1.2 1.2 0 0 1 .6-2.1a1.5 1.5 0 0 1 2.8 0a1.2 1.2 0 0 1 .6 2.1z"/><path d="M573.9 630.9a1.2 1.2 0 0 1 .6-2.1a1.5 1.5 0 0 1 2.8 0a1.2 1.2 0 0 1 .6 2.1z"/><path d="M777.7 556.6a1.2 1.2 0 0 1 .6-2.1a1.5 1.5 0 0 1 2.8 0a1.2 1.2 0 0 1 .6 2.1z"/><path d="M769.6 567.1a1.2 1.2 0 0 1 .6-2.1a1.5 1.5 0 0 1 2.8 0a1.2 1.2 0 0 1 .6 2.1z"/><path d="M592.2 627.1a1.2 1.2 0 0 1 .6-2.1a1.5 1.5 0 0 1 2.8 0a1.2 1.2 0 0 1 .6 2.1z"/><path d="M723.7 598.2a1.2 1.2 0 0 1 .6-2.1a1.5 1.5 0 0 1 2.8 0a1.2 1.2 0 0 1 .6 2.1z"/><path d="M851.0 531.4a1.2 1.2 0 0 1 .6-2.1a1.5 1.5 0 0 1 2.8 0a1.2 1.2 0 0 1 .6 2.1z"/><path d="M697.8 606.2a1.2 1.2 0 0 1 .6-2.1a1.5 1.5 0 0 1 2.8 0a1.2 1.2 0 0 1 .6 2.1z"/><path d="M642.2 617.5a1.2 1.2 0 0 1 .6-2.1a1.5 1.5 0 0 1 2.8 0a1.2 1.2 0 0 1 .6 2.1z"/><path d="M810.9 546.9a1.2 1.2 0 0 1 .6-2.1a1.5 1.5 0 0 1 2.8 0a1.2 1.2 0 0 1 .6 2.1z"/><path d="M820.9 543.5a1.2 1.2 0 0 1 .6-2.1a1.5 1.5 0 0 1 2.8 0a1.2 1.2 0 0 1 .6 2.1z"/><path d="M801.0 554.8a1.2 1.2 0 0 1 .6-2.1a1.5 1.5 0 0 1 2.8 0a1.2 1.2 0 0 1 .6 2.1z"/><path d="M826.2 537.3a1.2 1.2 0 0 1 .6-2.1a1.5 1.5 0 0 1 2.8 0a1.2 1.2 0 0 1 .6 2.1z"/><path d="M785.5 560.2a1.2 1.2 0 0 1 .6-2.1a1.5 1.5 0 0 1 2.8 0a1.2 1.2 0 0 1 .6 2.1z"/><path d="M812.0 546.6a1.2 1.2 0 0 1 .6-2.1a1.5 1.5 0 0 1 2.8 0a1.2 1.2 0 0 1 .6 2.1z"/><path d="M831.0 537.3a1.2 1.2 0 0 1 .6-2.1a1.5 1.5 0 0 1 2.8 0a1.2 1.2 0 0 1 .6 2.1z"/><path d="M817.9 539.6a1.2 1.2 0 0 1 .6-2.1a1.5 1.5 0 0 1 2.8 0a1.2 1.2 0 0 1 .6 2.1z"/><path d="M815.8 547.5a1.2 1.2 0 0 1 .6-2.1a1.5 1.5 0 0 1 2.8 0a1.2 1.2 0 0 1 .6 2.1z"/><path d="M659.7 614.4a1.2 1.2 0 0 1 .6-2.1a1.5 1.5 0 0 1 2.8 0a1.2 1.2 0 0 1 .6 2.1z"/><path d="M789.7 552.9a1.2 1.2 0 0 1 .6-2.1a1.5 1.5 0 0 1 2.8 0a1.2 1.2 0 0 1 .6 2.1z"/><path d="M787.4 556.8a1.2 1.2 0 0 1 .6-2.1a1.5 1.5 0 0 1 2.8 0a1.2 1.2 0 0 1 .6 2.1z"/><path d="M739.6 590.9a1.2 1.2 0 0 1 .6-2.1a1.5 1.5 0 0 1 2.8 0a1.2 1.2 0 0 1 .6 2.1z"/><path d="M631.0 623.2a1.2 1.2 0 0 1 .6-2.1a1.5 1.5 0 0 1 2.8 0a1.2 1.2 0 0 1 .6 2.1z"/><path d="M678.1 610.3a1.2 1.2 0 0 1 .6-2.1a1.5 1.5 0 0 1 2.8 0a1.2 1.2 0 0 1 .6 2.1z"/><path d="M531.8 639.6a1.2 1.2 0 0 1 .6-2.1a1.5 1.5 0 0 1 2.8 0a1.2 1.2 0 0 1 .6 2.1z"/><path d="M531.9 640.7a1.2 1.2 0 0 1 .6-2.1a1.5 1.5 0 0 1 2.8 0a1.2 1.2 0 0 1 .6 2.1z"/><path d="M617.9 623.3a1.2 1.2 0 0 1 .6-2.1a1.5 1.5 0 0 1 2.8 0a1.2 1.2 0 0 1 .6 2.1z"/><path d="M567.5 632.2a1.2 1.2 0 0 1 .6-2.1a1.5 1.5 0 0 1 2.8 0a1.2 1.2 0 0 1 .6 2.1z"/><path d="M682.3 610.1a1.2 1.2 0 0 1 .6-2.1a1.5 1.5 0 0 1 2.8 0a1.2 1.2 0 0 1 .6 2.1z"/><path d="M759.1 573.7a1.2 1.2 0 0 1 .6-2.1a1.5 1.5 0 0 1 2.8 0a1.2 1.2 0 0 1 .6 2.1z"/><path d="M642.6 617.7a1.2 1.2 0 0 1 .6-2.1a1.5 1.5 0 0 1 2.8 0a1.2 1.2 0 0 1 .6 2.1z"/><path d="M638.9 620.4a1.2 1.2 0 0 1 .6-2.1a1.5 1.5 0 0 1 2.8 0a1.2 1.2 0 0 1 .6 2.1z"/><path d="M544.2 637.9a1.2 1.2 0 0 1 .6-2.1a1.5 1.5 0 0 1 2.8 0a1.2 1.2 0 0 1 .6 2.1z"/><path d="M605.9 624.4a1.2 1.2 0 0 1 .6-2.1a1.5 1.5 0 0 1 2.8 0a1.2 1.2 0 0 1 .6 2.1z"/><path d="M657.2 617.5a1.2 1.2 0 0 1 .6-2.1a1.5 1.5 0 0 1 2.8 0a1.2 1.2 0 0 1 .6 2.1z"/><path d="M816.3 546.6a1.2 1.2 0 0 1 .6-2.1a1.5 1.5 0 0 1 2.8 0a1.2 1.2 0 0 1 .6 2.1z"/><path d="M703.0 601.2a1.2 1.2 0 0 1 .6-2.1a1.5 1.5 0 0 1 2.8 0a1.2 1.2 0 0 1 .6 2.1z"/><path d="M853.3 530.1a1.2 1.2 0 0 1 .6-2.1a1.5 1.5 0 0 1 2.8 0a1.2 1.2 0 0 1 .6 2.1z"/><path d="M794.4 552.8a1.2 1.2 0 0 1 .6-2.1a1.5 1.5 0 0 1 2.8 0a1.2 1.2 0 0 1 .6 2.1z"/><path d="M844.1 528.0a1.2 1.2 0 0 1 .6-2.1a1.5 1.5 0 0 1 2.8 0a1.2 1.2 0 0 1 .6 2.1z"/><path d="M725.8 597.2a1.2 1.2 0 0 1 .6-2.1a1.5 1.5 0 0 1 2.8 0a1.2 1.2 0 0 1 .6 2.1z"/><path d="M647.5 613.9a1.2 1.2 0 0 1 .6-2.1a1.5 1.5 0 0 1 2.8 0a1.2 1.2 0 0 1 .6 2.1z"/><path d="M814.0 544.3a1.2 1.2 0 0 1 .6-2.1a1.5 1.5 0 0 1 2.8 0a1.2 1.2 0 0 1 .6 2.1z"/><path d="M756.1 572.7a1.2 1.2 0 0 1 .6-2.1a1.5 1.5 0 0 1 2.8 0a1.2 1.2 0 0 1 .6 2.1z"/><path d="M758.6 581.6a1.2 1.2 0 0 1 .6-2.1a1.5 1.5 0 0 1 2.8 0a1.2 1.2 0 0 1 .6 2.1z"/><path d="M818.9 544.5a1.2 1.2 0 0 1 .6-2.1a1.5 1.5 0 0 1 2.8 0a1.2 1.2 0 0 1 .6 2.1z"/><path d="M584.7 629.4a1.2 1.2 0 0 1 .6-2.1a1.5 1.5 0 0 1 2.8 0a1.2 1.2 0 0 1 .6 2.1z"/><path d="M804.6 546.6a1.2 1.2 0 0 1 .6-2.1a1.5 1.5 0 0 1 2.8 0a1.2 1.2 0 0 1 .6 2.1z"/><path d="M797.7 555.6a1.2 1.2 0 0 1 .6-2.1a1.5 1.5 0 0 1 2.8 0a1.2 1.2 0 0 1 .6 2.1z"/><path d="M536.4 639.3a1.2 1.2 0 0 1 .6-2.1a1.5 1.5 0 0 1 2.8 0a1.2 1.2 0 0 1 .6 2.1z"/><path d="M751.4 584.5a1.2 1.2 0 0 1 .6-2.1a1.5 1.5 0 0 1 2.8 0a1.2 1.2 0 0 1 .6 2.1z"/><path d="M579.1 630.4a1.2 1.2 0 0 1 .6-2.1a1.5 1.5 0 0 1 2.8 0a1.2 1.2 0 0 1 .6 2.1z"/><path d="M774.5 562.8a1.2 1.2 0 0 1 .6-2.1a1.5 1.5 0 0 1 2.8 0a1.2 1.2 0 0 1 .6 2.1z"/><path d="M777.1 560.5a1.2 1.2 0 0 1 .6-2.1a1.5 1.5 0 0 1 2.8 0a1.2 1.2 0 0 1 .6 2.1z"/><path d="M550.4 640.2a1.2 1.2 0 0 1 .6-2.1a1.5 1.5 0 0 1 2.8 0a1.2 1.2 0 0 1 .6 2.1z"/><path d="M780.1 568.5a1.2 1.2 0 0 1 .6-2.1a1.5 1.5 0 0 1 2.8 0a1.2 1.2 0 0 1 .6 2.1z"/><path d="M521.9 641.7a1.2 1.2 0 0 1 .6-2.1a1.5 1.5 0 0 1 2.8 0a1.2 1.2 0 0 1 .6 2.1z"/></g>
<g fill="#262626" fill-opacity="0.85"><circle cx="596.2" cy="628.0" r="1.85"/><circle cx="560.8" cy="636.5" r="1.85"/><circle cx="582.4" cy="632.9" r="1.85"/><circle cx="640.4" cy="620.5" r="1.85"/><circle cx="553.4" cy="637.0" r="1.85"/><circle cx="560.1" cy="636.5" r="1.85"/><circle cx="553.4" cy="637.0" r="1.85"/><circle cx="538.8" cy="640.4" r="1.85"/><circle cx="608.9" cy="626.0" r="1.85"/><circle cx="629.4" cy="620.9" r="1.85"/><circle cx="652.4" cy="617.2" r="1.85"/><circle cx="571.1" cy="632.6" r="1.85"/><circle cx="556.3" cy="636.8" r="1.85"/><circle cx="569.7" cy="634.3" r="1.85"/><circle cx="552.4" cy="637.3" r="1.85"/><circle cx="599.1" cy="629.9" r="1.85"/><circle cx="609.6" cy="626.2" r="1.85"/><circle cx="539.5" cy="640.3" r="1.85"/><circle cx="661.7" cy="615.6" r="1.85"/><circle cx="532.0" cy="642.8" r="1.85"/><circle cx="564.0" cy="635.2" r="1.85"/><circle cx="613.1" cy="625.6" r="1.85"/><circle cx="620.3" cy="624.9" r="1.85"/><circle cx="618.0" cy="623.2" r="1.85"/><circle cx="659.4" cy="613.8" r="1.85"/><circle cx="554.5" cy="635.9" r="1.85"/><circle cx="615.3" cy="624.6" r="1.85"/><circle cx="579.8" cy="631.4" r="1.85"/><circle cx="667.4" cy="612.2" r="1.85"/><circle cx="660.8" cy="614.2" r="1.85"/><circle cx="626.8" cy="622.0" r="1.85"/><circle cx="612.5" cy="626.0" r="1.85"/><circle cx="635.0" cy="621.0" r="1.85"/><circle cx="625.3" cy="622.0" r="1.85"/><circle cx="591.1" cy="629.9" r="1.85"/><circle cx="528.9" cy="643.8" r="1.85"/><circle cx="650.4" cy="618.5" r="1.85"/><circle cx="524.5" cy="642.5" r="1.85"/><circle cx="542.4" cy="641.1" r="1.85"/><circle cx="587.6" cy="630.4" r="1.85"/><circle cx="650.6" cy="618.0" r="1.85"/><circle cx="522.7" cy="645.3" r="1.85"/><circle cx="523.7" cy="643.4" r="1.85"/><circle cx="666.4" cy="614.9" r="1.85"/><circle cx="580.9" cy="630.6" r="1.85"/><circle cx="531.3" cy="641.4" r="1.85"/><circle cx="546.7" cy="640.1" r="1.85"/><circle cx="626.9" cy="622.6" r="1.85"/><circle cx="561.9" cy="634.7" r="1.85"/><circle cx="567.1" cy="633.8" r="1.85"/><circle cx="540.0" cy="640.7" r="1.85"/><circle cx="621.8" cy="623.6" r="1.85"/><circle cx="651.4" cy="616.3" r="1.85"/><circle cx="585.1" cy="630.8" r="1.85"/><circle cx="633.4" cy="619.7" r="1.85"/><circle cx="650.1" cy="617.5" r="1.85"/><circle cx="589.8" cy="629.0" r="1.85"/><circle cx="556.2" cy="634.9" r="1.85"/><circle cx="561.4" cy="634.4" r="1.85"/><circle cx="610.5" cy="626.1" r="1.85"/><circle cx="558.8" cy="636.0" r="1.85"/><circle cx="578.8" cy="634.0" r="1.85"/><circle cx="548.6" cy="639.0" r="1.85"/><circle cx="588.1" cy="630.0" r="1.85"/><circle cx="642.0" cy="620.3" r="1.85"/><circle cx="654.5" cy="616.6" r="1.85"/><circle cx="621.9" cy="622.8" r="1.85"/><circle cx="584.0" cy="630.6" r="1.85"/><circle cx="557.0" cy="636.7" r="1.85"/><circle cx="603.6" cy="625.5" r="1.85"/><circle cx="650.0" cy="618.5" r="1.85"/><circle cx="591.8" cy="629.1" r="1.85"/><circle cx="551.1" cy="637.8" r="1.85"/><circle cx="531.6" cy="641.8" r="1.85"/><circle cx="526.1" cy="642.9" r="1.85"/><circle cx="625.5" cy="623.6" r="1.85"/><circle cx="601.7" cy="626.4" r="1.85"/><circle cx="666.4" cy="613.4" r="1.85"/><circle cx="521.5" cy="644.4" r="1.85"/><circle cx="582.2" cy="630.4" r="1.85"/><circle cx="557.6" cy="635.8" r="1.85"/><circle cx="644.0" cy="619.4" r="1.85"/><circle cx="555.5" cy="636.6" r="1.85"/><circle cx="651.7" cy="618.0" r="1.85"/><circle cx="655.3" cy="616.3" r="1.85"/><circle cx="614.2" cy="625.5" r="1.85"/><circle cx="570.5" cy="633.9" r="1.85"/><circle cx="628.3" cy="621.5" r="1.85"/><circle cx="617.1" cy="622.4" r="1.85"/><circle cx="668.4" cy="615.6" r="1.85"/><circle cx="653.5" cy="617.4" r="1.85"/><circle cx="640.3" cy="620.3" r="1.85"/><circle cx="536.5" cy="641.5" r="1.85"/><circle cx="525.4" cy="642.5" r="1.85"/><circle cx="565.3" cy="634.2" r="1.85"/><circle cx="648.5" cy="618.2" r="1.85"/><circle cx="661.7" cy="615.7" r="1.85"/><circle cx="605.1" cy="626.3" r="1.85"/><circle cx="654.7" cy="619.3" r="1.85"/><circle cx="522.7" cy="644.1" r="1.85"/><circle cx="578.0" cy="631.7" r="1.85"/><circle cx="589.7" cy="630.1" r="1.85"/><circle cx="592.8" cy="628.5" r="1.85"/><circle cx="656.2" cy="616.2" r="1.85"/><circle cx="665.5" cy="615.0" r="1.85"/><circle cx="608.0" cy="625.2" r="1.85"/><circle cx="529.7" cy="642.7" r="1.85"/><circle cx="522.8" cy="642.8" r="1.85"/><circle cx="610.2" cy="626.9" r="1.85"/><circle cx="532.8" cy="642.2" r="1.85"/></g>
<g fill="#f218f0" fill-opacity="0.92"><circle cx="806.3" cy="536.7" r="1.85"/><circle cx="774.8" cy="547.4" r="1.85"/><circle cx="679.2" cy="602.8" r="1.85"/><circle cx="747.0" cy="568.1" r="1.85"/><circle cx="748.2" cy="573.0" r="1.85"/><circle cx="735.3" cy="572.0" r="1.85"/><circle cx="781.2" cy="545.0" r="1.85"/><circle cx="688.4" cy="595.6" r="1.85"/><circle cx="675.1" cy="611.0" r="1.85"/><circle cx="747.1" cy="569.1" r="1.85"/><circle cx="724.9" cy="576.2" r="1.85"/><circle cx="693.9" cy="595.8" r="1.85"/><circle cx="693.7" cy="593.9" r="1.85"/><circle cx="696.4" cy="593.4" r="1.85"/><circle cx="764.8" cy="555.3" r="1.85"/><circle cx="762.9" cy="557.3" r="1.85"/><circle cx="770.1" cy="556.5" r="1.85"/><circle cx="672.1" cy="599.9" r="1.85"/><circle cx="734.7" cy="574.3" r="1.85"/><circle cx="751.4" cy="573.8" r="1.85"/><circle cx="760.4" cy="568.9" r="1.85"/><circle cx="688.2" cy="600.5" r="1.85"/><circle cx="769.0" cy="555.3" r="1.85"/><circle cx="710.6" cy="591.9" r="1.85"/><circle cx="742.3" cy="575.9" r="1.85"/><circle cx="736.5" cy="579.9" r="1.85"/><circle cx="730.5" cy="580.0" r="1.85"/><circle cx="711.5" cy="592.4" r="1.85"/><circle cx="703.2" cy="589.6" r="1.85"/><circle cx="810.5" cy="535.7" r="1.85"/><circle cx="821.4" cy="525.7" r="1.85"/><circle cx="738.8" cy="572.2" r="1.85"/><circle cx="675.0" cy="606.6" r="1.85"/><circle cx="761.4" cy="563.0" r="1.85"/><circle cx="680.0" cy="602.5" r="1.85"/><circle cx="707.8" cy="591.4" r="1.85"/><circle cx="715.7" cy="583.0" r="1.85"/><circle cx="711.1" cy="584.7" r="1.85"/><circle cx="745.3" cy="572.3" r="1.85"/><circle cx="681.5" cy="603.5" r="1.85"/><circle cx="750.1" cy="565.7" r="1.85"/><circle cx="721.2" cy="580.4" r="1.85"/><circle cx="844.6" cy="527.8" r="1.85"/><circle cx="792.8" cy="540.6" r="1.85"/><circle cx="697.7" cy="592.6" r="1.85"/><circle cx="767.2" cy="560.9" r="1.85"/><circle cx="799.5" cy="543.6" r="1.85"/><circle cx="762.0" cy="558.2" r="1.85"/><circle cx="787.4" cy="539.0" r="1.85"/><circle cx="792.5" cy="546.9" r="1.85"/><circle cx="758.7" cy="570.0" r="1.85"/><circle cx="692.7" cy="603.6" r="1.85"/><circle cx="730.8" cy="575.3" r="1.85"/><circle cx="779.4" cy="548.3" r="1.85"/><circle cx="703.2" cy="591.5" r="1.85"/><circle cx="836.3" cy="526.1" r="1.85"/><circle cx="715.3" cy="585.0" r="1.85"/><circle cx="690.6" cy="598.5" r="1.85"/><circle cx="712.7" cy="583.0" r="1.85"/><circle cx="759.8" cy="565.7" r="1.85"/><circle cx="812.4" cy="532.5" r="1.85"/><circle cx="703.2" cy="586.8" r="1.85"/><circle cx="847.3" cy="526.0" r="1.85"/><circle cx="716.2" cy="587.2" r="1.85"/><circle cx="845.7" cy="525.0" r="1.85"/><circle cx="828.6" cy="529.5" r="1.85"/><circle cx="721.1" cy="579.5" r="1.85"/><circle cx="700.7" cy="589.8" r="1.85"/><circle cx="761.0" cy="562.5" r="1.85"/><circle cx="686.8" cy="598.3" r="1.85"/></g>
<g fill="#f6c98a" fill-opacity="0.92"><path d="M676.9 604.8q1.05-.8 2.1.3q1.05-1.1 2.1-.3l-2.1 3z"/><path d="M677.5 602.3q1.05-.8 2.1.3q1.05-1.1 2.1-.3l-2.1 3z"/><path d="M650.1 613.7q1.05-.8 2.1.3q1.05-1.1 2.1-.3l-2.1 3z"/><path d="M656.5 610.1q1.05-.8 2.1.3q1.05-1.1 2.1-.3l-2.1 3z"/><path d="M663.5 609.5q1.05-.8 2.1.3q1.05-1.1 2.1-.3l-2.1 3z"/><path d="M660.0 605.8q1.05-.8 2.1.3q1.05-1.1 2.1-.3l-2.1 3z"/><path d="M667.7 609.6q1.05-.8 2.1.3q1.05-1.1 2.1-.3l-2.1 3z"/><path d="M672.1 604.0q1.05-.8 2.1.3q1.05-1.1 2.1-.3l-2.1 3z"/><path d="M663.1 607.7q1.05-.8 2.1.3q1.05-1.1 2.1-.3l-2.1 3z"/><path d="M660.3 607.4q1.05-.8 2.1.3q1.05-1.1 2.1-.3l-2.1 3z"/><path d="M660.4 605.8q1.05-.8 2.1.3q1.05-1.1 2.1-.3l-2.1 3z"/><path d="M670.9 601.2q1.05-.8 2.1.3q1.05-1.1 2.1-.3l-2.1 3z"/><path d="M674.3 602.0q1.05-.8 2.1.3q1.05-1.1 2.1-.3l-2.1 3z"/><path d="M644.1 611.3q1.05-.8 2.1.3q1.05-1.1 2.1-.3l-2.1 3z"/><path d="M666.7 606.9q1.05-.8 2.1.3q1.05-1.1 2.1-.3l-2.1 3z"/><path d="M655.3 610.4q1.05-.8 2.1.3q1.05-1.1 2.1-.3l-2.1 3z"/></g>
<g fill="#262626" fill-opacity="0.85"><circle cx="870.5" cy="633.2" r="1.85"/><circle cx="879.7" cy="621.7" r="1.85"/><circle cx="880.8" cy="619.9" r="1.85"/><circle cx="880.7" cy="629.2" r="1.85"/><circle cx="877.7" cy="616.9" r="1.85"/><circle cx="882.2" cy="616.8" r="1.85"/><circle cx="878.3" cy="629.6" r="1.85"/><circle cx="880.3" cy="638.1" r="1.85"/><circle cx="884.6" cy="637.9" r="1.85"/><circle cx="879.1" cy="634.7" r="1.85"/><circle cx="875.7" cy="644.8" r="1.85"/><circle cx="881.5" cy="623.9" r="1.85"/><circle cx="882.3" cy="628.7" r="1.85"/><circle cx="877.4" cy="619.2" r="1.85"/><circle cx="879.8" cy="646.9" r="1.85"/><circle cx="883.0" cy="640.3" r="1.85"/><circle cx="881.1" cy="619.7" r="1.85"/><circle cx="875.5" cy="629.3" r="1.85"/><circle cx="886.4" cy="630.5" r="1.85"/><circle cx="882.0" cy="636.5" r="1.85"/><circle cx="872.2" cy="633.7" r="1.85"/><circle cx="884.7" cy="644.9" r="1.85"/><circle cx="873.1" cy="629.5" r="1.85"/><circle cx="878.0" cy="623.3" r="1.85"/><circle cx="877.4" cy="629.5" r="1.85"/><circle cx="882.9" cy="614.8" r="1.85"/><circle cx="877.8" cy="637.1" r="1.85"/><circle cx="879.0" cy="625.3" r="1.85"/><circle cx="872.5" cy="622.0" r="1.85"/><circle cx="880.6" cy="640.1" r="1.85"/><circle cx="881.9" cy="641.7" r="1.85"/><circle cx="877.6" cy="627.8" r="1.85"/><circle cx="884.0" cy="640.1" r="1.85"/><circle cx="875.6" cy="637.1" r="1.85"/><circle cx="876.3" cy="620.6" r="1.85"/><circle cx="873.7" cy="622.6" r="1.85"/><circle cx="882.0" cy="618.4" r="1.85"/><circle cx="878.6" cy="634.1" r="1.85"/><circle cx="878.5" cy="641.2" r="1.85"/><circle cx="880.6" cy="622.3" r="1.85"/><circle cx="870.4" cy="646.0" r="1.85"/><circle cx="875.4" cy="642.5" r="1.85"/><circle cx="880.7" cy="627.0" r="1.85"/><circle cx="884.8" cy="622.5" r="1.85"/><circle cx="878.5" cy="620.7" r="1.85"/><circle cx="1004.6" cy="644.2" r="1.85"/><circle cx="961.2" cy="643.4" r="1.85"/><circle cx="953.3" cy="644.8" r="1.85"/><circle cx="904.9" cy="644.3" r="1.85"/><circle cx="891.9" cy="644.5" r="1.85"/><circle cx="1017.1" cy="644.5" r="1.85"/><circle cx="949.8" cy="643.8" r="1.85"/><circle cx="873.3" cy="644.2" r="1.85"/><circle cx="880.8" cy="644.1" r="1.85"/><circle cx="1025.9" cy="643.8" r="1.85"/><circle cx="1017.1" cy="644.0" r="1.85"/><circle cx="1019.6" cy="644.1" r="1.85"/><circle cx="980.1" cy="643.8" r="1.85"/><circle cx="938.2" cy="644.8" r="1.85"/><circle cx="977.2" cy="644.5" r="1.85"/><circle cx="924.9" cy="643.9" r="1.85"/><circle cx="991.3" cy="644.0" r="1.85"/><circle cx="1026.3" cy="643.2" r="1.85"/><circle cx="986.4" cy="643.8" r="1.85"/><circle cx="999.5" cy="644.5" r="1.85"/><circle cx="953.8" cy="644.7" r="1.85"/><circle cx="1000.0" cy="643.5" r="1.85"/><circle cx="968.9" cy="644.6" r="1.85"/><circle cx="966.1" cy="644.1" r="1.85"/><circle cx="885.7" cy="644.5" r="1.85"/><circle cx="935.5" cy="643.9" r="1.85"/><circle cx="932.9" cy="644.0" r="1.85"/><circle cx="897.1" cy="643.7" r="1.85"/><circle cx="882.9" cy="644.5" r="1.85"/><circle cx="1014.2" cy="644.3" r="1.85"/><circle cx="1013.7" cy="644.5" r="1.85"/><circle cx="903.5" cy="644.0" r="1.85"/><circle cx="877.4" cy="644.2" r="1.85"/><circle cx="1009.1" cy="644.5" r="1.85"/><circle cx="879.2" cy="644.4" r="1.85"/><circle cx="877.5" cy="644.7" r="1.85"/><circle cx="883.2" cy="644.6" r="1.85"/><circle cx="875.1" cy="643.9" r="1.85"/><circle cx="946.7" cy="644.0" r="1.85"/><circle cx="983.5" cy="644.2" r="1.85"/><circle cx="935.6" cy="643.5" r="1.85"/><circle cx="932.3" cy="644.6" r="1.85"/><circle cx="900.2" cy="644.5" r="1.85"/><circle cx="937.2" cy="644.5" r="1.85"/><circle cx="896.8" cy="644.0" r="1.85"/><circle cx="961.4" cy="644.1" r="1.85"/><circle cx="1000.1" cy="644.4" r="1.85"/><circle cx="1015.0" cy="643.9" r="1.85"/><circle cx="916.4" cy="644.6" r="1.85"/><circle cx="880.1" cy="644.0" r="1.85"/><circle cx="890.0" cy="643.5" r="1.85"/><circle cx="925.8" cy="644.4" r="1.85"/><circle cx="953.1" cy="644.4" r="1.85"/><circle cx="897.0" cy="643.7" r="1.85"/><circle cx="919.8" cy="643.8" r="1.85"/><circle cx="967.1" cy="643.6" r="1.85"/><circle cx="902.4" cy="643.8" r="1.85"/><circle cx="1003.5" cy="643.7" r="1.85"/><circle cx="893.3" cy="644.2" r="1.85"/><circle cx="978.9" cy="643.7" r="1.85"/><circle cx="898.3" cy="612.7" r="1.85"/><circle cx="908.1" cy="608.2" r="1.85"/><circle cx="903.9" cy="610.9" r="1.85"/><circle cx="895.4" cy="611.0" r="1.85"/><circle cx="881.5" cy="614.6" r="1.85"/><circle cx="900.3" cy="613.4" r="1.85"/><circle cx="891.2" cy="614.2" r="1.85"/><circle cx="895.2" cy="613.4" r="1.85"/><circle cx="893.8" cy="613.4" r="1.85"/><circle cx="893.0" cy="614.7" r="1.85"/><circle cx="876.4" cy="613.8" r="1.85"/><circle cx="892.5" cy="611.8" r="1.85"/><circle cx="908.2" cy="609.9" r="1.85"/><circle cx="883.0" cy="613.6" r="1.85"/></g>
<g fill="#f6c98a" fill-opacity="0.92"><path d="M1084.8 593.7q1.05-.8 2.1.3q1.05-1.1 2.1-.3l-2.1 3z"/><path d="M955.1 607.6q1.05-.8 2.1.3q1.05-1.1 2.1-.3l-2.1 3z"/><path d="M981.4 604.1q1.05-.8 2.1.3q1.05-1.1 2.1-.3l-2.1 3z"/><path d="M1092.7 593.3q1.05-.8 2.1.3q1.05-1.1 2.1-.3l-2.1 3z"/><path d="M1077.5 596.4q1.05-.8 2.1.3q1.05-1.1 2.1-.3l-2.1 3z"/><path d="M960.7 605.6q1.05-.8 2.1.3q1.05-1.1 2.1-.3l-2.1 3z"/><path d="M1068.7 593.9q1.05-.8 2.1.3q1.05-1.1 2.1-.3l-2.1 3z"/><path d="M1102.0 588.3q1.05-.8 2.1.3q1.05-1.1 2.1-.3l-2.1 3z"/><path d="M1114.1 589.2q1.05-.8 2.1.3q1.05-1.1 2.1-.3l-2.1 3z"/><path d="M1057.7 601.6q1.05-.8 2.1.3q1.05-1.1 2.1-.3l-2.1 3z"/><path d="M973.6 601.5q1.05-.8 2.1.3q1.05-1.1 2.1-.3l-2.1 3z"/><path d="M928.6 601.4q1.05-.8 2.1.3q1.05-1.1 2.1-.3l-2.1 3z"/><path d="M1031.2 607.5q1.05-.8 2.1.3q1.05-1.1 2.1-.3l-2.1 3z"/><path d="M1116.4 589.1q1.05-.8 2.1.3q1.05-1.1 2.1-.3l-2.1 3z"/><path d="M945.4 604.2q1.05-.8 2.1.3q1.05-1.1 2.1-.3l-2.1 3z"/><path d="M1094.0 591.6q1.05-.8 2.1.3q1.05-1.1 2.1-.3l-2.1 3z"/><path d="M1097.9 587.7q1.05-.8 2.1.3q1.05-1.1 2.1-.3l-2.1 3z"/><path d="M1051.8 601.4q1.05-.8 2.1.3q1.05-1.1 2.1-.3l-2.1 3z"/><path d="M1034.5 603.0q1.05-.8 2.1.3q1.05-1.1 2.1-.3l-2.1 3z"/><path d="M971.5 607.5q1.05-.8 2.1.3q1.05-1.1 2.1-.3l-2.1 3z"/><path d="M1024.2 604.0q1.05-.8 2.1.3q1.05-1.1 2.1-.3l-2.1 3z"/><path d="M1024.6 605.5q1.05-.8 2.1.3q1.05-1.1 2.1-.3l-2.1 3z"/><path d="M934.0 604.1q1.05-.8 2.1.3q1.05-1.1 2.1-.3l-2.1 3z"/><path d="M1106.7 586.1q1.05-.8 2.1.3q1.05-1.1 2.1-.3l-2.1 3z"/><path d="M915.5 602.2q1.05-.8 2.1.3q1.05-1.1 2.1-.3l-2.1 3z"/><path d="M1060.5 601.4q1.05-.8 2.1.3q1.05-1.1 2.1-.3l-2.1 3z"/><path d="M1102.7 587.4q1.05-.8 2.1.3q1.05-1.1 2.1-.3l-2.1 3z"/><path d="M1024.9 604.3q1.05-.8 2.1.3q1.05-1.1 2.1-.3l-2.1 3z"/><path d="M1102.2 590.4q1.05-.8 2.1.3q1.05-1.1 2.1-.3l-2.1 3z"/><path d="M979.6 600.2q1.05-.8 2.1.3q1.05-1.1 2.1-.3l-2.1 3z"/><path d="M996.0 605.3q1.05-.8 2.1.3q1.05-1.1 2.1-.3l-2.1 3z"/><path d="M979.4 608.6q1.05-.8 2.1.3q1.05-1.1 2.1-.3l-2.1 3z"/><path d="M919.8 605.3q1.05-.8 2.1.3q1.05-1.1 2.1-.3l-2.1 3z"/><path d="M955.9 605.7q1.05-.8 2.1.3q1.05-1.1 2.1-.3l-2.1 3z"/><path d="M942.2 606.7q1.05-.8 2.1.3q1.05-1.1 2.1-.3l-2.1 3z"/><path d="M1127.6 590.1q1.05-.8 2.1.3q1.05-1.1 2.1-.3l-2.1 3z"/><path d="M1119.6 590.5q1.05-.8 2.1.3q1.05-1.1 2.1-.3l-2.1 3z"/><path d="M984.7 605.3q1.05-.8 2.1.3q1.05-1.1 2.1-.3l-2.1 3z"/><path d="M911.5 603.9q1.05-.8 2.1.3q1.05-1.1 2.1-.3l-2.1 3z"/><path d="M1067.7 596.0q1.05-.8 2.1.3q1.05-1.1 2.1-.3l-2.1 3z"/><path d="M1011.7 609.5q1.05-.8 2.1.3q1.05-1.1 2.1-.3l-2.1 3z"/><path d="M912.5 604.1q1.05-.8 2.1.3q1.05-1.1 2.1-.3l-2.1 3z"/><path d="M951.7 602.4q1.05-.8 2.1.3q1.05-1.1 2.1-.3l-2.1 3z"/><path d="M1092.3 590.0q1.05-.8 2.1.3q1.05-1.1 2.1-.3l-2.1 3z"/><path d="M973.9 609.1q1.05-.8 2.1.3q1.05-1.1 2.1-.3l-2.1 3z"/><path d="M947.4 603.6q1.05-.8 2.1.3q1.05-1.1 2.1-.3l-2.1 3z"/><path d="M1032.6 606.4q1.05-.8 2.1.3q1.05-1.1 2.1-.3l-2.1 3z"/><path d="M998.8 607.8q1.05-.8 2.1.3q1.05-1.1 2.1-.3l-2.1 3z"/><path d="M917.1 607.9q1.05-.8 2.1.3q1.05-1.1 2.1-.3l-2.1 3z"/><path d="M966.3 605.7q1.05-.8 2.1.3q1.05-1.1 2.1-.3l-2.1 3z"/><path d="M962.1 604.9q1.05-.8 2.1.3q1.05-1.1 2.1-.3l-2.1 3z"/><path d="M1083.3 594.2q1.05-.8 2.1.3q1.05-1.1 2.1-.3l-2.1 3z"/><path d="M943.7 605.4q1.05-.8 2.1.3q1.05-1.1 2.1-.3l-2.1 3z"/><path d="M944.5 604.1q1.05-.8 2.1.3q1.05-1.1 2.1-.3l-2.1 3z"/><path d="M1129.5 585.8q1.05-.8 2.1.3q1.05-1.1 2.1-.3l-2.1 3z"/><path d="M972.0 604.5q1.05-.8 2.1.3q1.05-1.1 2.1-.3l-2.1 3z"/><path d="M1066.7 594.6q1.05-.8 2.1.3q1.05-1.1 2.1-.3l-2.1 3z"/><path d="M1022.2 606.1q1.05-.8 2.1.3q1.05-1.1 2.1-.3l-2.1 3z"/><path d="M949.5 603.9q1.05-.8 2.1.3q1.05-1.1 2.1-.3l-2.1 3z"/><path d="M919.1 605.0q1.05-.8 2.1.3q1.05-1.1 2.1-.3l-2.1 3z"/></g>
<g fill="#2f8a12" fill-opacity="0.92"><path d="M1119.7 600.2a1.2 1.2 0 0 1 .6-2.1a1.5 1.5 0 0 1 2.8 0a1.2 1.2 0 0 1 .6 2.1z"/><path d="M1064.0 570.1a1.2 1.2 0 0 1 .6-2.1a1.5 1.5 0 0 1 2.8 0a1.2 1.2 0 0 1 .6 2.1z"/><path d="M1079.6 588.0a1.2 1.2 0 0 1 .6-2.1a1.5 1.5 0 0 1 2.8 0a1.2 1.2 0 0 1 .6 2.1z"/><path d="M1076.8 570.1a1.2 1.2 0 0 1 .6-2.1a1.5 1.5 0 0 1 2.8 0a1.2 1.2 0 0 1 .6 2.1z"/><path d="M1074.3 570.2a1.2 1.2 0 0 1 .6-2.1a1.5 1.5 0 0 1 2.8 0a1.2 1.2 0 0 1 .6 2.1z"/><path d="M1097.4 585.5a1.2 1.2 0 0 1 .6-2.1a1.5 1.5 0 0 1 2.8 0a1.2 1.2 0 0 1 .6 2.1z"/><path d="M1097.7 587.4a1.2 1.2 0 0 1 .6-2.1a1.5 1.5 0 0 1 2.8 0a1.2 1.2 0 0 1 .6 2.1z"/><path d="M1083.2 598.3a1.2 1.2 0 0 1 .6-2.1a1.5 1.5 0 0 1 2.8 0a1.2 1.2 0 0 1 .6 2.1z"/><path d="M1106.3 607.6a1.2 1.2 0 0 1 .6-2.1a1.5 1.5 0 0 1 2.8 0a1.2 1.2 0 0 1 .6 2.1z"/><path d="M1088.7 573.5a1.2 1.2 0 0 1 .6-2.1a1.5 1.5 0 0 1 2.8 0a1.2 1.2 0 0 1 .6 2.1z"/><path d="M1087.4 578.1a1.2 1.2 0 0 1 .6-2.1a1.5 1.5 0 0 1 2.8 0a1.2 1.2 0 0 1 .6 2.1z"/><path d="M1108.5 619.3a1.2 1.2 0 0 1 .6-2.1a1.5 1.5 0 0 1 2.8 0a1.2 1.2 0 0 1 .6 2.1z"/><path d="M1098.9 587.0a1.2 1.2 0 0 1 .6-2.1a1.5 1.5 0 0 1 2.8 0a1.2 1.2 0 0 1 .6 2.1z"/><path d="M1120.8 609.5a1.2 1.2 0 0 1 .6-2.1a1.5 1.5 0 0 1 2.8 0a1.2 1.2 0 0 1 .6 2.1z"/><path d="M1109.8 593.1a1.2 1.2 0 0 1 .6-2.1a1.5 1.5 0 0 1 2.8 0a1.2 1.2 0 0 1 .6 2.1z"/><path d="M1099.6 595.5a1.2 1.2 0 0 1 .6-2.1a1.5 1.5 0 0 1 2.8 0a1.2 1.2 0 0 1 .6 2.1z"/><path d="M1099.3 575.5a1.2 1.2 0 0 1 .6-2.1a1.5 1.5 0 0 1 2.8 0a1.2 1.2 0 0 1 .6 2.1z"/><path d="M1083.9 574.9a1.2 1.2 0 0 1 .6-2.1a1.5 1.5 0 0 1 2.8 0a1.2 1.2 0 0 1 .6 2.1z"/><path d="M1070.5 564.8a1.2 1.2 0 0 1 .6-2.1a1.5 1.5 0 0 1 2.8 0a1.2 1.2 0 0 1 .6 2.1z"/><path d="M1117.8 605.7a1.2 1.2 0 0 1 .6-2.1a1.5 1.5 0 0 1 2.8 0a1.2 1.2 0 0 1 .6 2.1z"/><path d="M1064.9 567.4a1.2 1.2 0 0 1 .6-2.1a1.5 1.5 0 0 1 2.8 0a1.2 1.2 0 0 1 .6 2.1z"/><path d="M1081.9 585.8a1.2 1.2 0 0 1 .6-2.1a1.5 1.5 0 0 1 2.8 0a1.2 1.2 0 0 1 .6 2.1z"/><path d="M1082.4 568.9a1.2 1.2 0 0 1 .6-2.1a1.5 1.5 0 0 1 2.8 0a1.2 1.2 0 0 1 .6 2.1z"/><path d="M1089.3 583.0a1.2 1.2 0 0 1 .6-2.1a1.5 1.5 0 0 1 2.8 0a1.2 1.2 0 0 1 .6 2.1z"/><path d="M1115.3 594.9a1.2 1.2 0 0 1 .6-2.1a1.5 1.5 0 0 1 2.8 0a1.2 1.2 0 0 1 .6 2.1z"/><path d="M1067.5 570.3a1.2 1.2 0 0 1 .6-2.1a1.5 1.5 0 0 1 2.8 0a1.2 1.2 0 0 1 .6 2.1z"/><path d="M1101.2 584.3a1.2 1.2 0 0 1 .6-2.1a1.5 1.5 0 0 1 2.8 0a1.2 1.2 0 0 1 .6 2.1z"/><path d="M1066.8 587.3a1.2 1.2 0 0 1 .6-2.1a1.5 1.5 0 0 1 2.8 0a1.2 1.2 0 0 1 .6 2.1z"/><path d="M1096.9 584.7a1.2 1.2 0 0 1 .6-2.1a1.5 1.5 0 0 1 2.8 0a1.2 1.2 0 0 1 .6 2.1z"/><path d="M1081.9 565.2a1.2 1.2 0 0 1 .6-2.1a1.5 1.5 0 0 1 2.8 0a1.2 1.2 0 0 1 .6 2.1z"/><path d="M1092.2 590.1a1.2 1.2 0 0 1 .6-2.1a1.5 1.5 0 0 1 2.8 0a1.2 1.2 0 0 1 .6 2.1z"/><path d="M1104.4 606.4a1.2 1.2 0 0 1 .6-2.1a1.5 1.5 0 0 1 2.8 0a1.2 1.2 0 0 1 .6 2.1z"/><path d="M1102.9 587.2a1.2 1.2 0 0 1 .6-2.1a1.5 1.5 0 0 1 2.8 0a1.2 1.2 0 0 1 .6 2.1z"/><path d="M1096.4 592.2a1.2 1.2 0 0 1 .6-2.1a1.5 1.5 0 0 1 2.8 0a1.2 1.2 0 0 1 .6 2.1z"/><path d="M1107.7 598.5a1.2 1.2 0 0 1 .6-2.1a1.5 1.5 0 0 1 2.8 0a1.2 1.2 0 0 1 .6 2.1z"/><path d="M1083.9 588.7a1.2 1.2 0 0 1 .6-2.1a1.5 1.5 0 0 1 2.8 0a1.2 1.2 0 0 1 .6 2.1z"/><path d="M1075.5 573.9a1.2 1.2 0 0 1 .6-2.1a1.5 1.5 0 0 1 2.8 0a1.2 1.2 0 0 1 .6 2.1z"/><path d="M1089.2 615.1a1.2 1.2 0 0 1 .6-2.1a1.5 1.5 0 0 1 2.8 0a1.2 1.2 0 0 1 .6 2.1z"/><path d="M1103.4 604.8a1.2 1.2 0 0 1 .6-2.1a1.5 1.5 0 0 1 2.8 0a1.2 1.2 0 0 1 .6 2.1z"/><path d="M1089.6 575.1a1.2 1.2 0 0 1 .6-2.1a1.5 1.5 0 0 1 2.8 0a1.2 1.2 0 0 1 .6 2.1z"/><path d="M1124.7 619.6a1.2 1.2 0 0 1 .6-2.1a1.5 1.5 0 0 1 2.8 0a1.2 1.2 0 0 1 .6 2.1z"/><path d="M1093.7 572.9a1.2 1.2 0 0 1 .6-2.1a1.5 1.5 0 0 1 2.8 0a1.2 1.2 0 0 1 .6 2.1z"/><path d="M1111.3 584.9a1.2 1.2 0 0 1 .6-2.1a1.5 1.5 0 0 1 2.8 0a1.2 1.2 0 0 1 .6 2.1z"/><path d="M1065.5 563.5a1.2 1.2 0 0 1 .6-2.1a1.5 1.5 0 0 1 2.8 0a1.2 1.2 0 0 1 .6 2.1z"/><path d="M1104.0 613.8a1.2 1.2 0 0 1 .6-2.1a1.5 1.5 0 0 1 2.8 0a1.2 1.2 0 0 1 .6 2.1z"/><path d="M1097.6 586.4a1.2 1.2 0 0 1 .6-2.1a1.5 1.5 0 0 1 2.8 0a1.2 1.2 0 0 1 .6 2.1z"/><path d="M1124.2 610.3a1.2 1.2 0 0 1 .6-2.1a1.5 1.5 0 0 1 2.8 0a1.2 1.2 0 0 1 .6 2.1z"/><path d="M1085.9 587.1a1.2 1.2 0 0 1 .6-2.1a1.5 1.5 0 0 1 2.8 0a1.2 1.2 0 0 1 .6 2.1z"/><path d="M1114.0 608.3a1.2 1.2 0 0 1 .6-2.1a1.5 1.5 0 0 1 2.8 0a1.2 1.2 0 0 1 .6 2.1z"/><path d="M1092.3 575.8a1.2 1.2 0 0 1 .6-2.1a1.5 1.5 0 0 1 2.8 0a1.2 1.2 0 0 1 .6 2.1z"/><path d="M1103.3 602.2a1.2 1.2 0 0 1 .6-2.1a1.5 1.5 0 0 1 2.8 0a1.2 1.2 0 0 1 .6 2.1z"/><path d="M1097.7 571.6a1.2 1.2 0 0 1 .6-2.1a1.5 1.5 0 0 1 2.8 0a1.2 1.2 0 0 1 .6 2.1z"/><path d="M1114.5 587.9a1.2 1.2 0 0 1 .6-2.1a1.5 1.5 0 0 1 2.8 0a1.2 1.2 0 0 1 .6 2.1z"/><path d="M1100.1 572.9a1.2 1.2 0 0 1 .6-2.1a1.5 1.5 0 0 1 2.8 0a1.2 1.2 0 0 1 .6 2.1z"/><path d="M1081.7 579.8a1.2 1.2 0 0 1 .6-2.1a1.5 1.5 0 0 1 2.8 0a1.2 1.2 0 0 1 .6 2.1z"/><path d="M1062.8 579.1a1.2 1.2 0 0 1 .6-2.1a1.5 1.5 0 0 1 2.8 0a1.2 1.2 0 0 1 .6 2.1z"/><path d="M1123.6 601.4a1.2 1.2 0 0 1 .6-2.1a1.5 1.5 0 0 1 2.8 0a1.2 1.2 0 0 1 .6 2.1z"/><path d="M1114.8 601.6a1.2 1.2 0 0 1 .6-2.1a1.5 1.5 0 0 1 2.8 0a1.2 1.2 0 0 1 .6 2.1z"/><path d="M1083.0 580.9a1.2 1.2 0 0 1 .6-2.1a1.5 1.5 0 0 1 2.8 0a1.2 1.2 0 0 1 .6 2.1z"/><path d="M1064.3 570.1a1.2 1.2 0 0 1 .6-2.1a1.5 1.5 0 0 1 2.8 0a1.2 1.2 0 0 1 .6 2.1z"/><path d="M1088.1 591.8a1.2 1.2 0 0 1 .6-2.1a1.5 1.5 0 0 1 2.8 0a1.2 1.2 0 0 1 .6 2.1z"/><path d="M1125.2 600.8a1.2 1.2 0 0 1 .6-2.1a1.5 1.5 0 0 1 2.8 0a1.2 1.2 0 0 1 .6 2.1z"/><path d="M1091.0 593.0a1.2 1.2 0 0 1 .6-2.1a1.5 1.5 0 0 1 2.8 0a1.2 1.2 0 0 1 .6 2.1z"/><path d="M1113.2 605.8a1.2 1.2 0 0 1 .6-2.1a1.5 1.5 0 0 1 2.8 0a1.2 1.2 0 0 1 .6 2.1z"/><path d="M1097.1 608.0a1.2 1.2 0 0 1 .6-2.1a1.5 1.5 0 0 1 2.8 0a1.2 1.2 0 0 1 .6 2.1z"/><path d="M1079.1 571.1a1.2 1.2 0 0 1 .6-2.1a1.5 1.5 0 0 1 2.8 0a1.2 1.2 0 0 1 .6 2.1z"/><path d="M1133.4 616.4a1.2 1.2 0 0 1 .6-2.1a1.5 1.5 0 0 1 2.8 0a1.2 1.2 0 0 1 .6 2.1z"/><path d="M1086.5 577.8a1.2 1.2 0 0 1 .6-2.1a1.5 1.5 0 0 1 2.8 0a1.2 1.2 0 0 1 .6 2.1z"/><path d="M1100.3 609.9a1.2 1.2 0 0 1 .6-2.1a1.5 1.5 0 0 1 2.8 0a1.2 1.2 0 0 1 .6 2.1z"/><path d="M1107.5 583.7a1.2 1.2 0 0 1 .6-2.1a1.5 1.5 0 0 1 2.8 0a1.2 1.2 0 0 1 .6 2.1z"/><path d="M1084.0 575.1a1.2 1.2 0 0 1 .6-2.1a1.5 1.5 0 0 1 2.8 0a1.2 1.2 0 0 1 .6 2.1z"/><path d="M1097.1 582.1a1.2 1.2 0 0 1 .6-2.1a1.5 1.5 0 0 1 2.8 0a1.2 1.2 0 0 1 .6 2.1z"/><path d="M1086.5 582.1a1.2 1.2 0 0 1 .6-2.1a1.5 1.5 0 0 1 2.8 0a1.2 1.2 0 0 1 .6 2.1z"/><path d="M1107.7 601.1a1.2 1.2 0 0 1 .6-2.1a1.5 1.5 0 0 1 2.8 0a1.2 1.2 0 0 1 .6 2.1z"/><path d="M1106.1 594.0a1.2 1.2 0 0 1 .6-2.1a1.5 1.5 0 0 1 2.8 0a1.2 1.2 0 0 1 .6 2.1z"/><path d="M1127.2 560.8a1.2 1.2 0 0 1 .6-2.1a1.5 1.5 0 0 1 2.8 0a1.2 1.2 0 0 1 .6 2.1z"/><path d="M1106.4 564.1a1.2 1.2 0 0 1 .6-2.1a1.5 1.5 0 0 1 2.8 0a1.2 1.2 0 0 1 .6 2.1z"/><path d="M1098.4 563.7a1.2 1.2 0 0 1 .6-2.1a1.5 1.5 0 0 1 2.8 0a1.2 1.2 0 0 1 .6 2.1z"/><path d="M1126.5 565.0a1.2 1.2 0 0 1 .6-2.1a1.5 1.5 0 0 1 2.8 0a1.2 1.2 0 0 1 .6 2.1z"/><path d="M1099.7 564.5a1.2 1.2 0 0 1 .6-2.1a1.5 1.5 0 0 1 2.8 0a1.2 1.2 0 0 1 .6 2.1z"/><path d="M1089.6 558.5a1.2 1.2 0 0 1 .6-2.1a1.5 1.5 0 0 1 2.8 0a1.2 1.2 0 0 1 .6 2.1z"/><path d="M1097.3 565.0a1.2 1.2 0 0 1 .6-2.1a1.5 1.5 0 0 1 2.8 0a1.2 1.2 0 0 1 .6 2.1z"/><path d="M1108.6 565.7a1.2 1.2 0 0 1 .6-2.1a1.5 1.5 0 0 1 2.8 0a1.2 1.2 0 0 1 .6 2.1z"/><path d="M1073.6 562.8a1.2 1.2 0 0 1 .6-2.1a1.5 1.5 0 0 1 2.8 0a1.2 1.2 0 0 1 .6 2.1z"/><path d="M1100.0 563.1a1.2 1.2 0 0 1 .6-2.1a1.5 1.5 0 0 1 2.8 0a1.2 1.2 0 0 1 .6 2.1z"/><path d="M1108.5 559.7a1.2 1.2 0 0 1 .6-2.1a1.5 1.5 0 0 1 2.8 0a1.2 1.2 0 0 1 .6 2.1z"/><path d="M1127.3 558.5a1.2 1.2 0 0 1 .6-2.1a1.5 1.5 0 0 1 2.8 0a1.2 1.2 0 0 1 .6 2.1z"/><path d="M1110.6 564.5a1.2 1.2 0 0 1 .6-2.1a1.5 1.5 0 0 1 2.8 0a1.2 1.2 0 0 1 .6 2.1z"/><path d="M1113.6 560.4a1.2 1.2 0 0 1 .6-2.1a1.5 1.5 0 0 1 2.8 0a1.2 1.2 0 0 1 .6 2.1z"/><path d="M1106.1 563.3a1.2 1.2 0 0 1 .6-2.1a1.5 1.5 0 0 1 2.8 0a1.2 1.2 0 0 1 .6 2.1z"/><path d="M1110.7 567.3a1.2 1.2 0 0 1 .6-2.1a1.5 1.5 0 0 1 2.8 0a1.2 1.2 0 0 1 .6 2.1z"/><path d="M1120.1 562.7a1.2 1.2 0 0 1 .6-2.1a1.5 1.5 0 0 1 2.8 0a1.2 1.2 0 0 1 .6 2.1z"/><path d="M1134.1 564.8a1.2 1.2 0 0 1 .6-2.1a1.5 1.5 0 0 1 2.8 0a1.2 1.2 0 0 1 .6 2.1z"/><path d="M1108.7 561.8a1.2 1.2 0 0 1 .6-2.1a1.5 1.5 0 0 1 2.8 0a1.2 1.2 0 0 1 .6 2.1z"/><path d="M1126.4 561.3a1.2 1.2 0 0 1 .6-2.1a1.5 1.5 0 0 1 2.8 0a1.2 1.2 0 0 1 .6 2.1z"/><path d="M1107.3 565.4a1.2 1.2 0 0 1 .6-2.1a1.5 1.5 0 0 1 2.8 0a1.2 1.2 0 0 1 .6 2.1z"/><path d="M1121.0 565.1a1.2 1.2 0 0 1 .6-2.1a1.5 1.5 0 0 1 2.8 0a1.2 1.2 0 0 1 .6 2.1z"/><path d="M1100.5 562.9a1.2 1.2 0 0 1 .6-2.1a1.5 1.5 0 0 1 2.8 0a1.2 1.2 0 0 1 .6 2.1z"/><path d="M1132.1 559.5a1.2 1.2 0 0 1 .6-2.1a1.5 1.5 0 0 1 2.8 0a1.2 1.2 0 0 1 .6 2.1z"/><path d="M1108.1 567.0a1.2 1.2 0 0 1 .6-2.1a1.5 1.5 0 0 1 2.8 0a1.2 1.2 0 0 1 .6 2.1z"/><path d="M1076.8 648.7a1.2 1.2 0 0 1 .6-2.1a1.5 1.5 0 0 1 2.8 0a1.2 1.2 0 0 1 .6 2.1z"/><path d="M1042.0 649.7a1.2 1.2 0 0 1 .6-2.1a1.5 1.5 0 0 1 2.8 0a1.2 1.2 0 0 1 .6 2.1z"/><path d="M1068.2 653.8a1.2 1.2 0 0 1 .6-2.1a1.5 1.5 0 0 1 2.8 0a1.2 1.2 0 0 1 .6 2.1z"/><path d="M1091.2 649.7a1.2 1.2 0 0 1 .6-2.1a1.5 1.5 0 0 1 2.8 0a1.2 1.2 0 0 1 .6 2.1z"/><path d="M1100.7 654.0a1.2 1.2 0 0 1 .6-2.1a1.5 1.5 0 0 1 2.8 0a1.2 1.2 0 0 1 .6 2.1z"/><path d="M1054.0 650.9a1.2 1.2 0 0 1 .6-2.1a1.5 1.5 0 0 1 2.8 0a1.2 1.2 0 0 1 .6 2.1z"/><path d="M1089.0 655.8a1.2 1.2 0 0 1 .6-2.1a1.5 1.5 0 0 1 2.8 0a1.2 1.2 0 0 1 .6 2.1z"/><path d="M1070.1 651.2a1.2 1.2 0 0 1 .6-2.1a1.5 1.5 0 0 1 2.8 0a1.2 1.2 0 0 1 .6 2.1z"/><path d="M1088.0 648.3a1.2 1.2 0 0 1 .6-2.1a1.5 1.5 0 0 1 2.8 0a1.2 1.2 0 0 1 .6 2.1z"/><path d="M1063.1 649.6a1.2 1.2 0 0 1 .6-2.1a1.5 1.5 0 0 1 2.8 0a1.2 1.2 0 0 1 .6 2.1z"/><path d="M1091.0 651.5a1.2 1.2 0 0 1 .6-2.1a1.5 1.5 0 0 1 2.8 0a1.2 1.2 0 0 1 .6 2.1z"/><path d="M1085.5 654.4a1.2 1.2 0 0 1 .6-2.1a1.5 1.5 0 0 1 2.8 0a1.2 1.2 0 0 1 .6 2.1z"/><path d="M1044.3 647.8a1.2 1.2 0 0 1 .6-2.1a1.5 1.5 0 0 1 2.8 0a1.2 1.2 0 0 1 .6 2.1z"/><path d="M1094.4 649.1a1.2 1.2 0 0 1 .6-2.1a1.5 1.5 0 0 1 2.8 0a1.2 1.2 0 0 1 .6 2.1z"/><path d="M1067.9 650.9a1.2 1.2 0 0 1 .6-2.1a1.5 1.5 0 0 1 2.8 0a1.2 1.2 0 0 1 .6 2.1z"/><path d="M1091.6 651.8a1.2 1.2 0 0 1 .6-2.1a1.5 1.5 0 0 1 2.8 0a1.2 1.2 0 0 1 .6 2.1z"/><path d="M1039.1 648.2a1.2 1.2 0 0 1 .6-2.1a1.5 1.5 0 0 1 2.8 0a1.2 1.2 0 0 1 .6 2.1z"/><path d="M1055.3 649.7a1.2 1.2 0 0 1 .6-2.1a1.5 1.5 0 0 1 2.8 0a1.2 1.2 0 0 1 .6 2.1z"/><path d="M1093.0 651.5a1.2 1.2 0 0 1 .6-2.1a1.5 1.5 0 0 1 2.8 0a1.2 1.2 0 0 1 .6 2.1z"/><path d="M1082.7 650.8a1.2 1.2 0 0 1 .6-2.1a1.5 1.5 0 0 1 2.8 0a1.2 1.2 0 0 1 .6 2.1z"/><path d="M1048.8 650.9a1.2 1.2 0 0 1 .6-2.1a1.5 1.5 0 0 1 2.8 0a1.2 1.2 0 0 1 .6 2.1z"/><path d="M1092.1 649.7a1.2 1.2 0 0 1 .6-2.1a1.5 1.5 0 0 1 2.8 0a1.2 1.2 0 0 1 .6 2.1z"/><path d="M1058.1 653.9a1.2 1.2 0 0 1 .6-2.1a1.5 1.5 0 0 1 2.8 0a1.2 1.2 0 0 1 .6 2.1z"/><path d="M1116.2 651.7a1.2 1.2 0 0 1 .6-2.1a1.5 1.5 0 0 1 2.8 0a1.2 1.2 0 0 1 .6 2.1z"/><path d="M1131.9 653.2a1.2 1.2 0 0 1 .6-2.1a1.5 1.5 0 0 1 2.8 0a1.2 1.2 0 0 1 .6 2.1z"/><path d="M1091.1 655.5a1.2 1.2 0 0 1 .6-2.1a1.5 1.5 0 0 1 2.8 0a1.2 1.2 0 0 1 .6 2.1z"/><path d="M1108.9 651.0a1.2 1.2 0 0 1 .6-2.1a1.5 1.5 0 0 1 2.8 0a1.2 1.2 0 0 1 .6 2.1z"/><path d="M1054.5 651.9a1.2 1.2 0 0 1 .6-2.1a1.5 1.5 0 0 1 2.8 0a1.2 1.2 0 0 1 .6 2.1z"/><path d="M1038.9 648.8a1.2 1.2 0 0 1 .6-2.1a1.5 1.5 0 0 1 2.8 0a1.2 1.2 0 0 1 .6 2.1z"/><path d="M1070.9 650.6a1.2 1.2 0 0 1 .6-2.1a1.5 1.5 0 0 1 2.8 0a1.2 1.2 0 0 1 .6 2.1z"/><path d="M1108.8 650.4a1.2 1.2 0 0 1 .6-2.1a1.5 1.5 0 0 1 2.8 0a1.2 1.2 0 0 1 .6 2.1z"/><path d="M1090.9 651.0a1.2 1.2 0 0 1 .6-2.1a1.5 1.5 0 0 1 2.8 0a1.2 1.2 0 0 1 .6 2.1z"/><path d="M1075.1 650.0a1.2 1.2 0 0 1 .6-2.1a1.5 1.5 0 0 1 2.8 0a1.2 1.2 0 0 1 .6 2.1z"/><path d="M1097.6 652.1a1.2 1.2 0 0 1 .6-2.1a1.5 1.5 0 0 1 2.8 0a1.2 1.2 0 0 1 .6 2.1z"/><path d="M1104.6 651.2a1.2 1.2 0 0 1 .6-2.1a1.5 1.5 0 0 1 2.8 0a1.2 1.2 0 0 1 .6 2.1z"/><path d="M1102.4 652.8a1.2 1.2 0 0 1 .6-2.1a1.5 1.5 0 0 1 2.8 0a1.2 1.2 0 0 1 .6 2.1z"/><path d="M1070.1 651.6a1.2 1.2 0 0 1 .6-2.1a1.5 1.5 0 0 1 2.8 0a1.2 1.2 0 0 1 .6 2.1z"/><path d="M1094.7 654.3a1.2 1.2 0 0 1 .6-2.1a1.5 1.5 0 0 1 2.8 0a1.2 1.2 0 0 1 .6 2.1z"/><path d="M1073.6 651.9a1.2 1.2 0 0 1 .6-2.1a1.5 1.5 0 0 1 2.8 0a1.2 1.2 0 0 1 .6 2.1z"/><path d="M1046.4 647.5a1.2 1.2 0 0 1 .6-2.1a1.5 1.5 0 0 1 2.8 0a1.2 1.2 0 0 1 .6 2.1z"/><path d="M1051.9 649.5a1.2 1.2 0 0 1 .6-2.1a1.5 1.5 0 0 1 2.8 0a1.2 1.2 0 0 1 .6 2.1z"/><path d="M1059.3 649.2a1.2 1.2 0 0 1 .6-2.1a1.5 1.5 0 0 1 2.8 0a1.2 1.2 0 0 1 .6 2.1z"/><path d="M1098.6 650.7a1.2 1.2 0 0 1 .6-2.1a1.5 1.5 0 0 1 2.8 0a1.2 1.2 0 0 1 .6 2.1z"/><path d="M1067.0 650.2a1.2 1.2 0 0 1 .6-2.1a1.5 1.5 0 0 1 2.8 0a1.2 1.2 0 0 1 .6 2.1z"/><path d="M1120.3 649.4a1.2 1.2 0 0 1 .6-2.1a1.5 1.5 0 0 1 2.8 0a1.2 1.2 0 0 1 .6 2.1z"/><path d="M1105.9 653.9a1.2 1.2 0 0 1 .6-2.1a1.5 1.5 0 0 1 2.8 0a1.2 1.2 0 0 1 .6 2.1z"/><path d="M1075.9 651.1a1.2 1.2 0 0 1 .6-2.1a1.5 1.5 0 0 1 2.8 0a1.2 1.2 0 0 1 .6 2.1z"/><path d="M1124.9 651.2a1.2 1.2 0 0 1 .6-2.1a1.5 1.5 0 0 1 2.8 0a1.2 1.2 0 0 1 .6 2.1z"/><path d="M1085.2 652.6a1.2 1.2 0 0 1 .6-2.1a1.5 1.5 0 0 1 2.8 0a1.2 1.2 0 0 1 .6 2.1z"/><path d="M1086.5 652.6a1.2 1.2 0 0 1 .6-2.1a1.5 1.5 0 0 1 2.8 0a1.2 1.2 0 0 1 .6 2.1z"/><path d="M1195.3 566.5a1.2 1.2 0 0 1 .6-2.1a1.5 1.5 0 0 1 2.8 0a1.2 1.2 0 0 1 .6 2.1z"/><path d="M1179.0 564.3a1.2 1.2 0 0 1 .6-2.1a1.5 1.5 0 0 1 2.8 0a1.2 1.2 0 0 1 .6 2.1z"/><path d="M1193.7 566.9a1.2 1.2 0 0 1 .6-2.1a1.5 1.5 0 0 1 2.8 0a1.2 1.2 0 0 1 .6 2.1z"/><path d="M1170.6 570.9a1.2 1.2 0 0 1 .6-2.1a1.5 1.5 0 0 1 2.8 0a1.2 1.2 0 0 1 .6 2.1z"/><path d="M1164.0 569.9a1.2 1.2 0 0 1 .6-2.1a1.5 1.5 0 0 1 2.8 0a1.2 1.2 0 0 1 .6 2.1z"/><path d="M1181.0 568.2a1.2 1.2 0 0 1 .6-2.1a1.5 1.5 0 0 1 2.8 0a1.2 1.2 0 0 1 .6 2.1z"/><path d="M1151.7 573.7a1.2 1.2 0 0 1 .6-2.1a1.5 1.5 0 0 1 2.8 0a1.2 1.2 0 0 1 .6 2.1z"/><path d="M1171.8 569.3a1.2 1.2 0 0 1 .6-2.1a1.5 1.5 0 0 1 2.8 0a1.2 1.2 0 0 1 .6 2.1z"/><path d="M1189.2 567.0a1.2 1.2 0 0 1 .6-2.1a1.5 1.5 0 0 1 2.8 0a1.2 1.2 0 0 1 .6 2.1z"/><path d="M1162.0 562.1a1.2 1.2 0 0 1 .6-2.1a1.5 1.5 0 0 1 2.8 0a1.2 1.2 0 0 1 .6 2.1z"/><path d="M1164.9 571.7a1.2 1.2 0 0 1 .6-2.1a1.5 1.5 0 0 1 2.8 0a1.2 1.2 0 0 1 .6 2.1z"/><path d="M1156.7 569.1a1.2 1.2 0 0 1 .6-2.1a1.5 1.5 0 0 1 2.8 0a1.2 1.2 0 0 1 .6 2.1z"/><path d="M1179.0 567.9a1.2 1.2 0 0 1 .6-2.1a1.5 1.5 0 0 1 2.8 0a1.2 1.2 0 0 1 .6 2.1z"/><path d="M1152.8 574.7a1.2 1.2 0 0 1 .6-2.1a1.5 1.5 0 0 1 2.8 0a1.2 1.2 0 0 1 .6 2.1z"/><path d="M1172.7 567.5a1.2 1.2 0 0 1 .6-2.1a1.5 1.5 0 0 1 2.8 0a1.2 1.2 0 0 1 .6 2.1z"/><path d="M1185.4 573.2a1.2 1.2 0 0 1 .6-2.1a1.5 1.5 0 0 1 2.8 0a1.2 1.2 0 0 1 .6 2.1z"/><path d="M1166.4 568.1a1.2 1.2 0 0 1 .6-2.1a1.5 1.5 0 0 1 2.8 0a1.2 1.2 0 0 1 .6 2.1z"/><path d="M1181.4 573.3a1.2 1.2 0 0 1 .6-2.1a1.5 1.5 0 0 1 2.8 0a1.2 1.2 0 0 1 .6 2.1z"/><path d="M1177.9 562.1a1.2 1.2 0 0 1 .6-2.1a1.5 1.5 0 0 1 2.8 0a1.2 1.2 0 0 1 .6 2.1z"/><path d="M1158.4 568.7a1.2 1.2 0 0 1 .6-2.1a1.5 1.5 0 0 1 2.8 0a1.2 1.2 0 0 1 .6 2.1z"/><path d="M1144.6 565.1a1.2 1.2 0 0 1 .6-2.1a1.5 1.5 0 0 1 2.8 0a1.2 1.2 0 0 1 .6 2.1z"/><path d="M1151.4 566.2a1.2 1.2 0 0 1 .6-2.1a1.5 1.5 0 0 1 2.8 0a1.2 1.2 0 0 1 .6 2.1z"/><path d="M1160.7 574.8a1.2 1.2 0 0 1 .6-2.1a1.5 1.5 0 0 1 2.8 0a1.2 1.2 0 0 1 .6 2.1z"/><path d="M1184.5 567.6a1.2 1.2 0 0 1 .6-2.1a1.5 1.5 0 0 1 2.8 0a1.2 1.2 0 0 1 .6 2.1z"/><path d="M1188.3 564.7a1.2 1.2 0 0 1 .6-2.1a1.5 1.5 0 0 1 2.8 0a1.2 1.2 0 0 1 .6 2.1z"/><path d="M1110.9 624.3a1.2 1.2 0 0 1 .6-2.1a1.5 1.5 0 0 1 2.8 0a1.2 1.2 0 0 1 .6 2.1z"/><path d="M1092.3 621.6a1.2 1.2 0 0 1 .6-2.1a1.5 1.5 0 0 1 2.8 0a1.2 1.2 0 0 1 .6 2.1z"/><path d="M1122.4 622.6a1.2 1.2 0 0 1 .6-2.1a1.5 1.5 0 0 1 2.8 0a1.2 1.2 0 0 1 .6 2.1z"/><path d="M1108.3 620.4a1.2 1.2 0 0 1 .6-2.1a1.5 1.5 0 0 1 2.8 0a1.2 1.2 0 0 1 .6 2.1z"/><path d="M1101.7 618.3a1.2 1.2 0 0 1 .6-2.1a1.5 1.5 0 0 1 2.8 0a1.2 1.2 0 0 1 .6 2.1z"/><path d="M1110.6 628.3a1.2 1.2 0 0 1 .6-2.1a1.5 1.5 0 0 1 2.8 0a1.2 1.2 0 0 1 .6 2.1z"/></g>
<g fill="#f218f0" fill-opacity="0.92"><circle cx="1163.3" cy="588.9" r="1.85"/><circle cx="1098.2" cy="608.1" r="1.85"/><circle cx="1161.0" cy="589.0" r="1.85"/><circle cx="1140.6" cy="593.1" r="1.85"/><circle cx="1042.4" cy="604.3" r="1.85"/><circle cx="1026.3" cy="602.8" r="1.85"/><circle cx="1059.4" cy="604.1" r="1.85"/><circle cx="1096.4" cy="605.9" r="1.85"/><circle cx="1081.2" cy="605.6" r="1.85"/><circle cx="985.5" cy="602.7" r="1.85"/><circle cx="1097.3" cy="600.7" r="1.85"/><circle cx="1113.4" cy="600.9" r="1.85"/><circle cx="1135.4" cy="598.8" r="1.85"/><circle cx="1050.5" cy="602.5" r="1.85"/><circle cx="1119.7" cy="595.4" r="1.85"/><circle cx="1044.8" cy="600.4" r="1.85"/><circle cx="1105.2" cy="604.0" r="1.85"/><circle cx="978.2" cy="606.1" r="1.85"/><circle cx="1161.3" cy="583.9" r="1.85"/><circle cx="1006.7" cy="600.6" r="1.85"/><circle cx="1123.8" cy="595.3" r="1.85"/><circle cx="1121.0" cy="597.0" r="1.85"/><circle cx="1154.3" cy="588.1" r="1.85"/><circle cx="974.5" cy="603.9" r="1.85"/><circle cx="1132.0" cy="591.2" r="1.85"/><circle cx="1082.1" cy="606.6" r="1.85"/><circle cx="1008.5" cy="599.7" r="1.85"/><circle cx="1031.1" cy="608.9" r="1.85"/><circle cx="1127.5" cy="596.7" r="1.85"/><circle cx="1105.2" cy="602.9" r="1.85"/><circle cx="1069.5" cy="607.6" r="1.85"/><circle cx="976.2" cy="602.5" r="1.85"/><circle cx="1122.2" cy="604.4" r="1.85"/><circle cx="1176.0" cy="585.9" r="1.85"/><circle cx="1147.5" cy="591.5" r="1.85"/><circle cx="1127.6" cy="590.5" r="1.85"/><circle cx="993.2" cy="601.9" r="1.85"/><circle cx="1085.3" cy="605.6" r="1.85"/><circle cx="1090.2" cy="608.3" r="1.85"/><circle cx="982.6" cy="604.0" r="1.85"/><circle cx="1153.4" cy="592.1" r="1.85"/><circle cx="1056.4" cy="601.5" r="1.85"/><circle cx="1148.0" cy="595.9" r="1.85"/><circle cx="1062.5" cy="603.0" r="1.85"/><circle cx="1095.4" cy="601.3" r="1.85"/><circle cx="1087.2" cy="606.3" r="1.85"/><circle cx="1010.4" cy="603.4" r="1.85"/><circle cx="995.6" cy="598.5" r="1.85"/><circle cx="1073.7" cy="606.5" r="1.85"/><circle cx="1133.8" cy="596.0" r="1.85"/><circle cx="1039.9" cy="599.0" r="1.85"/><circle cx="996.8" cy="602.2" r="1.85"/><circle cx="1033.3" cy="606.7" r="1.85"/><circle cx="993.1" cy="600.7" r="1.85"/><circle cx="1051.9" cy="603.1" r="1.85"/><circle cx="986.7" cy="601.5" r="1.85"/><circle cx="1163.4" cy="588.3" r="1.85"/><circle cx="1046.7" cy="604.2" r="1.85"/><circle cx="1147.7" cy="592.6" r="1.85"/><circle cx="1086.1" cy="602.6" r="1.85"/><circle cx="1155.6" cy="572.1" r="1.85"/><circle cx="1200.4" cy="563.3" r="1.85"/><circle cx="1201.7" cy="564.9" r="1.85"/><circle cx="1146.8" cy="578.6" r="1.85"/><circle cx="1181.5" cy="567.0" r="1.85"/><circle cx="1156.1" cy="578.6" r="1.85"/><circle cx="1182.9" cy="573.6" r="1.85"/><circle cx="1187.6" cy="565.2" r="1.85"/><circle cx="1143.4" cy="578.9" r="1.85"/><circle cx="1207.0" cy="563.7" r="1.85"/><circle cx="1201.4" cy="556.6" r="1.85"/><circle cx="1200.6" cy="566.9" r="1.85"/><circle cx="1194.8" cy="567.2" r="1.85"/><circle cx="1197.3" cy="557.5" r="1.85"/><circle cx="1192.6" cy="564.1" r="1.85"/><circle cx="1197.4" cy="563.6" r="1.85"/><circle cx="1183.5" cy="565.8" r="1.85"/><circle cx="1173.4" cy="575.3" r="1.85"/><circle cx="1131.8" cy="582.3" r="1.85"/><circle cx="1121.2" cy="576.5" r="1.85"/><circle cx="1167.0" cy="570.5" r="1.85"/><circle cx="1133.3" cy="578.2" r="1.85"/><circle cx="1112.8" cy="580.1" r="1.85"/><circle cx="1188.8" cy="570.3" r="1.85"/><circle cx="1202.5" cy="556.5" r="1.85"/><circle cx="1186.0" cy="565.1" r="1.85"/><circle cx="1162.1" cy="571.5" r="1.85"/><circle cx="1198.3" cy="558.1" r="1.85"/><circle cx="1187.8" cy="565.4" r="1.85"/><circle cx="1205.9" cy="560.8" r="1.85"/><circle cx="1193.1" cy="561.9" r="1.85"/><circle cx="1171.0" cy="572.3" r="1.85"/><circle cx="1191.6" cy="561.3" r="1.85"/><circle cx="1210.8" cy="557.8" r="1.85"/><circle cx="1129.2" cy="578.0" r="1.85"/><circle cx="1030.5" cy="643.2" r="1.85"/><circle cx="1050.8" cy="645.6" r="1.85"/></g>
</svg>

<!-- bottom controls -->
<div class="btn" style="left:155px;top:690px;width:32px;height:32px"></div>
<div class="a" style="left:169px;top:702px;width:0;height:0;border-top:4px solid transparent;border-bottom:4px solid transparent;border-right:4px solid #333"></div>
<div class="btn" style="left:191px;top:690px;width:126px;height:32px"></div>
<div class="t" style="left:204px;top:699px;font-size:14px;color:#222;letter-spacing:0.45px">08/01/2023</div>
<svg class="a" style="left:292px;top:697px" width="16" height="16" viewBox="0 0 16 16" fill="none" stroke="#8a8a8a" stroke-width="1.3"><rect x="1.5" y="3" width="13" height="11.5"/><path d="M1.5 6h13M5 1v3M11 1v3"/><rect x="9.5" y="9.5" width="3" height="3" fill="#8a8a8a"/></svg>
<div class="btn" style="left:321px;top:690px;width:140px;height:32px"></div>
<div class="t" style="left:334px;top:699px;font-size:14px;color:#222;letter-spacing:0.45px">00:09:44</div>
<svg class="a" style="left:437px;top:698px" width="16" height="16" viewBox="0 0 16 16" fill="none" stroke="#8a8a8a" stroke-width="1.3"><circle cx="8" cy="8" r="6.5"/><path d="M8 4v4.5h3"/></svg>

<div class="btn" style="left:609px;top:690px;width:106px;height:32px"></div>
<svg class="a" style="left:618px;top:697px" width="18" height="18" viewBox="0 0 18 18"><path d="M0.5 1V16.5H16" fill="none" stroke="#9a9a9a" stroke-width="1.1"/><g fill="#8a8a8a"><circle cx="3.6" cy="11.7" r="1.35"/><circle cx="6.9" cy="13.5" r="1.35"/><circle cx="5.9" cy="8.4" r="1.35"/><circle cx="8.9" cy="10.5" r="1.35"/><circle cx="9.5" cy="6.9" r="1.35"/><circle cx="12.4" cy="9.9" r="1.35"/><circle cx="11.1" cy="3.6" r="1.35"/><circle cx="13.7" cy="6.7" r="1.35"/><circle cx="14.4" cy="2.5" r="1.35"/></g></svg>
<div class="t" style="left:642px;top:699px;font-size:14px;color:#222">Scatter</div>
<div class="a" style="left:692px;top:702px;width:0;height:0;border-left:5px solid transparent;border-right:5px solid transparent;border-bottom:5px solid #888"></div>
<div class="btn" style="left:720px;top:690px;width:111px;height:32px"></div>
<div class="a" style="left:800px;top:691px;width:1px;height:30px;background:#d9d9d9"></div>
<div class="t" style="left:731px;top:699px;font-size:14px;color:#222">± 8 hours</div>
<svg class="a" style="left:808px;top:697px" width="14" height="16" viewBox="0 0 14 16" fill="none" stroke="#444" stroke-width="1.4"><rect x="2" y="7" width="10" height="8"/><path d="M4 7V4.5a3 3 0 0 1 6 0"/><circle cx="7" cy="11" r="1" fill="#444"/></svg>
<div class="btn" style="left:836px;top:690px;width:32px;height:32px"></div>
<svg class="a" style="left:843px;top:697px" width="17" height="17" viewBox="0 0 17 17" fill="none" stroke="#555" stroke-width="1.4"><path d="M3 8.5a6 6 0 1 0 1.8-4.3"/><path d="M4.5 1.5v3h-3" /><path d="M8.5 5v4l2.5 1.5"/></svg>

<div class="btn" style="left:1016px;top:690px;width:126px;height:32px"></div>
<div class="t" style="left:1029px;top:699px;font-size:14px;color:#222;letter-spacing:0.45px">08/01/2023</div>
<svg class="a" style="left:1117px;top:697px" width="16" height="16" viewBox="0 0 16 16" fill="none" stroke="#8a8a8a" stroke-width="1.3"><rect x="1.5" y="3" width="13" height="11.5"/><path d="M1.5 6h13M5 1v3M11 1v3"/><rect x="9.5" y="9.5" width="3" height="3" fill="#8a8a8a"/></svg>
<div class="btn" style="left:1146px;top:690px;width:140px;height:32px"></div>
<div class="t" style="left:1159px;top:699px;font-size:14px;color:#222;letter-spacing:0.45px">08:05:00</div>
<svg class="a" style="left:1262px;top:698px" width="16" height="16" viewBox="0 0 16 16" fill="none" stroke="#8a8a8a" stroke-width="1.3"><circle cx="8" cy="8" r="6.5"/><path d="M8 4v4.5h3"/></svg>
<div class="btn" style="left:1290px;top:690px;width:32px;height:32px"></div>
<div class="a" style="left:1304px;top:702px;width:0;height:0;border-top:4px solid transparent;border-bottom:4px solid transparent;border-left:4px solid #333"></div>

<!-- timeline -->
<div class="a" style="left:155px;top:729px;width:1166px;height:31px;background:#f2f2f2"></div>
<svg class="a" style="left:0;top:0" width="1380" height="900" viewBox="0 0 1380 900">
<polyline points="155.0,733.8 157.3,756.4 159.1,733.0 161.2,757.7 163.7,735.9 166.6,758.0 169.9,734.8 172.9,758.3 175.7,751.7 178.2,756.0 181.2,736.2 184.4,756.9 187.8,740.7 191.3,757.0 193.5,734.8 195.8,756.5 199.2,735.4 202.6,755.0 204.5,736.0 207.9,756.5 209.9,735.9 212.1,758.3 215.7,733.3 218.1,758.0 221.2,747.4 222.9,756.0 226.3,736.4 229.9,747.2 231.5,733.7 234.4,751.8 236.6,736.4 238.9,756.9 241.8,735.1 244.7,755.2 247.1,735.5 249.3,755.1 252.0,733.0 254.8,758.4 257.7,733.2 260.2,756.1 263.2,738.0 266.2,755.1 268.7,735.1 271.0,757.4 273.8,734.1 276.9,758.4 280.0,734.1 283.2,744.4 286.2,733.4 288.5,755.6 291.8,733.6 294.7,755.4 296.7,733.4 298.7,755.7 300.7,734.0 303.6,755.7 305.4,734.0 307.6,757.3 310.0,734.4 311.9,758.5 315.3,736.5 318.8,755.3 321.9,735.9 324.5,757.5 326.6,733.2 328.7,752.4 331.7,736.2 335.1,749.7 337.1,734.0 339.7,757.1 342.5,734.2 345.9,756.8 348.2,733.7 351.4,757.9 354.8,735.8 356.5,756.3 358.2,733.9 360.8,757.0 364.0,739.2 365.8,758.3 369.1,733.3 371.4,757.4 374.3,735.1 376.2,746.4 379.3,740.0 381.6,756.4 384.0,735.8 386.4,757.2 389.4,734.5 392.0,757.6 395.0,733.3 397.4,755.4 399.8,736.1 401.9,750.8 404.8,736.1 407.7,755.9 409.5,739.4 412.7,738.7 416.1,751.3 417.9,755.5 421.2,736.3 424.4,758.4 427.0,749.7 430.5,758.3 433.2,735.9 435.1,757.6 438.3,734.4 440.6,757.3 442.4,734.8 444.8,748.7 448.0,735.4 450.5,756.2 452.4,733.3 455.8,756.7 458.9,733.7 460.9,756.5 463.0,735.4 465.1,756.0 468.4,735.0 470.5,758.4 472.8,733.6 475.1,753.9 477.7,735.1 480.9,755.6 483.5,735.5 485.9,755.9 488.4,733.8 491.5,756.1 494.8,741.4 496.7,756.0 500.1,733.9 502.4,757.0 504.1,733.3 506.3,757.3 509.3,733.0 511.7,756.8 514.5,736.3 517.2,758.1 520.1,733.4 523.6,758.2 525.9,735.7 528.1,756.1 531.3,733.9 534.8,756.1 536.7,734.7 539.7,756.1 541.7,735.3 543.6,755.4 545.5,742.6 548.5,756.4 551.4,734.6 553.3,758.3 556.5,734.9 558.8,757.6 562.1,733.1 564.2,755.8 566.5,734.4 569.6,757.3 571.4,738.9 574.6,740.2 577.0,735.6 580.1,743.8 582.1,734.8 584.1,757.6 585.8,735.8 589.3,757.2 592.0,735.2 595.0,757.5 597.6,735.1 599.2,755.8 601.8,734.8 603.8,745.5 606.7,734.6 610.2,750.5 613.0,733.2 615.1,758.2 618.5,734.1 621.5,758.0 624.3,736.2 627.4,757.3 630.9,736.0 634.0,737.7 635.8,745.5 638.8,756.6 641.7,734.1 644.8,752.3 647.8,734.3 650.5,756.4 652.1,733.7 654.0,740.6 655.9,737.5 657.7,757.9 659.4,733.1 661.9,743.9 664.2,733.1 666.3,758.2 668.2,735.2 670.1,758.3 672.2,735.8 675.7,757.4 677.8,735.9 680.1,758.2 683.6,737.5 685.4,737.9 688.3,736.2 691.9,756.8 695.3,742.2 698.1,742.0 701.4,733.4 703.7,756.1 705.6,735.6 708.9,756.6 711.2,734.5 714.4,756.8 716.3,735.5 719.4,757.1 721.3,744.9 724.4,741.0 727.7,735.2 731.0,756.9 734.1,734.2 735.8,757.1 737.6,738.4 740.5,739.6 743.4,740.9 747.0,757.7 749.4,735.7 752.6,740.0 754.3,737.4 757.9,757.8 759.6,734.6 762.9,756.3 766.0,736.1 768.8,751.2 771.6,735.9 774.3,756.9 776.0,734.2 777.8,756.6 780.2,735.3 782.3,757.3 784.5,740.7 786.5,755.2 789.8,736.5 793.3,756.6 796.8,736.2 799.3,755.8 802.9,736.2 806.4,749.3 808.6,734.8 810.3,755.9 812.7,734.2 815.8,742.1 818.3,750.0 821.3,755.1 824.6,742.3 827.1,756.7 829.4,736.0 832.0,755.4 834.2,733.8 835.8,758.0 838.5,740.5 841.6,756.9 844.8,740.1 846.4,757.0 848.1,742.3 850.2,755.7 852.3,733.2 855.2,756.1 858.4,749.9 861.6,756.7 864.3,737.3 867.2,755.4 869.7,735.3 872.9,756.4 875.6,748.6 879.1,756.6 881.4,734.6 884.0,742.4 886.6,734.4 889.9,755.2 891.5,735.0 894.1,757.5 897.5,733.4 899.9,756.7 903.4,752.7 905.3,757.2 907.6,733.9 911.1,757.4 913.2,733.5 916.8,758.2 918.8,733.3 921.9,755.6 925.1,733.0 928.6,758.3 931.2,733.9 932.9,757.7 934.8,753.9 937.7,737.9 940.8,751.0 944.2,758.3 946.9,743.6 950.4,739.5 952.3,734.2 954.0,757.8 957.6,736.4 959.9,755.2 963.0,742.9 966.0,755.8 968.6,734.9 971.2,755.6 974.0,736.3 976.0,755.1 977.9,733.9 979.6,755.1 983.0,751.8 986.2,755.0 988.8,746.2 991.3,758.0 993.5,734.8 995.8,757.2 999.3,736.3 1002.6,757.5 1004.8,733.4 1007.8,757.3 1010.0,736.4 1012.5,756.6 1016.1,734.8 1018.9,758.3 1022.2,751.5 1024.6,755.1 1026.6,734.9 1029.1,755.5 1031.4,734.1 1033.8,757.2 1037.2,740.7 1039.5,738.4 1041.8,746.2 1045.2,756.6 1048.5,735.9 1050.9,752.0 1053.3,734.7 1055.5,757.8 1058.3,743.0 1059.9,741.7 1062.3,734.8 1065.1,756.2 1066.9,736.4 1068.7,757.0 1072.3,745.2 1074.7,755.4 1077.0,734.5 1080.3,757.8 1082.1,752.9 1084.8,740.9 1087.3,736.0 1089.5,755.1 1092.1,733.7 1095.5,758.0 1098.4,734.2 1101.8,755.5 1103.8,733.2 1106.0,757.8 1108.0,735.9 1109.9,755.3 1111.9,745.5 1114.3,755.5 1116.0,734.4 1117.9,757.6 1120.9,740.7 1123.4,756.5 1126.4,733.8 1129.2,757.9 1131.6,734.9 1134.5,750.4 1137.8,734.7 1139.9,755.4 1142.0,735.9 1144.3,755.0 1146.2,735.5 1149.3,746.0 1152.6,734.7 1155.9,756.9 1158.7,735.9 1160.5,755.8 1162.7,736.1 1165.4,755.0 1168.5,748.5 1171.5,757.3 1174.3,733.9 1177.0,746.4 1179.2,743.7 1181.2,757.1 1183.0,733.2 1185.0,738.7 1187.7,736.2 1190.3,741.7 1192.6,753.1 1195.1,757.0 1198.7,733.7 1201.3,757.8 1204.8,735.8 1208.3,758.2 1211.4,733.8 1214.9,757.4 1216.8,735.3 1219.5,757.2 1222.5,734.8 1225.0,755.7 1227.7,735.0 1229.4,757.9 1231.4,735.7 1234.9,755.5 1237.3,733.2 1240.3,755.3 1242.3,736.4 1244.8,746.2 1247.8,739.3 1250.6,737.1 1252.4,735.7 1254.9,755.0 1257.0,741.8 1260.0,745.8 1262.3,750.6 1264.7,755.7 1267.6,734.1 1270.1,755.7 1272.1,742.4 1274.9,756.6 1277.1,742.8 1279.1,756.5 1282.2,735.1 1285.3,756.7 1287.5,733.2 1290.1,758.2 1292.8,735.2 1294.7,743.2 1298.3,733.4 1300.9,757.6 1303.3,733.0 1304.9,756.0 1308.3,733.2 1310.5,756.8 1312.7,733.5 1314.5,753.4 1316.5,733.3 1319.1,755.8" fill="none" stroke="#4a55a8" stroke-width="1.1" stroke-opacity="0.9"/><polyline points="155.0,733.5 158.1,757.6 160.6,735.3 162.4,758.4 164.9,744.6 167.9,757.7 171.3,746.2 174.8,757.2 177.2,733.1 179.7,756.8 181.8,733.8 184.0,758.4 186.7,753.9 190.0,758.1 193.0,735.5 195.5,755.6 197.7,735.1 201.0,756.7 202.7,733.8 205.1,757.9 208.1,735.4 210.6,756.7 213.2,734.4 214.9,758.3 218.4,735.1 220.4,756.7 223.5,734.9 225.6,756.7 228.3,734.6 231.0,750.3 234.3,736.1 237.5,756.7 239.9,733.2 242.7,757.8 245.3,734.2 247.9,756.3 250.4,733.1 252.4,756.5 255.6,735.8 257.7,755.6 259.5,749.8 261.6,758.1 263.9,746.0 265.8,757.5 268.3,734.1 270.0,757.1 271.9,733.4 274.6,757.8 277.8,739.5 280.8,757.9 283.8,734.9 287.3,755.7 289.4,735.3 292.1,757.4 293.8,734.0 297.2,757.4 299.4,736.3 301.9,751.9 303.5,735.9 306.3,757.9 309.8,735.5 312.2,757.3 315.1,738.8 318.1,757.5 320.3,736.1 321.9,757.8 325.5,735.7 327.5,756.1 331.0,734.2 334.0,756.8 336.0,739.9 339.5,757.8 342.3,735.9 344.5,757.5 347.4,736.3 349.2,737.7 351.0,736.0 354.2,757.3 357.4,734.3 359.4,758.2 362.8,735.0 365.3,757.5 368.6,733.0 370.4,758.1 372.1,733.8 374.5,741.1 377.6,733.4 379.9,755.1 382.1,733.9 383.9,737.2 387.5,734.0 390.0,752.5 393.5,740.7 396.4,755.1 399.3,735.3 402.0,757.4 403.8,734.0 406.3,756.2 409.8,734.4 412.0,757.4 415.4,734.1 418.1,756.5 420.2,733.1 421.9,738.3 424.8,734.0 427.4,745.5 430.6,733.3 432.5,755.8 435.8,745.7 439.2,757.5 441.1,742.4 444.5,755.7 447.8,735.6 449.7,749.2 452.7,753.4 455.9,756.6 459.2,734.6 461.5,748.0 463.9,743.0 465.8,758.1 469.0,734.4 471.9,746.0 474.5,735.3 477.4,755.9 480.0,734.7 482.5,756.5 485.9,734.0 487.6,758.2 490.9,733.6 494.3,757.4 497.6,734.3 500.7,756.4 504.1,736.4 506.0,757.6 508.8,748.6 511.8,757.3 513.7,753.7 516.9,756.3 520.4,750.2 523.7,756.2 526.1,736.2 528.5,755.7 530.4,752.5 534.0,758.1 536.4,733.4 538.5,740.2 540.9,733.1 543.8,755.6 545.9,734.9 548.7,757.6 551.9,735.8 554.6,756.8 557.7,735.0 559.9,758.1 561.7,735.6 565.2,755.8 567.1,734.8 569.3,756.7 572.0,733.0 574.5,757.4 577.7,735.4 580.6,757.2 582.2,734.0 585.5,755.6 589.1,734.6 591.5,755.9 593.7,733.6 596.4,743.6 598.8,734.4 601.6,755.9 604.7,734.7 607.6,756.2 610.0,735.2 613.5,755.8 616.6,735.9 618.9,757.6 622.3,751.2 624.8,745.7 627.9,734.5 630.8,758.4 634.3,735.4 637.3,756.4 639.3,736.1 641.1,755.6 643.4,734.8 645.3,756.2 648.6,733.9 650.6,750.4 654.0,734.2 657.5,756.0 659.2,736.1 661.4,757.0 664.6,733.7 666.5,755.1 669.9,735.5 672.0,739.3 675.1,734.3 677.2,756.0 679.4,733.4 682.0,737.9 684.7,736.1 686.4,756.0 689.9,735.1 693.2,758.1 695.0,734.4 697.4,757.9 700.6,734.6 702.6,756.0 705.4,736.2 707.1,755.7 709.3,734.3 712.8,757.1 715.9,733.5 717.5,758.0 719.2,744.9 722.5,738.0 725.8,733.1 727.6,747.8 730.7,735.4 733.7,757.1 737.2,735.2 738.9,755.2 741.2,735.1 743.9,758.3 746.3,733.7 748.7,756.2 751.8,735.5 753.9,752.6 757.2,738.6 760.5,756.9 764.0,733.1 766.5,758.1 769.5,745.9 771.3,737.6 773.7,735.6 775.5,755.7 778.9,734.1 780.9,756.5 783.2,735.7 786.0,758.1 788.5,736.5 791.8,756.0 795.2,735.9 797.1,757.2 798.9,734.2 800.5,755.6 802.8,734.0 805.0,755.9 807.7,733.5 809.9,753.6 812.5,736.2 816.0,755.6 819.5,745.9 822.2,755.0 825.2,735.6 828.7,756.2 831.2,736.4 833.2,758.0 835.9,744.0 839.0,746.3 841.1,733.4 844.0,738.2 847.3,751.7 848.9,757.2 851.9,734.0 854.7,755.5 857.2,735.4 860.7,755.7 863.9,736.5 865.9,755.9 868.5,734.7 871.9,755.7 873.6,736.0 875.5,757.5 877.2,733.4 880.5,755.9 883.2,735.0 885.9,756.6 889.4,734.4 891.6,757.4 894.4,734.9 896.3,756.3 899.4,735.0 901.8,755.2 904.7,736.1 908.0,757.2 911.2,734.3 913.7,757.3 915.6,734.2 917.2,757.9 920.5,735.1 924.1,757.6 927.2,735.4 930.4,756.8 932.9,736.4 934.7,758.0 936.8,733.1 939.3,755.2 942.4,747.4 946.0,756.6 948.3,736.3 950.1,756.6 953.0,733.4 955.2,756.8 958.5,735.8 960.3,757.1 962.5,734.8 964.3,743.6 967.7,733.7 970.1,755.4 972.3,734.7 975.0,757.7 977.3,753.8 980.2,755.3 982.3,734.9 985.4,755.6 987.6,735.5 989.5,757.8 992.3,736.4 995.1,758.0 997.2,735.4 999.3,757.2 1001.5,752.0 1004.5,742.5 1007.5,735.3 1010.9,757.4 1013.2,741.4 1014.9,756.6 1017.7,735.4 1019.7,756.5 1022.1,742.2 1024.9,758.2 1027.9,736.4 1030.7,742.6 1032.6,733.9 1035.5,749.3 1037.3,734.1 1039.0,743.8 1042.5,735.2 1045.5,757.5 1047.7,736.3 1050.9,756.3 1053.7,736.0 1056.7,756.3 1059.4,734.9 1062.8,756.3 1064.5,740.7 1067.0,756.6 1069.1,734.9 1071.5,758.1 1074.4,734.9 1077.7,756.0 1079.4,734.1 1081.3,751.9 1083.3,735.9 1085.6,751.4 1088.0,747.2 1090.1,756.2 1092.9,733.0 1096.4,756.2 1099.1,736.1 1102.2,756.4 1105.7,734.4 1107.4,749.0 1109.0,739.4 1111.6,757.3 1115.2,736.2 1118.4,755.6 1121.6,733.8 1123.9,757.9 1127.4,734.1 1129.7,756.2 1132.8,733.2 1135.2,757.5 1137.6,735.4 1140.3,758.3 1143.7,733.6 1146.2,757.3 1149.8,733.1 1152.2,749.2 1154.0,734.2 1156.9,755.8 1159.4,734.7 1162.5,757.8 1165.1,735.0 1168.4,758.0 1170.2,740.1 1173.4,756.2 1175.5,733.5 1178.8,743.7 1181.7,735.6 1184.3,750.7 1187.9,736.2 1190.2,757.7 1193.7,747.0 1196.3,757.0 1199.8,735.5 1202.7,756.2 1204.8,747.9 1207.2,756.5 1209.8,736.4 1211.4,755.2 1213.5,734.5 1217.1,756.0 1219.8,734.6 1222.2,757.9 1224.6,733.7 1226.9,758.0 1230.2,735.7 1233.3,741.3 1235.6,734.0 1237.5,758.0 1239.5,735.8 1241.5,757.0 1244.2,734.9 1246.2,750.4 1247.9,735.6 1250.9,746.2 1252.6,733.8 1254.8,756.2 1257.1,735.9 1260.1,757.3 1261.9,735.9 1264.4,757.5 1267.2,735.2 1269.3,758.3 1271.6,735.8 1274.4,758.1 1277.3,733.9 1279.9,758.1 1282.9,735.9 1286.4,758.0 1288.5,740.4 1291.6,757.2 1294.4,733.9 1297.4,755.3 1300.7,736.4 1303.1,751.1 1305.0,735.0 1306.7,757.7 1309.4,736.2 1311.1,744.2 1313.6,736.3 1315.6,756.7 1317.6,734.3" fill="none" stroke="#b8403f" stroke-width="1.1" stroke-opacity="0.9"/><polyline points="155.0,755.2 156.7,733.3 159.8,756.2 162.6,735.1 164.5,757.0 167.6,736.5 170.2,756.9 171.9,733.1 174.2,757.2 176.8,735.0 178.5,745.7 182.1,752.2 185.2,755.9 188.4,735.8 191.9,749.8 195.0,734.6 197.5,755.3 200.8,734.2 204.2,756.9 207.6,735.5 209.7,757.4 211.6,736.2 215.0,757.4 218.1,734.8 221.0,756.4 223.0,734.8 225.8,758.2 228.9,749.7 230.6,756.2 232.6,745.9 236.0,757.6 239.3,734.5 241.0,748.4 242.7,749.4 244.4,757.6 246.3,733.6 248.7,758.3 250.6,733.1 253.4,742.7 255.1,734.6 258.1,755.3 261.5,735.5 263.5,756.2 265.3,734.6 267.2,756.5 269.8,733.5 271.9,756.4 273.6,738.0 275.2,747.8 277.9,736.4 281.4,757.7 283.5,735.1 286.7,756.0 289.2,737.6 291.6,758.1 293.7,740.9 295.7,756.7 297.9,735.2 301.4,755.1 303.8,734.8 305.5,757.0 307.5,733.3 309.8,756.7 312.6,734.0 315.0,758.4 316.8,734.1 319.7,758.4 322.2,734.7 324.9,758.2 327.3,749.8 329.3,756.5 331.8,735.6 333.6,751.5 336.5,736.4 338.2,756.2 341.2,734.7 343.7,755.7 346.4,734.7 349.6,755.2 351.8,733.8 353.9,757.0 357.3,735.1 359.1,757.3 361.0,738.5 364.4,755.0 366.3,734.0 369.2,756.1 371.9,733.4 375.4,745.8 378.4,733.9 380.9,756.0 384.5,735.7 386.4,747.1 389.8,733.6 392.3,757.1 395.8,735.5 399.3,757.3 402.2,735.7 404.3,756.3 407.2,736.4 408.8,756.9 412.2,735.3 413.8,755.2 416.7,736.2 418.5,755.6 420.5,735.6 422.4,747.4 424.9,733.9 427.4,757.8 429.2,733.0 432.5,756.2 435.0,735.4 437.2,738.4 440.3,733.6 443.4,757.1 446.6,739.8 449.0,756.9 450.6,735.0 452.9,756.6 455.4,736.0 458.3,756.8 461.7,733.3 464.0,756.2 466.9,734.4 468.6,756.3 471.3,736.0 474.2,757.4 476.7,733.8 480.2,758.1 482.6,734.3 484.3,744.5 486.5,736.1 489.0,756.3 491.2,733.3 493.2,756.1 495.5,735.8 498.7,756.3 502.0,734.2 505.4,756.7 508.9,735.6 512.3,755.2 515.8,734.0 518.8,757.2 520.7,736.4 523.3,753.3 525.1,733.1 527.4,755.3 530.6,734.5 532.6,755.6 534.8,742.4 538.3,740.5 540.4,734.5 542.7,757.6 545.5,734.2 548.6,751.5 551.1,745.9 554.4,757.3 557.2,734.4 559.6,756.8 561.8,735.9 564.6,756.6 568.2,735.9 570.6,738.8 574.2,733.4 577.1,742.2 580.3,743.0 582.3,758.0 584.1,736.4 585.8,755.4 588.3,745.5 590.0,757.8 593.3,734.8 596.6,758.0 598.5,740.6 600.2,757.7 603.0,736.0 606.1,756.7 608.0,733.4 610.9,757.8 613.1,734.5 615.5,755.7 618.2,734.7 621.3,755.0 624.3,735.4 626.0,756.6 628.0,735.0 630.8,755.9 633.4,733.2 636.6,755.6 638.3,747.8 641.0,757.8 644.5,736.1 646.7,757.8 649.7,734.0 652.5,757.1 655.5,734.6 657.3,756.0 660.8,733.8 663.4,757.1 666.9,733.7 669.9,755.7 672.4,734.2 674.5,757.8 676.5,734.6 678.7,757.9 682.0,733.8 684.9,755.4 687.1,733.7 689.3,758.5 691.3,734.1 693.5,756.0 695.9,734.5 697.6,739.6 700.4,747.0 703.8,756.2 707.0,742.1 710.5,755.3 713.5,736.1 716.6,756.7 718.6,733.2 720.5,756.3 722.9,736.4 725.5,757.2 727.5,734.9 729.3,755.2 731.0,735.5 733.6,758.1 736.3,735.7 739.3,755.9 740.9,739.4 743.2,756.6 746.1,746.5 747.9,756.2 749.7,734.1 752.3,755.2 754.6,736.2 756.4,755.8 759.9,735.2 763.3,756.7 764.9,734.2 766.5,756.1 769.6,746.2 772.4,757.0 775.6,747.1 779.1,755.6 781.3,741.2 784.5,755.4 787.9,733.4 789.6,737.1 792.0,734.8 794.9,758.3 797.6,734.4 799.4,757.0 801.8,736.4 804.4,757.0 807.9,735.8 809.8,743.0 811.5,735.5 814.4,756.5 816.8,734.6 819.0,757.7 822.5,735.9 824.1,757.4 827.7,734.9 830.7,757.6 833.0,736.0 835.9,756.6 838.4,736.3 840.9,756.7 844.0,735.3 845.8,756.4 848.3,736.4 850.7,756.3 853.7,734.3 856.0,758.0 858.9,734.4 862.5,755.7 865.9,735.0 868.8,755.8 871.7,735.3 873.4,753.0 875.7,735.1 877.7,755.6 879.4,735.1 882.9,737.3 884.5,734.7 886.2,757.3 889.6,736.4 892.5,756.5 895.3,733.6 898.6,756.5 901.1,734.0 903.9,757.7 907.4,733.6 910.7,756.0 913.4,733.8 916.2,743.9 918.8,740.4 921.8,755.3 924.6,740.6 927.6,750.2 929.6,733.6 932.9,758.5 935.1,735.0 936.9,750.7 940.3,734.6 942.0,758.0 943.8,735.8 947.0,752.1 949.0,747.0 951.5,742.7 954.7,733.5 957.5,756.3 960.4,752.7 962.0,750.2 964.7,736.2 968.2,756.4 971.7,746.4 973.3,758.4 976.4,736.0 978.2,755.9 981.2,734.7 982.9,756.3 984.7,735.9 987.0,742.1 989.8,736.1 991.6,755.2 994.7,733.8 996.5,757.8 998.9,735.3 1001.2,755.3 1003.5,733.6 1006.4,758.3 1008.7,734.5 1010.8,757.6 1014.2,733.3 1017.2,757.9 1020.1,735.5 1022.3,756.7 1024.8,740.9 1027.1,757.1 1030.2,733.9 1032.5,753.3 1035.9,739.6 1037.8,757.4 1039.4,734.5 1042.6,750.5 1045.0,741.6 1047.1,757.6 1049.8,735.8 1052.2,756.8 1055.3,750.7 1057.5,756.5 1060.3,737.1 1063.7,755.4 1065.5,735.9 1068.0,740.7 1071.3,735.6 1073.7,755.1 1076.4,738.2 1079.6,758.0 1082.7,735.4 1085.8,758.4 1089.2,734.9 1092.8,756.0 1096.2,736.3 1099.5,756.7 1101.6,747.5 1104.0,750.3 1106.0,734.1 1109.5,756.2 1111.5,733.2 1115.0,756.9 1118.4,733.2 1120.8,757.7 1123.8,733.5 1126.0,750.4 1128.4,735.9 1131.2,758.4 1134.7,735.3 1137.3,755.2 1140.1,737.1 1142.1,756.0 1145.3,737.5 1147.4,758.4 1150.8,748.3 1153.8,756.2 1155.9,736.1 1158.9,741.7 1161.0,733.8 1163.9,752.3 1165.5,736.3 1168.4,757.5 1171.7,750.4 1173.8,758.1 1175.8,733.7 1177.6,755.6 1180.5,734.0 1184.0,742.3 1185.8,734.7 1188.6,757.3 1191.5,736.5 1194.4,758.2 1197.2,733.8 1199.1,756.9 1201.7,743.4 1204.6,757.0 1206.8,747.0 1209.4,752.5 1211.1,733.4 1214.3,755.2 1216.3,738.9 1218.1,756.5 1220.9,736.3 1224.0,757.9 1227.5,749.1 1230.1,756.6 1233.3,735.8 1235.5,748.6 1237.1,748.1 1240.7,756.9 1243.5,735.9 1246.7,752.2 1248.9,735.7 1250.8,757.8 1254.1,736.0 1256.2,756.3 1258.6,735.1 1261.9,757.0 1264.8,734.1 1267.3,757.0 1270.3,735.5 1273.5,757.1 1276.8,733.2 1279.5,741.9 1282.6,736.1 1285.7,755.4 1287.6,735.4 1290.7,757.5 1293.1,734.5 1296.0,758.0 1297.8,733.7 1301.2,757.6 1303.1,734.7 1304.9,757.0 1308.2,733.4 1309.8,757.8 1313.1,736.3 1315.6,756.7 1319.1,743.9" fill="none" stroke="#45a03a" stroke-width="1.1" stroke-opacity="0.9"/>
<rect x="338.5" y="729.5" width="10" height="43" rx="3.5" fill="#fff" fill-opacity="0.35" stroke="#333" stroke-width="1.2"/>
<rect x="340.5" y="731" width="2.8" height="26" fill="#111"/><rect x="344.2" y="731" width="2.8" height="26" fill="#111"/>
<path d="M341.5 764v4M344.5 764v4" stroke="#333" stroke-width="1"/>
<path d="M155.5 778V773.5H1320.5V778" fill="none" stroke="#666" stroke-width="1.5"/>
<g stroke="#666" stroke-width="1.2"><path d="M338.5 773v4M538.5 773v4M737.5 773v4M936.5 773v4M1135.5 773v4"/></g>
<g font-family='"Liberation Sans",sans-serif' font-size="9.5" fill="#333" text-anchor="middle"><text x="338" y="788">8 Jan</text><text x="538" y="788">15 Jan</text><text x="737" y="788">22 Jan</text><text x="936" y="788">29 Jan</text><text x="1135" y="788">5 Feb</text></g>
</svg>

<div class="btn" style="left:155px;top:797px;width:244px;height:26px"></div>
<div class="a" style="left:188px;top:798px;width:1px;height:24px;background:#d9d9d9"></div>
<div class="a" style="left:224px;top:798px;width:1px;height:24px;background:#d9d9d9"></div>
<div class="a" style="left:259px;top:798px;width:1px;height:24px;background:#d9d9d9"></div>
<div class="a" style="left:294px;top:798px;width:1px;height:24px;background:#d9d9d9"></div>
<div class="a" style="left:329px;top:798px;width:1px;height:24px;background:#d9d9d9"></div>
<div class="a" style="left:362px;top:798px;width:1px;height:24px;background:#d9d9d9"></div>
<div class="t" style="left:164px;top:804px;font-size:12.5px;color:#222">1D</div>
<div class="t" style="left:197px;top:804px;font-size:12.5px;color:#222">1W</div>
<div class="t" style="left:233px;top:804px;font-size:12.5px;color:#222">1M</div>
<div class="t" style="left:268px;top:804px;font-size:12.5px;color:#222">3M</div>
<div class="t" style="left:303px;top:804px;font-size:12.5px;color:#222">6M</div>
<div class="t" style="left:337px;top:804px;font-size:12.5px;color:#222">1Y</div>
<div class="t" style="left:370px;top:804px;font-size:12.5px;color:#222">ALL</div>
<div class="btn" style="left:415px;top:797px;width:105px;height:26px"></div>
<div class="a" style="left:416px;top:798px;width:80px;height:24px;background:#eef4fb;border-right:1px solid #d9d9d9"></div>
<div class="t" style="left:424px;top:804px;font-size:12px;color:#1c5bb8">CUSTOM</div>
<div class="a" style="left:481px;top:807px;width:0;height:0;border-left:4px solid transparent;border-right:4px solid transparent;border-bottom:4px solid #aaa"></div>
<svg class="a" style="left:500px;top:803px" width="13" height="13" viewBox="0 0 13 13" fill="none" stroke="#666" stroke-width="1.2"><rect x="1" y="1.5" width="11" height="10"/><path d="M3 5v-1.5h2M10 5v-1.5H8M3 8v1.5h2M10 8v1.5H8"/></svg>

<!-- annotation: gradient -->
<div class="abox" style="left:315px;top:283px;width:307px;height:31px"></div>
<div class="t pur" style="left:315px;top:291px;width:307px;text-align:center;font-size:15px">Gradient or Condition selector</div>
<div class="abox" style="left:258px;top:503px;width:374px;height:31px"></div>
<div class="t pur" style="left:258px;top:511px;width:374px;text-align:center;font-size:15px">Easily change sequence of condition check</div>

<!-- color panel -->
<div class="a" style="left:802px;top:181px;width:472px;height:377px;background:#fff;border:1px solid #e2e2e2;border-radius:3px;box-shadow:0 3px 10px rgba(0,0,0,.12)"></div>
<div class="a" style="left:1244px;top:175px;width:12px;height:12px;background:#fff;border-left:1px solid #e2e2e2;border-top:1px solid #e2e2e2;transform:rotate(45deg)"></div>
<div class="t" style="left:819px;top:205px;font-size:14px;color:#222">Color by</div>
<div class="sel" style="left:1022px;top:197px;width:235px;height:33px"></div>
<div class="t" style="left:1034px;top:205px;font-size:14px;color:#222">Tag</div>
<div class="car" style="left:1236px;top:210px;border-left-width:4px;border-right-width:4px"></div>
<div class="t" style="left:819px;top:253px;font-size:14px;color:#222">Tag name</div>
<div class="sel" style="left:1022px;top:245px;width:235px;height:33px"></div>
<div class="t" style="left:1034px;top:253px;font-size:14px;color:#222">TM4-BP2-CONC.1</div>
<div class="car" style="left:1236px;top:258px;border-left-width:4px;border-right-width:4px"></div>
<div class="t" style="left:819px;top:301px;font-size:14px;color:#222">Coloring</div>
<div class="sel" style="left:1022px;top:293px;width:235px;height:33px"></div>
<div class="t" style="left:1034px;top:301px;font-size:14px;color:#222">Conditions</div>
<div class="car" style="left:1236px;top:306px;border-left-width:4px;border-right-width:4px"></div>
<div class="a" style="left:803px;top:341px;width:470px;height:1px;background:#e2e2e2"></div>

<div class="sel" style="left:843px;top:358px;width:354px;height:32px;background:#f8f8f8;border-color:#e6e6e6"></div>
<div class="t" style="left:856px;top:366px;font-size:14px;color:#7a7a7a">Unconditioned</div>
<div class="car" style="left:1176px;top:371px;border-left-width:4px;border-right-width:4px;border-top-color:#d0d0d0"></div>
<div class="sel" style="left:1201px;top:358px;width:31px;height:32px"></div>
<div class="a" style="left:1207px;top:364px;width:20px;height:20px;border-radius:50%;background:#1f1f1f"></div>

<div class="t" style="left:820px;top:406px;font-size:14px;color:#aaa">═</div>
<div class="sel" style="left:843px;top:398px;width:175px;height:32px"></div>
<div class="t" style="left:856px;top:406px;font-size:14px;color:#222">Greater than</div>
<div class="car" style="left:997px;top:411px;border-left-width:4px;border-right-width:4px"></div>
<div class="sel" style="left:1022px;top:398px;width:175px;height:32px"></div>
<div class="t" style="left:1034px;top:407px;font-size:14px;color:#222">30</div>
<div class="sel" style="left:1201px;top:398px;width:31px;height:32px"></div>
<svg class="a" style="left:1203px;top:403px" width="27" height="20" viewBox="0 0 27 20"><path d="M2.5 17.5c-2 0-2.5-4 0.5-5 .3-2.5 2.5-4 4.8-3.3C8.8 5 11 3 13.5 3s5 2 5.5 5.5c3-1 5.5 1 5.5 3.5 2.3.8 2 5.5-.5 5.5z" fill="#2f8a12"/></svg>
<svg class="a" style="left:1243px;top:408px" width="12" height="12" viewBox="0 0 12 12" stroke="#333" stroke-width="1.4"><path d="M1.5 1.5l9 9M10.5 1.5l-9 9"/></svg>

<div class="t" style="left:820px;top:446px;font-size:14px;color:#aaa">═</div>
<div class="sel" style="left:843px;top:438px;width:175px;height:32px"></div>
<div class="t" style="left:856px;top:446px;font-size:14px;color:#222">Greater than</div>
<div class="car" style="left:997px;top:451px;border-left-width:4px;border-right-width:4px"></div>
<div class="sel" style="left:1022px;top:438px;width:175px;height:32px"></div>
<div class="t" style="left:1034px;top:447px;font-size:14px;color:#222">20</div>
<div class="sel" style="left:1201px;top:438px;width:31px;height:32px"></div>
<div class="a" style="left:1206px;top:443px;width:22px;height:22px;border-radius:50%;background:#f70cf0"></div>
<svg class="a" style="left:1243px;top:448px" width="12" height="12" viewBox="0 0 12 12" stroke="#333" stroke-width="1.4"><path d="M1.5 1.5l9 9M10.5 1.5l-9 9"/></svg>

<div class="t" style="left:820px;top:486px;font-size:14px;color:#aaa">═</div>
<div class="sel" style="left:843px;top:478px;width:175px;height:32px"></div>
<div class="t" style="left:856px;top:486px;font-size:14px;color:#222">Greater than</div>
<div class="car" style="left:997px;top:491px;border-left-width:4px;border-right-width:4px"></div>
<div class="sel" style="left:1022px;top:478px;width:175px;height:32px"></div>
<div class="t" style="left:1034px;top:487px;font-size:14px;color:#222">10</div>
<div class="sel" style="left:1201px;top:478px;width:31px;height:32px"></div>
<svg class="a" style="left:1205px;top:482px" width="24" height="22" viewBox="0 0 24 22"><path d="M5 2h14l4 6-11 13L1 8z" fill="#f6c27c"/><path d="M1 8h22M8 2l-2.5 6L12 21l6.5-13L16 2M12 2l-3.5 6M12 2l3.5 6" fill="none" stroke="#fff" stroke-width="1.2"/></svg>
<svg class="a" style="left:1243px;top:488px" width="12" height="12" viewBox="0 0 12 12" stroke="#333" stroke-width="1.4"><path d="M1.5 1.5l9 9M10.5 1.5l-9 9"/></svg>

<svg class="a" style="left:820px;top:522px" width="17" height="16" viewBox="0 0 17 16" fill="#1c5bb8"><rect x="1" y="2" width="10" height="1.8"/><rect x="1" y="6" width="10" height="1.8"/><rect x="1" y="10" width="6" height="1.8"/><rect x="11" y="8" width="1.8" height="7"/><rect x="8.5" y="10.6" width="7" height="1.8"/></svg>
<div class="t" style="left:843px;top:523px;font-size:14px;color:#1c5bb8">Add condition</div>

<!-- dashed boxes -->
<svg class="a" style="left:0;top:0" width="1380" height="900" fill="none" stroke="#6c06f2" stroke-width="2" stroke-dasharray="12 4.5">
<rect x="807" y="286" width="461" height="37"/>
<rect x="806" y="390" width="34" height="117"/>
<rect x="1199" y="357" width="34" height="159"/>
</svg>

<!-- select color annotation -->
<div class="abox" style="left:1028px;top:613px;width:241px;height:31px"></div>
<div class="t pur" style="left:1028px;top:621px;width:241px;text-align:center;font-size:15px">Select color and shape</div>

<svg class="a" style="left:0;top:0" width="1380" height="900" viewBox="0 0 1380 900" fill="none" stroke="#6c06f2" stroke-width="2">
<path d="M622 305H805"/><path d="M797 299l8 6-8 6"/>
<path d="M626 506L806 408"/><path d="M796 407l10 1-5 9"/>
<path d="M1198 613L1217 518"/><path d="M1210 526l7-8 4 10"/>
</svg>
</body></html>
